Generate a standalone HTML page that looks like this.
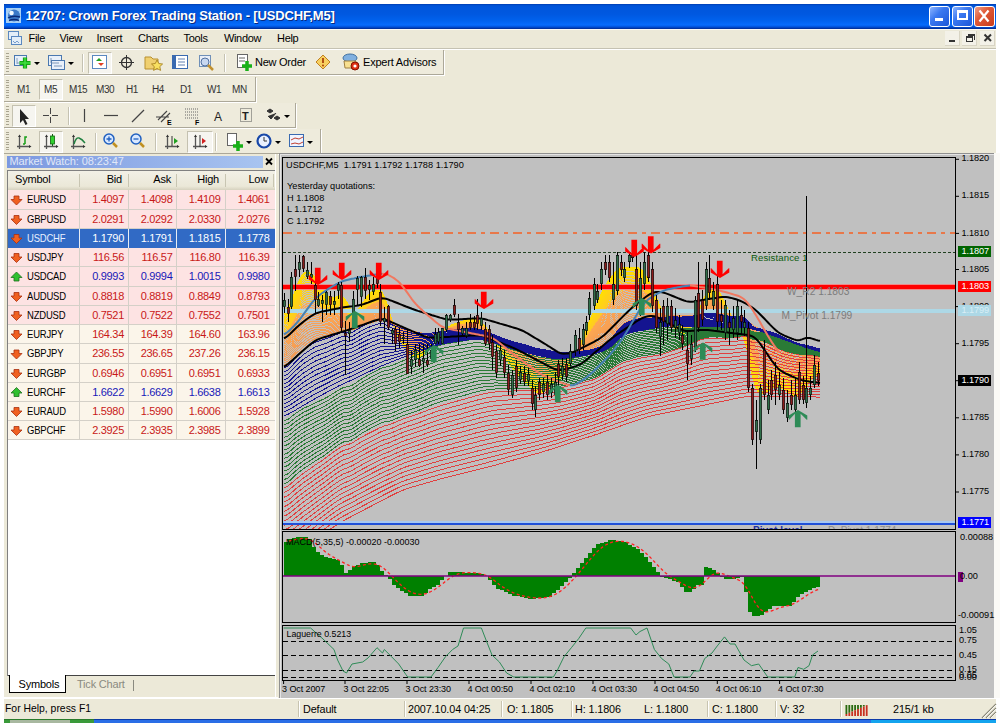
<!DOCTYPE html><html><head><meta charset="utf-8"><style>
*{margin:0;padding:0;box-sizing:border-box}
html,body{width:1000px;height:723px;overflow:hidden;background:#fff;font-family:"Liberation Sans",sans-serif;font-size:11px;color:#000}
.a{position:absolute}
.t{position:absolute;white-space:nowrap;line-height:1;-webkit-font-smoothing:none}
svg{position:absolute;left:0;top:0}
</style></head><body>
<div class="a" style="left:4px;top:4px;width:992px;height:715px;background:#ece9d8"></div>
<div class="a" style="left:4px;top:4px;width:992px;height:25px;background:linear-gradient(to bottom,#0038a8 0px,#0050d0 1px,#0056dc 3px,#0058e0 10px,#0062ee 17px,#066cfc 21px,#0050d8 23px,#00288c 25px)"></div>
<div class="a" style="left:4px;top:29px;width:992px;height:1px;background:#fbfaf4"></div>
<svg width="30" height="30"><rect x="6" y="8" width="15" height="15" fill="#a8d0f4"/><circle cx="14" cy="15.5" r="6" fill="#3a78c8"/><circle cx="11.5" cy="13" r="2.3" fill="#f0f8ff"/><path d="M8,18 q5,-3 12,-1 M9,20.5 q5,-2 10,0" stroke="#0a2a78" stroke-width="1.4" fill="none"/></svg>
<div class="t" style="left:25.5px;top:9.0px;font-size:13px;color:#fff;font-weight:bold;letter-spacing:-0.15px;text-shadow:1px 1px 0 #0a2a80">12707: Crown Forex Trading Station - [USDCHF,M5]</div>
<div class="a" style="left:929px;top:6px;width:21px;height:21px;background:linear-gradient(135deg,#8cb4ff 0%,#3a78f0 40%,#1c56d8 100%);border:1px solid #fff;border-radius:3px"></div>
<div class="a" style="left:952px;top:6px;width:21px;height:21px;background:linear-gradient(135deg,#8cb4ff 0%,#3a78f0 40%,#1c56d8 100%);border:1px solid #fff;border-radius:3px"></div>
<div class="a" style="left:974px;top:6px;width:21px;height:21px;background:linear-gradient(135deg,#f0a088 0%,#e05a38 40%,#c83c1c 100%);border:1px solid #fff;border-radius:3px"></div>
<div class="a" style="left:935px;top:18px;width:8px;height:3px;background:#fff"></div>
<div class="a" style="left:957px;top:10px;width:11px;height:10px;border:2px solid #fff;border-top-width:3px"></div>
<svg width="1000" height="30" style="left:0;top:0"><path d="M979.5,10.5 L988.5,21.5 M988.5,10.5 L979.5,21.5" stroke="#fff" stroke-width="2.2"/></svg>
<div class="a" style="left:4px;top:30px;width:992px;height:18px;background:#ece9d8"></div>
<svg width="30" height="50"><rect x="8.5" y="31.5" width="10" height="8" fill="#e4eef8" stroke="#5a88c0"/><rect x="11.5" y="36.5" width="10" height="8" fill="#e4eef8" stroke="#5a88c0"/><path d="M13,41 l2,2 2,-2 2,2" stroke="#5a88c0" fill="none" stroke-width="0.8"/></svg>
<div class="t" style="left:28.5px;top:32.5px;font-size:11px;color:#000;letter-spacing:-0.3px">File</div>
<div class="t" style="left:59.5px;top:32.5px;font-size:11px;color:#000;letter-spacing:-0.3px">View</div>
<div class="t" style="left:96.5px;top:32.5px;font-size:11px;color:#000;letter-spacing:-0.3px">Insert</div>
<div class="t" style="left:138.1px;top:32.5px;font-size:11px;color:#000;letter-spacing:-0.3px">Charts</div>
<div class="t" style="left:183.5px;top:32.5px;font-size:11px;color:#000;letter-spacing:-0.3px">Tools</div>
<div class="t" style="left:223.9px;top:32.5px;font-size:11px;color:#000;letter-spacing:-0.3px">Window</div>
<div class="t" style="left:277.0px;top:32.5px;font-size:11px;color:#000;letter-spacing:-0.3px">Help</div>
<div class="a" style="left:945px;top:31px;width:15px;height:15px;background:#f3f1e8;border-right:1px solid #d8d4c4;border-bottom:1px solid #d8d4c4"></div>
<div class="a" style="left:962px;top:31px;width:15px;height:15px;background:#f3f1e8;border-right:1px solid #d8d4c4;border-bottom:1px solid #d8d4c4"></div>
<div class="a" style="left:980px;top:31px;width:15px;height:15px;background:#f3f1e8;border-right:1px solid #d8d4c4;border-bottom:1px solid #d8d4c4"></div>
<div class="a" style="left:949px;top:40px;width:6px;height:2px;background:#333"></div>
<div class="a" style="left:966px;top:36px;width:7px;height:6px;border:1px solid #333;border-top-width:2px"></div>
<div class="a" style="left:968px;top:34px;width:7px;height:6px;border:1px solid #333;border-top-width:2px;border-left:none;border-bottom:none"></div>
<svg width="1000" height="50"><path d="M984.5,34.5 L991,41 M991,34.5 L984.5,41" stroke="#333" stroke-width="2"/></svg>
<div class="a" style="left:4px;top:48px;width:992px;height:1px;background:#c5c2b2"></div>
<div class="a" style="left:4px;top:49px;width:992px;height:1px;background:#fff"></div>
<div class="a" style="left:4px;top:50px;width:440px;height:25px;background:#eeebdc;border-right:1px solid #aca899;border-bottom:1px solid #aca899;box-shadow:1px 1px 0 #fff"></div><div class="a" style="left:6px;top:53px;width:3px;height:19px;background:repeating-linear-gradient(to bottom,#a8a490 0 1px,transparent 1px 2.5px)"></div>
<div class="a" style="left:4px;top:77px;width:252px;height:25px;background:#eeebdc;border-right:1px solid #aca899;border-bottom:1px solid #aca899;box-shadow:1px 1px 0 #fff"></div><div class="a" style="left:6px;top:80px;width:3px;height:19px;background:repeating-linear-gradient(to bottom,#a8a490 0 1px,transparent 1px 2.5px)"></div>
<div class="a" style="left:4px;top:103px;width:292px;height:25px;background:#eeebdc;border-right:1px solid #aca899;border-bottom:1px solid #aca899;box-shadow:1px 1px 0 #fff"></div><div class="a" style="left:6px;top:106px;width:3px;height:19px;background:repeating-linear-gradient(to bottom,#a8a490 0 1px,transparent 1px 2.5px)"></div>
<div class="a" style="left:4px;top:129px;width:317px;height:25px;background:#eeebdc;border-right:1px solid #aca899;border-bottom:1px solid #aca899;box-shadow:1px 1px 0 #fff"></div><div class="a" style="left:6px;top:132px;width:3px;height:19px;background:repeating-linear-gradient(to bottom,#a8a490 0 1px,transparent 1px 2.5px)"></div>
<div class="a" style="left:88px;top:52px;width:24px;height:22px;background:#f6f5f0;border:1px solid #c4c1b0;border-right-color:#fff;border-bottom-color:#fff"></div>
<svg width="1000" height="160"><rect x="14.5" y="55.5" width="12" height="10" fill="#e8f0fa" stroke="#4a78b0"/><path d="M17,58 v6 M17,63 h6" stroke="#7090b0" stroke-width="0.8" fill="none"/><path d="M19.5,63 h11 M25,57.5 v11" stroke="#14a814" stroke-width="4.2"/><path d="M20,63 h10 M25,58 v10" stroke="#40e040" stroke-width="1.5"/><path d="M34,62 h6 l-3,3z" fill="#000"/><rect x="48.5" y="55.5" width="13" height="10" fill="#e8f0fa" stroke="#4a78b0"/><rect x="51.5" y="60.5" width="13" height="9" fill="#e8f0fa" stroke="#4a78b0"/><path d="M51,58 v5 h8 M54,66 h8" stroke="#6080a8" stroke-width="0.8" fill="none"/><path d="M68,62 h6 l-3,3z" fill="#000"/><rect x="92.5" y="55.5" width="14" height="13" fill="#fff" stroke="#5a88c0"/><path d="M96,61 l3,-3 l3,3z" fill="#20a020"/><path d="M98,63 l3,3 l3,-3z" fill="#e04020"/><circle cx="126.5" cy="62.5" r="5" fill="none" stroke="#333" stroke-width="1.3"/><path d="M126.5,55 v15 M119,62.5 h15" stroke="#333"/><path d="M145,57 h6 l2,2 h5 v10 h-13z" fill="#f0d070" stroke="#b89030"/><path d="M157,60 l1.8,3.5 3.8,0.5 -2.8,2.6 0.8,3.8 -3.6,-1.9 -3.4,1.9 0.7,-3.8 -2.8,-2.6 3.8,-0.5z" fill="#f8e060" stroke="#a07818" stroke-width="0.8"/><rect x="172.5" y="55.5" width="15" height="13" fill="#fff" stroke="#3a6ab0"/><rect x="173" y="56" width="3" height="12" fill="#3a6ab0"/><path d="M178,59 h7 M178,62 h7 M178,65 h7" stroke="#6080b0"/><rect x="199.5" y="55.5" width="11" height="11" fill="#e8eef8" stroke="#7090b8"/><circle cx="205" cy="62" r="4" fill="#c8d8f0" stroke="#5070a0"/><path d="M208,65 l5,5" stroke="#c09030" stroke-width="2.5"/><rect x="237.5" y="54.5" width="10" height="13" fill="#fff" stroke="#666"/><path d="M239,58 h6 M239,61 h6" stroke="#666"/><path d="M242,66 h10 M247,61 v10" stroke="#18b018" stroke-width="3.5"/><path d="M323,55 l7,7 -7,7 -7,-7z" fill="#f8d060" stroke="#c08020"/><path d="M323,58 v5" stroke="#a03000" stroke-width="1.6"/><circle cx="323" cy="65.5" r="0.9" fill="#a03000"/><ellipse cx="350" cy="58" rx="7" ry="4" fill="#80b0e0" stroke="#4070a0"/><path d="M344,61 h12 l-1,7 h-10z" fill="#f8e090" stroke="#a08040"/><circle cx="355" cy="66" r="4" fill="#e03010" stroke="#801000"/><circle cx="355" cy="66" r="1.6" fill="#fff"/></svg>
<div class="a" style="left:82px;top:54px;width:1px;height:18px;background:#c5c2b2;border-right:1px solid #fff;width:2px"></div>
<div class="a" style="left:224px;top:54px;width:1px;height:18px;background:#c5c2b2;border-right:1px solid #fff;width:2px"></div>
<div class="t" style="left:255px;top:57.0px;font-size:11px;color:#000;letter-spacing:-0.25px">New Order</div>
<div class="t" style="left:363px;top:57.0px;font-size:11px;color:#000;letter-spacing:-0.2px">Expert Advisors</div>
<div class="a" style="left:39px;top:79px;width:24px;height:21px;background:#f6f5f0;border:1px solid #c4c1b0;border-right-color:#fff;border-bottom-color:#fff"></div>
<div class="t" style="left:17px;top:84.5px;font-size:10px;color:#333;letter-spacing:-0.4px">M1</div>
<div class="t" style="left:44px;top:84.5px;font-size:10px;color:#333;letter-spacing:-0.4px">M5</div>
<div class="t" style="left:69px;top:84.5px;font-size:10px;color:#333;letter-spacing:-0.4px">M15</div>
<div class="t" style="left:96px;top:84.5px;font-size:10px;color:#333;letter-spacing:-0.4px">M30</div>
<div class="t" style="left:126px;top:84.5px;font-size:10px;color:#333;letter-spacing:-0.4px">H1</div>
<div class="t" style="left:152px;top:84.5px;font-size:10px;color:#333;letter-spacing:-0.4px">H4</div>
<div class="t" style="left:180px;top:84.5px;font-size:10px;color:#333;letter-spacing:-0.4px">D1</div>
<div class="t" style="left:207px;top:84.5px;font-size:10px;color:#333;letter-spacing:-0.4px">W1</div>
<div class="t" style="left:232px;top:84.5px;font-size:10px;color:#333;letter-spacing:-0.4px">MN</div>
<div class="a" style="left:12px;top:105px;width:24px;height:22px;background:#f6f5f0;border:1px solid #c4c1b0;border-right-color:#fff;border-bottom-color:#fff"></div>
<svg width="1000" height="160"><path d="M20,109 v14 l3,-3 l2.5,5 l2,-1 l-2.5,-5 h4z" fill="#222"/><path d="M50.5,108 v6 M50.5,117 v6 M43,115.5 h6 M52,115.5 h6" stroke="#444"/><path d="M84.5,109 v13" stroke="#444" stroke-width="1.2"/><path d="M104,115.5 h14" stroke="#444" stroke-width="1.2"/><path d="M132,122 l12,-12" stroke="#444" stroke-width="1.2"/><path d="M158,120 l9,-9 M161,122 l9,-9 M156,117 l13,0" stroke="#444" stroke-width="1.1"/><text x="167" y="125" font-size="7" font-family="Liberation Sans" font-weight="bold">E</text><path d="M185,109 h13 M185,112 h13 M185,115 h13 M185,118 h13" stroke="#666" stroke-dasharray="1,1"/><text x="195" y="125" font-size="7" font-family="Liberation Sans" font-weight="bold">F</text><text x="214" y="121" font-size="12" font-family="Liberation Sans" fill="#222">A</text><rect x="240.5" y="108.5" width="11" height="13" fill="none" stroke="#555" stroke-dasharray="1,1"/><text x="242" y="120" font-size="11" font-weight="bold" font-family="Liberation Sans" fill="#222">T</text><path d="M267,111 l3,-2 3,2 -3,2z M274,118 l3,-2 3,2 -3,2z M268,116 l3,3 5,-6" fill="#333" stroke="#333"/><path d="M284,115 h6 l-3,3z" fill="#000"/></svg>
<div class="a" style="left:68px;top:107px;width:1px;height:18px;background:#c5c2b2;border-right:1px solid #fff;width:2px"></div>
<div class="a" style="left:39px;top:131px;width:24px;height:22px;background:#f6f5f0;border:1px solid #c4c1b0;border-right-color:#fff;border-bottom-color:#fff"></div>
<div class="a" style="left:187px;top:131px;width:26px;height:22px;background:#f6f5f0;border:1px solid #c4c1b0;border-right-color:#fff;border-bottom-color:#fff"></div>
<svg width="1000" height="160"><path d="M19.5,136 v13 M17,146.5 h13" stroke="#555" stroke-width="1.3" fill="none"/><path d="M18,137 l1.5,-2.5 1.5,2.5z M29,145 l2.5,1.5 -2.5,1.5z" fill="#333"/><path d="M25,144 v-7 h2 M25,144 h-2" stroke="#18a018" stroke-width="1.5" fill="none"/><path d="M46.5,136 v13 M44,146.5 h13" stroke="#555" stroke-width="1.3" fill="none"/><path d="M45,137 l1.5,-2.5 1.5,2.5z M56,145 l2.5,1.5 -2.5,1.5z" fill="#333"/><path d="M52.5,134 v12" stroke="#106010"/><rect x="50.5" y="136" width="4" height="8" fill="#30d030" stroke="#106010" stroke-width="0.8"/><path d="M73.5,136 v13 M71,146.5 h13" stroke="#555" stroke-width="1.3" fill="none"/><path d="M72,137 l1.5,-2.5 1.5,2.5z M83,145 l2.5,1.5 -2.5,1.5z" fill="#333"/><path d="M74,144 q2,-7 5,-6 q3,1 6,5" stroke="#208040" fill="none" stroke-width="1.4"/><circle cx="109" cy="139" r="5" fill="#d8e8ff" stroke="#2060c0" stroke-width="1.5"/><path d="M106.5,139 h5 M109,136.5 v5" stroke="#2060c0" stroke-width="1.3"/><path d="M113,143 l4,4" stroke="#c09020" stroke-width="2.5"/><circle cx="136" cy="139" r="5" fill="#d8e8ff" stroke="#2060c0" stroke-width="1.5"/><path d="M133.5,139 h5" stroke="#2060c0" stroke-width="1.3"/><path d="M140,143 l4,4" stroke="#c09020" stroke-width="2.5"/><path d="M167.5,136 v13 M165,146.5 h13" stroke="#555" stroke-width="1.3" fill="none"/><path d="M166,137 l1.5,-2.5 1.5,2.5z M177,145 l2.5,1.5 -2.5,1.5z" fill="#333"/><path d="M172,136 v10" stroke="#333"/><path d="M174,138 l4,3 -4,3z" fill="#20a020"/><path d="M195.5,136 v13 M193,146.5 h13" stroke="#555" stroke-width="1.3" fill="none"/><path d="M194,137 l1.5,-2.5 1.5,2.5z M205,145 l2.5,1.5 -2.5,1.5z" fill="#333"/><path d="M200,135 v12" stroke="#333"/><path d="M202,138 l4,3 -4,3z" fill="#d02020"/><rect x="227.5" y="133.5" width="9" height="12" fill="#fff" stroke="#666"/><path d="M233,146 h10 M238,141 v10" stroke="#18b018" stroke-width="3.5"/><path d="M246,141 h6 l-3,3z" fill="#000"/><circle cx="264" cy="141" r="6.5" fill="#e8f0ff" stroke="#1848a8" stroke-width="2.2"/><path d="M264,137 v4 h3" stroke="#333" fill="none"/><path d="M275,141 h6 l-3,3z" fill="#000"/><rect x="289.5" y="134.5" width="14" height="12" fill="#f0f4ff" stroke="#3a6ab0"/><path d="M291,140 l4,-2 4,1 4,-2 M291,144 l4,-1 4,1 4,-2" stroke="#c04030" fill="none"/><path d="M307,141 h6 l-3,3z" fill="#000"/></svg>
<div class="a" style="left:95px;top:133px;width:1px;height:18px;background:#c5c2b2;border-right:1px solid #fff;width:2px"></div>
<div class="a" style="left:155px;top:133px;width:1px;height:18px;background:#c5c2b2;border-right:1px solid #fff;width:2px"></div>
<div class="a" style="left:215px;top:133px;width:1px;height:18px;background:#c5c2b2;border-right:1px solid #fff;width:2px"></div>
<div class="a" style="left:4px;top:154px;width:274px;height:544px;background:#ece9d8"></div>
<div class="a" style="left:7px;top:156px;width:256px;height:12px;background:linear-gradient(to right,#7b98e0,#a8c4f0)"></div>
<div class="t" style="left:9.5px;top:155.8px;font-size:11px;color:#e0e8f8;letter-spacing:-0.1px">Market Watch: 08:23:47</div>
<svg width="300" height="200"><path d="M266,158.5 l6,6 M272,158.5 l-6,6" stroke="#000" stroke-width="1.8"/></svg>
<div class="a" style="left:7px;top:170px;width:269px;height:506px;background:#fff;border-left:1px solid #808080;border-top:1px solid #808080"></div>
<div class="a" style="left:8px;top:171px;width:267px;height:19px;background:linear-gradient(to bottom,#f2f0e6,#ebe8d8 80%,#d6d2bf)"></div>
<div class="a" style="left:79px;top:174px;width:1px;height:13px;background:#c8c5b2"></div>
<div class="a" style="left:128px;top:174px;width:1px;height:13px;background:#c8c5b2"></div>
<div class="a" style="left:176px;top:174px;width:1px;height:13px;background:#c8c5b2"></div>
<div class="a" style="left:225px;top:174px;width:1px;height:13px;background:#c8c5b2"></div>
<div class="a" style="left:273px;top:174px;width:1px;height:13px;background:#c8c5b2"></div>
<div class="t" style="left:15px;top:173.6px;font-size:11px;color:#000;letter-spacing:-0.2px">Symbol</div>
<div class="t" style="left:62px;width:60px;text-align:right;top:173.6px;font-size:11px;letter-spacing:-0.2px">Bid</div>
<div class="t" style="left:111px;width:60px;text-align:right;top:173.6px;font-size:11px;letter-spacing:-0.2px">Ask</div>
<div class="t" style="left:159px;width:60px;text-align:right;top:173.6px;font-size:11px;letter-spacing:-0.2px">High</div>
<div class="t" style="left:208px;width:60px;text-align:right;top:173.6px;font-size:11px;letter-spacing:-0.2px">Low</div>
<div class="a" style="left:8px;top:190px;width:267px;height:20px;background:#fde3e3"></div>
<div class="a" style="left:8px;top:209px;width:267px;height:1px;background:#d4d0c8"></div>
<div class="a" style="left:79px;top:190px;width:1px;height:20px;background:#d4d0c8"></div>
<div class="a" style="left:128px;top:190px;width:1px;height:20px;background:#d4d0c8"></div>
<div class="a" style="left:176px;top:190px;width:1px;height:20px;background:#d4d0c8"></div>
<div class="a" style="left:225px;top:190px;width:1px;height:20px;background:#d4d0c8"></div>
<div class="t" style="left:26.5px;top:193.5px;font-size:11px;color:#000;letter-spacing:-0.2px;transform:scaleX(0.86);transform-origin:0 0">EURUSD</div>
<div class="t" style="left:74px;width:50px;text-align:right;top:193.5px;font-size:11px;color:#c81818;letter-spacing:-0.3px">1.4097</div>
<div class="t" style="left:122.5px;width:50px;text-align:right;top:193.5px;font-size:11px;color:#c81818;letter-spacing:-0.3px">1.4098</div>
<div class="t" style="left:170.5px;width:50px;text-align:right;top:193.5px;font-size:11px;color:#c81818;letter-spacing:-0.3px">1.4109</div>
<div class="t" style="left:219.5px;width:50px;text-align:right;top:193.5px;font-size:11px;color:#c81818;letter-spacing:-0.3px">1.4061</div>
<div class="a" style="left:8px;top:210px;width:267px;height:19px;background:#fde3e3"></div>
<div class="a" style="left:8px;top:228px;width:267px;height:1px;background:#d4d0c8"></div>
<div class="a" style="left:79px;top:210px;width:1px;height:19px;background:#d4d0c8"></div>
<div class="a" style="left:128px;top:210px;width:1px;height:19px;background:#d4d0c8"></div>
<div class="a" style="left:176px;top:210px;width:1px;height:19px;background:#d4d0c8"></div>
<div class="a" style="left:225px;top:210px;width:1px;height:19px;background:#d4d0c8"></div>
<div class="t" style="left:26.5px;top:213.5px;font-size:11px;color:#000;letter-spacing:-0.2px;transform:scaleX(0.86);transform-origin:0 0">GBPUSD</div>
<div class="t" style="left:74px;width:50px;text-align:right;top:213.5px;font-size:11px;color:#c81818;letter-spacing:-0.3px">2.0291</div>
<div class="t" style="left:122.5px;width:50px;text-align:right;top:213.5px;font-size:11px;color:#c81818;letter-spacing:-0.3px">2.0292</div>
<div class="t" style="left:170.5px;width:50px;text-align:right;top:213.5px;font-size:11px;color:#c81818;letter-spacing:-0.3px">2.0330</div>
<div class="t" style="left:219.5px;width:50px;text-align:right;top:213.5px;font-size:11px;color:#c81818;letter-spacing:-0.3px">2.0276</div>
<div class="a" style="left:8px;top:229px;width:267px;height:19px;background:#316ac5"></div>
<div class="a" style="left:79px;top:229px;width:1px;height:19px;background:#e8ecf4"></div>
<div class="a" style="left:128px;top:229px;width:1px;height:19px;background:#e8ecf4"></div>
<div class="a" style="left:176px;top:229px;width:1px;height:19px;background:#e8ecf4"></div>
<div class="a" style="left:225px;top:229px;width:1px;height:19px;background:#e8ecf4"></div>
<div class="t" style="left:26.5px;top:232.5px;font-size:11px;color:#e8f0ff;letter-spacing:-0.2px;transform:scaleX(0.86);transform-origin:0 0">USDCHF</div>
<div class="t" style="left:74px;width:50px;text-align:right;top:232.5px;font-size:11px;color:#fff;letter-spacing:-0.3px">1.1790</div>
<div class="t" style="left:122.5px;width:50px;text-align:right;top:232.5px;font-size:11px;color:#fff;letter-spacing:-0.3px">1.1791</div>
<div class="t" style="left:170.5px;width:50px;text-align:right;top:232.5px;font-size:11px;color:#fff;letter-spacing:-0.3px">1.1815</div>
<div class="t" style="left:219.5px;width:50px;text-align:right;top:232.5px;font-size:11px;color:#fff;letter-spacing:-0.3px">1.1778</div>
<div class="a" style="left:8px;top:248px;width:267px;height:19px;background:#fde3e3"></div>
<div class="a" style="left:8px;top:266px;width:267px;height:1px;background:#d4d0c8"></div>
<div class="a" style="left:79px;top:248px;width:1px;height:19px;background:#d4d0c8"></div>
<div class="a" style="left:128px;top:248px;width:1px;height:19px;background:#d4d0c8"></div>
<div class="a" style="left:176px;top:248px;width:1px;height:19px;background:#d4d0c8"></div>
<div class="a" style="left:225px;top:248px;width:1px;height:19px;background:#d4d0c8"></div>
<div class="t" style="left:26.5px;top:251.5px;font-size:11px;color:#000;letter-spacing:-0.2px;transform:scaleX(0.86);transform-origin:0 0">USDJPY</div>
<div class="t" style="left:74px;width:50px;text-align:right;top:251.5px;font-size:11px;color:#c81818;letter-spacing:-0.3px">116.56</div>
<div class="t" style="left:122.5px;width:50px;text-align:right;top:251.5px;font-size:11px;color:#c81818;letter-spacing:-0.3px">116.57</div>
<div class="t" style="left:170.5px;width:50px;text-align:right;top:251.5px;font-size:11px;color:#c81818;letter-spacing:-0.3px">116.80</div>
<div class="t" style="left:219.5px;width:50px;text-align:right;top:251.5px;font-size:11px;color:#c81818;letter-spacing:-0.3px">116.39</div>
<div class="a" style="left:8px;top:267px;width:267px;height:20px;background:#fde3e3"></div>
<div class="a" style="left:8px;top:286px;width:267px;height:1px;background:#d4d0c8"></div>
<div class="a" style="left:79px;top:267px;width:1px;height:20px;background:#d4d0c8"></div>
<div class="a" style="left:128px;top:267px;width:1px;height:20px;background:#d4d0c8"></div>
<div class="a" style="left:176px;top:267px;width:1px;height:20px;background:#d4d0c8"></div>
<div class="a" style="left:225px;top:267px;width:1px;height:20px;background:#d4d0c8"></div>
<div class="t" style="left:26.5px;top:270.5px;font-size:11px;color:#000;letter-spacing:-0.2px;transform:scaleX(0.86);transform-origin:0 0">USDCAD</div>
<div class="t" style="left:74px;width:50px;text-align:right;top:270.5px;font-size:11px;color:#1818b8;letter-spacing:-0.3px">0.9993</div>
<div class="t" style="left:122.5px;width:50px;text-align:right;top:270.5px;font-size:11px;color:#1818b8;letter-spacing:-0.3px">0.9994</div>
<div class="t" style="left:170.5px;width:50px;text-align:right;top:270.5px;font-size:11px;color:#1818b8;letter-spacing:-0.3px">1.0015</div>
<div class="t" style="left:219.5px;width:50px;text-align:right;top:270.5px;font-size:11px;color:#1818b8;letter-spacing:-0.3px">0.9980</div>
<div class="a" style="left:8px;top:287px;width:267px;height:19px;background:#fde3e3"></div>
<div class="a" style="left:8px;top:305px;width:267px;height:1px;background:#d4d0c8"></div>
<div class="a" style="left:79px;top:287px;width:1px;height:19px;background:#d4d0c8"></div>
<div class="a" style="left:128px;top:287px;width:1px;height:19px;background:#d4d0c8"></div>
<div class="a" style="left:176px;top:287px;width:1px;height:19px;background:#d4d0c8"></div>
<div class="a" style="left:225px;top:287px;width:1px;height:19px;background:#d4d0c8"></div>
<div class="t" style="left:26.5px;top:290.5px;font-size:11px;color:#000;letter-spacing:-0.2px;transform:scaleX(0.86);transform-origin:0 0">AUDUSD</div>
<div class="t" style="left:74px;width:50px;text-align:right;top:290.5px;font-size:11px;color:#c81818;letter-spacing:-0.3px">0.8818</div>
<div class="t" style="left:122.5px;width:50px;text-align:right;top:290.5px;font-size:11px;color:#c81818;letter-spacing:-0.3px">0.8819</div>
<div class="t" style="left:170.5px;width:50px;text-align:right;top:290.5px;font-size:11px;color:#c81818;letter-spacing:-0.3px">0.8849</div>
<div class="t" style="left:219.5px;width:50px;text-align:right;top:290.5px;font-size:11px;color:#c81818;letter-spacing:-0.3px">0.8793</div>
<div class="a" style="left:8px;top:306px;width:267px;height:19px;background:#fde3e3"></div>
<div class="a" style="left:8px;top:324px;width:267px;height:1px;background:#d4d0c8"></div>
<div class="a" style="left:79px;top:306px;width:1px;height:19px;background:#d4d0c8"></div>
<div class="a" style="left:128px;top:306px;width:1px;height:19px;background:#d4d0c8"></div>
<div class="a" style="left:176px;top:306px;width:1px;height:19px;background:#d4d0c8"></div>
<div class="a" style="left:225px;top:306px;width:1px;height:19px;background:#d4d0c8"></div>
<div class="t" style="left:26.5px;top:309.5px;font-size:11px;color:#000;letter-spacing:-0.2px;transform:scaleX(0.86);transform-origin:0 0">NZDUSD</div>
<div class="t" style="left:74px;width:50px;text-align:right;top:309.5px;font-size:11px;color:#c81818;letter-spacing:-0.3px">0.7521</div>
<div class="t" style="left:122.5px;width:50px;text-align:right;top:309.5px;font-size:11px;color:#c81818;letter-spacing:-0.3px">0.7522</div>
<div class="t" style="left:170.5px;width:50px;text-align:right;top:309.5px;font-size:11px;color:#c81818;letter-spacing:-0.3px">0.7552</div>
<div class="t" style="left:219.5px;width:50px;text-align:right;top:309.5px;font-size:11px;color:#c81818;letter-spacing:-0.3px">0.7501</div>
<div class="a" style="left:8px;top:325px;width:267px;height:19px;background:#fbf5ea"></div>
<div class="a" style="left:8px;top:343px;width:267px;height:1px;background:#d4d0c8"></div>
<div class="a" style="left:79px;top:325px;width:1px;height:19px;background:#d4d0c8"></div>
<div class="a" style="left:128px;top:325px;width:1px;height:19px;background:#d4d0c8"></div>
<div class="a" style="left:176px;top:325px;width:1px;height:19px;background:#d4d0c8"></div>
<div class="a" style="left:225px;top:325px;width:1px;height:19px;background:#d4d0c8"></div>
<div class="t" style="left:26.5px;top:328.5px;font-size:11px;color:#000;letter-spacing:-0.2px;transform:scaleX(0.86);transform-origin:0 0">EURJPY</div>
<div class="t" style="left:74px;width:50px;text-align:right;top:328.5px;font-size:11px;color:#c81818;letter-spacing:-0.3px">164.34</div>
<div class="t" style="left:122.5px;width:50px;text-align:right;top:328.5px;font-size:11px;color:#c81818;letter-spacing:-0.3px">164.39</div>
<div class="t" style="left:170.5px;width:50px;text-align:right;top:328.5px;font-size:11px;color:#c81818;letter-spacing:-0.3px">164.60</div>
<div class="t" style="left:219.5px;width:50px;text-align:right;top:328.5px;font-size:11px;color:#c81818;letter-spacing:-0.3px">163.96</div>
<div class="a" style="left:8px;top:344px;width:267px;height:20px;background:#fbf5ea"></div>
<div class="a" style="left:8px;top:363px;width:267px;height:1px;background:#d4d0c8"></div>
<div class="a" style="left:79px;top:344px;width:1px;height:20px;background:#d4d0c8"></div>
<div class="a" style="left:128px;top:344px;width:1px;height:20px;background:#d4d0c8"></div>
<div class="a" style="left:176px;top:344px;width:1px;height:20px;background:#d4d0c8"></div>
<div class="a" style="left:225px;top:344px;width:1px;height:20px;background:#d4d0c8"></div>
<div class="t" style="left:26.5px;top:347.5px;font-size:11px;color:#000;letter-spacing:-0.2px;transform:scaleX(0.86);transform-origin:0 0">GBPJPY</div>
<div class="t" style="left:74px;width:50px;text-align:right;top:347.5px;font-size:11px;color:#c81818;letter-spacing:-0.3px">236.55</div>
<div class="t" style="left:122.5px;width:50px;text-align:right;top:347.5px;font-size:11px;color:#c81818;letter-spacing:-0.3px">236.65</div>
<div class="t" style="left:170.5px;width:50px;text-align:right;top:347.5px;font-size:11px;color:#c81818;letter-spacing:-0.3px">237.26</div>
<div class="t" style="left:219.5px;width:50px;text-align:right;top:347.5px;font-size:11px;color:#c81818;letter-spacing:-0.3px">236.15</div>
<div class="a" style="left:8px;top:364px;width:267px;height:19px;background:#fbf5ea"></div>
<div class="a" style="left:8px;top:382px;width:267px;height:1px;background:#d4d0c8"></div>
<div class="a" style="left:79px;top:364px;width:1px;height:19px;background:#d4d0c8"></div>
<div class="a" style="left:128px;top:364px;width:1px;height:19px;background:#d4d0c8"></div>
<div class="a" style="left:176px;top:364px;width:1px;height:19px;background:#d4d0c8"></div>
<div class="a" style="left:225px;top:364px;width:1px;height:19px;background:#d4d0c8"></div>
<div class="t" style="left:26.5px;top:367.5px;font-size:11px;color:#000;letter-spacing:-0.2px;transform:scaleX(0.86);transform-origin:0 0">EURGBP</div>
<div class="t" style="left:74px;width:50px;text-align:right;top:367.5px;font-size:11px;color:#c81818;letter-spacing:-0.3px">0.6946</div>
<div class="t" style="left:122.5px;width:50px;text-align:right;top:367.5px;font-size:11px;color:#c81818;letter-spacing:-0.3px">0.6951</div>
<div class="t" style="left:170.5px;width:50px;text-align:right;top:367.5px;font-size:11px;color:#c81818;letter-spacing:-0.3px">0.6951</div>
<div class="t" style="left:219.5px;width:50px;text-align:right;top:367.5px;font-size:11px;color:#c81818;letter-spacing:-0.3px">0.6933</div>
<div class="a" style="left:8px;top:383px;width:267px;height:19px;background:#fbf5ea"></div>
<div class="a" style="left:8px;top:401px;width:267px;height:1px;background:#d4d0c8"></div>
<div class="a" style="left:79px;top:383px;width:1px;height:19px;background:#d4d0c8"></div>
<div class="a" style="left:128px;top:383px;width:1px;height:19px;background:#d4d0c8"></div>
<div class="a" style="left:176px;top:383px;width:1px;height:19px;background:#d4d0c8"></div>
<div class="a" style="left:225px;top:383px;width:1px;height:19px;background:#d4d0c8"></div>
<div class="t" style="left:26.5px;top:386.5px;font-size:11px;color:#000;letter-spacing:-0.2px;transform:scaleX(0.86);transform-origin:0 0">EURCHF</div>
<div class="t" style="left:74px;width:50px;text-align:right;top:386.5px;font-size:11px;color:#1818b8;letter-spacing:-0.3px">1.6622</div>
<div class="t" style="left:122.5px;width:50px;text-align:right;top:386.5px;font-size:11px;color:#1818b8;letter-spacing:-0.3px">1.6629</div>
<div class="t" style="left:170.5px;width:50px;text-align:right;top:386.5px;font-size:11px;color:#1818b8;letter-spacing:-0.3px">1.6638</div>
<div class="t" style="left:219.5px;width:50px;text-align:right;top:386.5px;font-size:11px;color:#1818b8;letter-spacing:-0.3px">1.6613</div>
<div class="a" style="left:8px;top:402px;width:267px;height:19px;background:#fbf5ea"></div>
<div class="a" style="left:8px;top:420px;width:267px;height:1px;background:#d4d0c8"></div>
<div class="a" style="left:79px;top:402px;width:1px;height:19px;background:#d4d0c8"></div>
<div class="a" style="left:128px;top:402px;width:1px;height:19px;background:#d4d0c8"></div>
<div class="a" style="left:176px;top:402px;width:1px;height:19px;background:#d4d0c8"></div>
<div class="a" style="left:225px;top:402px;width:1px;height:19px;background:#d4d0c8"></div>
<div class="t" style="left:26.5px;top:405.5px;font-size:11px;color:#000;letter-spacing:-0.2px;transform:scaleX(0.86);transform-origin:0 0">EURAUD</div>
<div class="t" style="left:74px;width:50px;text-align:right;top:405.5px;font-size:11px;color:#c81818;letter-spacing:-0.3px">1.5980</div>
<div class="t" style="left:122.5px;width:50px;text-align:right;top:405.5px;font-size:11px;color:#c81818;letter-spacing:-0.3px">1.5990</div>
<div class="t" style="left:170.5px;width:50px;text-align:right;top:405.5px;font-size:11px;color:#c81818;letter-spacing:-0.3px">1.6006</div>
<div class="t" style="left:219.5px;width:50px;text-align:right;top:405.5px;font-size:11px;color:#c81818;letter-spacing:-0.3px">1.5928</div>
<div class="a" style="left:8px;top:421px;width:267px;height:19px;background:#fbf5ea"></div>
<div class="a" style="left:8px;top:439px;width:267px;height:1px;background:#d4d0c8"></div>
<div class="a" style="left:79px;top:421px;width:1px;height:19px;background:#d4d0c8"></div>
<div class="a" style="left:128px;top:421px;width:1px;height:19px;background:#d4d0c8"></div>
<div class="a" style="left:176px;top:421px;width:1px;height:19px;background:#d4d0c8"></div>
<div class="a" style="left:225px;top:421px;width:1px;height:19px;background:#d4d0c8"></div>
<div class="t" style="left:26.5px;top:424.5px;font-size:11px;color:#000;letter-spacing:-0.2px;transform:scaleX(0.86);transform-origin:0 0">GBPCHF</div>
<div class="t" style="left:74px;width:50px;text-align:right;top:424.5px;font-size:11px;color:#c81818;letter-spacing:-0.3px">2.3925</div>
<div class="t" style="left:122.5px;width:50px;text-align:right;top:424.5px;font-size:11px;color:#c81818;letter-spacing:-0.3px">2.3935</div>
<div class="t" style="left:170.5px;width:50px;text-align:right;top:424.5px;font-size:11px;color:#c81818;letter-spacing:-0.3px">2.3985</div>
<div class="t" style="left:219.5px;width:50px;text-align:right;top:424.5px;font-size:11px;color:#c81818;letter-spacing:-0.3px">2.3899</div>
<svg width="300" height="500"><path d="M14,196.0 h5 v3.5 h3 l-5.5,5.5 -5.5,-5.5 h3z" fill="#f06020" stroke="#a83010" stroke-width="0.8"/><path d="M14,215.5 h5 v3.5 h3 l-5.5,5.5 -5.5,-5.5 h3z" fill="#f06020" stroke="#a83010" stroke-width="0.8"/><path d="M14,234.5 h5 v3.5 h3 l-5.5,5.5 -5.5,-5.5 h3z" fill="#f06020" stroke="#a83010" stroke-width="0.8"/><path d="M14,253.5 h5 v3.5 h3 l-5.5,5.5 -5.5,-5.5 h3z" fill="#f06020" stroke="#a83010" stroke-width="0.8"/><path d="M14,281.0 h5 v-3.5 h3 l-5.5,-5.5 -5.5,5.5 h3z" fill="#30c030" stroke="#207020" stroke-width="0.8"/><path d="M14,292.5 h5 v3.5 h3 l-5.5,5.5 -5.5,-5.5 h3z" fill="#f06020" stroke="#a83010" stroke-width="0.8"/><path d="M14,311.5 h5 v3.5 h3 l-5.5,5.5 -5.5,-5.5 h3z" fill="#f06020" stroke="#a83010" stroke-width="0.8"/><path d="M14,330.5 h5 v3.5 h3 l-5.5,5.5 -5.5,-5.5 h3z" fill="#f06020" stroke="#a83010" stroke-width="0.8"/><path d="M14,350.0 h5 v3.5 h3 l-5.5,5.5 -5.5,-5.5 h3z" fill="#f06020" stroke="#a83010" stroke-width="0.8"/><path d="M14,369.5 h5 v3.5 h3 l-5.5,5.5 -5.5,-5.5 h3z" fill="#f06020" stroke="#a83010" stroke-width="0.8"/><path d="M14,396.5 h5 v-3.5 h3 l-5.5,-5.5 -5.5,5.5 h3z" fill="#30c030" stroke="#207020" stroke-width="0.8"/><path d="M14,407.5 h5 v3.5 h3 l-5.5,5.5 -5.5,-5.5 h3z" fill="#f06020" stroke="#a83010" stroke-width="0.8"/><path d="M14,426.5 h5 v3.5 h3 l-5.5,5.5 -5.5,-5.5 h3z" fill="#f06020" stroke="#a83010" stroke-width="0.8"/></svg>
<div class="a" style="left:8px;top:675px;width:268px;height:1px;background:#444"></div>
<div class="a" style="left:8px;top:676px;width:268px;height:21px;background:#ece9d8"></div>
<div class="a" style="left:9px;top:675px;width:57px;height:18px;background:#fff;border-left:1px solid #000;border-bottom:1px solid #000;border-right:1px solid #000"></div>
<div class="t" style="left:18.5px;top:679.0px;font-size:11px;color:#000;letter-spacing:-0.2px">Symbols</div>
<div class="t" style="left:77px;top:679.0px;font-size:11px;color:#8a8a80;letter-spacing:-0.2px">Tick Chart</div>
<div class="a" style="left:133px;top:680px;width:1px;height:11px;background:#8a8a80"></div>
<div class="a" style="left:4px;top:697px;width:274px;height:1px;background:#fff"></div>
<div class="a" style="left:275px;top:154px;width:1px;height:543px;background:#fff"></div>
<div class="a" style="left:279px;top:153px;width:715px;height:545px;background:#c0c0c0"></div>
<div class="a" style="left:279px;top:153px;width:715px;height:1px;background:#909090"></div>
<div class="a" style="left:279px;top:153px;width:1px;height:545px;background:#909090"></div>
<div class="a" style="left:280px;top:154px;width:714px;height:1px;background:#e4e4e4"></div>
<div class="a" style="left:280px;top:154px;width:1px;height:544px;background:#e4e4e4"></div>
<div class="a" style="left:994px;top:153px;width:6px;height:545px;background:#fbfaf6"></div>
<svg width="1000" height="723"><defs><clipPath id="cm"><rect x="283" y="158" width="672" height="371"/></clipPath><clipPath id="cmacd"><rect x="283" y="532" width="672" height="90"/></clipPath></defs><rect x="282.5" y="157.5" width="673" height="372" fill="none" stroke="#000"/><rect x="282.5" y="531.5" width="673" height="91" fill="none" stroke="#000"/><rect x="282.5" y="625.5" width="673" height="55" fill="none" stroke="#000"/><line x1="283" y1="233" x2="955" y2="233" stroke="#e8784a" stroke-width="2" stroke-dasharray="9,5,4,5"/><line x1="283" y1="252.5" x2="955" y2="252.5" stroke="#204020" stroke-width="1" stroke-dasharray="3,2"/><g clip-path="url(#cm)" shape-rendering="crispEdges"><polyline points="284,310.3 286,309.2 288,307.2 290,303.8 292,299.4 294,294.1 296,288.6 298,283.5 300,279.0 302,275.6 304,273.3 306,272.2 308,272.1 310,272.8 312,274.2 314,276.2 316,278.7 318,281.6 320,284.9 322,288.2 324,291.3 326,293.9 328,295.8 330,297.0 332,297.5 334,297.4 336,296.9 338,296.2 340,295.8 342,296.3 344,297.9 346,300.8 348,304.4 350,308.0 352,310.6 354,311.8 356,311.5 358,309.8 360,307.2 362,304.1 364,300.9 366,297.9 368,295.3 370,293.1 372,291.4 374,290.1 376,289.3 378,289.2 380,290.1 382,292.2 384,296.0 386,301.1 388,307.3 390,314.0 392,320.5 394,326.5 396,331.8 398,336.4 400,340.4 402,343.8 404,346.9 406,349.5 408,351.9 410,353.9 412,355.5 414,356.7 416,357.3 418,357.4 420,356.9 422,355.7 424,354.0 426,351.7 428,349.2 430,346.5 432,343.7 434,341.0 436,338.4 438,336.0 440,333.7 442,331.7 444,329.9 446,328.4 448,327.0 450,325.8 452,324.8 454,324.0 456,323.2 458,322.6 460,321.9 462,321.3 464,320.8 466,320.3 468,319.8 470,319.5 472,319.3 474,319.2 476,319.5 478,320.2 480,321.3 482,322.9 484,325.1 486,327.6 488,330.4 490,333.5 492,336.7 494,339.9 496,343.2 498,346.5 500,349.7 502,352.9 504,356.1 506,359.1 508,362.1 510,364.9 512,367.6 514,370.1 516,372.4 518,374.6 520,376.6 522,378.6 524,380.6 526,382.7 528,384.8 530,387.1 532,389.3 534,391.3 536,392.7 538,393.4 540,393.4 542,392.6 544,391.3 546,389.7 548,388.1 550,386.5 552,384.9 554,383.5 556,382.0 558,380.5 560,378.9 562,376.9 564,374.6 566,371.9 568,368.9 570,365.6 572,362.1 574,358.4 576,354.4 578,350.0 580,345.2 582,340.2 584,335.0 586,329.8 588,324.8 590,319.9 592,315.1 594,310.3 596,305.7 598,301.1 600,296.7 602,292.5 604,288.5 606,284.9 608,281.5 610,278.6 612,275.9 614,273.6 616,271.6 618,269.9 620,268.6 622,267.9 624,267.5 626,267.5 628,267.6 630,267.6 632,267.6 634,267.5 636,267.5 638,267.8 640,268.8 642,270.4 644,272.7 646,275.7 648,279.2 650,283.2 652,287.5 654,292.0 656,296.8 658,301.5 660,306.0 662,310.1 664,313.9 666,317.2 668,320.1 670,322.8 672,325.4 674,327.8 676,329.9 678,331.7 680,333.0 682,333.6 684,333.5 686,332.7 688,331.1 690,328.7 692,325.6 694,321.8 696,317.4 698,312.6 700,307.6 702,302.7 704,298.1 706,294.1 708,290.9 710,288.6 712,287.5 714,287.5 716,288.6 718,290.6 720,293.4 722,296.7 724,300.6 726,304.8 728,309.1 730,313.2 732,317.2 734,320.7 736,323.9 738,327.0 740,330.1 742,333.9 744,339.1 746,345.9 748,354.6 750,364.3 752,373.8 754,382.0 756,388.1 758,391.9 760,393.6 762,394.0 764,393.5 766,392.5 768,391.2 770,389.9 772,388.6 774,387.6 776,387.0 778,387.0 780,387.4 782,388.3 784,389.5 786,390.8 788,392.2 790,393.5 792,394.5 794,395.3 796,395.5 798,395.0 800,393.9 802,392.1 804,389.8 806,387.0 808,384.1 810,381.3 812,379.0 814,377.3 816,376.2 818,375.6 820,375.4" fill="none" stroke="#ffdf01" stroke-width="1"/><polyline points="284,311.3 286,310.3 288,308.2 290,304.9 292,300.5 294,295.3 296,289.9 298,284.8 300,280.4 302,277.0 304,274.7 306,273.6 308,273.5 310,274.1 312,275.5 314,277.4 316,279.9 318,282.8 320,285.9 322,289.2 324,292.2 326,294.7 328,296.6 330,297.7 332,298.2 334,298.1 336,297.6 338,296.9 340,296.5 342,296.9 344,298.6 346,301.4 348,304.9 350,308.4 352,311.0 354,312.2 356,311.8 358,310.2 360,307.6 362,304.5 364,301.4 366,298.4 368,295.8 370,293.6 372,291.9 374,290.7 376,289.9 378,289.8 380,290.7 382,292.8 384,296.4 386,301.5 388,307.6 390,314.1 392,320.5 394,326.5 396,331.7 398,336.2 400,340.1 402,343.5 404,346.5 406,349.1 408,351.4 410,353.4 412,355.0 414,356.2 416,356.8 418,356.9 420,356.4 422,355.3 424,353.6 426,351.4 428,348.9 430,346.2 432,343.5 434,340.8 436,338.3 438,335.9 440,333.7 442,331.7 444,330.0 446,328.4 448,327.1 450,325.9 452,325.0 454,324.1 456,323.4 458,322.7 460,322.1 462,321.5 464,321.0 466,320.5 468,320.0 470,319.7 472,319.4 474,319.4 476,319.7 478,320.3 480,321.5 482,323.1 484,325.2 486,327.7 488,330.5 490,333.5 492,336.6 494,339.8 496,343.1 498,346.3 500,349.5 502,352.7 504,355.8 506,358.8 508,361.7 510,364.5 512,367.1 514,369.5 516,371.8 518,374.0 520,376.0 522,378.0 524,379.9 526,382.0 528,384.1 530,386.3 532,388.5 534,390.5 536,391.9 538,392.6 540,392.5 542,391.8 544,390.5 546,389.0 548,387.4 550,385.8 552,384.3 554,382.9 556,381.5 558,380.0 560,378.4 562,376.4 564,374.2 566,371.6 568,368.6 570,365.4 572,361.9 574,358.2 576,354.3 578,350.0 580,345.3 582,340.4 584,335.3 586,330.2 588,325.3 590,320.4 592,315.7 594,311.0 596,306.5 598,302.0 600,297.7 602,293.5 604,289.6 606,286.0 608,282.7 610,279.7 612,277.1 614,274.8 616,272.7 618,271.0 620,269.8 622,269.0 624,268.6 626,268.5 628,268.6 630,268.6 632,268.6 634,268.5 636,268.5 638,268.8 640,269.7 642,271.3 644,273.6 646,276.5 648,279.9 650,283.8 652,288.0 654,292.5 656,297.1 658,301.8 660,306.2 662,310.2 664,313.9 666,317.1 668,320.0 670,322.7 672,325.2 674,327.5 676,329.6 678,331.4 680,332.6 682,333.2 684,333.2 686,332.3 688,330.8 690,328.5 692,325.4 694,321.7 696,317.4 698,312.6 700,307.7 702,302.9 704,298.4 706,294.5 708,291.3 710,289.1 712,288.0 714,288.0 716,289.1 718,291.1 720,293.8 722,297.1 724,300.9 726,305.0 728,309.2 730,313.3 732,317.2 734,320.7 736,323.8 738,326.8 740,329.9 742,333.6 744,338.7 746,345.5 748,353.9 750,363.5 752,372.9 754,381.0 756,386.9 758,390.6 760,392.4 762,392.8 764,392.3 766,391.3 768,390.1 770,388.8 772,387.6 774,386.6 776,386.1 778,386.0 780,386.5 782,387.4 784,388.5 786,389.9 788,391.2 790,392.5 792,393.5 794,394.3 796,394.5 798,394.1 800,393.0 802,391.3 804,388.9 806,386.2 808,383.4 810,380.7 812,378.4 814,376.8 816,375.7 818,375.2 820,374.9" fill="none" stroke="#ffde03" stroke-width="1"/><polyline points="284,312.5 286,311.4 288,309.4 290,306.2 292,301.8 294,296.7 296,291.4 298,286.3 300,282.0 302,278.6 304,276.4 306,275.2 308,275.0 310,275.7 312,276.9 314,278.8 316,281.2 318,284.0 320,287.1 322,290.2 324,293.1 326,295.6 328,297.4 330,298.6 332,299.0 334,298.9 336,298.3 338,297.7 340,297.3 342,297.7 344,299.3 346,302.0 348,305.5 350,308.9 352,311.4 354,312.5 356,312.2 358,310.5 360,308.0 362,305.0 364,301.9 366,299.0 368,296.4 370,294.3 372,292.6 374,291.4 376,290.6 378,290.5 380,291.3 382,293.4 384,297.0 386,301.9 388,307.9 390,314.3 392,320.6 394,326.4 396,331.5 398,336.0 400,339.8 402,343.2 404,346.1 406,348.7 408,351.0 410,352.9 412,354.5 414,355.6 416,356.3 418,356.4 420,355.9 422,354.8 424,353.1 426,351.0 428,348.6 430,345.9 432,343.3 434,340.7 436,338.2 438,335.8 440,333.7 442,331.7 444,330.0 446,328.5 448,327.2 450,326.0 452,325.1 454,324.2 456,323.5 458,322.8 460,322.2 462,321.7 464,321.1 466,320.6 468,320.2 470,319.9 472,319.6 474,319.6 476,319.9 478,320.5 480,321.7 482,323.3 484,325.3 486,327.8 488,330.5 490,333.5 492,336.6 494,339.7 496,342.9 498,346.1 500,349.2 502,352.3 504,355.4 506,358.4 508,361.2 510,364.0 512,366.5 514,369.0 516,371.2 518,373.3 520,375.3 522,377.3 524,379.2 526,381.2 528,383.3 530,385.5 532,387.6 534,389.5 536,390.9 538,391.6 540,391.6 542,390.9 544,389.6 546,388.2 548,386.6 550,385.0 552,383.6 554,382.2 556,380.8 558,379.4 560,377.8 562,375.9 564,373.7 566,371.1 568,368.3 570,365.1 572,361.7 574,358.1 576,354.2 578,350.0 580,345.5 582,340.6 584,335.6 586,330.7 588,325.8 590,321.1 592,316.4 594,311.9 596,307.4 598,303.0 600,298.7 602,294.6 604,290.8 606,287.2 608,283.9 610,281.0 612,278.4 614,276.0 616,274.0 618,272.3 620,271.0 622,270.2 624,269.8 626,269.7 628,269.7 630,269.7 632,269.7 634,269.6 636,269.6 638,269.9 640,270.8 642,272.3 644,274.5 646,277.4 648,280.7 650,284.5 652,288.7 654,293.0 656,297.6 658,302.1 660,306.4 662,310.4 664,313.9 666,317.1 668,319.9 670,322.5 672,325.0 674,327.3 676,329.3 678,331.0 680,332.3 682,332.9 684,332.8 686,332.0 688,330.5 690,328.2 692,325.2 694,321.6 696,317.3 698,312.7 700,307.9 702,303.2 704,298.8 706,295.0 708,291.9 710,289.7 712,288.6 714,288.6 716,289.7 718,291.6 720,294.2 722,297.5 724,301.2 726,305.2 728,309.3 730,313.4 732,317.1 734,320.6 736,323.7 738,326.6 740,329.6 742,333.3 744,338.3 746,344.9 748,353.2 750,362.6 752,371.8 754,379.8 756,385.6 758,389.3 760,391.0 762,391.4 764,391.0 766,390.1 768,388.9 770,387.6 772,386.4 774,385.5 776,385.0 778,385.0 780,385.4 782,386.3 784,387.5 786,388.8 788,390.1 790,391.4 792,392.4 794,393.1 796,393.4 798,393.0 800,392.0 802,390.3 804,388.0 806,385.4 808,382.6 810,380.0 812,377.8 814,376.2 816,375.2 818,374.6 820,374.4" fill="none" stroke="#ffdd05" stroke-width="1"/><polyline points="284,313.7 286,312.7 288,310.7 290,307.5 292,303.2 294,298.1 296,292.9 298,287.9 300,283.7 302,280.3 304,278.1 306,276.9 308,276.7 310,277.3 312,278.5 314,280.3 316,282.6 318,285.3 320,288.3 322,291.4 324,294.2 326,296.5 328,298.3 330,299.4 332,299.9 334,299.7 336,299.2 338,298.5 340,298.1 342,298.5 344,300.0 346,302.7 348,306.1 350,309.4 352,311.8 354,312.9 356,312.6 358,311.0 360,308.4 362,305.5 364,302.5 366,299.6 368,297.1 370,295.0 372,293.3 374,292.1 376,291.3 378,291.2 380,292.0 382,294.0 384,297.5 386,302.4 388,308.2 390,314.5 392,320.7 394,326.4 396,331.4 398,335.8 400,339.5 402,342.8 404,345.7 406,348.2 408,350.5 410,352.4 412,353.9 414,355.0 416,355.7 418,355.8 420,355.4 422,354.3 424,352.7 426,350.6 428,348.2 430,345.7 432,343.1 434,340.5 436,338.1 438,335.8 440,333.7 442,331.8 444,330.0 446,328.6 448,327.3 450,326.2 452,325.2 454,324.4 456,323.7 458,323.0 460,322.4 462,321.8 464,321.3 466,320.8 468,320.4 470,320.1 472,319.8 474,319.8 476,320.1 478,320.8 480,321.9 482,323.4 484,325.4 486,327.9 488,330.6 490,333.5 492,336.5 494,339.6 496,342.7 498,345.9 500,349.0 502,352.0 504,355.0 506,357.9 508,360.7 510,363.4 512,366.0 514,368.3 516,370.5 518,372.6 520,374.6 522,376.5 524,378.4 526,380.3 528,382.4 530,384.6 532,386.7 534,388.6 536,389.9 538,390.6 540,390.6 542,389.9 544,388.7 546,387.3 548,385.7 550,384.2 552,382.8 554,381.5 556,380.2 558,378.8 560,377.2 562,375.4 564,373.2 566,370.7 568,367.9 570,364.8 572,361.5 574,358.0 576,354.2 578,350.1 580,345.6 582,340.9 584,336.0 586,331.1 588,326.4 590,321.7 592,317.2 594,312.7 596,308.3 598,304.0 600,299.8 602,295.8 604,292.0 606,288.5 608,285.3 610,282.4 612,279.8 614,277.4 616,275.4 618,273.6 620,272.3 622,271.5 624,271.0 626,270.9 628,270.9 630,270.9 632,270.9 634,270.7 636,270.7 638,271.0 640,271.9 642,273.4 644,275.6 646,278.3 648,281.6 650,285.3 652,289.3 654,293.6 656,298.0 658,302.4 660,306.6 662,310.5 664,314.0 666,317.1 668,319.8 670,322.4 672,324.8 674,327.0 676,329.0 678,330.7 680,331.9 682,332.5 684,332.4 686,331.6 688,330.1 690,327.9 692,325.0 694,321.4 696,317.3 698,312.7 700,308.0 702,303.5 704,299.2 706,295.4 708,292.4 710,290.3 712,289.2 714,289.2 716,290.3 718,292.2 720,294.7 722,297.9 724,301.5 726,305.5 728,309.5 730,313.5 732,317.1 734,320.5 736,323.5 738,326.4 740,329.4 742,333.0 744,337.8 746,344.3 748,352.5 750,361.6 752,370.7 754,378.5 756,384.3 758,387.9 760,389.6 762,390.0 764,389.6 766,388.7 768,387.5 770,386.3 772,385.2 774,384.3 776,383.8 778,383.8 780,384.3 782,385.2 784,386.3 786,387.6 788,388.9 790,390.2 792,391.2 794,391.9 796,392.2 798,391.8 800,390.8 802,389.2 804,387.0 806,384.5 808,381.8 810,379.2 812,377.1 814,375.5 816,374.6 818,374.0 820,373.8" fill="none" stroke="#ffdc07" stroke-width="1"/><polyline points="284,315.0 286,314.0 288,312.0 290,308.8 292,304.6 294,299.7 296,294.5 298,289.6 300,285.4 302,282.1 304,279.9 306,278.7 308,278.5 310,279.0 312,280.1 314,281.8 316,284.0 318,286.7 320,289.6 322,292.5 324,295.3 326,297.6 328,299.3 330,300.3 332,300.7 334,300.6 336,300.0 338,299.4 340,299.0 342,299.3 344,300.8 346,303.5 348,306.7 350,309.9 352,312.3 354,313.3 356,313.0 358,311.4 360,308.9 362,306.0 364,303.0 366,300.2 368,297.8 370,295.7 372,294.1 374,292.9 376,292.1 378,292.0 380,292.7 382,294.7 384,298.1 386,302.9 388,308.6 390,314.7 392,320.8 394,326.3 396,331.2 398,335.5 400,339.2 402,342.4 404,345.3 406,347.7 408,349.9 410,351.8 412,353.3 414,354.4 416,355.1 418,355.2 420,354.8 422,353.7 424,352.2 426,350.2 428,347.8 430,345.3 432,342.8 434,340.3 436,337.9 438,335.7 440,333.6 442,331.8 444,330.1 446,328.6 448,327.4 450,326.3 452,325.3 454,324.5 456,323.8 458,323.2 460,322.6 462,322.0 464,321.5 466,321.0 468,320.6 470,320.3 472,320.1 474,320.1 476,320.3 478,321.0 480,322.1 482,323.6 484,325.6 486,328.0 488,330.6 490,333.5 492,336.5 494,339.5 496,342.6 498,345.6 500,348.7 502,351.7 504,354.6 506,357.5 508,360.2 510,362.9 512,365.3 514,367.7 516,369.8 518,371.9 520,373.8 522,375.7 524,377.5 526,379.5 528,381.5 530,383.6 532,385.7 534,387.5 536,388.9 538,389.6 540,389.5 542,388.9 544,387.7 546,386.3 548,384.9 550,383.4 552,382.0 554,380.7 556,379.4 558,378.1 560,376.6 562,374.8 564,372.7 566,370.2 568,367.5 570,364.5 572,361.2 574,357.8 576,354.1 578,350.1 580,345.7 582,341.1 584,336.4 586,331.6 588,327.0 590,322.4 592,318.0 594,313.6 596,309.3 598,305.1 600,301.0 602,297.1 604,293.4 606,289.9 608,286.7 610,283.8 612,281.2 614,278.9 616,276.8 618,275.0 620,273.7 622,272.8 624,272.4 626,272.2 628,272.2 630,272.2 632,272.1 634,272.0 636,271.9 638,272.3 640,273.1 642,274.5 644,276.6 646,279.3 648,282.5 650,286.1 652,290.0 654,294.2 656,298.5 658,302.8 660,306.9 662,310.7 664,314.1 666,317.1 668,319.7 670,322.2 672,324.5 674,326.7 676,328.7 678,330.3 680,331.5 682,332.0 684,332.0 686,331.2 688,329.8 690,327.6 692,324.8 694,321.3 696,317.2 698,312.8 700,308.2 702,303.7 704,299.6 706,295.9 708,293.0 710,290.9 712,289.8 714,289.9 716,290.9 718,292.7 720,295.3 722,298.4 724,301.9 726,305.7 728,309.7 730,313.5 732,317.1 734,320.4 736,323.4 738,326.2 740,329.1 742,332.6 744,337.3 746,343.7 748,351.7 750,360.7 752,369.5 754,377.1 756,382.8 758,386.3 760,388.0 762,388.5 764,388.1 766,387.2 768,386.1 770,385.0 772,383.9 774,383.0 776,382.6 778,382.6 780,383.1 782,384.0 784,385.1 786,386.4 788,387.7 790,388.9 792,390.0 794,390.7 796,390.9 798,390.6 800,389.7 802,388.1 804,386.0 806,383.5 808,380.9 810,378.4 812,376.4 814,374.9 816,373.9 818,373.4 820,373.2" fill="none" stroke="#ffda09" stroke-width="1"/><polyline points="284,316.4 286,315.4 288,313.4 290,310.3 292,306.1 294,301.2 296,296.2 298,291.4 300,287.2 302,284.0 304,281.8 306,280.6 308,280.3 310,280.8 312,281.8 314,283.5 316,285.6 318,288.1 320,290.9 322,293.8 324,296.4 326,298.6 328,300.3 330,301.3 332,301.7 334,301.5 336,301.0 338,300.3 340,299.9 342,300.2 344,301.7 346,304.2 348,307.4 350,310.5 352,312.8 354,313.8 356,313.4 358,311.8 360,309.4 362,306.6 364,303.6 366,300.9 368,298.5 370,296.4 372,294.8 374,293.6 376,292.9 378,292.8 380,293.5 382,295.4 384,298.8 386,303.4 388,309.0 390,314.9 392,320.8 394,326.3 396,331.1 398,335.3 400,338.9 402,342.0 404,344.8 406,347.2 408,349.4 410,351.2 412,352.7 414,353.8 416,354.5 418,354.6 420,354.2 422,353.2 424,351.7 426,349.7 428,347.4 430,345.0 432,342.6 434,340.1 436,337.8 438,335.6 440,333.6 442,331.8 444,330.1 446,328.7 448,327.5 450,326.4 452,325.5 454,324.7 456,324.0 458,323.3 460,322.8 462,322.2 464,321.7 466,321.2 468,320.8 470,320.5 472,320.3 474,320.3 476,320.6 478,321.2 480,322.3 482,323.8 484,325.8 486,328.1 488,330.7 490,333.5 492,336.4 494,339.4 496,342.4 498,345.4 500,348.4 502,351.3 504,354.2 506,357.0 508,359.7 510,362.3 512,364.7 514,367.0 516,369.1 518,371.1 520,373.0 522,374.8 524,376.7 526,378.5 528,380.5 530,382.6 532,384.6 534,386.4 536,387.8 538,388.5 540,388.4 542,387.8 544,386.7 546,385.4 548,383.9 550,382.5 552,381.2 554,380.0 556,378.7 558,377.4 560,375.9 562,374.2 564,372.1 566,369.7 568,367.1 570,364.1 572,361.0 574,357.6 576,354.0 578,350.1 580,345.9 582,341.4 584,336.7 586,332.1 588,327.6 590,323.2 592,318.8 594,314.6 596,310.4 598,306.2 600,302.2 602,298.4 604,294.8 606,291.3 608,288.2 610,285.4 612,282.8 614,280.4 616,278.3 618,276.5 620,275.2 622,274.2 624,273.8 626,273.6 628,273.5 630,273.5 632,273.4 634,273.3 636,273.2 638,273.5 640,274.3 642,275.7 644,277.8 646,280.4 648,283.5 650,287.0 652,290.8 654,294.8 656,299.0 658,303.2 660,307.1 662,310.8 664,314.1 666,317.0 668,319.6 670,322.0 672,324.3 674,326.4 676,328.3 678,329.9 680,331.0 682,331.6 684,331.5 686,330.8 688,329.4 690,327.3 692,324.5 694,321.1 696,317.2 698,312.9 700,308.4 702,304.1 704,300.0 706,296.5 708,293.6 710,291.5 712,290.5 714,290.5 716,291.5 718,293.3 720,295.8 722,298.8 724,302.3 726,306.0 728,309.9 730,313.6 732,317.1 734,320.3 736,323.2 738,325.9 740,328.8 742,332.2 744,336.8 746,343.1 748,350.9 750,359.6 752,368.3 754,375.7 756,381.3 758,384.8 760,386.5 762,386.9 764,386.5 766,385.7 768,384.7 770,383.6 772,382.5 774,381.7 776,381.3 778,381.4 780,381.8 782,382.7 784,383.8 786,385.1 788,386.4 790,387.6 792,388.7 794,389.4 796,389.7 798,389.4 800,388.5 802,386.9 804,384.9 806,382.5 808,380.0 810,377.6 812,375.6 814,374.2 816,373.3 818,372.8 820,372.6" fill="none" stroke="#ffd90b" stroke-width="1"/><polyline points="284,317.8 286,316.8 288,314.8 290,311.7 292,307.7 294,302.9 296,297.9 298,293.2 300,289.1 302,285.9 304,283.7 306,282.5 308,282.2 310,282.6 312,283.6 314,285.1 316,287.2 318,289.6 320,292.3 322,295.0 324,297.6 326,299.7 328,301.3 330,302.3 332,302.6 334,302.5 336,301.9 338,301.2 340,300.8 342,301.1 344,302.5 346,305.0 348,308.1 350,311.0 352,313.3 354,314.2 356,313.8 358,312.3 360,309.9 362,307.1 364,304.3 366,301.6 368,299.2 370,297.2 372,295.6 374,294.5 376,293.7 378,293.6 380,294.3 382,296.2 384,299.4 386,303.9 388,309.3 390,315.2 392,320.9 394,326.2 396,330.9 398,335.0 400,338.5 402,341.6 404,344.3 406,346.7 408,348.8 410,350.6 412,352.1 414,353.2 416,353.8 418,354.0 420,353.6 422,352.6 424,351.1 426,349.2 428,347.0 430,344.7 432,342.3 434,339.9 436,337.7 438,335.5 440,333.6 442,331.8 444,330.2 446,328.8 448,327.6 450,326.5 452,325.6 454,324.8 456,324.2 458,323.5 460,323.0 462,322.4 464,321.9 466,321.5 468,321.1 470,320.7 472,320.5 474,320.6 476,320.8 478,321.5 480,322.5 482,324.0 484,325.9 486,328.2 488,330.7 490,333.5 492,336.3 494,339.3 496,342.2 498,345.1 500,348.0 502,350.9 504,353.7 506,356.5 508,359.1 510,361.7 512,364.0 514,366.3 516,368.4 518,370.3 520,372.2 522,374.0 524,375.7 526,377.6 528,379.5 530,381.6 532,383.6 534,385.3 536,386.6 538,387.3 540,387.3 542,386.7 544,385.7 546,384.4 548,383.0 550,381.6 552,380.4 554,379.1 556,377.9 558,376.7 560,375.2 562,373.5 564,371.6 566,369.2 568,366.6 570,363.8 572,360.7 574,357.5 576,354.0 578,350.2 580,346.0 582,341.6 584,337.1 586,332.6 588,328.2 590,323.9 592,319.7 594,315.5 596,311.4 598,307.4 600,303.5 602,299.8 604,296.2 606,292.8 608,289.7 610,286.9 612,284.3 614,282.0 616,279.9 618,278.1 620,276.7 622,275.7 624,275.2 626,275.0 628,274.9 630,274.9 632,274.7 634,274.6 636,274.5 638,274.8 640,275.6 642,276.9 644,278.9 646,281.4 648,284.5 650,287.8 652,291.5 654,295.5 656,299.5 658,303.5 660,307.4 662,311.0 664,314.2 666,317.0 668,319.5 670,321.9 672,324.0 674,326.1 676,328.0 678,329.5 680,330.6 682,331.1 684,331.1 686,330.4 688,329.0 690,327.0 692,324.3 694,321.0 696,317.1 698,312.9 700,308.6 702,304.4 704,300.4 706,297.0 708,294.2 710,292.2 712,291.2 714,291.3 716,292.2 718,294.0 720,296.4 722,299.3 724,302.7 726,306.3 728,310.0 730,313.7 732,317.1 734,320.2 736,323.0 738,325.7 740,328.5 742,331.8 744,336.3 746,342.4 748,350.0 750,358.6 752,367.0 754,374.3 756,379.7 758,383.1 760,384.8 762,385.2 764,384.9 766,384.2 768,383.2 770,382.1 772,381.1 774,380.4 776,380.0 778,380.1 780,380.6 782,381.4 784,382.5 786,383.8 788,385.1 790,386.3 792,387.3 794,388.0 796,388.3 798,388.1 800,387.2 802,385.7 804,383.8 806,381.5 808,379.0 810,376.7 812,374.8 814,373.4 816,372.6 818,372.1 820,371.9" fill="none" stroke="#ffd80e" stroke-width="1"/><polyline points="284,319.3 286,318.2 288,316.3 290,313.3 292,309.2 294,304.6 296,299.7 298,295.1 300,291.1 302,287.9 304,285.7 306,284.5 308,284.1 310,284.5 312,285.4 314,286.9 316,288.8 318,291.1 320,293.7 322,296.4 324,298.8 326,300.9 328,302.4 330,303.3 332,303.6 334,303.4 336,302.9 338,302.2 340,301.8 342,302.1 344,303.4 346,305.8 348,308.7 350,311.6 352,313.8 354,314.7 356,314.3 358,312.8 360,310.4 362,307.7 364,304.9 366,302.3 368,300.0 370,298.0 372,296.5 374,295.3 376,294.6 378,294.4 380,295.1 382,296.9 384,300.1 386,304.5 388,309.7 390,315.4 392,321.0 394,326.2 396,330.7 398,334.7 400,338.2 402,341.2 404,343.8 406,346.1 408,348.2 410,350.0 412,351.4 414,352.5 416,353.1 418,353.3 420,352.9 422,352.0 424,350.6 426,348.8 428,346.6 430,344.4 432,342.0 434,339.7 436,337.5 438,335.4 440,333.5 442,331.8 444,330.2 446,328.9 448,327.7 450,326.7 452,325.8 454,325.0 456,324.3 458,323.7 460,323.2 462,322.6 464,322.1 466,321.7 468,321.3 470,321.0 472,320.8 474,320.8 476,321.1 478,321.7 480,322.7 482,324.2 484,326.1 486,328.3 488,330.8 490,333.5 492,336.3 494,339.1 496,342.0 498,344.9 500,347.7 502,350.5 504,353.3 506,356.0 508,358.6 510,361.0 512,363.4 514,365.5 516,367.6 518,369.5 520,371.3 522,373.1 524,374.8 526,376.6 528,378.5 530,380.5 532,382.5 534,384.2 536,385.5 538,386.1 540,386.2 542,385.6 544,384.6 546,383.3 548,382.0 550,380.7 552,379.5 554,378.3 556,377.2 558,375.9 560,374.5 562,372.9 564,371.0 566,368.7 568,366.2 570,363.4 572,360.4 574,357.3 576,353.9 578,350.2 580,346.2 582,341.9 584,337.6 586,333.2 588,328.9 590,324.7 592,320.6 594,316.6 596,312.6 598,308.6 600,304.8 602,301.2 604,297.7 606,294.4 608,291.3 610,288.5 612,285.9 614,283.6 616,281.5 618,279.6 620,278.2 622,277.2 624,276.7 626,276.4 628,276.3 630,276.2 632,276.1 634,276.0 636,275.9 638,276.2 640,276.9 642,278.2 644,280.1 646,282.6 648,285.5 650,288.7 652,292.3 654,296.1 656,300.0 658,303.9 660,307.7 662,311.1 664,314.2 666,317.0 668,319.4 670,321.7 672,323.8 674,325.8 676,327.6 678,329.1 680,330.1 682,330.7 684,330.6 686,329.9 688,328.6 690,326.6 692,324.0 694,320.8 696,317.1 698,313.0 700,308.8 702,304.7 704,300.9 706,297.5 708,294.8 710,292.9 712,291.9 714,292.0 716,292.9 718,294.6 720,297.0 722,299.8 724,303.1 726,306.6 728,310.2 730,313.8 732,317.1 734,320.1 736,322.9 738,325.5 740,328.1 742,331.4 744,335.8 746,341.7 748,349.1 750,357.5 752,365.7 754,372.8 756,378.1 758,381.4 760,383.1 762,383.6 764,383.3 766,382.6 768,381.6 770,380.6 772,379.7 774,379.0 776,378.6 778,378.7 780,379.2 782,380.1 784,381.2 786,382.4 788,383.7 790,384.9 792,385.9 794,386.7 796,386.9 798,386.7 800,385.9 802,384.5 804,382.6 806,380.4 808,378.1 810,375.9 812,374.0 814,372.7 816,371.9 818,371.4 820,371.3" fill="none" stroke="#ffd610" stroke-width="1"/><polyline points="284,320.7 286,319.7 288,317.8 290,314.8 292,310.9 294,306.3 296,301.5 298,297.0 300,293.1 302,289.9 304,287.8 306,286.5 308,286.1 310,286.4 312,287.3 314,288.6 316,290.5 318,292.7 320,295.2 322,297.7 324,300.1 326,302.0 328,303.5 330,304.3 332,304.6 334,304.4 336,303.9 338,303.2 340,302.8 342,303.1 344,304.3 346,306.6 348,309.5 350,312.2 352,314.3 354,315.2 356,314.8 358,313.3 360,311.0 362,308.3 364,305.6 366,303.0 368,300.7 370,298.8 372,297.3 374,296.2 376,295.4 378,295.3 380,295.9 382,297.7 384,300.7 386,305.0 388,310.1 390,315.6 392,321.1 394,326.1 396,330.6 398,334.5 400,337.8 402,340.7 404,343.3 406,345.6 408,347.6 410,349.3 412,350.7 414,351.8 416,352.4 418,352.6 420,352.3 422,351.4 424,350.0 426,348.3 428,346.2 430,344.0 432,341.7 434,339.5 436,337.4 438,335.3 440,333.5 442,331.8 444,330.3 446,328.9 448,327.8 450,326.8 452,325.9 454,325.2 456,324.5 458,323.9 460,323.4 462,322.8 464,322.3 466,321.9 468,321.5 470,321.2 472,321.1 474,321.1 476,321.4 478,322.0 480,323.0 482,324.4 484,326.3 486,328.4 488,330.9 490,333.5 492,336.2 494,339.0 496,341.8 498,344.6 500,347.4 502,350.1 504,352.8 506,355.4 508,358.0 510,360.4 512,362.7 514,364.8 516,366.8 518,368.6 520,370.4 522,372.1 524,373.9 526,375.6 528,377.5 530,379.4 532,381.3 534,383.0 536,384.3 538,384.9 540,385.0 542,384.4 544,383.5 546,382.3 548,381.0 550,379.8 552,378.6 554,377.5 556,376.4 558,375.2 560,373.8 562,372.2 564,370.4 566,368.2 568,365.7 570,363.0 572,360.2 574,357.1 576,353.8 578,350.2 580,346.3 582,342.2 584,338.0 586,333.7 588,329.6 590,325.5 592,321.5 594,317.6 596,313.7 598,309.9 600,306.2 602,302.6 604,299.2 606,295.9 608,292.9 610,290.2 612,287.6 614,285.2 616,283.1 618,281.2 620,279.8 622,278.8 624,278.2 626,277.9 628,277.8 630,277.7 632,277.5 634,277.4 636,277.3 638,277.5 640,278.2 642,279.5 644,281.3 646,283.7 648,286.5 650,289.7 652,293.1 654,296.8 656,300.6 658,304.4 660,308.0 662,311.3 664,314.3 666,316.9 668,319.3 670,321.5 672,323.5 674,325.5 676,327.2 678,328.6 680,329.7 682,330.2 684,330.1 686,329.5 688,328.2 690,326.3 692,323.7 694,320.6 696,317.0 698,313.1 700,309.0 702,305.1 704,301.4 706,298.1 708,295.5 710,293.6 712,292.7 714,292.7 716,293.6 718,295.3 720,297.6 722,300.3 724,303.5 726,306.9 728,310.4 730,313.9 732,317.1 734,320.0 736,322.7 738,325.2 740,327.8 742,331.0 744,335.3 746,341.0 748,348.2 750,356.3 752,364.3 754,371.3 756,376.5 758,379.7 760,381.4 762,381.8 764,381.6 766,380.9 768,380.1 770,379.1 772,378.2 774,377.5 776,377.2 778,377.4 780,377.9 782,378.7 784,379.8 786,381.1 788,382.3 790,383.5 792,384.5 794,385.2 796,385.5 798,385.3 800,384.6 802,383.2 804,381.5 806,379.3 808,377.1 810,375.0 812,373.2 814,371.9 816,371.2 818,370.7 820,370.6" fill="none" stroke="#ffd513" stroke-width="1"/><polyline points="284,322.3 286,321.2 288,319.3 290,316.4 292,312.6 294,308.1 296,303.4 298,299.0 300,295.1 302,292.0 304,289.9 306,288.6 308,288.2 310,288.4 312,289.2 314,290.5 316,292.2 318,294.3 320,296.7 322,299.1 324,301.3 326,303.2 328,304.6 330,305.4 332,305.6 334,305.4 336,304.9 338,304.2 340,303.8 342,304.0 344,305.3 346,307.4 348,310.2 350,312.9 352,314.8 354,315.6 356,315.2 358,313.8 360,311.5 362,308.9 364,306.3 366,303.8 368,301.5 370,299.7 372,298.2 374,297.0 376,296.3 378,296.2 380,296.8 382,298.5 384,301.4 386,305.6 388,310.5 390,315.9 392,321.2 394,326.1 396,330.4 398,334.2 400,337.4 402,340.3 404,342.8 406,345.0 408,347.0 410,348.6 412,350.0 414,351.1 416,351.7 418,351.9 420,351.6 422,350.7 424,349.4 426,347.8 428,345.8 430,343.6 432,341.5 434,339.3 436,337.2 438,335.3 440,333.5 442,331.8 444,330.3 446,329.0 448,327.9 450,326.9 452,326.1 454,325.4 456,324.7 458,324.1 460,323.6 462,323.0 464,322.6 466,322.1 468,321.8 470,321.5 472,321.3 474,321.3 476,321.6 478,322.2 480,323.2 482,324.6 484,326.4 486,328.6 488,330.9 490,333.5 492,336.2 494,338.9 496,341.6 498,344.3 500,347.1 502,349.7 504,352.4 506,354.9 508,357.4 510,359.7 512,361.9 514,364.0 516,366.0 518,367.8 520,369.5 522,371.2 524,372.9 526,374.6 528,376.4 530,378.3 532,380.2 534,381.8 536,383.0 538,383.7 540,383.7 542,383.2 544,382.3 546,381.2 548,380.0 550,378.8 552,377.7 554,376.6 556,375.5 558,374.4 560,373.1 562,371.6 564,369.8 566,367.7 568,365.3 570,362.7 572,359.9 574,356.9 576,353.7 578,350.3 580,346.5 582,342.5 584,338.4 586,334.3 588,330.3 590,326.3 592,322.5 594,318.6 596,314.9 598,311.2 600,307.5 602,304.0 604,300.7 606,297.6 608,294.6 610,291.9 612,289.3 614,286.9 616,284.8 618,282.9 620,281.4 622,280.3 624,279.7 626,279.4 628,279.2 630,279.1 632,279.0 634,278.8 636,278.7 638,278.9 640,279.6 642,280.8 644,282.6 646,284.9 648,287.6 650,290.6 652,293.9 654,297.5 656,301.1 658,304.8 660,308.3 662,311.5 664,314.4 666,316.9 668,319.2 670,321.3 672,323.3 674,325.1 676,326.8 678,328.2 680,329.2 682,329.7 684,329.6 686,329.0 688,327.8 690,325.9 692,323.5 694,320.5 696,317.0 698,313.2 700,309.2 702,305.4 704,301.8 706,298.7 708,296.1 710,294.4 712,293.5 714,293.5 716,294.4 718,296.0 720,298.2 722,300.8 724,303.9 726,307.2 728,310.6 730,314.0 732,317.1 734,319.9 736,322.5 738,324.9 740,327.5 742,330.6 744,334.7 746,340.3 748,347.3 750,355.2 752,363.0 754,369.7 756,374.8 758,378.0 760,379.6 762,380.1 764,379.9 766,379.3 768,378.4 770,377.5 772,376.7 774,376.1 776,375.8 778,376.0 780,376.5 782,377.3 784,378.4 786,379.6 788,380.9 790,382.1 792,383.1 794,383.8 796,384.1 798,383.9 800,383.2 802,382.0 804,380.2 806,378.2 808,376.1 810,374.0 812,372.4 814,371.2 816,370.4 818,370.0 820,369.9" fill="none" stroke="#ffd315" stroke-width="1"/><polyline points="284,323.8 286,322.8 288,320.9 290,318.0 292,314.3 294,309.9 296,305.3 298,301.0 300,297.2 302,294.1 304,292.0 306,290.7 308,290.2 310,290.4 312,291.1 314,292.3 316,293.9 318,295.9 320,298.2 322,300.5 324,302.6 326,304.4 328,305.7 330,306.5 332,306.7 334,306.5 336,305.9 338,305.2 340,304.8 342,305.1 344,306.2 346,308.3 348,310.9 350,313.5 352,315.3 354,316.1 356,315.7 358,314.3 360,312.1 362,309.6 364,307.0 366,304.5 368,302.4 370,300.5 372,299.0 374,297.9 376,297.2 378,297.1 380,297.6 382,299.3 384,302.1 386,306.1 388,311.0 390,316.1 392,321.3 394,326.0 396,330.2 398,333.9 400,337.0 402,339.8 404,342.3 406,344.4 408,346.3 410,348.0 412,349.3 414,350.4 416,351.0 418,351.2 420,350.9 422,350.1 424,348.9 426,347.2 428,345.3 430,343.3 432,341.2 434,339.1 436,337.1 438,335.2 440,333.4 442,331.8 444,330.4 446,329.1 448,328.0 450,327.1 452,326.2 454,325.5 456,324.9 458,324.3 460,323.8 462,323.3 464,322.8 466,322.4 468,322.0 470,321.7 472,321.6 474,321.6 476,321.9 478,322.5 480,323.5 482,324.9 484,326.6 486,328.7 488,331.0 490,333.5 492,336.1 494,338.7 496,341.4 498,344.1 500,346.7 502,349.3 504,351.9 506,354.4 508,356.8 510,359.0 512,361.2 514,363.2 516,365.1 518,366.9 520,368.6 522,370.2 524,371.9 526,373.6 528,375.3 530,377.2 532,379.0 534,380.6 536,381.8 538,382.4 540,382.5 542,382.0 544,381.2 546,380.1 548,378.9 550,377.8 552,376.7 554,375.7 556,374.7 558,373.6 560,372.3 562,370.9 564,369.1 566,367.1 568,364.8 570,362.3 572,359.6 574,356.7 576,353.7 578,350.3 580,346.7 582,342.8 584,338.8 586,334.9 588,331.0 590,327.2 592,323.4 594,319.7 596,316.1 598,312.4 600,308.9 602,305.5 604,302.3 606,299.2 608,296.3 610,293.6 612,291.0 614,288.7 616,286.5 618,284.6 620,283.0 622,282.0 624,281.3 626,280.9 628,280.8 630,280.6 632,280.4 634,280.3 636,280.2 638,280.4 640,281.0 642,282.2 644,283.9 646,286.0 648,288.6 650,291.6 652,294.8 654,298.2 656,301.7 658,305.2 660,308.6 662,311.6 664,314.4 666,316.9 668,319.1 670,321.1 672,323.0 674,324.8 676,326.4 678,327.8 680,328.7 682,329.2 684,329.1 686,328.5 688,327.3 690,325.5 692,323.2 694,320.3 696,316.9 698,313.3 700,309.5 702,305.8 704,302.3 706,299.3 708,296.8 710,295.1 712,294.2 714,294.3 716,295.1 718,296.7 720,298.8 722,301.4 724,304.3 726,307.5 728,310.8 730,314.1 732,317.1 734,319.8 736,322.3 738,324.7 740,327.1 742,330.1 744,334.2 746,339.6 748,346.4 750,354.0 752,361.6 754,368.1 756,373.0 758,376.2 760,377.8 762,378.3 764,378.1 766,377.5 768,376.8 770,375.9 772,375.2 774,374.6 776,374.4 778,374.5 780,375.1 782,375.9 784,377.0 786,378.2 788,379.4 790,380.6 792,381.6 794,382.3 796,382.6 798,382.5 800,381.8 802,380.6 804,379.0 806,377.1 808,375.0 810,373.1 812,371.5 814,370.4 816,369.7 818,369.3 820,369.2" fill="none" stroke="#ffd218" stroke-width="1"/><polyline points="284,325.4 286,324.3 288,322.5 290,319.7 292,316.0 294,311.7 296,307.3 298,303.0 300,299.3 302,296.3 304,294.2 306,292.9 308,292.4 310,292.5 312,293.1 314,294.2 316,295.7 318,297.6 320,299.7 322,301.9 324,303.9 326,305.6 328,306.9 330,307.6 332,307.8 334,307.5 336,307.0 338,306.3 340,305.9 342,306.1 344,307.2 346,309.2 348,311.7 350,314.1 352,315.9 354,316.6 356,316.2 358,314.8 360,312.7 362,310.2 364,307.7 366,305.3 368,303.2 370,301.4 372,299.9 374,298.9 376,298.2 378,298.0 380,298.5 382,300.1 384,302.9 386,306.7 388,311.4 390,316.4 392,321.4 394,325.9 396,330.0 398,333.6 400,336.7 402,339.4 404,341.7 406,343.8 408,345.7 410,347.3 412,348.6 414,349.6 416,350.3 418,350.5 420,350.2 422,349.4 424,348.3 426,346.7 428,344.9 430,342.9 432,340.9 434,338.9 436,336.9 438,335.1 440,333.4 442,331.8 444,330.4 446,329.2 448,328.1 450,327.2 452,326.4 454,325.7 456,325.1 458,324.5 460,324.0 462,323.5 464,323.0 466,322.6 468,322.3 470,322.0 472,321.8 474,321.9 476,322.2 478,322.8 480,323.7 482,325.1 484,326.8 486,328.8 488,331.1 490,333.5 492,336.0 494,338.6 496,341.2 498,343.8 500,346.4 502,348.9 504,351.4 506,353.8 508,356.1 510,358.4 512,360.5 514,362.4 516,364.3 518,366.0 520,367.7 522,369.3 524,370.9 526,372.5 528,374.2 530,376.0 532,377.8 534,379.3 536,380.5 538,381.2 540,381.2 542,380.8 544,380.0 546,379.0 548,377.9 550,376.8 552,375.8 554,374.8 556,373.8 558,372.8 560,371.6 562,370.2 564,368.5 566,366.5 568,364.3 570,361.9 572,359.3 574,356.5 576,353.6 578,350.3 580,346.8 582,343.1 584,339.3 586,335.5 588,331.7 590,328.0 592,324.4 594,320.8 596,317.3 598,313.8 600,310.4 602,307.1 604,303.9 606,300.9 608,298.0 610,295.3 612,292.8 614,290.4 616,288.2 618,286.3 620,284.7 622,283.6 624,282.9 626,282.5 628,282.3 630,282.1 632,281.9 634,281.8 636,281.7 638,281.8 640,282.4 642,283.5 644,285.2 646,287.2 648,289.7 650,292.6 652,295.6 654,298.9 656,302.3 658,305.6 660,308.9 662,311.8 664,314.5 666,316.8 668,318.9 670,320.9 672,322.7 674,324.4 676,326.0 678,327.3 680,328.2 682,328.7 684,328.6 686,328.0 688,326.9 690,325.2 692,322.9 694,320.1 696,316.9 698,313.3 700,309.7 702,306.1 704,302.8 706,299.9 708,297.5 710,295.9 712,295.0 714,295.0 716,295.9 718,297.4 720,299.4 722,301.9 724,304.8 726,307.9 728,311.0 730,314.2 732,317.1 734,319.7 736,322.1 738,324.4 740,326.8 742,329.7 744,333.6 746,338.8 748,345.4 750,352.8 752,360.1 754,366.5 756,371.3 758,374.3 760,375.9 762,376.4 764,376.3 766,375.8 768,375.1 770,374.3 772,373.6 774,373.1 776,372.9 778,373.1 780,373.6 782,374.5 784,375.5 786,376.7 788,377.9 790,379.1 792,380.1 794,380.8 796,381.1 798,381.0 800,380.4 802,379.3 804,377.8 806,375.9 808,374.0 810,372.1 812,370.6 814,369.5 816,368.9 818,368.6 820,368.5" fill="none" stroke="#ffd01a" stroke-width="1"/><polyline points="284,327.0 286,326.0 288,324.1 290,321.4 292,317.8 294,313.6 296,309.2 298,305.1 300,301.4 302,298.5 304,296.4 306,295.1 308,294.5 310,294.6 312,295.1 314,296.1 316,297.5 318,299.3 320,301.3 322,303.4 324,305.3 326,306.9 328,308.0 330,308.7 332,308.8 334,308.6 336,308.0 338,307.4 340,307.0 342,307.1 344,308.2 346,310.1 348,312.5 350,314.8 352,316.5 354,317.1 356,316.7 358,315.3 360,313.3 362,310.9 364,308.4 366,306.1 368,304.0 370,302.3 372,300.9 374,299.8 376,299.1 378,298.9 380,299.4 382,300.9 384,303.6 386,307.3 388,311.8 390,316.7 392,321.4 394,325.9 396,329.8 398,333.3 400,336.3 402,338.9 404,341.2 406,343.2 408,345.0 410,346.6 412,347.9 414,348.9 416,349.5 418,349.7 420,349.5 422,348.8 424,347.7 426,346.2 428,344.4 430,342.5 432,340.6 434,338.6 436,336.7 438,335.0 440,333.3 442,331.8 444,330.5 446,329.3 448,328.3 450,327.4 452,326.6 454,325.9 456,325.3 458,324.7 460,324.2 462,323.7 464,323.3 466,322.9 468,322.5 470,322.3 472,322.1 474,322.2 476,322.5 478,323.0 480,324.0 482,325.3 484,327.0 486,328.9 488,331.1 490,333.5 492,335.9 494,338.5 496,341.0 498,343.5 500,346.0 502,348.5 504,350.9 506,353.2 508,355.5 510,357.7 512,359.7 514,361.6 516,363.4 518,365.1 520,366.7 522,368.3 524,369.8 526,371.4 528,373.1 530,374.8 532,376.5 534,378.1 536,379.2 538,379.9 540,379.9 542,379.5 544,378.8 546,377.8 548,376.8 550,375.8 552,374.8 554,373.9 556,373.0 558,372.0 560,370.8 562,369.5 564,367.8 566,366.0 568,363.8 570,361.5 572,359.0 574,356.3 576,353.5 578,350.4 580,347.0 582,343.4 584,339.7 586,336.1 588,332.4 590,328.9 592,325.4 594,321.9 596,318.5 598,315.1 600,311.8 602,308.6 604,305.5 606,302.6 608,299.8 610,297.1 612,294.6 614,292.2 616,290.0 618,288.0 620,286.4 622,285.3 624,284.5 626,284.1 628,283.9 630,283.7 632,283.5 634,283.3 636,283.2 638,283.3 640,283.9 642,284.9 644,286.5 646,288.5 648,290.9 650,293.6 652,296.5 654,299.6 656,302.9 658,306.1 660,309.2 662,312.0 664,314.5 666,316.8 668,318.8 670,320.7 672,322.4 674,324.1 676,325.6 678,326.8 680,327.7 682,328.2 684,328.1 686,327.5 688,326.4 690,324.8 692,322.6 694,319.9 696,316.8 698,313.4 700,309.9 702,306.5 704,303.3 706,300.5 708,298.2 710,296.6 712,295.8 714,295.9 716,296.7 718,298.1 720,300.1 722,302.5 724,305.2 726,308.2 728,311.3 730,314.3 732,317.1 734,319.6 736,321.9 738,324.1 740,326.4 742,329.3 744,333.0 746,338.1 748,344.4 750,351.6 752,358.7 754,364.8 756,369.5 758,372.5 760,374.0 762,374.6 764,374.5 766,374.0 768,373.4 770,372.7 772,372.0 774,371.5 776,371.4 778,371.6 780,372.1 782,373.0 784,374.0 786,375.2 788,376.4 790,377.5 792,378.5 794,379.2 796,379.6 798,379.5 800,379.0 802,377.9 804,376.5 806,374.7 808,372.9 810,371.2 812,369.7 814,368.7 816,368.1 818,367.8 820,367.7" fill="none" stroke="#ffcf1d" stroke-width="1"/><polyline points="284,328.6 286,327.6 288,325.8 290,323.1 292,319.6 294,315.5 296,311.2 298,307.2 300,303.6 302,300.7 304,298.6 306,297.3 308,296.7 310,296.7 312,297.2 314,298.1 316,299.4 318,301.0 320,302.9 322,304.9 324,306.7 326,308.2 328,309.2 330,309.8 332,310.0 334,309.7 336,309.1 338,308.5 340,308.0 342,308.2 344,309.2 346,311.0 348,313.2 350,315.4 352,317.0 354,317.7 356,317.2 358,315.8 360,313.8 362,311.5 364,309.1 366,306.9 368,304.9 370,303.2 372,301.8 374,300.7 376,300.1 378,299.8 380,300.3 382,301.8 384,304.3 386,307.9 388,312.3 390,316.9 392,321.5 394,325.8 396,329.6 398,333.0 400,335.9 402,338.4 404,340.6 406,342.6 408,344.4 410,345.9 412,347.1 414,348.1 416,348.7 418,349.0 420,348.8 422,348.1 424,347.0 426,345.6 428,344.0 430,342.2 432,340.3 434,338.4 436,336.6 438,334.9 440,333.3 442,331.8 444,330.5 446,329.4 448,328.4 450,327.5 452,326.7 454,326.1 456,325.5 458,324.9 460,324.4 462,324.0 464,323.5 466,323.1 468,322.8 470,322.5 472,322.4 474,322.5 476,322.7 478,323.3 480,324.3 482,325.5 484,327.2 486,329.1 488,331.2 490,333.5 492,335.9 494,338.3 496,340.8 498,343.2 500,345.6 502,348.0 504,350.4 506,352.7 508,354.9 510,357.0 512,358.9 514,360.8 516,362.5 518,364.2 520,365.7 522,367.3 524,368.8 526,370.3 528,371.9 530,373.6 532,375.3 534,376.8 536,377.9 538,378.5 540,378.6 542,378.3 544,377.6 546,376.7 548,375.7 550,374.7 552,373.8 554,372.9 556,372.1 558,371.1 560,370.0 562,368.7 564,367.2 566,365.4 568,363.3 570,361.1 572,358.7 574,356.2 576,353.4 578,350.4 580,347.2 582,343.8 584,340.2 586,336.7 588,333.2 590,329.8 592,326.4 594,323.1 596,319.7 598,316.5 600,313.3 602,310.2 604,307.2 606,304.3 608,301.5 610,298.9 612,296.4 614,294.0 616,291.8 618,289.8 620,288.2 622,287.0 624,286.2 626,285.7 628,285.4 630,285.2 632,285.0 634,284.8 636,284.7 638,284.8 640,285.4 642,286.4 644,287.8 646,289.7 648,292.0 650,294.6 652,297.4 654,300.4 656,303.5 658,306.5 660,309.5 662,312.2 664,314.6 666,316.8 668,318.7 670,320.5 672,322.1 674,323.7 676,325.2 678,326.4 680,327.2 682,327.6 684,327.6 686,327.0 688,326.0 690,324.4 692,322.3 694,319.8 696,316.8 698,313.5 700,310.2 702,306.9 704,303.8 706,301.1 708,298.9 710,297.4 712,296.6 714,296.7 716,297.4 718,298.8 720,300.7 722,303.0 724,305.7 726,308.5 728,311.5 730,314.4 732,317.1 734,319.5 736,321.8 738,323.9 740,326.1 742,328.8 744,332.4 746,337.3 748,343.5 750,350.4 752,357.2 754,363.2 756,367.7 758,370.6 760,372.1 762,372.7 764,372.6 766,372.2 768,371.6 770,371.0 772,370.4 774,370.0 776,369.9 778,370.1 780,370.7 782,371.5 784,372.5 786,373.7 788,374.9 790,376.0 792,377.0 794,377.7 796,378.1 798,378.0 800,377.5 802,376.6 804,375.2 806,373.6 808,371.8 810,370.2 812,368.8 814,367.9 816,367.3 818,367.1 820,367.0" fill="none" stroke="#ffcd20" stroke-width="1"/><polyline points="284,330.3 286,329.2 288,327.5 290,324.8 292,321.4 294,317.4 296,313.3 298,309.3 300,305.8 302,303.0 304,300.9 306,299.6 308,298.9 310,298.8 312,299.2 314,300.0 316,301.2 318,302.8 320,304.5 322,306.4 324,308.0 326,309.4 328,310.4 330,311.0 332,311.1 334,310.8 336,310.2 338,309.6 340,309.1 342,309.3 344,310.2 346,311.9 348,314.0 350,316.1 352,317.6 354,318.2 356,317.7 358,316.4 360,314.4 362,312.2 364,309.9 366,307.7 368,305.7 370,304.1 372,302.7 374,301.7 376,301.0 378,300.8 380,301.3 382,302.6 384,305.1 386,308.5 388,312.7 390,317.2 392,321.6 394,325.8 396,329.4 398,332.7 400,335.4 402,337.9 404,340.1 406,342.0 408,343.7 410,345.2 412,346.4 414,347.3 416,348.0 418,348.2 420,348.0 422,347.4 424,346.4 426,345.1 428,343.5 430,341.8 432,340.0 434,338.2 436,336.4 438,334.8 440,333.3 442,331.9 444,330.6 446,329.5 448,328.5 450,327.7 452,326.9 454,326.3 456,325.7 458,325.1 460,324.7 462,324.2 464,323.8 466,323.4 468,323.0 470,322.8 472,322.7 474,322.7 476,323.0 478,323.6 480,324.5 482,325.8 484,327.3 486,329.2 488,331.3 490,333.5 492,335.8 494,338.2 496,340.5 498,342.9 500,345.3 502,347.6 504,349.9 506,352.1 508,354.2 510,356.2 512,358.2 514,360.0 516,361.7 518,363.3 520,364.8 522,366.2 524,367.7 526,369.2 528,370.8 530,372.4 532,374.0 534,375.5 536,376.6 538,377.2 540,377.3 542,377.0 544,376.3 546,375.5 548,374.6 550,373.7 552,372.8 554,372.0 556,371.2 558,370.3 560,369.2 562,368.0 564,366.5 566,364.8 568,362.8 570,360.7 572,358.4 574,356.0 576,353.3 578,350.5 580,347.4 582,344.1 584,340.7 586,337.3 588,333.9 590,330.7 592,327.4 594,324.2 596,321.0 598,317.9 600,314.8 602,311.8 604,308.9 606,306.0 608,303.3 610,300.8 612,298.3 614,295.9 616,293.6 618,291.6 620,289.9 622,288.7 624,287.9 626,287.4 628,287.1 630,286.8 632,286.6 634,286.4 636,286.3 638,286.4 640,286.9 642,287.8 644,289.2 646,291.0 648,293.2 650,295.6 652,298.3 654,301.1 656,304.1 658,307.0 660,309.8 662,312.4 664,314.7 666,316.7 668,318.6 670,320.2 672,321.8 674,323.4 676,324.7 678,325.9 680,326.7 682,327.1 684,327.1 686,326.5 688,325.5 690,324.0 692,322.0 694,319.6 696,316.7 698,313.6 700,310.4 702,307.2 704,304.3 706,301.7 708,299.7 710,298.2 712,297.5 714,297.5 716,298.2 718,299.6 720,301.4 722,303.6 724,306.1 726,308.9 728,311.7 730,314.5 732,317.0 734,319.4 736,321.6 738,323.6 740,325.7 742,328.3 744,331.8 746,336.5 748,342.5 750,349.1 752,355.7 754,361.5 756,365.8 758,368.7 760,370.2 762,370.8 764,370.7 766,370.4 768,369.9 770,369.3 772,368.7 774,368.4 776,368.3 778,368.6 780,369.1 782,370.0 784,371.0 786,372.2 788,373.3 790,374.4 792,375.4 794,376.1 796,376.5 798,376.5 800,376.0 802,375.1 804,373.9 806,372.3 808,370.7 810,369.2 812,367.9 814,367.0 816,366.5 818,366.3 820,366.2" fill="none" stroke="#ffcb22" stroke-width="1"/><polyline points="284,331.9 286,330.9 288,329.2 290,326.6 292,323.2 294,319.4 296,315.3 298,311.5 300,308.1 302,305.3 304,303.2 306,301.9 308,301.2 310,301.0 312,301.3 314,302.0 316,303.1 318,304.5 320,306.2 322,307.9 324,309.5 326,310.7 328,311.7 330,312.1 332,312.2 334,311.9 336,311.3 338,310.7 340,310.3 342,310.3 344,311.2 346,312.8 348,314.8 350,316.8 352,318.2 354,318.7 356,318.2 358,316.9 360,315.1 362,312.9 364,310.6 366,308.5 368,306.6 370,305.0 372,303.7 374,302.7 376,302.0 378,301.8 380,302.2 382,303.5 384,305.9 386,309.2 388,313.2 390,317.5 392,321.7 394,325.7 396,329.2 398,332.3 400,335.0 402,337.4 404,339.5 406,341.3 408,343.0 410,344.4 412,345.6 414,346.6 416,347.2 418,347.4 420,347.3 422,346.7 424,345.8 426,344.5 428,343.0 430,341.4 432,339.6 434,337.9 436,336.3 438,334.7 440,333.2 442,331.9 444,330.7 446,329.6 448,328.6 450,327.8 452,327.1 454,326.5 456,325.9 458,325.4 460,324.9 462,324.4 464,324.0 466,323.6 468,323.3 470,323.1 472,323.0 474,323.0 476,323.3 478,323.9 480,324.8 482,326.0 484,327.5 486,329.3 488,331.3 490,333.5 492,335.7 494,338.0 496,340.3 498,342.6 500,344.9 502,347.1 504,349.3 506,351.5 508,353.6 510,355.5 512,357.4 514,359.1 516,360.8 518,362.3 520,363.8 522,365.2 524,366.6 526,368.1 528,369.6 530,371.2 532,372.7 534,374.1 536,375.2 538,375.8 540,376.0 542,375.7 544,375.1 546,374.3 548,373.4 550,372.6 552,371.8 554,371.0 556,370.3 558,369.4 560,368.4 562,367.3 564,365.8 566,364.2 568,362.3 570,360.3 572,358.1 574,355.7 576,353.2 578,350.5 580,347.5 582,344.4 584,341.2 586,337.9 588,334.7 590,331.6 592,328.5 594,325.4 596,322.3 598,319.3 600,316.3 602,313.4 604,310.6 606,307.8 608,305.2 610,302.6 612,300.1 614,297.7 616,295.5 618,293.4 620,291.7 622,290.4 624,289.6 626,289.0 628,288.7 630,288.4 632,288.2 634,288.0 636,287.8 638,287.9 640,288.4 642,289.2 644,290.6 646,292.3 648,294.3 650,296.6 652,299.2 654,301.9 656,304.7 658,307.5 660,310.1 662,312.6 664,314.8 666,316.7 668,318.4 670,320.0 672,321.5 674,323.0 676,324.3 678,325.4 680,326.2 682,326.6 684,326.5 686,326.0 688,325.1 690,323.6 692,321.7 694,319.4 696,316.7 698,313.7 700,310.6 702,307.6 704,304.8 706,302.4 708,300.4 710,299.0 712,298.3 714,298.3 716,299.0 718,300.3 720,302.0 722,304.2 724,306.6 726,309.2 728,311.9 730,314.6 732,317.0 734,319.3 736,321.4 738,323.3 740,325.4 742,327.9 744,331.2 746,335.8 748,341.4 750,347.8 752,354.2 754,359.7 756,364.0 758,366.7 760,368.2 762,368.8 764,368.8 766,368.6 768,368.1 770,367.6 772,367.1 774,366.8 776,366.7 778,367.0 780,367.6 782,368.4 784,369.5 786,370.6 788,371.7 790,372.8 792,373.8 794,374.5 796,374.9 798,374.9 800,374.5 802,373.7 804,372.5 806,371.1 808,369.6 810,368.2 812,367.0 814,366.2 816,365.7 818,365.5 820,365.5" fill="none" stroke="#ffca25" stroke-width="1"/><polyline points="284,333.6 286,332.6 288,330.9 290,328.4 292,325.1 294,321.3 296,317.4 298,313.7 300,310.4 302,307.6 304,305.6 306,304.2 308,303.5 310,303.2 312,303.5 314,304.1 316,305.0 318,306.3 320,307.8 322,309.4 324,310.9 326,312.1 328,312.9 330,313.3 332,313.4 334,313.0 336,312.5 338,311.8 340,311.4 342,311.5 344,312.2 346,313.7 348,315.6 350,317.5 352,318.8 354,319.2 356,318.8 358,317.5 360,315.7 362,313.6 364,311.4 366,309.3 368,307.5 370,305.9 372,304.6 374,303.7 376,303.0 378,302.7 380,303.1 382,304.4 384,306.6 386,309.8 388,313.6 390,317.7 392,321.8 394,325.6 396,329.0 398,332.0 400,334.6 402,336.9 404,338.9 406,340.7 408,342.3 410,343.7 412,344.9 414,345.8 416,346.4 418,346.7 420,346.5 422,346.0 424,345.1 426,344.0 428,342.5 430,341.0 432,339.3 434,337.7 436,336.1 438,334.6 440,333.2 442,331.9 444,330.7 446,329.7 448,328.8 450,328.0 452,327.3 454,326.7 456,326.1 458,325.6 460,325.1 462,324.7 464,324.3 466,323.9 468,323.6 470,323.4 472,323.3 474,323.3 476,323.6 478,324.2 480,325.1 482,326.2 484,327.7 486,329.5 488,331.4 490,333.5 492,335.7 494,337.9 496,340.1 498,342.3 500,344.5 502,346.7 504,348.8 506,350.9 508,352.9 510,354.8 512,356.6 514,358.3 516,359.9 518,361.3 520,362.8 522,364.1 524,365.5 526,366.9 528,368.4 530,369.9 532,371.4 534,372.8 536,373.8 538,374.5 540,374.6 542,374.4 544,373.8 546,373.1 548,372.3 550,371.5 552,370.8 554,370.1 556,369.3 558,368.5 560,367.6 562,366.5 564,365.2 566,363.6 568,361.8 570,359.9 572,357.8 574,355.5 576,353.2 578,350.6 580,347.7 582,344.7 584,341.6 586,338.5 588,335.5 590,332.5 592,329.5 594,326.6 596,323.6 598,320.7 600,317.8 602,315.0 604,312.3 606,309.6 608,307.0 610,304.5 612,302.0 614,299.6 616,297.3 618,295.3 620,293.5 622,292.2 624,291.3 626,290.7 628,290.3 630,290.1 632,289.8 634,289.6 636,289.4 638,289.5 640,289.9 642,290.7 644,292.0 646,293.6 648,295.5 650,297.7 652,300.1 654,302.6 656,305.3 658,307.9 660,310.4 662,312.8 664,314.8 666,316.7 668,318.3 670,319.8 672,321.3 674,322.6 676,323.9 678,324.9 680,325.6 682,326.0 684,326.0 686,325.5 688,324.6 690,323.2 692,321.4 694,319.2 696,316.6 698,313.8 700,310.9 702,308.0 704,305.3 706,303.0 708,301.1 710,299.8 712,299.1 714,299.2 716,299.9 718,301.1 720,302.7 722,304.7 724,307.0 726,309.6 728,312.1 730,314.7 732,317.0 734,319.2 736,321.2 738,323.0 740,325.0 742,327.4 744,330.6 746,335.0 748,340.4 750,346.6 752,352.7 754,358.0 756,362.1 758,364.7 760,366.2 762,366.8 764,366.9 766,366.7 768,366.3 770,365.8 772,365.4 774,365.2 776,365.2 778,365.5 780,366.1 782,366.9 784,367.9 786,369.0 788,370.1 790,371.2 792,372.1 794,372.9 796,373.3 798,373.4 800,373.0 802,372.3 804,371.2 806,369.9 808,368.5 810,367.1 812,366.0 814,365.3 816,364.9 818,364.7 820,364.7" fill="none" stroke="#ffa850" stroke-width="1"/><polyline points="284,335.4 286,334.3 288,332.6 290,330.2 292,327.0 294,323.3 296,319.5 298,315.9 300,312.7 302,310.0 304,308.0 306,306.6 308,305.8 310,305.5 312,305.6 314,306.1 316,307.0 318,308.1 320,309.5 322,311.0 324,312.3 326,313.4 328,314.2 330,314.5 332,314.5 334,314.2 336,313.6 338,313.0 340,312.5 342,312.6 344,313.3 346,314.7 348,316.5 350,318.2 352,319.4 354,319.8 356,319.3 358,318.1 360,316.3 362,314.2 364,312.2 366,310.2 368,308.4 370,306.9 372,305.6 374,304.7 376,304.0 378,303.7 380,304.1 382,305.3 384,307.4 386,310.4 388,314.1 390,318.0 392,321.9 394,325.6 396,328.8 398,331.7 400,334.2 402,336.4 404,338.3 406,340.1 408,341.6 410,342.9 412,344.1 414,345.0 416,345.6 418,345.9 420,345.8 422,345.3 424,344.5 426,343.4 428,342.0 430,340.6 432,339.0 434,337.4 436,335.9 438,334.5 440,333.1 442,331.9 444,330.8 446,329.8 448,328.9 450,328.1 452,327.4 454,326.8 456,326.3 458,325.8 460,325.3 462,324.9 464,324.5 466,324.2 468,323.9 470,323.7 472,323.6 474,323.6 476,323.9 478,324.5 480,325.3 482,326.5 484,327.9 486,329.6 488,331.5 490,333.5 492,335.6 494,337.7 496,339.9 498,342.0 500,344.1 502,346.2 504,348.3 506,350.3 508,352.2 510,354.0 512,355.8 514,357.4 516,358.9 518,360.4 520,361.7 522,363.1 524,364.4 526,365.8 528,367.2 530,368.7 532,370.1 534,371.4 536,372.5 538,373.1 540,373.2 542,373.0 544,372.5 546,371.9 548,371.1 550,370.4 552,369.7 554,369.1 556,368.4 558,367.7 560,366.8 562,365.7 564,364.5 566,363.0 568,361.3 570,359.4 572,357.4 574,355.3 576,353.1 578,350.6 580,347.9 582,345.1 584,342.1 586,339.2 588,336.3 590,333.4 592,330.6 594,327.7 596,324.9 598,322.1 600,319.4 602,316.7 604,314.0 606,311.4 608,308.9 610,306.4 612,303.9 614,301.5 616,299.2 618,297.1 620,295.3 622,294.0 624,293.0 626,292.4 628,292.0 630,291.7 632,291.4 634,291.2 636,291.0 638,291.1 640,291.5 642,292.2 644,293.4 646,294.9 648,296.7 650,298.8 652,301.0 654,303.4 656,305.9 658,308.4 660,310.8 662,312.9 664,314.9 666,316.6 668,318.2 670,319.6 672,320.9 674,322.2 676,323.4 678,324.4 680,325.1 682,325.5 684,325.4 686,325.0 688,324.1 690,322.8 692,321.1 694,319.0 696,316.6 698,313.9 700,311.1 702,308.4 704,305.9 706,303.7 708,301.9 710,300.6 712,300.0 714,300.0 716,300.7 718,301.8 720,303.4 722,305.3 724,307.5 726,309.9 728,312.4 730,314.8 732,317.0 734,319.1 736,320.9 738,322.7 740,324.6 742,326.9 744,330.0 746,334.2 748,339.4 750,345.3 752,351.1 754,356.2 756,360.2 758,362.8 760,364.2 762,364.8 764,365.0 766,364.8 768,364.4 770,364.0 772,363.7 774,363.5 776,363.6 778,363.9 780,364.5 782,365.3 784,366.3 786,367.4 788,368.5 790,369.6 792,370.5 794,371.2 796,371.7 798,371.8 800,371.5 802,370.8 804,369.8 806,368.6 808,367.3 810,366.1 812,365.1 814,364.4 816,364.0 818,363.9 820,363.9" fill="none" stroke="#fea750" stroke-width="1"/><polyline points="284,337.1 286,336.1 288,334.4 290,332.0 292,328.9 294,325.4 296,321.7 298,318.2 300,315.0 302,312.4 304,310.3 306,308.9 308,308.1 310,307.7 312,307.8 314,308.2 316,308.9 318,310.0 320,311.2 322,312.5 324,313.8 326,314.8 328,315.4 330,315.7 332,315.7 334,315.3 336,314.8 338,314.1 340,313.7 342,313.7 344,314.3 346,315.6 348,317.3 350,318.9 352,320.0 354,320.3 356,319.8 358,318.6 360,316.9 362,315.0 364,312.9 366,311.0 368,309.3 370,307.8 372,306.6 374,305.7 376,305.0 378,304.7 380,305.1 382,306.2 384,308.2 386,311.1 388,314.5 390,318.3 392,322.0 394,325.5 396,328.6 398,331.4 400,333.8 402,335.9 404,337.7 406,339.4 408,340.9 410,342.2 412,343.3 414,344.2 416,344.8 418,345.1 420,345.0 422,344.6 424,343.8 426,342.8 428,341.6 430,340.2 432,338.7 434,337.2 436,335.8 438,334.4 440,333.1 442,331.9 444,330.8 446,329.9 448,329.0 450,328.3 452,327.6 454,327.0 456,326.5 458,326.0 460,325.6 462,325.2 464,324.8 466,324.4 468,324.1 470,323.9 472,323.9 474,323.9 476,324.2 478,324.8 480,325.6 482,326.7 484,328.1 486,329.8 488,331.6 490,333.5 492,335.5 494,337.6 496,339.6 498,341.7 500,343.7 502,345.8 504,347.7 506,349.7 508,351.5 510,353.3 512,355.0 514,356.5 516,358.0 518,359.4 520,360.7 522,362.0 524,363.3 526,364.6 528,366.0 530,367.4 532,368.8 534,370.1 536,371.1 538,371.7 540,371.8 542,371.7 544,371.2 546,370.6 548,370.0 550,369.3 552,368.7 554,368.1 556,367.5 558,366.8 560,366.0 562,365.0 564,363.8 566,362.4 568,360.8 570,359.0 572,357.1 574,355.1 576,353.0 578,350.6 580,348.1 582,345.4 584,342.6 586,339.8 588,337.1 590,334.4 592,331.6 594,329.0 596,326.3 598,323.6 600,320.9 602,318.3 604,315.8 606,313.3 608,310.8 610,308.3 612,305.9 614,303.5 616,301.1 618,299.0 620,297.2 622,295.8 624,294.8 626,294.1 628,293.7 630,293.4 632,293.1 634,292.8 636,292.7 638,292.7 640,293.0 642,293.7 644,294.8 646,296.2 648,297.9 650,299.8 652,302.0 654,304.2 656,306.5 658,308.9 660,311.1 662,313.1 664,315.0 666,316.6 668,318.0 670,319.4 672,320.6 674,321.9 676,323.0 678,323.9 680,324.6 682,324.9 684,324.9 686,324.5 688,323.6 690,322.4 692,320.8 694,318.8 696,316.5 698,314.0 700,311.4 702,308.8 704,306.4 706,304.3 708,302.6 710,301.5 712,300.9 714,300.9 716,301.5 718,302.6 720,304.1 722,305.9 724,308.0 726,310.3 728,312.6 730,314.9 732,317.0 734,319.0 736,320.7 738,322.4 740,324.2 742,326.4 744,329.4 746,333.3 748,338.3 750,343.9 752,349.5 754,354.5 756,358.2 758,360.7 760,362.2 762,362.8 764,363.0 766,362.9 768,362.6 770,362.3 772,362.0 774,361.8 776,361.9 778,362.3 780,362.9 782,363.7 784,364.7 786,365.8 788,366.9 790,367.9 792,368.8 794,369.6 796,370.0 798,370.2 800,369.9 802,369.3 804,368.5 806,367.3 808,366.1 810,365.0 812,364.1 814,363.5 816,363.2 818,363.1 820,363.1" fill="none" stroke="#fda751" stroke-width="1"/><polyline points="284,338.8 286,337.8 288,336.2 290,333.8 292,330.8 294,327.4 296,323.8 298,320.4 300,317.3 302,314.8 304,312.8 306,311.4 308,310.5 310,310.0 312,310.0 314,310.3 316,310.9 318,311.8 320,312.9 322,314.1 324,315.2 326,316.1 328,316.7 330,317.0 332,316.9 334,316.5 336,315.9 338,315.3 340,314.9 342,314.8 344,315.4 346,316.6 348,318.1 350,319.6 352,320.6 354,320.9 356,320.4 358,319.2 360,317.6 362,315.7 364,313.7 366,311.9 368,310.2 370,308.8 372,307.6 374,306.7 376,306.0 378,305.8 380,306.1 382,307.1 384,309.0 386,311.7 388,315.0 390,318.6 392,322.1 394,325.5 396,328.4 398,331.0 400,333.3 402,335.3 404,337.1 406,338.7 408,340.2 410,341.4 412,342.5 414,343.4 416,344.0 418,344.3 420,344.2 422,343.9 424,343.2 426,342.2 428,341.1 430,339.7 432,338.4 434,337.0 436,335.6 438,334.3 440,333.0 442,331.9 444,330.9 446,330.0 448,329.2 450,328.4 452,327.8 454,327.2 456,326.7 458,326.3 460,325.8 462,325.4 464,325.0 466,324.7 468,324.4 470,324.2 472,324.2 474,324.3 476,324.6 478,325.1 480,325.9 482,327.0 484,328.3 486,329.9 488,331.6 490,333.5 492,335.4 494,337.4 496,339.4 498,341.4 500,343.3 502,345.3 504,347.2 506,349.0 508,350.8 510,352.5 512,354.1 514,355.6 516,357.1 518,358.4 520,359.7 522,360.9 524,362.2 526,363.4 528,364.7 530,366.1 532,367.5 534,368.7 536,369.6 538,370.2 540,370.4 542,370.3 544,369.9 546,369.4 548,368.8 550,368.2 552,367.6 554,367.1 556,366.5 558,365.9 560,365.1 562,364.2 564,363.1 566,361.7 568,360.2 570,358.6 572,356.8 574,354.9 576,352.9 578,350.7 580,348.3 582,345.7 584,343.1 586,340.5 588,337.9 590,335.3 592,332.7 594,330.2 596,327.6 598,325.1 600,322.5 602,320.0 604,317.6 606,315.1 608,312.7 610,310.3 612,307.8 614,305.4 616,303.1 618,300.9 620,299.1 622,297.6 624,296.6 626,295.9 628,295.4 630,295.1 632,294.8 634,294.5 636,294.3 638,294.3 640,294.6 642,295.3 644,296.2 646,297.6 648,299.1 650,300.9 652,302.9 654,305.0 656,307.2 658,309.4 660,311.4 662,313.3 664,315.0 666,316.5 668,317.9 670,319.1 672,320.3 674,321.5 676,322.5 678,323.4 680,324.0 682,324.3 684,324.3 686,323.9 688,323.1 690,322.0 692,320.5 694,318.6 696,316.4 698,314.1 700,311.6 702,309.2 704,307.0 706,305.0 708,303.4 710,302.3 712,301.8 714,301.8 716,302.4 718,303.4 720,304.8 722,306.5 724,308.5 726,310.6 728,312.8 730,315.0 732,317.0 734,318.8 736,320.5 738,322.1 740,323.8 742,325.9 744,328.7 746,332.5 748,337.3 750,342.6 752,348.0 754,352.7 756,356.3 758,358.7 760,360.1 762,360.8 764,361.0 766,360.9 768,360.7 770,360.5 772,360.2 774,360.2 776,360.3 778,360.7 780,361.3 782,362.1 784,363.1 786,364.1 788,365.2 790,366.2 792,367.1 794,367.9 796,368.4 798,368.5 800,368.4 802,367.9 804,367.1 806,366.1 808,365.0 810,364.0 812,363.2 814,362.6 816,362.3 818,362.3 820,362.3" fill="none" stroke="#fda651" stroke-width="1"/><polyline points="284,340.6 286,339.6 288,338.0 290,335.7 292,332.8 294,329.5 296,326.0 298,322.7 300,319.7 302,317.2 304,315.2 306,313.8 308,312.9 310,312.3 312,312.2 314,312.4 316,312.9 318,313.7 320,314.7 322,315.7 324,316.7 326,317.5 328,318.0 330,318.2 332,318.1 334,317.7 336,317.1 338,316.5 340,316.0 342,316.0 344,316.5 346,317.6 348,319.0 350,320.3 352,321.2 354,321.5 356,320.9 358,319.8 360,318.2 362,316.4 364,314.5 366,312.8 368,311.2 370,309.8 372,308.6 374,307.7 376,307.1 378,306.8 380,307.0 382,308.0 384,309.8 386,312.4 388,315.5 390,318.9 392,322.2 394,325.4 396,328.2 398,330.7 400,332.9 402,334.8 404,336.5 406,338.1 408,339.4 410,340.7 412,341.7 414,342.5 416,343.1 418,343.4 420,343.4 422,343.1 424,342.5 426,341.6 428,340.6 430,339.3 432,338.0 434,336.7 436,335.4 438,334.2 440,333.0 442,331.9 444,330.9 446,330.1 448,329.3 450,328.6 452,328.0 454,327.4 456,327.0 458,326.5 460,326.1 462,325.7 464,325.3 466,325.0 468,324.7 470,324.5 472,324.5 474,324.6 476,324.9 478,325.4 480,326.2 482,327.2 484,328.5 486,330.0 488,331.7 490,333.5 492,335.4 494,337.3 496,339.2 498,341.1 500,342.9 502,344.8 504,346.6 506,348.4 508,350.1 510,351.8 512,353.3 514,354.7 516,356.1 518,357.4 520,358.6 522,359.8 524,361.0 526,362.2 528,363.5 530,364.8 532,366.1 534,367.3 536,368.2 538,368.8 540,369.0 542,368.9 544,368.6 546,368.1 548,367.6 550,367.1 552,366.6 554,366.1 556,365.6 558,365.0 560,364.3 562,363.4 564,362.3 566,361.1 568,359.7 570,358.1 572,356.5 574,354.7 576,352.8 578,350.7 580,348.5 582,346.1 584,343.6 586,341.1 588,338.7 590,336.3 592,333.8 594,331.4 596,329.0 598,326.5 600,324.1 602,321.7 604,319.4 606,317.0 608,314.6 610,312.2 612,309.8 614,307.4 616,305.0 618,302.8 620,300.9 622,299.5 624,298.4 626,297.6 628,297.1 630,296.8 632,296.5 634,296.2 636,296.0 638,296.0 640,296.2 642,296.8 644,297.7 646,298.9 648,300.4 650,302.0 652,303.9 654,305.8 656,307.8 658,309.8 660,311.8 662,313.5 664,315.1 666,316.5 668,317.8 670,318.9 672,320.0 674,321.1 676,322.1 678,322.9 680,323.5 682,323.8 684,323.7 686,323.4 688,322.7 690,321.6 692,320.2 694,318.4 696,316.4 698,314.2 700,311.8 702,309.6 704,307.5 706,305.7 708,304.2 710,303.2 712,302.6 714,302.7 716,303.2 718,304.2 720,305.5 722,307.1 724,309.0 726,311.0 728,313.1 730,315.1 732,317.0 734,318.7 736,320.3 738,321.8 740,323.4 742,325.4 744,328.1 746,331.7 748,336.2 750,341.3 752,346.3 754,350.8 756,354.3 758,356.7 760,358.0 762,358.7 764,359.0 766,359.0 768,358.8 770,358.6 772,358.5 774,358.5 776,358.6 778,359.0 780,359.7 782,360.5 784,361.5 786,362.5 788,363.5 790,364.5 792,365.4 794,366.2 796,366.7 798,366.9 800,366.8 802,366.3 804,365.6 806,364.8 808,363.8 810,362.9 812,362.2 814,361.7 816,361.5 818,361.4 820,361.5" fill="none" stroke="#fca552" stroke-width="1"/><polyline points="284,342.4 286,341.4 288,339.8 290,337.6 292,334.8 294,331.6 296,328.2 298,325.0 300,322.1 302,319.7 304,317.7 306,316.2 308,315.3 310,314.7 312,314.4 314,314.5 316,314.9 318,315.6 320,316.4 322,317.4 324,318.2 326,318.9 328,319.3 330,319.5 332,319.3 334,318.9 336,318.3 338,317.7 340,317.2 342,317.2 344,317.6 346,318.6 348,319.8 350,321.1 352,321.9 354,322.0 356,321.5 358,320.4 360,318.8 362,317.1 364,315.3 366,313.6 368,312.1 370,310.8 372,309.6 374,308.7 376,308.1 378,307.8 380,308.0 382,308.9 384,310.6 386,313.0 388,316.0 390,319.2 392,322.3 394,325.3 396,328.0 398,330.4 400,332.4 402,334.3 404,335.9 406,337.4 408,338.7 410,339.9 412,340.9 414,341.7 416,342.3 418,342.6 420,342.7 422,342.4 424,341.8 426,341.0 428,340.0 430,338.9 432,337.7 434,336.5 436,335.2 438,334.1 440,333.0 442,331.9 444,331.0 446,330.2 448,329.4 450,328.8 452,328.2 454,327.7 456,327.2 458,326.7 460,326.3 462,325.9 464,325.6 466,325.2 468,325.0 470,324.8 472,324.8 474,324.9 476,325.2 478,325.7 480,326.5 482,327.5 484,328.7 486,330.2 488,331.8 490,333.5 492,335.3 494,337.1 496,338.9 498,340.7 500,342.6 502,344.3 504,346.1 506,347.8 508,349.4 510,351.0 512,352.5 514,353.8 516,355.2 518,356.4 520,357.6 522,358.7 524,359.9 526,361.0 528,362.2 530,363.5 532,364.7 534,365.9 536,366.8 538,367.3 540,367.6 542,367.5 544,367.2 546,366.8 548,366.4 550,365.9 552,365.5 554,365.0 556,364.6 558,364.0 560,363.4 562,362.6 564,361.6 566,360.5 568,359.1 570,357.7 572,356.1 574,354.5 576,352.7 578,350.8 580,348.7 582,346.4 584,344.1 586,341.8 588,339.5 590,337.2 592,334.9 594,332.6 596,330.3 598,328.0 600,325.7 602,323.5 604,321.2 606,318.9 608,316.6 610,314.2 612,311.8 614,309.4 616,307.0 618,304.8 620,302.8 622,301.3 624,300.2 626,299.4 628,298.9 630,298.5 632,298.2 634,297.9 636,297.7 638,297.6 640,297.8 642,298.4 644,299.2 646,300.3 648,301.6 650,303.1 652,304.8 654,306.6 656,308.5 658,310.3 660,312.1 662,313.7 664,315.2 666,316.5 668,317.6 670,318.7 672,319.7 674,320.7 676,321.6 678,322.3 680,322.9 682,323.2 684,323.2 686,322.8 688,322.2 690,321.2 692,319.8 694,318.2 696,316.3 698,314.2 700,312.1 702,310.0 704,308.1 706,306.4 708,305.0 710,304.0 712,303.5 714,303.6 716,304.1 718,305.0 720,306.2 722,307.7 724,309.5 726,311.4 728,313.3 730,315.2 732,317.0 734,318.6 736,320.1 738,321.5 740,323.1 742,324.9 744,327.5 746,330.8 748,335.1 750,339.9 752,344.7 754,349.0 756,352.3 758,354.6 760,355.9 762,356.6 764,356.9 766,357.0 768,356.9 770,356.8 772,356.7 774,356.7 776,356.9 778,357.4 780,358.0 782,358.9 784,359.8 786,360.8 788,361.8 790,362.8 792,363.7 794,364.5 796,365.0 798,365.2 800,365.2 802,364.8 804,364.2 806,363.4 808,362.6 810,361.8 812,361.2 814,360.8 816,360.6 818,360.6 820,360.7" fill="none" stroke="#fba452" stroke-width="1"/><polyline points="284,344.2 286,343.2 288,341.6 290,339.5 292,336.7 294,333.7 296,330.5 298,327.4 300,324.5 302,322.1 304,320.2 306,318.7 308,317.7 310,317.0 312,316.7 314,316.7 316,316.9 318,317.5 320,318.2 322,319.0 324,319.7 326,320.3 328,320.6 330,320.7 332,320.5 334,320.1 336,319.5 338,318.9 340,318.4 342,318.3 344,318.7 346,319.6 348,320.7 350,321.8 352,322.5 354,322.6 356,322.1 358,321.0 360,319.5 362,317.8 364,316.1 366,314.5 368,313.0 370,311.7 372,310.7 374,309.8 376,309.2 378,308.9 380,309.1 382,309.9 384,311.5 386,313.7 388,316.5 390,319.5 392,322.5 394,325.3 396,327.8 398,330.0 400,332.0 402,333.7 404,335.3 406,336.7 408,338.0 410,339.1 412,340.1 414,340.9 416,341.4 418,341.8 420,341.9 422,341.6 424,341.2 426,340.4 428,339.5 430,338.5 432,337.4 434,336.2 436,335.1 438,334.0 440,332.9 442,331.9 444,331.1 446,330.3 448,329.6 450,328.9 452,328.4 454,327.9 456,327.4 458,327.0 460,326.6 462,326.2 464,325.8 466,325.5 468,325.3 470,325.1 472,325.1 474,325.2 476,325.5 478,326.0 480,326.8 482,327.7 484,328.9 486,330.3 488,331.9 490,333.5 492,335.2 494,336.9 496,338.7 498,340.4 500,342.1 502,343.9 504,345.5 506,347.1 508,348.7 510,350.2 512,351.6 514,352.9 516,354.2 518,355.4 520,356.5 522,357.6 524,358.7 526,359.8 528,361.0 530,362.2 532,363.4 534,364.4 536,365.3 538,365.9 540,366.1 542,366.1 544,365.9 546,365.5 548,365.2 550,364.8 552,364.4 554,364.0 556,363.6 558,363.1 560,362.5 562,361.8 564,360.9 566,359.8 568,358.6 570,357.2 572,355.8 574,354.3 576,352.6 578,350.8 580,348.9 582,346.8 584,344.6 586,342.5 588,340.3 590,338.2 592,336.1 594,333.9 596,331.7 598,329.6 600,327.4 602,325.2 604,323.0 606,320.8 608,318.6 610,316.2 612,313.8 614,311.4 616,309.0 618,306.7 620,304.8 622,303.2 624,302.0 626,301.2 628,300.6 630,300.2 632,299.9 634,299.6 636,299.4 638,299.3 640,299.5 642,299.9 644,300.7 646,301.7 648,302.9 650,304.3 652,305.8 654,307.4 656,309.1 658,310.8 660,312.5 662,313.9 664,315.3 666,316.4 668,317.5 670,318.5 672,319.4 674,320.3 676,321.1 678,321.8 680,322.3 682,322.6 684,322.6 686,322.3 688,321.7 690,320.7 692,319.5 694,318.0 696,316.3 698,314.3 700,312.4 702,310.4 704,308.6 706,307.0 708,305.8 710,304.9 712,304.4 714,304.5 716,305.0 718,305.8 720,307.0 722,308.4 724,310.0 726,311.7 728,313.5 730,315.3 732,317.0 734,318.5 736,319.9 738,321.2 740,322.7 742,324.4 744,326.8 746,330.0 748,334.0 750,338.5 752,343.1 754,347.1 756,350.3 758,352.5 760,353.8 762,354.6 764,354.9 766,355.0 768,355.0 770,354.9 772,354.9 774,355.0 776,355.3 778,355.7 780,356.4 782,357.2 784,358.1 786,359.1 788,360.1 790,361.1 792,362.0 794,362.7 796,363.3 798,363.6 800,363.6 802,363.3 804,362.8 806,362.1 808,361.4 810,360.7 812,360.2 814,359.9 816,359.7 818,359.8 820,359.8" fill="none" stroke="#faa453" stroke-width="1"/><polyline points="284,346.0 286,345.0 288,343.5 290,341.4 292,338.8 294,335.8 296,332.7 298,329.7 300,327.0 302,324.6 304,322.7 306,321.2 308,320.1 310,319.4 312,319.0 314,318.8 316,319.0 318,319.4 320,320.0 322,320.6 324,321.3 326,321.7 328,322.0 330,322.0 332,321.8 334,321.3 336,320.7 338,320.1 340,319.7 342,319.5 344,319.8 346,320.6 348,321.6 350,322.5 352,323.1 354,323.2 356,322.6 358,321.6 360,320.2 362,318.6 364,317.0 366,315.4 368,314.0 370,312.7 372,311.7 374,310.8 376,310.2 378,309.9 380,310.1 382,310.8 384,312.3 386,314.4 388,316.9 390,319.8 392,322.6 394,325.2 396,327.6 398,329.7 400,331.6 402,333.2 404,334.7 406,336.0 408,337.2 410,338.3 412,339.2 414,340.0 416,340.6 418,340.9 420,341.0 422,340.9 424,340.5 426,339.8 428,339.0 430,338.1 432,337.0 434,335.9 436,334.9 438,333.8 440,332.9 442,332.0 444,331.1 446,330.4 448,329.7 450,329.1 452,328.6 454,328.1 456,327.6 458,327.2 460,326.8 462,326.4 464,326.1 466,325.8 468,325.6 470,325.4 472,325.4 474,325.5 476,325.8 478,326.3 480,327.1 482,328.0 484,329.2 486,330.5 488,331.9 490,333.5 492,335.1 494,336.8 496,338.4 498,340.1 500,341.7 502,343.4 504,345.0 506,346.5 508,348.0 510,349.4 512,350.8 514,352.0 516,353.2 518,354.3 520,355.4 522,356.5 524,357.5 526,358.6 528,359.7 530,360.8 532,362.0 534,363.0 536,363.8 538,364.4 540,364.7 542,364.7 544,364.5 546,364.2 548,363.9 550,363.6 552,363.3 554,363.0 556,362.6 558,362.2 560,361.7 562,361.0 564,360.2 566,359.2 568,358.0 570,356.8 572,355.5 574,354.0 576,352.5 578,350.9 580,349.1 582,347.1 584,345.2 586,343.2 588,341.2 590,339.2 592,337.2 594,335.2 596,333.1 598,331.1 600,329.0 602,327.0 604,324.9 606,322.7 608,320.5 610,318.2 612,315.9 614,313.4 616,311.0 618,308.7 620,306.7 622,305.1 624,303.9 626,303.0 628,302.4 630,302.0 632,301.6 634,301.3 636,301.1 638,301.0 640,301.1 642,301.5 644,302.2 646,303.1 648,304.1 650,305.4 652,306.8 654,308.3 656,309.8 658,311.3 660,312.8 662,314.1 664,315.3 666,316.4 668,317.3 670,318.2 672,319.1 674,319.9 676,320.6 678,321.3 680,321.8 682,322.0 684,322.0 686,321.7 688,321.2 690,320.3 692,319.2 694,317.8 696,316.2 698,314.4 700,312.6 702,310.8 704,309.2 706,307.7 708,306.6 710,305.7 712,305.4 714,305.4 716,305.8 718,306.6 720,307.7 722,309.0 724,310.5 726,312.1 728,313.8 730,315.4 732,316.9 734,318.4 736,319.7 738,320.9 740,322.3 742,323.9 744,326.1 746,329.1 748,332.9 750,337.2 752,341.4 754,345.3 756,348.3 758,350.4 760,351.7 762,352.4 764,352.8 766,353.0 768,353.0 770,353.1 772,353.1 774,353.3 776,353.6 778,354.0 780,354.7 782,355.5 784,356.4 786,357.4 788,358.4 790,359.4 792,360.2 794,361.0 796,361.5 798,361.9 800,361.9 802,361.7 804,361.3 806,360.8 808,360.2 810,359.6 812,359.2 814,358.9 816,358.9 818,358.9 820,359.0" fill="none" stroke="#f9a353" stroke-width="1"/><polyline points="284,347.9 286,346.8 288,345.3 290,343.3 292,340.8 294,337.9 296,335.0 298,332.1 300,329.4 302,327.1 304,325.2 306,323.7 308,322.6 310,321.8 312,321.3 314,321.0 316,321.1 318,321.3 320,321.8 322,322.3 324,322.8 326,323.2 328,323.3 330,323.3 332,323.0 334,322.5 336,322.0 338,321.4 340,320.9 342,320.7 344,320.9 346,321.6 348,322.5 350,323.3 352,323.8 354,323.7 356,323.2 358,322.2 360,320.8 362,319.3 364,317.8 366,316.3 368,315.0 370,313.8 372,312.7 374,311.9 376,311.3 378,311.0 380,311.1 382,311.8 384,313.1 386,315.1 388,317.4 390,320.0 392,322.7 394,325.1 396,327.4 398,329.3 400,331.1 402,332.7 404,334.1 406,335.3 408,336.5 410,337.5 412,338.4 414,339.2 416,339.7 418,340.1 420,340.2 422,340.1 424,339.8 426,339.2 428,338.5 430,337.6 432,336.7 434,335.7 436,334.7 438,333.7 440,332.8 442,332.0 444,331.2 446,330.5 448,329.8 450,329.3 452,328.7 454,328.3 456,327.8 458,327.4 460,327.1 462,326.7 464,326.4 466,326.1 468,325.9 470,325.7 472,325.7 474,325.8 476,326.1 478,326.6 480,327.4 482,328.3 484,329.4 486,330.6 488,332.0 490,333.5 492,335.0 494,336.6 496,338.2 498,339.8 500,341.3 502,342.9 504,344.4 506,345.9 508,347.3 510,348.6 512,349.9 514,351.1 516,352.2 518,353.3 520,354.3 522,355.3 524,356.3 526,357.3 528,358.4 530,359.5 532,360.6 534,361.5 536,362.3 538,362.9 540,363.2 542,363.3 544,363.1 546,362.9 548,362.7 550,362.4 552,362.2 554,361.9 556,361.6 558,361.2 560,360.8 562,360.2 564,359.4 566,358.5 568,357.5 570,356.3 572,355.1 574,353.8 576,352.4 578,350.9 580,349.3 582,347.5 584,345.7 586,343.8 588,342.0 590,340.2 592,338.3 594,336.4 596,334.5 598,332.6 600,330.7 602,328.7 604,326.7 606,324.7 608,322.5 610,320.3 612,317.9 614,315.5 616,313.0 618,310.7 620,308.7 622,307.0 624,305.7 626,304.8 628,304.2 630,303.7 632,303.4 634,303.0 636,302.8 638,302.7 640,302.8 642,303.1 644,303.7 646,304.5 648,305.4 650,306.5 652,307.8 654,309.1 656,310.5 658,311.9 660,313.2 662,314.4 664,315.4 666,316.3 668,317.2 670,318.0 672,318.7 674,319.5 676,320.2 678,320.8 680,321.2 682,321.4 684,321.4 686,321.2 688,320.6 690,319.9 692,318.9 694,317.6 696,316.1 698,314.5 700,312.9 702,311.3 704,309.7 706,308.4 708,307.4 710,306.6 712,306.3 714,306.3 716,306.7 718,307.4 720,308.4 722,309.6 724,311.0 726,312.5 728,314.0 730,315.5 732,316.9 734,318.2 736,319.4 738,320.6 740,321.9 742,323.4 744,325.5 746,328.3 748,331.8 750,335.8 752,339.8 754,343.4 756,346.2 758,348.2 760,349.5 762,350.3 764,350.7 766,351.0 768,351.1 770,351.2 772,351.3 774,351.5 776,351.8 778,352.3 780,353.0 782,353.8 784,354.8 786,355.7 788,356.7 790,357.6 792,358.5 794,359.2 796,359.8 798,360.2 800,360.3 802,360.2 804,359.9 806,359.4 808,358.9 810,358.5 812,358.1 814,358.0 816,358.0 818,358.0 820,358.2" fill="none" stroke="#f9a253" stroke-width="1"/><polyline points="284,349.7 286,348.7 288,347.2 290,345.2 292,342.8 294,340.1 296,337.2 298,334.5 300,331.9 302,329.7 304,327.8 306,326.3 308,325.1 310,324.2 312,323.6 314,323.2 316,323.2 318,323.3 320,323.6 322,324.0 324,324.4 326,324.6 328,324.7 330,324.6 332,324.3 334,323.8 336,323.2 338,322.6 340,322.1 342,321.9 344,322.1 346,322.6 348,323.3 350,324.0 352,324.4 354,324.3 356,323.8 358,322.8 360,321.5 362,320.1 364,318.6 366,317.2 368,315.9 370,314.8 372,313.8 374,313.0 376,312.4 378,312.1 380,312.1 382,312.7 384,314.0 386,315.7 388,317.9 390,320.3 392,322.8 394,325.1 396,327.1 398,329.0 400,330.6 402,332.1 404,333.4 406,334.6 408,335.7 410,336.7 412,337.6 414,338.3 416,338.9 418,339.2 420,339.4 422,339.4 424,339.1 426,338.6 428,338.0 430,337.2 432,336.3 434,335.4 436,334.5 438,333.6 440,332.8 442,332.0 444,331.2 446,330.6 448,330.0 450,329.4 452,328.9 454,328.5 456,328.1 458,327.7 460,327.3 462,327.0 464,326.6 466,326.4 468,326.2 470,326.0 472,326.0 474,326.2 476,326.5 478,327.0 480,327.6 482,328.5 484,329.6 486,330.8 488,332.1 490,333.5 492,335.0 494,336.4 496,337.9 498,339.4 500,340.9 502,342.4 504,343.8 506,345.2 508,346.5 510,347.8 512,349.0 514,350.2 516,351.2 518,352.2 520,353.2 522,354.2 524,355.1 526,356.1 528,357.1 530,358.1 532,359.1 534,360.1 536,360.9 538,361.4 540,361.7 542,361.8 544,361.8 546,361.6 548,361.4 550,361.2 552,361.0 554,360.8 556,360.6 558,360.3 560,359.9 562,359.3 564,358.7 566,357.8 568,356.9 570,355.9 572,354.8 574,353.6 576,352.3 578,350.9 580,349.5 582,347.9 584,346.2 586,344.5 588,342.9 590,341.2 592,339.5 594,337.7 596,336.0 598,334.2 600,332.4 602,330.5 604,328.6 606,326.7 608,324.6 610,322.3 612,320.0 614,317.5 616,315.1 618,312.7 620,310.6 622,308.9 624,307.6 626,306.7 628,306.0 630,305.5 632,305.1 634,304.8 636,304.5 638,304.4 640,304.5 642,304.7 644,305.2 646,305.9 648,306.7 650,307.7 652,308.8 654,309.9 656,311.2 658,312.4 660,313.5 662,314.6 664,315.5 666,316.3 668,317.0 670,317.7 672,318.4 674,319.1 676,319.7 678,320.2 680,320.6 682,320.8 684,320.8 686,320.6 688,320.1 690,319.4 692,318.5 694,317.4 696,316.1 698,314.6 700,313.1 702,311.7 704,310.3 706,309.1 708,308.2 710,307.5 712,307.2 714,307.2 716,307.6 718,308.3 720,309.2 722,310.3 724,311.5 726,312.9 728,314.3 730,315.6 732,316.9 734,318.1 736,319.2 738,320.3 740,321.4 742,322.9 744,324.8 746,327.4 748,330.7 750,334.4 752,338.1 754,341.5 756,344.2 758,346.1 760,347.4 762,348.1 764,348.6 766,348.9 768,349.1 770,349.3 772,349.4 774,349.7 776,350.1 778,350.6 780,351.3 782,352.1 784,353.0 786,354.0 788,354.9 790,355.9 792,356.7 794,357.5 796,358.0 798,358.4 800,358.6 802,358.6 804,358.4 806,358.1 808,357.7 810,357.4 812,357.1 814,357.0 816,357.1 818,357.2 820,357.3" fill="none" stroke="#f8a154" stroke-width="1"/><polyline points="284,351.6 286,350.6 288,349.1 290,347.2 292,344.9 294,342.3 296,339.5 298,336.9 300,334.4 302,332.2 304,330.4 306,328.8 308,327.6 310,326.6 312,325.9 314,325.5 316,325.3 318,325.3 320,325.4 322,325.7 324,325.9 326,326.1 328,326.0 330,325.9 332,325.5 334,325.0 336,324.4 338,323.8 340,323.4 342,323.1 344,323.2 346,323.6 348,324.2 350,324.8 352,325.1 354,324.9 356,324.4 358,323.4 360,322.2 362,320.8 364,319.4 366,318.1 368,316.9 370,315.8 372,314.9 374,314.1 376,313.5 378,313.1 380,313.2 382,313.7 384,314.8 386,316.4 388,318.4 390,320.7 392,322.9 394,325.0 396,326.9 398,328.6 400,330.2 402,331.6 404,332.8 406,333.9 408,335.0 410,335.9 412,336.7 414,337.4 416,338.0 418,338.4 420,338.6 422,338.6 424,338.4 426,338.0 428,337.4 430,336.7 432,336.0 434,335.2 436,334.3 438,333.5 440,332.7 442,332.0 444,331.3 446,330.7 448,330.1 450,329.6 452,329.1 454,328.7 456,328.3 458,327.9 460,327.6 462,327.2 464,326.9 466,326.7 468,326.5 470,326.3 472,326.4 474,326.5 476,326.8 478,327.3 480,327.9 482,328.8 484,329.8 486,330.9 488,332.2 490,333.5 492,334.9 494,336.3 496,337.7 498,339.1 500,340.5 502,341.9 504,343.2 506,344.5 508,345.8 510,347.0 512,348.1 514,349.2 516,350.2 518,351.2 520,352.1 522,353.0 524,353.9 526,354.8 528,355.8 530,356.8 532,357.7 534,358.6 536,359.3 538,359.9 540,360.2 542,360.4 544,360.4 546,360.3 548,360.2 550,360.0 552,359.9 554,359.8 556,359.6 558,359.3 560,359.0 562,358.5 564,357.9 566,357.2 568,356.3 570,355.4 572,354.4 574,353.4 576,352.2 578,351.0 580,349.7 582,348.2 584,346.7 586,345.2 588,343.7 590,342.2 592,340.6 594,339.0 596,337.4 598,335.7 600,334.0 602,332.3 604,330.5 606,328.6 608,326.6 610,324.4 612,322.1 614,319.6 616,317.1 618,314.7 620,312.6 622,310.9 624,309.5 626,308.5 628,307.8 630,307.3 632,306.9 634,306.5 636,306.3 638,306.1 640,306.1 642,306.3 644,306.7 646,307.3 648,308.0 650,308.9 652,309.8 654,310.8 656,311.8 658,312.9 660,313.9 662,314.8 664,315.6 666,316.3 668,316.9 670,317.5 672,318.1 674,318.7 676,319.2 678,319.7 680,320.0 682,320.2 684,320.2 686,320.0 688,319.6 690,319.0 692,318.2 694,317.2 696,316.0 698,314.7 700,313.4 702,312.1 704,310.9 706,309.8 708,309.0 710,308.4 712,308.1 714,308.2 716,308.5 718,309.1 720,309.9 722,310.9 724,312.0 726,313.2 728,314.5 730,315.7 732,316.9 734,318.0 736,319.0 738,320.0 740,321.0 742,322.4 744,324.1 746,326.5 748,329.5 750,333.0 752,336.4 754,339.6 756,342.1 758,343.9 760,345.2 762,346.0 764,346.5 766,346.9 768,347.1 770,347.3 772,347.6 774,347.9 776,348.4 778,348.9 780,349.6 782,350.4 784,351.3 786,352.2 788,353.2 790,354.1 792,354.9 794,355.7 796,356.3 798,356.7 800,357.0 802,357.0 804,356.9 806,356.7 808,356.5 810,356.2 812,356.1 814,356.1 816,356.2 818,356.3 820,356.5" fill="none" stroke="#f7a054" stroke-width="1"/><polyline points="284,353.4 286,352.4 288,351.0 290,349.2 292,346.9 294,344.5 296,341.9 298,339.3 300,336.9 302,334.8 304,333.0 306,331.4 308,330.1 310,329.1 312,328.3 314,327.7 316,327.4 318,327.2 320,327.3 322,327.4 324,327.5 326,327.5 328,327.4 330,327.2 332,326.8 334,326.3 336,325.7 338,325.1 340,324.6 342,324.3 344,324.4 346,324.7 348,325.1 350,325.5 352,325.7 354,325.5 356,324.9 358,324.0 360,322.9 362,321.6 364,320.3 366,319.0 368,317.9 370,316.8 372,315.9 374,315.2 376,314.6 378,314.2 380,314.2 382,314.7 384,315.7 386,317.1 388,318.9 390,321.0 392,323.0 394,324.9 396,326.7 398,328.3 400,329.7 402,331.0 404,332.2 406,333.2 408,334.2 410,335.1 412,335.9 414,336.5 416,337.1 418,337.5 420,337.8 422,337.8 424,337.7 426,337.4 428,336.9 430,336.3 432,335.6 434,334.9 436,334.1 438,333.4 440,332.7 442,332.0 444,331.4 446,330.8 448,330.3 450,329.8 452,329.3 454,328.9 456,328.5 458,328.2 460,327.8 462,327.5 464,327.2 466,326.9 468,326.8 470,326.7 472,326.7 474,326.8 476,327.1 478,327.6 480,328.2 482,329.1 484,330.0 486,331.1 488,332.3 490,333.5 492,334.8 494,336.1 496,337.4 498,338.8 500,340.1 502,341.4 504,342.6 506,343.9 508,345.1 510,346.2 512,347.3 514,348.3 516,349.2 518,350.1 520,351.0 522,351.9 524,352.7 526,353.6 528,354.5 530,355.4 532,356.3 534,357.1 536,357.8 538,358.4 540,358.7 542,358.9 544,359.0 546,358.9 548,358.9 550,358.8 552,358.8 554,358.7 556,358.6 558,358.4 560,358.1 562,357.7 564,357.2 566,356.5 568,355.8 570,355.0 572,354.1 574,353.1 576,352.1 578,351.0 580,349.9 582,348.6 584,347.3 586,345.9 588,344.6 590,343.2 592,341.8 594,340.3 596,338.8 598,337.3 600,335.7 602,334.1 604,332.4 606,330.6 608,328.6 610,326.5 612,324.2 614,321.7 616,319.2 618,316.8 620,314.6 622,312.8 624,311.4 626,310.4 628,309.7 630,309.1 632,308.7 634,308.3 636,308.0 638,307.9 640,307.8 642,308.0 644,308.3 646,308.7 648,309.3 650,310.0 652,310.8 654,311.6 656,312.5 658,313.4 660,314.2 662,315.0 664,315.6 666,316.2 668,316.8 670,317.3 672,317.8 674,318.3 676,318.7 678,319.1 680,319.4 682,319.6 684,319.6 686,319.4 688,319.1 690,318.6 692,317.9 694,317.0 696,316.0 698,314.8 700,313.7 702,312.5 704,311.5 706,310.6 708,309.8 710,309.3 712,309.1 714,309.1 716,309.4 718,310.0 720,310.7 722,311.5 724,312.5 726,313.6 728,314.8 730,315.9 732,316.9 734,317.9 736,318.8 738,319.7 740,320.6 742,321.8 744,323.5 746,325.7 748,328.4 750,331.5 752,334.7 754,337.6 756,340.0 758,341.8 760,343.0 762,343.8 764,344.4 766,344.8 768,345.1 770,345.4 772,345.7 774,346.1 776,346.6 778,347.2 780,347.9 782,348.7 784,349.6 786,350.5 788,351.4 790,352.3 792,353.1 794,353.9 796,354.5 798,355.0 800,355.3 802,355.4 804,355.4 806,355.3 808,355.2 810,355.1 812,355.0 814,355.1 816,355.2 818,355.4 820,355.6" fill="none" stroke="#f6a055" stroke-width="1"/><polyline points="284,355.3 286,354.3 288,353.0 290,351.2 292,349.0 294,346.7 296,344.2 298,341.8 300,339.5 302,337.4 304,335.6 306,334.0 308,332.7 310,331.6 312,330.7 314,330.0 316,329.5 318,329.2 320,329.1 322,329.1 324,329.1 326,329.0 328,328.8 330,328.5 332,328.1 334,327.5 336,327.0 338,326.4 340,325.9 342,325.6 344,325.5 346,325.7 348,326.0 350,326.3 352,326.4 354,326.1 356,325.5 358,324.6 360,323.5 362,322.4 364,321.1 366,320.0 368,318.9 370,317.9 372,317.0 374,316.3 376,315.7 378,315.3 380,315.3 382,315.7 384,316.5 386,317.8 388,319.5 390,321.3 392,323.1 394,324.9 396,326.5 398,327.9 400,329.2 402,330.4 404,331.5 406,332.5 408,333.4 410,334.2 412,335.0 414,335.7 416,336.2 418,336.6 420,336.9 422,337.0 424,337.0 426,336.7 428,336.4 430,335.9 432,335.3 434,334.6 436,334.0 438,333.3 440,332.6 442,332.0 444,331.4 446,330.9 448,330.4 450,329.9 452,329.5 454,329.1 456,328.8 458,328.4 460,328.1 462,327.8 464,327.5 466,327.2 468,327.1 470,327.0 472,327.0 474,327.2 476,327.5 478,327.9 480,328.6 482,329.3 484,330.2 486,331.2 488,332.3 490,333.5 492,334.7 494,336.0 496,337.2 498,338.4 500,339.7 502,340.9 504,342.1 506,343.2 508,344.3 510,345.4 512,346.4 514,347.3 516,348.2 518,349.1 520,349.9 522,350.7 524,351.5 526,352.3 528,353.1 530,354.0 532,354.8 534,355.6 536,356.3 538,356.8 540,357.2 542,357.4 544,357.5 546,357.6 548,357.6 550,357.6 552,357.6 554,357.6 556,357.5 558,357.4 560,357.2 562,356.8 564,356.4 566,355.8 568,355.2 570,354.5 572,353.7 574,352.9 576,352.0 578,351.1 580,350.1 582,349.0 584,347.8 586,346.6 588,345.4 590,344.2 592,342.9 594,341.6 596,340.3 598,338.9 600,337.5 602,336.0 604,334.4 606,332.6 608,330.7 610,328.6 612,326.3 614,323.8 616,321.3 618,318.8 620,316.6 622,314.8 624,313.3 626,312.3 628,311.5 630,310.9 632,310.5 634,310.1 636,309.8 638,309.6 640,309.6 642,309.6 644,309.8 646,310.2 648,310.7 650,311.2 652,311.8 654,312.5 656,313.2 658,313.9 660,314.6 662,315.2 664,315.7 666,316.2 668,316.6 670,317.0 672,317.4 674,317.8 676,318.2 678,318.6 680,318.8 682,319.0 684,319.0 686,318.9 688,318.6 690,318.1 692,317.5 694,316.8 696,315.9 698,314.9 700,313.9 702,313.0 704,312.1 706,311.3 708,310.6 710,310.2 712,310.0 714,310.1 716,310.3 718,310.8 720,311.4 722,312.2 724,313.1 726,314.0 728,315.0 730,316.0 732,316.9 734,317.7 736,318.5 738,319.3 740,320.2 742,321.3 744,322.8 746,324.8 748,327.3 750,330.1 752,333.0 754,335.7 756,337.9 758,339.6 760,340.8 762,341.6 764,342.2 766,342.7 768,343.1 770,343.5 772,343.9 774,344.3 776,344.8 778,345.4 780,346.2 782,347.0 784,347.8 786,348.7 788,349.6 790,350.5 792,351.3 794,352.1 796,352.7 798,353.2 800,353.6 802,353.8 804,353.9 806,354.0 808,353.9 810,353.9 812,354.0 814,354.1 816,354.3 818,354.5 820,354.7" fill="none" stroke="#f59f55" stroke-width="1"/><polyline points="284,357.2 286,356.2 288,354.9 290,353.2 292,351.1 294,348.9 296,346.5 298,344.2 300,342.0 302,340.0 304,338.2 306,336.6 308,335.2 310,334.0 312,333.0 314,332.3 316,331.7 318,331.3 320,331.0 322,330.8 324,330.7 326,330.5 328,330.2 330,329.8 332,329.4 334,328.8 336,328.2 338,327.6 340,327.1 342,326.8 344,326.7 346,326.8 348,327.0 350,327.1 352,327.0 354,326.7 356,326.1 358,325.3 360,324.2 362,323.1 364,322.0 366,320.9 368,319.9 370,318.9 372,318.1 374,317.4 376,316.8 378,316.4 380,316.4 382,316.7 384,317.4 386,318.5 388,320.0 390,321.6 392,323.2 394,324.8 396,326.2 398,327.6 400,328.8 402,329.9 404,330.9 406,331.8 408,332.6 410,333.4 412,334.1 414,334.8 416,335.3 418,335.8 420,336.1 422,336.2 424,336.2 426,336.1 428,335.8 430,335.4 432,334.9 434,334.4 436,333.8 438,333.2 440,332.6 442,332.0 444,331.5 446,331.0 448,330.5 450,330.1 452,329.7 454,329.3 456,329.0 458,328.7 460,328.3 462,328.0 464,327.8 466,327.5 468,327.4 470,327.3 472,327.3 474,327.5 476,327.8 478,328.3 480,328.9 482,329.6 484,330.4 486,331.4 488,332.4 490,333.5 492,334.6 494,335.8 496,336.9 498,338.1 500,339.2 502,340.4 504,341.5 506,342.5 508,343.6 510,344.5 512,345.5 514,346.3 516,347.2 518,348.0 520,348.8 522,349.5 524,350.3 526,351.0 528,351.8 530,352.6 532,353.4 534,354.1 536,354.8 538,355.3 540,355.7 542,355.9 544,356.1 546,356.2 548,356.3 550,356.4 552,356.5 554,356.5 556,356.5 558,356.4 560,356.3 562,356.0 564,355.6 566,355.2 568,354.6 570,354.0 572,353.4 574,352.7 576,351.9 578,351.1 580,350.3 582,349.3 584,348.3 586,347.3 588,346.3 590,345.2 592,344.1 594,343.0 596,341.7 598,340.5 600,339.2 602,337.8 604,336.3 606,334.6 608,332.8 610,330.7 612,328.4 614,325.9 616,323.4 618,320.9 620,318.7 622,316.8 624,315.3 626,314.2 628,313.4 630,312.8 632,312.3 634,311.9 636,311.6 638,311.4 640,311.3 642,311.3 644,311.4 646,311.6 648,312.0 650,312.4 652,312.9 654,313.4 656,313.9 658,314.4 660,315.0 662,315.4 664,315.8 666,316.1 668,316.5 670,316.8 672,317.1 674,317.4 676,317.7 678,318.0 680,318.2 682,318.4 684,318.4 686,318.3 688,318.0 690,317.7 692,317.2 694,316.5 696,315.8 698,315.0 700,314.2 702,313.4 704,312.7 706,312.0 708,311.5 710,311.1 712,311.0 714,311.0 716,311.3 718,311.7 720,312.2 722,312.8 724,313.6 726,314.4 728,315.3 730,316.1 732,316.9 734,317.6 736,318.3 738,319.0 740,319.8 742,320.8 744,322.1 746,323.9 748,326.1 750,328.7 752,331.3 754,333.7 756,335.8 758,337.3 760,338.5 762,339.4 764,340.0 766,340.6 768,341.1 770,341.5 772,342.0 774,342.5 776,343.0 778,343.7 780,344.4 782,345.2 784,346.1 786,346.9 788,347.8 790,348.7 792,349.5 794,350.2 796,350.9 798,351.4 800,351.9 802,352.2 804,352.4 806,352.6 808,352.7 810,352.8 812,352.9 814,353.1 816,353.4 818,353.7 820,353.9" fill="none" stroke="#f49e56" stroke-width="1"/><polyline points="284,359.2 286,358.2 288,356.8 290,355.2 292,353.2 294,351.1 296,348.9 298,346.7 300,344.6 302,342.7 304,340.9 306,339.2 308,337.8 310,336.5 312,335.4 314,334.5 316,333.8 318,333.3 320,332.9 322,332.6 324,332.3 326,332.0 328,331.6 330,331.2 332,330.7 334,330.1 336,329.5 338,328.9 340,328.4 342,328.1 344,327.9 346,327.8 348,327.9 350,327.9 352,327.7 354,327.3 356,326.7 358,325.9 360,324.9 362,323.9 364,322.9 366,321.8 368,320.9 370,320.0 372,319.2 374,318.5 376,317.9 378,317.5 380,317.4 382,317.7 384,318.3 386,319.2 388,320.5 390,321.9 392,323.3 394,324.7 396,326.0 398,327.2 400,328.3 402,329.3 404,330.2 406,331.1 408,331.8 410,332.6 412,333.3 414,333.9 416,334.4 418,334.9 420,335.2 422,335.4 424,335.5 426,335.5 428,335.3 430,335.0 432,334.6 434,334.1 436,333.6 438,333.1 440,332.5 442,332.0 444,331.6 446,331.1 448,330.7 450,330.3 452,329.9 454,329.6 456,329.2 458,328.9 460,328.6 462,328.3 464,328.0 466,327.8 468,327.7 470,327.6 472,327.7 474,327.8 476,328.1 478,328.6 480,329.2 482,329.9 484,330.7 486,331.6 488,332.5 490,333.5 492,334.6 494,335.6 496,336.7 498,337.7 500,338.8 502,339.8 504,340.9 506,341.9 508,342.8 510,343.7 512,344.6 514,345.4 516,346.2 518,346.9 520,347.6 522,348.3 524,349.0 526,349.7 528,350.4 530,351.2 532,351.9 534,352.6 536,353.2 538,353.7 540,354.1 542,354.4 544,354.7 546,354.9 548,355.0 550,355.2 552,355.3 554,355.4 556,355.5 558,355.4 560,355.3 562,355.1 564,354.8 566,354.5 568,354.0 570,353.5 572,353.0 574,352.4 576,351.8 578,351.2 580,350.5 582,349.7 584,348.9 586,348.1 588,347.2 590,346.3 592,345.3 594,344.3 596,343.2 598,342.1 600,340.9 602,339.6 604,338.2 606,336.7 608,334.9 610,332.8 612,330.5 614,328.1 616,325.5 618,323.0 620,320.7 622,318.8 624,317.2 626,316.1 628,315.2 630,314.6 632,314.1 634,313.7 636,313.4 638,313.2 640,313.0 642,313.0 644,313.0 646,313.1 648,313.3 650,313.6 652,313.9 654,314.2 656,314.6 658,315.0 660,315.3 662,315.6 664,315.9 666,316.1 668,316.3 670,316.5 672,316.7 674,317.0 676,317.2 678,317.5 680,317.6 682,317.8 684,317.8 686,317.7 688,317.5 690,317.2 692,316.8 694,316.3 696,315.8 698,315.1 700,314.5 702,313.8 704,313.2 706,312.7 708,312.3 710,312.0 712,311.9 714,312.0 716,312.2 718,312.5 720,313.0 722,313.5 724,314.1 726,314.8 728,315.5 730,316.2 732,316.9 734,317.5 736,318.1 738,318.7 740,319.4 742,320.2 744,321.4 746,323.0 748,324.9 750,327.2 752,329.5 754,331.7 756,333.6 758,335.1 760,336.3 762,337.2 764,337.9 766,338.5 768,339.0 770,339.5 772,340.1 774,340.6 776,341.2 778,341.9 780,342.7 782,343.5 784,344.3 786,345.2 788,346.0 790,346.8 792,347.6 794,348.4 796,349.1 798,349.7 800,350.2 802,350.6 804,350.9 806,351.2 808,351.4 810,351.6 812,351.9 814,352.2 816,352.5 818,352.8 820,353.0" fill="none" stroke="#f49d56" stroke-width="1"/><polyline points="284,361.1 286,360.1 288,358.8 290,357.2 292,355.4 294,353.4 296,351.3 298,349.2 300,347.2 302,345.3 304,343.5 306,341.9 308,340.4 310,339.1 312,337.9 314,336.8 316,336.0 318,335.3 320,334.8 322,334.3 324,333.9 326,333.5 328,333.0 330,332.5 332,332.0 334,331.4 336,330.8 338,330.2 340,329.7 342,329.3 344,329.1 346,328.9 348,328.8 350,328.7 352,328.4 354,327.9 356,327.3 358,326.5 360,325.6 362,324.7 364,323.7 366,322.8 368,321.9 370,321.0 372,320.3 374,319.6 376,319.0 378,318.7 380,318.5 382,318.7 384,319.2 386,320.0 388,321.0 390,322.2 392,323.4 394,324.6 396,325.8 398,326.9 400,327.8 402,328.7 404,329.5 406,330.3 408,331.1 410,331.7 412,332.4 414,333.0 416,333.5 418,334.0 420,334.4 422,334.6 424,334.8 426,334.8 428,334.7 430,334.5 432,334.2 434,333.8 436,333.4 438,332.9 440,332.5 442,332.0 444,331.6 446,331.2 448,330.8 450,330.5 452,330.1 454,329.8 456,329.5 458,329.2 460,328.9 462,328.6 464,328.3 466,328.1 468,328.0 470,327.9 472,328.0 474,328.2 476,328.5 478,328.9 480,329.5 482,330.1 484,330.9 486,331.7 488,332.6 490,333.5 492,334.5 494,335.4 496,336.4 498,337.4 500,338.4 502,339.3 504,340.3 506,341.2 508,342.0 510,342.9 512,343.7 514,344.4 516,345.1 518,345.8 520,346.5 522,347.1 524,347.8 526,348.4 528,349.1 530,349.8 532,350.4 534,351.1 536,351.6 538,352.2 540,352.6 542,352.9 544,353.2 546,353.5 548,353.7 550,354.0 552,354.2 554,354.3 556,354.4 558,354.5 560,354.4 562,354.3 564,354.1 566,353.8 568,353.4 570,353.1 572,352.6 574,352.2 576,351.7 578,351.2 580,350.7 582,350.1 584,349.4 586,348.8 588,348.1 590,347.3 592,346.5 594,345.6 596,344.7 598,343.7 600,342.7 602,341.5 604,340.2 606,338.7 608,337.0 610,335.0 612,332.7 614,330.2 616,327.6 618,325.1 620,322.8 622,320.8 624,319.2 626,318.0 628,317.1 630,316.5 632,316.0 634,315.6 636,315.2 638,315.0 640,314.8 642,314.6 644,314.6 646,314.6 648,314.7 650,314.8 652,314.9 654,315.1 656,315.3 658,315.5 660,315.7 662,315.8 664,316.0 666,316.1 668,316.2 670,316.3 672,316.4 674,316.6 676,316.7 678,316.9 680,317.0 682,317.1 684,317.1 686,317.1 688,317.0 690,316.8 692,316.5 694,316.1 696,315.7 698,315.2 700,314.8 702,314.3 704,313.8 706,313.5 708,313.2 710,313.0 712,312.9 714,312.9 716,313.1 718,313.4 720,313.7 722,314.2 724,314.7 726,315.2 728,315.8 730,316.3 732,316.9 734,317.4 736,317.9 738,318.4 740,318.9 742,319.7 744,320.7 746,322.1 748,323.8 750,325.7 752,327.8 754,329.8 756,331.5 758,332.9 760,334.0 762,334.9 764,335.7 766,336.3 768,337.0 770,337.5 772,338.1 774,338.8 776,339.4 778,340.1 780,340.9 782,341.7 784,342.5 786,343.3 788,344.2 790,345.0 792,345.8 794,346.5 796,347.2 798,347.9 800,348.4 802,348.9 804,349.4 806,349.7 808,350.1 810,350.4 812,350.8 814,351.2 816,351.5 818,351.9 820,352.1" fill="none" stroke="#f39c57" stroke-width="1"/><polyline points="284,363.0 286,362.0 288,360.8 290,359.2 292,357.5 294,355.6 296,353.7 298,351.7 300,349.8 302,348.0 304,346.2 306,344.5 308,343.0 310,341.6 312,340.3 314,339.2 316,338.2 318,337.4 320,336.7 322,336.1 324,335.5 326,335.0 328,334.4 330,333.9 332,333.3 334,332.7 336,332.1 338,331.5 340,331.0 342,330.6 344,330.2 346,330.0 348,329.7 350,329.4 352,329.1 354,328.6 356,327.9 358,327.2 360,326.3 362,325.5 364,324.6 366,323.7 368,322.9 370,322.1 372,321.4 374,320.7 376,320.2 378,319.8 380,319.6 382,319.7 384,320.0 386,320.7 388,321.5 390,322.5 392,323.5 394,324.6 396,325.6 398,326.5 400,327.3 402,328.1 404,328.9 406,329.6 408,330.3 410,330.9 412,331.5 414,332.1 416,332.6 418,333.1 420,333.5 422,333.8 424,334.1 426,334.2 428,334.2 430,334.0 432,333.8 434,333.5 436,333.2 438,332.8 440,332.4 442,332.1 444,331.7 446,331.3 448,331.0 450,330.6 452,330.3 454,330.0 456,329.7 458,329.4 460,329.1 462,328.9 464,328.6 466,328.4 468,328.3 470,328.3 472,328.3 474,328.5 476,328.8 478,329.3 480,329.8 482,330.4 484,331.1 486,331.9 488,332.7 490,333.5 492,334.4 494,335.3 496,336.2 498,337.1 500,337.9 502,338.8 504,339.7 506,340.5 508,341.3 510,342.0 512,342.7 514,343.4 516,344.1 518,344.7 520,345.3 522,345.9 524,346.5 526,347.1 528,347.7 530,348.3 532,348.9 534,349.5 536,350.1 538,350.6 540,351.0 542,351.4 544,351.8 546,352.1 548,352.4 550,352.7 552,353.0 554,353.2 556,353.4 558,353.5 560,353.5 562,353.4 564,353.3 566,353.1 568,352.9 570,352.6 572,352.3 574,352.0 576,351.6 578,351.3 580,350.9 582,350.5 584,350.0 586,349.5 588,349.0 590,348.4 592,347.7 594,347.0 596,346.2 598,345.3 600,344.4 602,343.4 604,342.2 606,340.8 608,339.1 610,337.1 612,334.9 614,332.4 616,329.8 618,327.2 620,324.8 622,322.8 624,321.2 626,319.9 628,319.0 630,318.3 632,317.8 634,317.4 636,317.1 638,316.8 640,316.5 642,316.3 644,316.2 646,316.1 648,316.0 650,316.0 652,316.0 654,316.0 656,316.0 658,316.0 660,316.1 662,316.1 664,316.0 666,316.0 668,316.0 670,316.0 672,316.1 674,316.1 676,316.2 678,316.3 680,316.4 682,316.5 684,316.5 686,316.5 688,316.4 690,316.3 692,316.1 694,315.9 696,315.6 698,315.3 700,315.0 702,314.7 704,314.4 706,314.2 708,314.0 710,313.9 712,313.9 714,313.9 716,314.0 718,314.2 720,314.5 722,314.8 724,315.2 726,315.6 728,316.0 730,316.4 732,316.8 734,317.2 736,317.6 738,318.0 740,318.5 742,319.1 744,320.0 746,321.1 748,322.6 750,324.3 752,326.0 754,327.8 756,329.3 758,330.6 760,331.7 762,332.7 764,333.5 766,334.2 768,334.9 770,335.5 772,336.2 774,336.9 776,337.6 778,338.4 780,339.1 782,339.9 784,340.7 786,341.5 788,342.3 790,343.1 792,343.9 794,344.7 796,345.4 798,346.1 800,346.7 802,347.3 804,347.8 806,348.3 808,348.8 810,349.3 812,349.7 814,350.2 816,350.6 818,350.9 820,351.2" fill="none" stroke="#f29c57" stroke-width="1"/><polyline points="284,365.0 286,364.0 288,362.8 290,361.3 292,359.7 294,357.9 296,356.1 298,354.3 300,352.4 302,350.6 304,348.9 306,347.2 308,345.6 310,344.1 312,342.8 314,341.5 316,340.4 318,339.4 320,338.6 322,337.9 324,337.2 326,336.5 328,335.9 330,335.2 332,334.6 334,334.0 336,333.4 338,332.8 340,332.3 342,331.9 344,331.4 346,331.1 348,330.7 350,330.2 352,329.8 354,329.2 356,328.5 358,327.8 360,327.0 362,326.3 364,325.5 366,324.7 368,323.9 370,323.2 372,322.5 374,321.9 376,321.3 378,320.9 380,320.7 382,320.7 384,320.9 386,321.4 388,322.1 390,322.8 392,323.7 394,324.5 396,325.3 398,326.1 400,326.9 402,327.6 404,328.2 406,328.9 408,329.5 410,330.1 412,330.6 414,331.2 416,331.7 418,332.2 420,332.6 422,333.0 424,333.3 426,333.5 428,333.6 430,333.6 432,333.5 434,333.3 436,333.0 438,332.7 440,332.4 442,332.1 444,331.8 446,331.4 448,331.1 450,330.8 452,330.5 454,330.2 456,329.9 458,329.7 460,329.4 462,329.1 464,328.9 466,328.7 468,328.6 470,328.6 472,328.7 474,328.9 476,329.2 478,329.6 480,330.1 482,330.7 484,331.3 486,332.0 488,332.8 490,333.5 492,334.3 494,335.1 496,335.9 498,336.7 500,337.5 502,338.3 504,339.1 506,339.8 508,340.5 510,341.2 512,341.8 514,342.4 516,343.0 518,343.6 520,344.2 522,344.7 524,345.3 526,345.8 528,346.3 530,346.9 532,347.4 534,348.0 536,348.5 538,349.0 540,349.5 542,349.9 544,350.3 546,350.7 548,351.1 550,351.5 552,351.8 554,352.1 556,352.3 558,352.5 560,352.5 562,352.5 564,352.5 566,352.4 568,352.3 570,352.1 572,351.9 574,351.7 576,351.5 578,351.3 580,351.1 582,350.8 584,350.5 586,350.2 588,349.8 590,349.4 592,348.9 594,348.3 596,347.7 598,347.0 600,346.2 602,345.3 604,344.2 606,342.9 608,341.2 610,339.3 612,337.0 614,334.5 616,331.9 618,329.3 620,326.9 622,324.8 624,323.1 626,321.9 628,320.9 630,320.2 632,319.7 634,319.3 636,318.9 638,318.6 640,318.3 642,318.0 644,317.8 646,317.6 648,317.4 650,317.2 652,317.0 654,316.9 656,316.7 658,316.6 660,316.4 662,316.3 664,316.1 666,316.0 668,315.9 670,315.8 672,315.7 674,315.7 676,315.7 678,315.8 680,315.8 682,315.9 684,315.9 686,315.9 688,315.9 690,315.8 692,315.8 694,315.7 696,315.6 698,315.4 700,315.3 702,315.2 704,315.1 706,315.0 708,314.9 710,314.8 712,314.8 714,314.9 716,315.0 718,315.1 720,315.3 722,315.5 724,315.7 726,316.0 728,316.3 730,316.6 732,316.8 734,317.1 736,317.4 738,317.7 740,318.1 742,318.6 744,319.3 746,320.2 748,321.4 750,322.8 752,324.3 754,325.8 756,327.1 758,328.4 760,329.4 762,330.4 764,331.2 766,332.0 768,332.8 770,333.5 772,334.3 774,335.0 776,335.8 778,336.6 780,337.3 782,338.1 784,338.9 786,339.7 788,340.5 790,341.3 792,342.0 794,342.8 796,343.5 798,344.3 800,344.9 802,345.6 804,346.3 806,346.9 808,347.5 810,348.1 812,348.6 814,349.2 816,349.6 818,350.0 820,350.3" fill="none" stroke="#f19b58" stroke-width="1"/><polyline points="284,487.7 286,487.0 288,486.0 290,484.4 292,482.7 294,480.9 296,479.2 298,477.6 300,476.0 302,474.4 304,472.9 306,471.5 308,470.2 310,468.8 312,467.4 314,465.9 316,464.5 318,463.2 320,461.9 322,460.6 324,459.2 326,457.7 328,456.2 330,454.7 332,453.2 334,451.7 336,450.3 338,448.9 340,447.6 342,446.5 344,445.5 346,445.0 348,444.6 350,443.8 352,443.0 354,441.8 356,440.6 358,439.4 360,438.1 362,437.0 364,435.9 366,434.8 368,433.8 370,432.7 372,431.7 374,430.8 376,429.8 378,428.7 380,427.6 382,426.9 384,426.1 386,425.6 388,425.1 390,424.4 392,423.7 394,422.8 396,422.0 398,421.1 400,420.3 402,419.5 404,418.7 406,418.0 408,417.3 410,416.6 412,416.0 414,415.3 416,414.7 418,413.9 420,413.2 422,412.4 424,411.7 426,410.9 428,410.1 430,409.3 432,408.6 434,407.9 436,407.2 438,406.6 440,405.9 442,405.3 444,404.7 446,404.2 448,403.6 450,403.1 452,402.5 454,402.0 456,401.4 458,400.9 460,400.4 462,399.8 464,399.2 466,398.7 468,398.1 470,397.5 472,396.9 474,396.3 476,395.8 478,395.2 480,394.7 482,394.3 484,393.8 486,393.4 488,393.0 490,392.7 492,392.4 494,392.1 496,391.9 498,391.8 500,391.6 502,391.5 504,391.4 506,391.3 508,391.2 510,391.1 512,391.0 514,390.9 516,390.8 518,390.6 520,390.5 522,390.4 524,390.3 526,390.2 528,390.2 530,390.1 532,390.1 534,390.1 536,390.1 538,389.9 540,389.6 542,389.4 544,389.2 546,389.0 548,388.8 550,388.7 552,388.5 554,388.4 556,388.2 558,387.9 560,387.7 562,387.4 564,387.0 566,386.6 568,386.1 570,385.7 572,385.2 574,384.8 576,384.4 578,383.9 580,383.5 582,382.9 584,382.3 586,381.9 588,381.4 590,380.8 592,380.2 594,379.5 596,378.6 598,377.6 600,376.5 602,375.4 604,374.1 606,372.9 608,371.5 610,370.3 612,369.0 614,367.8 616,366.6 618,365.4 620,364.3 622,363.4 624,362.7 626,362.0 628,361.5 630,360.9 632,360.3 634,359.7 636,359.2 638,358.7 640,358.2 642,357.9 644,357.5 646,357.2 648,356.9 650,356.5 652,356.2 654,355.8 656,355.5 658,355.1 660,354.8 662,354.2 664,353.6 666,353.0 668,352.3 670,351.7 672,351.0 674,350.4 676,349.8 678,349.1 680,348.4 682,347.6 684,346.8 686,346.0 688,345.2 690,344.3 692,343.4 694,342.5 696,341.7 698,340.9 700,340.1 702,339.6 704,339.1 706,338.7 708,338.4 710,338.2 712,338.0 714,338.0 716,338.1 718,338.0 720,338.0 722,338.0 724,338.0 726,338.0 728,338.0 730,337.9 732,337.8 734,337.6 736,337.5 738,337.2 740,337.0 742,336.7 744,336.5 746,336.7 748,337.1 750,337.7 752,338.6 754,338.7 756,339.1 758,339.4 760,339.8 762,340.6 764,341.5 766,342.5 768,343.5 770,344.5 772,345.5 774,346.6 776,347.6 778,348.6 780,349.6 782,350.4 784,351.1 786,351.8 788,352.3 790,352.8 792,353.2 794,353.6 796,354.0 798,354.2 800,354.4 802,354.6 804,354.8 806,355.0 808,355.1 810,355.3 812,355.5 814,355.9 816,356.2 818,356.4 820,356.6" fill="none" stroke="#e04040" stroke-width="1"/><polyline points="284,492.4 286,491.7 288,490.7 290,489.1 292,487.4 294,485.7 296,483.9 298,482.4 300,480.8 302,479.2 304,477.7 306,476.3 308,474.9 310,473.5 312,472.1 314,470.7 316,469.2 318,467.9 320,466.6 322,465.2 324,463.9 326,462.4 328,460.9 330,459.4 332,457.9 334,456.4 336,455.0 338,453.6 340,452.3 342,451.2 344,450.2 346,449.7 348,449.2 350,448.4 352,447.5 354,446.4 356,445.2 358,444.0 360,442.7 362,441.6 364,440.5 366,439.5 368,438.4 370,437.4 372,436.3 374,435.4 376,434.4 378,433.3 380,432.2 382,431.5 384,430.7 386,430.1 388,429.6 390,428.9 392,428.2 394,427.3 396,426.4 398,425.6 400,424.7 402,423.9 404,423.2 406,422.4 408,421.8 410,421.1 412,420.4 414,419.8 416,419.1 418,418.4 420,417.7 422,416.9 424,416.2 426,415.4 428,414.6 430,413.9 432,413.2 434,412.5 436,411.8 438,411.1 440,410.5 442,409.9 444,409.3 446,408.7 448,408.2 450,407.7 452,407.1 454,406.6 456,406.0 458,405.5 460,405.0 462,404.4 464,403.8 466,403.3 468,402.7 470,402.1 472,401.6 474,401.0 476,400.4 478,399.9 480,399.4 482,398.9 484,398.4 486,398.0 488,397.7 490,397.3 492,397.0 494,396.7 496,396.5 498,396.3 500,396.1 502,396.0 504,395.9 506,395.7 508,395.6 510,395.5 512,395.3 514,395.2 516,395.1 518,394.9 520,394.8 522,394.6 524,394.5 526,394.4 528,394.3 530,394.2 532,394.1 534,394.1 536,394.1 538,393.8 540,393.6 542,393.3 544,393.1 546,392.9 548,392.6 550,392.5 552,392.3 554,392.1 556,391.9 558,391.6 560,391.4 562,391.0 564,390.6 566,390.2 568,389.7 570,389.3 572,388.8 574,388.4 576,388.0 578,387.5 580,387.0 582,386.4 584,385.8 586,385.4 588,384.9 590,384.3 592,383.7 594,382.9 596,382.1 598,381.1 600,380.1 602,378.9 604,377.7 606,376.5 608,375.2 610,374.0 612,372.8 614,371.6 616,370.4 618,369.2 620,368.2 622,367.3 624,366.6 626,365.9 628,365.3 630,364.7 632,364.2 634,363.6 636,363.0 638,362.5 640,362.0 642,361.7 644,361.3 646,360.9 648,360.6 650,360.2 652,359.9 654,359.5 656,359.2 658,358.8 660,358.5 662,357.9 664,357.3 666,356.7 668,356.1 670,355.4 672,354.8 674,354.2 676,353.6 678,352.9 680,352.2 682,351.4 684,350.7 686,349.9 688,349.1 690,348.3 692,347.4 694,346.6 696,345.8 698,345.0 700,344.2 702,343.7 704,343.2 706,342.9 708,342.5 710,342.3 712,342.1 714,342.1 716,342.1 718,342.1 720,342.0 722,341.9 724,341.9 726,341.9 728,341.9 730,341.8 732,341.6 734,341.5 736,341.3 738,341.0 740,340.8 742,340.5 744,340.3 746,340.5 748,340.8 750,341.4 752,342.2 754,342.3 756,342.7 758,342.9 760,343.3 762,344.1 764,344.9 766,345.9 768,346.8 770,347.8 772,348.7 774,349.7 776,350.7 778,351.6 780,352.5 782,353.3 784,354.0 786,354.6 788,355.1 790,355.5 792,355.9 794,356.3 796,356.6 798,356.9 800,357.1 802,357.3 804,357.5 806,357.6 808,357.7 810,357.9 812,358.1 814,358.4 816,358.7 818,358.9 820,359.1" fill="none" stroke="#e04040" stroke-width="1"/><polyline points="284,497.2 286,496.4 288,495.4 290,493.8 292,492.2 294,490.5 296,488.7 298,487.1 300,485.5 302,484.0 304,482.4 306,481.1 308,479.7 310,478.3 312,476.9 314,475.4 316,474.0 318,472.7 320,471.3 322,469.9 324,468.5 326,467.0 328,465.6 330,464.0 332,462.6 334,461.1 336,459.7 338,458.3 340,457.0 342,455.9 344,454.8 346,454.3 348,453.8 350,453.0 352,452.1 354,451.0 356,449.8 358,448.6 360,447.4 362,446.2 364,445.1 366,444.1 368,443.0 370,442.0 372,440.9 374,440.0 376,439.0 378,438.0 380,436.9 382,436.1 384,435.3 386,434.7 388,434.1 390,433.4 392,432.7 394,431.8 396,430.9 398,430.0 400,429.2 402,428.4 404,427.6 406,426.9 408,426.2 410,425.5 412,424.9 414,424.2 416,423.6 418,422.9 420,422.2 422,421.4 424,420.7 426,419.9 428,419.1 430,418.4 432,417.7 434,417.0 436,416.3 438,415.7 440,415.1 442,414.5 444,413.9 446,413.3 448,412.8 450,412.2 452,411.7 454,411.2 456,410.6 458,410.1 460,409.6 462,409.0 464,408.4 466,407.9 468,407.3 470,406.8 472,406.2 474,405.6 476,405.0 478,404.5 480,404.0 482,403.5 484,403.1 486,402.7 488,402.3 490,401.9 492,401.6 494,401.3 496,401.0 498,400.8 500,400.6 502,400.5 504,400.3 506,400.2 508,400.0 510,399.8 512,399.7 514,399.5 516,399.3 518,399.2 520,399.0 522,398.8 524,398.6 526,398.5 528,398.4 530,398.3 532,398.2 534,398.1 536,398.1 538,397.8 540,397.5 542,397.2 544,397.0 546,396.7 548,396.5 550,396.3 552,396.1 554,395.8 556,395.6 558,395.3 560,395.0 562,394.6 564,394.2 566,393.8 568,393.3 570,392.8 572,392.4 574,391.9 576,391.5 578,391.0 580,390.5 582,389.9 584,389.3 586,388.9 588,388.4 590,387.8 592,387.2 594,386.4 596,385.6 598,384.7 600,383.6 602,382.5 604,381.3 606,380.1 608,378.9 610,377.7 612,376.5 614,375.3 616,374.2 618,373.1 620,372.0 622,371.2 624,370.5 626,369.8 628,369.2 630,368.6 632,368.0 634,367.4 636,366.8 638,366.3 640,365.8 642,365.5 644,365.1 646,364.7 648,364.3 650,364.0 652,363.6 654,363.3 656,362.9 658,362.5 660,362.2 662,361.6 664,361.1 666,360.5 668,359.8 670,359.2 672,358.6 674,358.0 676,357.4 678,356.7 680,356.1 682,355.3 684,354.6 686,353.8 688,353.1 690,352.2 692,351.5 694,350.6 696,349.8 698,349.1 700,348.4 702,347.8 704,347.4 706,347.0 708,346.7 710,346.4 712,346.2 714,346.2 716,346.2 718,346.1 720,346.0 722,345.9 724,345.8 726,345.8 728,345.8 730,345.6 732,345.5 734,345.3 736,345.1 738,344.8 740,344.6 742,344.3 744,344.0 746,344.2 748,344.5 750,345.1 752,345.8 754,345.9 756,346.3 758,346.5 760,346.9 762,347.6 764,348.4 766,349.2 768,350.1 770,351.0 772,351.9 774,352.8 776,353.7 778,354.6 780,355.4 782,356.2 784,356.8 786,357.4 788,357.8 790,358.2 792,358.6 794,359.0 796,359.3 798,359.5 800,359.7 802,359.9 804,360.1 806,360.2 808,360.3 810,360.5 812,360.7 814,361.0 816,361.3 818,361.5 820,361.6" fill="none" stroke="#e04040" stroke-width="1"/><polyline points="284,501.9 286,501.1 288,500.1 290,498.6 292,496.9 294,495.2 296,493.5 298,491.9 300,490.3 302,488.8 304,487.2 306,485.9 308,484.5 310,483.0 312,481.6 314,480.2 316,478.7 318,477.4 320,476.0 322,474.6 324,473.2 326,471.7 328,470.2 330,468.7 332,467.2 334,465.8 336,464.4 338,463.0 340,461.7 342,460.6 344,459.5 346,459.0 348,458.4 350,457.5 352,456.7 354,455.5 356,454.4 358,453.2 360,452.0 362,450.9 364,449.8 366,448.7 368,447.7 370,446.6 372,445.6 374,444.6 376,443.7 378,442.6 380,441.5 382,440.7 384,439.8 386,439.2 388,438.6 390,437.9 392,437.1 394,436.2 396,435.3 398,434.5 400,433.6 402,432.8 404,432.0 406,431.3 408,430.6 410,430.0 412,429.3 414,428.7 416,428.0 418,427.3 420,426.6 422,425.9 424,425.2 426,424.4 428,423.7 430,423.0 432,422.2 434,421.6 436,420.9 438,420.3 440,419.6 442,419.0 444,418.5 446,417.9 448,417.4 450,416.8 452,416.3 454,415.8 456,415.2 458,414.7 460,414.2 462,413.6 464,413.1 466,412.5 468,411.9 470,411.4 472,410.8 474,410.3 476,409.7 478,409.2 480,408.6 482,408.2 484,407.7 486,407.3 488,406.9 490,406.5 492,406.2 494,405.9 496,405.6 498,405.4 500,405.2 502,405.0 504,404.8 506,404.6 508,404.4 510,404.2 512,404.0 514,403.8 516,403.6 518,403.4 520,403.2 522,403.0 524,402.8 526,402.7 528,402.5 530,402.4 532,402.2 534,402.1 536,402.0 538,401.7 540,401.4 542,401.1 544,400.9 546,400.6 548,400.3 550,400.1 552,399.8 554,399.6 556,399.3 558,399.0 560,398.7 562,398.3 564,397.9 566,397.4 568,396.9 570,396.4 572,396.0 574,395.5 576,395.1 578,394.5 580,394.0 582,393.4 584,392.8 586,392.4 588,391.8 590,391.3 592,390.6 594,389.9 596,389.1 598,388.2 600,387.2 602,386.1 604,384.9 606,383.8 608,382.6 610,381.4 612,380.3 614,379.1 616,378.0 618,376.9 620,375.9 622,375.1 624,374.4 626,373.7 628,373.1 630,372.5 632,371.9 634,371.3 636,370.7 638,370.2 640,369.7 642,369.3 644,368.8 646,368.5 648,368.1 650,367.7 652,367.3 654,367.0 656,366.6 658,366.2 660,365.9 662,365.3 664,364.8 666,364.2 668,363.6 670,363.0 672,362.3 674,361.8 676,361.2 678,360.6 680,359.9 682,359.2 684,358.5 686,357.8 688,357.0 690,356.2 692,355.5 694,354.7 696,353.9 698,353.2 700,352.5 702,352.0 704,351.5 706,351.1 708,350.8 710,350.5 712,350.3 714,350.2 716,350.2 718,350.1 720,350.0 722,349.9 724,349.8 726,349.7 728,349.7 730,349.5 732,349.3 734,349.1 736,348.9 738,348.7 740,348.4 742,348.1 744,347.8 746,348.0 748,348.2 750,348.7 752,349.4 754,349.5 756,349.8 758,350.0 760,350.4 762,351.0 764,351.8 766,352.6 768,353.4 770,354.3 772,355.1 774,355.9 776,356.8 778,357.6 780,358.4 782,359.0 784,359.6 786,360.2 788,360.6 790,361.0 792,361.3 794,361.7 796,362.0 798,362.2 800,362.4 802,362.5 804,362.7 806,362.8 808,363.0 810,363.1 812,363.3 814,363.6 816,363.8 818,364.0 820,364.2" fill="none" stroke="#e04040" stroke-width="1"/><polyline points="284,506.6 286,505.8 288,504.8 290,503.3 292,501.7 294,500.0 296,498.3 298,496.7 300,495.1 302,493.6 304,492.0 306,490.6 308,489.2 310,487.8 312,486.4 314,484.9 316,483.4 318,482.1 320,480.7 322,479.3 324,477.9 326,476.4 328,474.9 330,473.4 332,471.9 334,470.4 336,469.0 338,467.7 340,466.4 342,465.3 344,464.2 346,463.6 348,463.0 350,462.1 352,461.3 354,460.1 356,459.0 358,457.8 360,456.6 362,455.5 364,454.4 366,453.3 368,452.3 370,451.2 372,450.2 374,449.2 376,448.3 378,447.2 380,446.1 382,445.3 384,444.4 386,443.8 388,443.2 390,442.4 392,441.6 394,440.7 396,439.8 398,438.9 400,438.1 402,437.2 404,436.5 406,435.8 408,435.1 410,434.4 412,433.8 414,433.1 416,432.5 418,431.8 420,431.1 422,430.4 424,429.7 426,428.9 428,428.2 430,427.5 432,426.8 434,426.1 436,425.5 438,424.8 440,424.2 442,423.6 444,423.0 446,422.5 448,421.9 450,421.4 452,420.9 454,420.4 456,419.8 458,419.3 460,418.8 462,418.2 464,417.7 466,417.1 468,416.6 470,416.0 472,415.4 474,414.9 476,414.3 478,413.8 480,413.3 482,412.8 484,412.4 486,411.9 488,411.5 490,411.1 492,410.8 494,410.4 496,410.2 498,409.9 500,409.7 502,409.4 504,409.2 506,409.0 508,408.8 510,408.6 512,408.4 514,408.1 516,407.9 518,407.7 520,407.4 522,407.2 524,407.0 526,406.8 528,406.6 530,406.4 532,406.3 534,406.1 536,406.0 538,405.7 540,405.4 542,405.0 544,404.7 546,404.4 548,404.1 550,403.9 552,403.6 554,403.3 556,403.0 558,402.7 560,402.3 562,401.9 564,401.5 566,401.0 568,400.5 570,400.0 572,399.5 574,399.1 576,398.6 578,398.1 580,397.5 582,397.0 584,396.4 586,395.9 588,395.3 590,394.8 592,394.1 594,393.4 596,392.6 598,391.7 600,390.7 602,389.7 604,388.5 606,387.4 608,386.3 610,385.1 612,384.0 614,382.9 616,381.8 618,380.8 620,379.8 622,379.0 624,378.2 626,377.6 628,376.9 630,376.3 632,375.8 634,375.1 636,374.5 638,374.0 640,373.5 642,373.0 644,372.6 646,372.2 648,371.8 650,371.4 652,371.1 654,370.7 656,370.3 658,369.9 660,369.6 662,369.0 664,368.5 666,367.9 668,367.4 670,366.7 672,366.1 674,365.6 676,365.0 678,364.4 680,363.8 682,363.1 684,362.4 686,361.7 688,361.0 690,360.2 692,359.5 694,358.7 696,358.0 698,357.3 700,356.6 702,356.1 704,355.6 706,355.2 708,354.9 710,354.6 712,354.4 714,354.3 716,354.2 718,354.1 720,353.9 722,353.8 724,353.7 726,353.6 728,353.6 730,353.4 732,353.2 734,352.9 736,352.7 738,352.5 740,352.2 742,351.9 744,351.6 746,351.7 748,351.9 750,352.4 752,353.0 754,353.1 756,353.4 758,353.6 760,353.9 762,354.5 764,355.2 766,356.0 768,356.7 770,357.5 772,358.2 774,359.0 776,359.8 778,360.6 780,361.3 782,361.9 784,362.5 786,363.0 788,363.4 790,363.7 792,364.0 794,364.3 796,364.6 798,364.8 800,365.0 802,365.2 804,365.3 806,365.4 808,365.6 810,365.7 812,365.8 814,366.1 816,366.4 818,366.5 820,366.7" fill="none" stroke="#e04040" stroke-width="1"/><polyline points="284,511.3 286,510.5 288,509.5 290,508.0 292,506.4 294,504.8 296,503.1 298,501.5 300,499.9 302,498.4 304,496.8 306,495.4 308,494.0 310,492.6 312,491.1 314,489.6 316,488.2 318,486.8 320,485.4 322,484.0 324,482.6 326,481.1 328,479.6 330,478.1 332,476.6 334,475.1 336,473.7 338,472.4 340,471.1 342,470.0 344,468.9 346,468.2 348,467.6 350,466.7 352,465.8 354,464.7 356,463.6 358,462.4 360,461.2 362,460.1 364,459.0 366,458.0 368,456.9 370,455.9 372,454.8 374,453.9 376,452.9 378,451.8 380,450.7 382,449.9 384,449.0 386,448.3 388,447.7 390,446.9 392,446.1 394,445.1 396,444.3 398,443.4 400,442.5 402,441.7 404,440.9 406,440.2 408,439.5 410,438.9 412,438.2 414,437.6 416,436.9 418,436.3 420,435.6 422,434.9 424,434.2 426,433.4 428,432.7 430,432.0 432,431.3 434,430.7 436,430.0 438,429.4 440,428.8 442,428.2 444,427.6 446,427.1 448,426.5 450,426.0 452,425.5 454,425.0 456,424.4 458,423.9 460,423.4 462,422.8 464,422.3 466,421.7 468,421.2 470,420.6 472,420.1 474,419.5 476,419.0 478,418.4 480,417.9 482,417.5 484,417.0 486,416.6 488,416.1 490,415.7 492,415.4 494,415.0 496,414.7 498,414.4 500,414.2 502,413.9 504,413.7 506,413.4 508,413.2 510,412.9 512,412.7 514,412.4 516,412.2 518,411.9 520,411.7 522,411.4 524,411.2 526,410.9 528,410.7 530,410.5 532,410.3 534,410.2 536,410.0 538,409.6 540,409.3 542,409.0 544,408.6 546,408.3 548,408.0 550,407.7 552,407.4 554,407.1 556,406.7 558,406.4 560,406.0 562,405.6 564,405.1 566,404.6 568,404.1 570,403.6 572,403.1 574,402.6 576,402.1 578,401.6 580,401.1 582,400.5 584,399.9 586,399.4 588,398.8 590,398.2 592,397.6 594,396.9 596,396.1 598,395.2 600,394.2 602,393.2 604,392.2 606,391.1 608,389.9 610,388.8 612,387.8 614,386.7 616,385.6 618,384.6 620,383.6 622,382.8 624,382.1 626,381.4 628,380.8 630,380.2 632,379.6 634,379.0 636,378.4 638,377.8 640,377.3 642,376.8 644,376.4 646,376.0 648,375.6 650,375.2 652,374.8 654,374.4 656,374.0 658,373.7 660,373.3 662,372.8 664,372.2 666,371.7 668,371.1 670,370.5 672,369.9 674,369.4 676,368.8 678,368.2 680,367.6 682,367.0 684,366.3 686,365.6 688,364.9 690,364.2 692,363.5 694,362.8 696,362.1 698,361.4 700,360.7 702,360.2 704,359.7 706,359.4 708,359.0 710,358.7 712,358.4 714,358.4 716,358.3 718,358.1 720,357.9 722,357.8 724,357.7 726,357.6 728,357.4 730,357.2 732,357.0 734,356.8 736,356.5 738,356.3 740,356.0 742,355.7 744,355.4 746,355.5 748,355.6 750,356.1 752,356.6 754,356.7 756,357.0 758,357.1 760,357.4 762,358.0 764,358.6 766,359.3 768,360.0 770,360.7 772,361.4 774,362.2 776,362.9 778,363.6 780,364.2 782,364.8 784,365.3 786,365.8 788,366.1 790,366.5 792,366.8 794,367.0 796,367.3 798,367.5 800,367.7 802,367.8 804,367.9 806,368.1 808,368.2 810,368.3 812,368.4 814,368.7 816,368.9 818,369.1 820,369.2" fill="none" stroke="#e04040" stroke-width="1"/><polyline points="284,516.0 286,515.2 288,514.2 290,512.7 292,511.2 294,509.5 296,507.9 298,506.3 300,504.7 302,503.2 304,501.6 306,500.2 308,498.8 310,497.3 312,495.9 314,494.4 316,492.9 318,491.5 320,490.1 322,488.7 324,487.3 326,485.8 328,484.3 330,482.7 332,481.3 334,479.8 336,478.4 338,477.1 340,475.8 342,474.7 344,473.6 346,472.9 348,472.2 350,471.3 352,470.4 354,469.3 356,468.2 358,467.0 360,465.8 362,464.7 364,463.6 366,462.6 368,461.5 370,460.5 372,459.4 374,458.5 376,457.5 378,456.4 380,455.3 382,454.5 384,453.6 386,452.9 388,452.2 390,451.4 392,450.5 394,449.6 396,448.7 398,447.8 400,446.9 402,446.1 404,445.4 406,444.6 408,444.0 410,443.3 412,442.7 414,442.0 416,441.4 418,440.7 420,440.1 422,439.4 424,438.7 426,437.9 428,437.2 430,436.6 432,435.9 434,435.2 436,434.6 438,434.0 440,433.4 442,432.8 444,432.2 446,431.7 448,431.1 450,430.6 452,430.1 454,429.6 456,429.0 458,428.5 460,428.0 462,427.4 464,426.9 466,426.3 468,425.8 470,425.3 472,424.7 474,424.2 476,423.6 478,423.1 480,422.6 482,422.1 484,421.6 486,421.2 488,420.8 490,420.4 492,420.0 494,419.6 496,419.3 498,419.0 500,418.7 502,418.4 504,418.1 506,417.9 508,417.6 510,417.3 512,417.0 514,416.8 516,416.5 518,416.2 520,415.9 522,415.6 524,415.3 526,415.1 528,414.8 530,414.6 532,414.4 534,414.2 536,414.0 538,413.6 540,413.2 542,412.9 544,412.5 546,412.2 548,411.8 550,411.5 552,411.2 554,410.8 556,410.5 558,410.1 560,409.7 562,409.2 564,408.7 566,408.2 568,407.7 570,407.2 572,406.7 574,406.2 576,405.7 578,405.1 580,404.6 582,404.0 584,403.4 586,402.9 588,402.3 590,401.7 592,401.1 594,400.4 596,399.6 598,398.7 600,397.8 602,396.8 604,395.8 606,394.7 608,393.6 610,392.6 612,391.5 614,390.5 616,389.4 618,388.4 620,387.5 622,386.7 624,386.0 626,385.3 628,384.7 630,384.1 632,383.5 634,382.8 636,382.2 638,381.6 640,381.1 642,380.6 644,380.2 646,379.7 648,379.3 650,378.9 652,378.5 654,378.1 656,377.7 658,377.4 660,377.0 662,376.5 664,376.0 666,375.4 668,374.9 670,374.3 672,373.7 674,373.2 676,372.6 678,372.1 680,371.5 682,370.8 684,370.2 686,369.5 688,368.9 690,368.2 692,367.5 694,366.8 696,366.1 698,365.4 700,364.8 702,364.3 704,363.9 706,363.5 708,363.1 710,362.8 712,362.5 714,362.4 716,362.3 718,362.1 720,361.9 722,361.8 724,361.6 726,361.5 728,361.3 730,361.1 732,360.9 734,360.6 736,360.3 738,360.1 740,359.8 742,359.5 744,359.2 746,359.2 748,359.4 750,359.7 752,360.2 754,360.3 756,360.5 758,360.7 760,361.0 762,361.5 764,362.0 766,362.7 768,363.3 770,364.0 772,364.6 774,365.3 776,365.9 778,366.6 780,367.1 782,367.7 784,368.2 786,368.6 788,368.9 790,369.2 792,369.5 794,369.7 796,370.0 798,370.1 800,370.3 802,370.4 804,370.6 806,370.7 808,370.8 810,370.9 812,371.0 814,371.3 816,371.5 818,371.6 820,371.7" fill="none" stroke="#e04040" stroke-width="1"/><polyline points="284,520.7 286,519.9 288,518.9 290,517.5 292,515.9 294,514.3 296,512.6 298,511.1 300,509.5 302,508.0 304,506.4 306,505.0 308,503.5 310,502.1 312,500.6 314,499.1 316,497.6 318,496.2 320,494.8 322,493.4 324,491.9 326,490.4 328,488.9 330,487.4 332,485.9 334,484.5 336,483.1 338,481.8 340,480.5 342,479.4 344,478.3 346,477.5 348,476.8 350,475.9 352,475.0 354,473.9 356,472.8 358,471.6 360,470.4 362,469.3 364,468.3 366,467.2 368,466.2 370,465.1 372,464.1 374,463.1 376,462.1 378,461.0 380,459.9 382,459.1 384,458.2 386,457.4 388,456.7 390,455.9 392,455.0 394,454.1 396,453.2 398,452.3 400,451.4 402,450.6 404,449.8 406,449.1 408,448.4 410,447.7 412,447.1 414,446.5 416,445.8 418,445.2 420,444.5 422,443.8 424,443.2 426,442.5 428,441.8 430,441.1 432,440.4 434,439.8 436,439.1 438,438.5 440,437.9 442,437.4 444,436.8 446,436.2 448,435.7 450,435.2 452,434.7 454,434.2 456,433.6 458,433.1 460,432.6 462,432.0 464,431.5 466,431.0 468,430.4 470,429.9 472,429.3 474,428.8 476,428.2 478,427.7 480,427.2 482,426.7 484,426.3 486,425.8 488,425.4 490,425.0 492,424.6 494,424.2 496,423.8 498,423.5 500,423.2 502,422.9 504,422.6 506,422.3 508,422.0 510,421.7 512,421.4 514,421.1 516,420.8 518,420.4 520,420.1 522,419.8 524,419.5 526,419.2 528,418.9 530,418.7 532,418.4 534,418.2 536,417.9 538,417.6 540,417.2 542,416.8 544,416.4 546,416.0 548,415.6 550,415.3 552,414.9 554,414.6 556,414.2 558,413.8 560,413.3 562,412.9 564,412.4 566,411.8 568,411.3 570,410.8 572,410.2 574,409.7 576,409.2 578,408.7 580,408.1 582,407.5 584,406.9 586,406.4 588,405.8 590,405.2 592,404.6 594,403.8 596,403.1 598,402.2 600,401.3 602,400.4 604,399.4 606,398.3 608,397.3 610,396.3 612,395.3 614,394.3 616,393.3 618,392.3 620,391.4 622,390.6 624,389.9 626,389.2 628,388.6 630,387.9 632,387.3 634,386.7 636,386.0 638,385.5 640,384.9 642,384.4 644,384.0 646,383.5 648,383.1 650,382.6 652,382.2 654,381.8 656,381.4 658,381.1 660,380.7 662,380.2 664,379.7 666,379.2 668,378.6 670,378.1 672,377.5 674,377.0 676,376.5 678,375.9 680,375.3 682,374.7 684,374.1 686,373.5 688,372.8 690,372.2 692,371.5 694,370.8 696,370.2 698,369.5 700,368.9 702,368.5 704,368.0 706,367.6 708,367.3 710,366.9 712,366.6 714,366.5 716,366.3 718,366.1 720,365.9 722,365.7 724,365.5 726,365.4 728,365.2 730,365.0 732,364.7 734,364.4 736,364.2 738,363.9 740,363.6 742,363.3 744,363.0 746,363.0 748,363.1 750,363.4 752,363.8 754,363.9 756,364.1 758,364.2 760,364.5 762,364.9 764,365.5 766,366.0 768,366.6 770,367.2 772,367.8 774,368.4 776,369.0 778,369.5 780,370.1 782,370.6 784,371.0 786,371.4 788,371.7 790,371.9 792,372.2 794,372.4 796,372.6 798,372.8 800,372.9 802,373.1 804,373.2 806,373.3 808,373.4 810,373.5 812,373.6 814,373.8 816,374.0 818,374.2 820,374.3" fill="none" stroke="#e04040" stroke-width="1"/><polyline points="284,525.5 286,524.6 288,523.6 290,522.2 292,520.7 294,519.1 296,517.4 298,515.9 300,514.3 302,512.7 304,511.2 306,509.8 308,508.3 310,506.8 312,505.3 314,503.9 316,502.4 318,501.0 320,499.5 322,498.1 324,496.6 326,495.1 328,493.6 330,492.1 332,490.6 334,489.2 336,487.8 338,486.4 340,485.2 342,484.0 344,483.0 346,482.2 348,481.4 350,480.5 352,479.6 354,478.5 356,477.4 358,476.2 360,475.0 362,474.0 364,472.9 366,471.8 368,470.8 370,469.7 372,468.7 374,467.7 376,466.7 378,465.6 380,464.6 382,463.7 384,462.8 386,462.0 388,461.2 390,460.3 392,459.5 394,458.5 396,457.6 398,456.7 400,455.8 402,455.0 404,454.2 406,453.5 408,452.8 410,452.2 412,451.6 414,450.9 416,450.3 418,449.7 420,449.0 422,448.3 424,447.7 426,447.0 428,446.3 430,445.6 432,445.0 434,444.3 436,443.7 438,443.1 440,442.5 442,441.9 444,441.4 446,440.8 448,440.3 450,439.8 452,439.3 454,438.7 456,438.2 458,437.7 460,437.2 462,436.6 464,436.1 466,435.6 468,435.0 470,434.5 472,434.0 474,433.4 476,432.9 478,432.4 480,431.9 482,431.4 484,430.9 486,430.4 488,430.0 490,429.6 492,429.2 494,428.8 496,428.4 498,428.0 500,427.7 502,427.4 504,427.0 506,426.7 508,426.4 510,426.0 512,425.7 514,425.4 516,425.0 518,424.7 520,424.4 522,424.0 524,423.7 526,423.4 528,423.1 530,422.8 532,422.5 534,422.2 536,421.9 538,421.5 540,421.1 542,420.7 544,420.3 546,419.9 548,419.5 550,419.1 552,418.7 554,418.3 556,417.9 558,417.4 560,417.0 562,416.5 564,416.0 566,415.5 568,414.9 570,414.4 572,413.8 574,413.3 576,412.8 578,412.2 580,411.6 582,411.0 584,410.4 586,409.9 588,409.3 590,408.7 592,408.0 594,407.3 596,406.6 598,405.7 600,404.9 602,403.9 604,403.0 606,402.0 608,401.0 610,400.0 612,399.0 614,398.0 616,397.1 618,396.1 620,395.2 622,394.5 624,393.8 626,393.1 628,392.4 630,391.8 632,391.2 634,390.5 636,389.9 638,389.3 640,388.7 642,388.2 644,387.7 646,387.3 648,386.8 650,386.4 652,385.9 654,385.5 656,385.2 658,384.8 660,384.4 662,383.9 664,383.4 666,382.9 668,382.4 670,381.8 672,381.3 674,380.8 676,380.3 678,379.7 680,379.2 682,378.6 684,378.0 686,377.4 688,376.8 690,376.1 692,375.5 694,374.9 696,374.3 698,373.6 700,373.1 702,372.6 704,372.1 706,371.7 708,371.4 710,371.1 712,370.7 714,370.6 716,370.4 718,370.1 720,369.9 722,369.7 724,369.5 726,369.3 728,369.1 730,368.8 732,368.6 734,368.3 736,368.0 738,367.7 740,367.4 742,367.1 744,366.7 746,366.7 748,366.8 750,367.1 752,367.4 754,367.5 756,367.6 758,367.8 760,368.0 762,368.4 764,368.9 766,369.4 768,369.9 770,370.4 772,370.9 774,371.5 776,372.0 778,372.5 780,373.0 782,373.4 784,373.8 786,374.2 788,374.4 790,374.7 792,374.9 794,375.1 796,375.3 798,375.5 800,375.6 802,375.7 804,375.8 806,375.9 808,376.0 810,376.1 812,376.2 814,376.4 816,376.6 818,376.7 820,376.8" fill="none" stroke="#e04040" stroke-width="1"/><polyline points="284,530.2 286,529.3 288,528.3 290,526.9 292,525.4 294,523.8 296,522.2 298,520.7 300,519.1 302,517.5 304,516.0 306,514.5 308,513.1 310,511.6 312,510.1 314,508.6 316,507.1 318,505.7 320,504.2 322,502.8 324,501.3 326,499.8 328,498.3 330,496.8 332,495.3 334,493.8 336,492.5 338,491.1 340,489.9 342,488.7 344,487.6 346,486.8 348,486.0 350,485.1 352,484.1 354,483.0 356,481.9 358,480.8 360,479.7 362,478.6 364,477.5 366,476.5 368,475.4 370,474.4 372,473.3 374,472.3 376,471.3 378,470.3 380,469.2 382,468.3 384,467.3 386,466.5 388,465.7 390,464.8 392,464.0 394,463.0 396,462.1 398,461.2 400,460.3 402,459.5 404,458.7 406,458.0 408,457.3 410,456.6 412,456.0 414,455.4 416,454.8 418,454.1 420,453.5 422,452.8 424,452.2 426,451.5 428,450.8 430,450.2 432,449.5 434,448.9 436,448.3 438,447.7 440,447.1 442,446.5 444,446.0 446,445.4 448,444.9 450,444.4 452,443.9 454,443.3 456,442.8 458,442.3 460,441.8 462,441.3 464,440.7 466,440.2 468,439.7 470,439.1 472,438.6 474,438.1 476,437.5 478,437.0 480,436.5 482,436.0 484,435.5 486,435.1 488,434.6 490,434.2 492,433.8 494,433.3 496,433.0 498,432.6 500,432.2 502,431.8 504,431.5 506,431.1 508,430.8 510,430.4 512,430.1 514,429.7 516,429.3 518,429.0 520,428.6 522,428.2 524,427.9 526,427.5 528,427.2 530,426.8 532,426.5 534,426.2 536,425.9 538,425.5 540,425.0 542,424.6 544,424.2 546,423.7 548,423.3 550,422.9 552,422.5 554,422.0 556,421.6 558,421.1 560,420.7 562,420.1 564,419.6 566,419.1 568,418.5 570,417.9 572,417.4 574,416.8 576,416.3 578,415.7 580,415.2 582,414.5 584,413.9 586,413.4 588,412.8 590,412.2 592,411.5 594,410.8 596,410.1 598,409.3 600,408.4 602,407.5 604,406.6 606,405.6 608,404.6 610,403.7 612,402.8 614,401.8 616,400.9 618,400.0 620,399.1 622,398.4 624,397.6 626,397.0 628,396.3 630,395.7 632,395.0 634,394.4 636,393.7 638,393.1 640,392.5 642,392.0 644,391.5 646,391.0 648,390.5 650,390.1 652,389.7 654,389.3 656,388.9 658,388.5 660,388.1 662,387.6 664,387.1 666,386.6 668,386.1 670,385.6 672,385.1 674,384.6 676,384.1 678,383.6 680,383.0 682,382.5 684,381.9 686,381.3 688,380.7 690,380.1 692,379.5 694,378.9 696,378.3 698,377.7 700,377.2 702,376.7 704,376.3 706,375.9 708,375.5 710,375.2 712,374.8 714,374.6 716,374.4 718,374.2 720,373.9 722,373.7 724,373.4 726,373.2 728,373.0 730,372.7 732,372.4 734,372.1 736,371.8 738,371.5 740,371.2 742,370.8 744,370.5 746,370.5 748,370.5 750,370.7 752,371.0 754,371.1 756,371.2 758,371.3 760,371.5 762,371.9 764,372.3 766,372.7 768,373.2 770,373.7 772,374.1 774,374.6 776,375.1 778,375.5 780,375.9 782,376.3 784,376.7 786,376.9 788,377.2 790,377.4 792,377.6 794,377.8 796,378.0 798,378.1 800,378.2 802,378.3 804,378.4 806,378.5 808,378.6 810,378.7 812,378.8 814,379.0 816,379.1 818,379.2 820,379.3" fill="none" stroke="#e04040" stroke-width="1"/><polyline points="284,534.9 286,534.0 288,533.0 290,531.6 292,530.1 294,528.6 296,527.0 298,525.4 300,523.9 302,522.3 304,520.8 306,519.3 308,517.8 310,516.3 312,514.8 314,513.3 316,511.8 318,510.4 320,508.9 322,507.5 324,506.0 326,504.5 328,503.0 330,501.4 332,500.0 334,498.5 336,497.2 338,495.8 340,494.6 342,493.4 344,492.3 346,491.5 348,490.6 350,489.7 352,488.7 354,487.6 356,486.5 358,485.4 360,484.3 362,483.2 364,482.1 366,481.1 368,480.0 370,479.0 372,477.9 374,476.9 376,475.9 378,474.9 380,473.8 382,472.9 384,471.9 386,471.1 388,470.2 390,469.3 392,468.4 394,467.5 396,466.5 398,465.6 400,464.7 402,463.9 404,463.1 406,462.4 408,461.7 410,461.1 412,460.4 414,459.8 416,459.2 418,458.6 420,458.0 422,457.3 424,456.6 426,456.0 428,455.3 430,454.7 432,454.1 434,453.4 436,452.8 438,452.2 440,451.7 442,451.1 444,450.5 446,450.0 448,449.5 450,449.0 452,448.4 454,447.9 456,447.4 458,446.9 460,446.4 462,445.9 464,445.3 466,444.8 468,444.3 470,443.8 472,443.2 474,442.7 476,442.2 478,441.7 480,441.1 482,440.7 484,440.2 486,439.7 488,439.2 490,438.8 492,438.4 494,437.9 496,437.5 498,437.1 500,436.7 502,436.3 504,435.9 506,435.6 508,435.2 510,434.8 512,434.4 514,434.0 516,433.6 518,433.2 520,432.8 522,432.4 524,432.0 526,431.7 528,431.3 530,430.9 532,430.6 534,430.2 536,429.9 538,429.4 540,429.0 542,428.5 544,428.1 546,427.6 548,427.1 550,426.7 552,426.3 554,425.8 556,425.3 558,424.8 560,424.3 562,423.8 564,423.2 566,422.7 568,422.1 570,421.5 572,421.0 574,420.4 576,419.8 578,419.3 580,418.7 582,418.1 584,417.4 586,416.9 588,416.3 590,415.6 592,415.0 594,414.3 596,413.6 598,412.8 600,411.9 602,411.1 604,410.2 606,409.3 608,408.3 610,407.4 612,406.5 614,405.6 616,404.7 618,403.8 620,403.0 622,402.2 624,401.5 626,400.8 628,400.2 630,399.5 632,398.9 634,398.2 636,397.6 638,397.0 640,396.4 642,395.8 644,395.3 646,394.8 648,394.3 650,393.8 652,393.4 654,393.0 656,392.6 658,392.2 660,391.8 662,391.3 664,390.9 666,390.4 668,389.9 670,389.4 672,388.9 674,388.4 676,387.9 678,387.4 680,386.9 682,386.3 684,385.8 686,385.2 688,384.7 690,384.1 692,383.5 694,383.0 696,382.4 698,381.8 700,381.3 702,380.8 704,380.4 706,380.0 708,379.6 710,379.3 712,378.9 714,378.7 716,378.5 718,378.2 720,377.9 722,377.6 724,377.4 726,377.1 728,376.9 730,376.6 732,376.3 734,375.9 736,375.6 738,375.3 740,375.0 742,374.6 744,374.3 746,374.2 748,374.2 750,374.4 752,374.6 754,374.6 756,374.8 758,374.9 760,375.0 762,375.4 764,375.7 766,376.1 768,376.5 770,376.9 772,377.3 774,377.7 776,378.1 778,378.5 780,378.9 782,379.2 784,379.5 786,379.7 788,380.0 790,380.2 792,380.3 794,380.5 796,380.7 798,380.8 800,380.9 802,381.0 804,381.1 806,381.1 808,381.2 810,381.3 812,381.4 814,381.5 816,381.7 818,381.8 820,381.8" fill="none" stroke="#e04040" stroke-width="1"/><polyline points="284,539.6 286,538.8 288,537.7 290,536.4 292,534.9 294,533.4 296,531.8 298,530.2 300,528.7 302,527.1 304,525.6 306,524.1 308,522.6 310,521.1 312,519.6 314,518.1 316,516.6 318,515.1 320,513.6 322,512.2 324,510.7 326,509.1 328,507.6 330,506.1 332,504.6 334,503.2 336,501.8 338,500.5 340,499.3 342,498.1 344,497.0 346,496.1 348,495.2 350,494.3 352,493.3 354,492.2 356,491.1 358,490.0 360,488.9 362,487.8 364,486.8 366,485.7 368,484.7 370,483.6 372,482.6 374,481.6 376,480.5 378,479.5 380,478.4 382,477.5 384,476.5 386,475.6 388,474.8 390,473.8 392,472.9 394,471.9 396,471.0 398,470.1 400,469.2 402,468.3 404,467.6 406,466.8 408,466.2 410,465.5 412,464.9 414,464.3 416,463.7 418,463.0 420,462.4 422,461.8 424,461.1 426,460.5 428,459.9 430,459.2 432,458.6 434,458.0 436,457.4 438,456.8 440,456.2 442,455.7 444,455.1 446,454.6 448,454.1 450,453.6 452,453.0 454,452.5 456,452.0 458,451.5 460,451.0 462,450.5 464,449.9 466,449.4 468,448.9 470,448.4 472,447.9 474,447.3 476,446.8 478,446.3 480,445.8 482,445.3 484,444.8 486,444.3 488,443.9 490,443.4 492,443.0 494,442.5 496,442.1 498,441.6 500,441.2 502,440.8 504,440.4 506,440.0 508,439.6 510,439.1 512,438.7 514,438.3 516,437.9 518,437.5 520,437.0 522,436.6 524,436.2 526,435.8 528,435.4 530,435.0 532,434.6 534,434.2 536,433.8 538,433.4 540,432.9 542,432.4 544,432.0 546,431.5 548,431.0 550,430.5 552,430.0 554,429.5 556,429.0 558,428.5 560,428.0 562,427.4 564,426.9 566,426.3 568,425.7 570,425.1 572,424.5 574,424.0 576,423.4 578,422.8 580,422.2 582,421.6 584,420.9 586,420.4 588,419.8 590,419.1 592,418.5 594,417.8 596,417.1 598,416.3 600,415.5 602,414.6 604,413.8 606,412.9 608,412.0 610,411.1 612,410.3 614,409.4 616,408.5 618,407.7 620,406.9 622,406.1 624,405.4 626,404.7 628,404.0 630,403.4 632,402.7 634,402.1 636,401.4 638,400.8 640,400.2 642,399.6 644,399.1 646,398.5 648,398.0 650,397.6 652,397.1 654,396.7 656,396.3 658,395.9 660,395.5 662,395.0 664,394.6 666,394.1 668,393.6 670,393.1 672,392.7 674,392.2 676,391.7 678,391.2 680,390.7 682,390.2 684,389.7 686,389.2 688,388.6 690,388.1 692,387.5 694,387.0 696,386.5 698,385.9 700,385.4 702,384.9 704,384.5 706,384.1 708,383.7 710,383.4 712,383.0 714,382.8 716,382.5 718,382.2 720,381.9 722,381.6 724,381.3 726,381.0 728,380.7 730,380.4 732,380.1 734,379.8 736,379.4 738,379.1 740,378.7 742,378.4 744,378.1 746,378.0 748,377.9 750,378.0 752,378.2 754,378.2 756,378.3 758,378.4 760,378.6 762,378.8 764,379.1 766,379.5 768,379.8 770,380.1 772,380.5 774,380.8 776,381.2 778,381.5 780,381.8 782,382.1 784,382.3 786,382.5 788,382.7 790,382.9 792,383.1 794,383.2 796,383.3 798,383.4 800,383.5 802,383.6 804,383.7 806,383.8 808,383.8 810,383.9 812,384.0 814,384.1 816,384.2 818,384.3 820,384.4" fill="none" stroke="#e04040" stroke-width="1"/><polyline points="284,544.3 286,543.5 288,542.4 290,541.1 292,539.6 294,538.1 296,536.6 298,535.0 300,533.5 302,531.9 304,530.4 306,528.9 308,527.4 310,525.9 312,524.3 314,522.8 316,521.3 318,519.8 320,518.3 322,516.8 324,515.3 326,513.8 328,512.3 330,510.8 332,509.3 334,507.9 336,506.5 338,505.2 340,504.0 342,502.8 344,501.7 346,500.8 348,499.8 350,498.8 352,497.9 354,496.8 356,495.7 358,494.6 360,493.5 362,492.4 364,491.4 366,490.3 368,489.3 370,488.2 372,487.2 374,486.2 376,485.2 378,484.1 380,483.0 382,482.1 384,481.1 386,480.2 388,479.3 390,478.3 392,477.4 394,476.4 396,475.4 398,474.5 400,473.6 402,472.8 404,472.0 406,471.3 408,470.6 410,470.0 412,469.3 414,468.7 416,468.1 418,467.5 420,466.9 422,466.3 424,465.6 426,465.0 428,464.4 430,463.8 432,463.1 434,462.5 436,461.9 438,461.4 440,460.8 442,460.2 444,459.7 446,459.2 448,458.7 450,458.1 452,457.6 454,457.1 456,456.6 458,456.1 460,455.6 462,455.1 464,454.6 466,454.0 468,453.5 470,453.0 472,452.5 474,452.0 476,451.4 478,450.9 480,450.4 482,449.9 484,449.4 486,449.0 488,448.5 490,448.0 492,447.5 494,447.1 496,446.6 498,446.2 500,445.7 502,445.3 504,444.8 506,444.4 508,444.0 510,443.5 512,443.1 514,442.6 516,442.2 518,441.7 520,441.3 522,440.8 524,440.4 526,439.9 528,439.5 530,439.1 532,438.7 534,438.2 536,437.8 538,437.3 540,436.8 542,436.3 544,435.8 546,435.3 548,434.8 550,434.3 552,433.8 554,433.3 556,432.7 558,432.2 560,431.6 562,431.1 564,430.5 566,429.9 568,429.3 570,428.7 572,428.1 574,427.5 576,426.9 578,426.3 580,425.7 582,425.1 584,424.5 586,423.9 588,423.2 590,422.6 592,422.0 594,421.3 596,420.6 598,419.8 600,419.0 602,418.2 604,417.4 606,416.5 608,415.7 610,414.8 612,414.0 614,413.2 616,412.3 618,411.5 620,410.7 622,410.0 624,409.3 626,408.6 628,407.9 630,407.2 632,406.6 634,405.9 636,405.2 638,404.6 640,404.0 642,403.4 644,402.8 646,402.3 648,401.8 650,401.3 652,400.8 654,400.4 656,400.0 658,399.6 660,399.2 662,398.8 664,398.3 666,397.8 668,397.4 670,396.9 672,396.4 674,396.0 676,395.5 678,395.1 680,394.6 682,394.1 684,393.6 686,393.1 688,392.6 690,392.1 692,391.6 694,391.0 696,390.5 698,390.0 700,389.5 702,389.1 704,388.6 706,388.2 708,387.9 710,387.5 712,387.1 714,386.8 716,386.5 718,386.2 720,385.9 722,385.6 724,385.2 726,384.9 728,384.6 730,384.3 732,383.9 734,383.6 736,383.2 738,382.9 740,382.5 742,382.2 744,381.9 746,381.7 748,381.7 750,381.7 752,381.8 754,381.8 756,381.9 758,382.0 760,382.1 762,382.3 764,382.6 766,382.8 768,383.1 770,383.4 772,383.6 774,383.9 776,384.2 778,384.5 780,384.7 782,385.0 784,385.2 786,385.3 788,385.5 790,385.6 792,385.8 794,385.9 796,386.0 798,386.1 800,386.2 802,386.2 804,386.3 806,386.4 808,386.4 810,386.5 812,386.6 814,386.7 816,386.8 818,386.8 820,386.9" fill="none" stroke="#e04040" stroke-width="1"/><polyline points="284,549.0 286,548.2 288,547.1 290,545.8 292,544.4 294,542.9 296,541.3 298,539.8 300,538.2 302,536.7 304,535.2 306,533.6 308,532.1 310,530.6 312,529.1 314,527.6 316,526.0 318,524.5 320,523.0 322,521.5 324,520.0 326,518.5 328,517.0 330,515.5 332,514.0 334,512.6 336,511.2 338,509.9 340,508.6 342,507.5 344,506.4 346,505.4 348,504.5 350,503.4 352,502.4 354,501.4 356,500.3 358,499.2 360,498.1 362,497.1 364,496.0 366,495.0 368,493.9 370,492.9 372,491.8 374,490.8 376,489.8 378,488.7 380,487.7 382,486.7 384,485.7 386,484.7 388,483.8 390,482.8 392,481.8 394,480.9 396,479.9 398,478.9 400,478.1 402,477.2 404,476.4 406,475.7 408,475.1 410,474.4 412,473.8 414,473.2 416,472.6 418,472.0 420,471.4 422,470.8 424,470.1 426,469.5 428,468.9 430,468.3 432,467.7 434,467.1 436,466.5 438,465.9 440,465.4 442,464.8 444,464.3 446,463.8 448,463.2 450,462.7 452,462.2 454,461.7 456,461.2 458,460.7 460,460.2 462,459.7 464,459.2 466,458.7 468,458.1 470,457.6 472,457.1 474,456.6 476,456.1 478,455.6 480,455.1 482,454.6 484,454.1 486,453.6 488,453.1 490,452.6 492,452.1 494,451.7 496,451.2 498,450.7 500,450.2 502,449.8 504,449.3 506,448.8 508,448.4 510,447.9 512,447.4 514,446.9 516,446.5 518,446.0 520,445.5 522,445.0 524,444.6 526,444.1 528,443.6 530,443.2 532,442.7 534,442.2 536,441.8 538,441.3 540,440.8 542,440.3 544,439.7 546,439.2 548,438.7 550,438.1 552,437.6 554,437.0 556,436.5 558,435.9 560,435.3 562,434.7 564,434.1 566,433.5 568,432.9 570,432.3 572,431.7 574,431.1 576,430.5 578,429.9 580,429.2 582,428.6 584,428.0 586,427.4 588,426.7 590,426.1 592,425.4 594,424.8 596,424.1 598,423.3 600,422.6 602,421.8 604,421.0 606,420.2 608,419.4 610,418.6 612,417.8 614,417.0 616,416.2 618,415.4 620,414.6 622,413.9 624,413.2 626,412.5 628,411.8 630,411.1 632,410.4 634,409.8 636,409.1 638,408.4 640,407.8 642,407.2 644,406.6 646,406.0 648,405.5 650,405.0 652,404.6 654,404.1 656,403.7 658,403.3 660,402.9 662,402.5 664,402.0 666,401.6 668,401.1 670,400.7 672,400.2 674,399.8 676,399.4 678,398.9 680,398.4 682,398.0 684,397.5 686,397.0 688,396.5 690,396.1 692,395.6 694,395.1 696,394.6 698,394.1 700,393.6 702,393.2 704,392.8 706,392.4 708,392.0 710,391.6 712,391.2 714,390.9 716,390.6 718,390.2 720,389.9 722,389.5 724,389.2 726,388.8 728,388.5 730,388.2 732,387.8 734,387.4 736,387.1 738,386.7 740,386.3 742,386.0 744,385.7 746,385.5 748,385.4 750,385.4 752,385.4 754,385.4 756,385.5 758,385.5 760,385.6 762,385.8 764,386.0 766,386.2 768,386.4 770,386.6 772,386.8 774,387.0 776,387.3 778,387.5 780,387.7 782,387.8 784,388.0 786,388.1 788,388.3 790,388.4 792,388.5 794,388.6 796,388.7 798,388.7 800,388.8 802,388.9 804,388.9 806,389.0 808,389.0 810,389.1 812,389.1 814,389.2 816,389.3 818,389.4 820,389.4" fill="none" stroke="#e04040" stroke-width="1"/><polyline points="284,553.7 286,552.9 288,551.8 290,550.5 292,549.1 294,547.7 296,546.1 298,544.6 300,543.0 302,541.5 304,539.9 306,538.4 308,536.9 310,535.4 312,533.8 314,532.3 316,530.8 318,529.3 320,527.7 322,526.2 324,524.7 326,523.2 328,521.7 330,520.2 332,518.7 334,517.3 336,515.9 338,514.6 340,513.3 342,512.2 344,511.1 346,510.0 348,509.1 350,508.0 352,507.0 354,505.9 356,504.9 358,503.8 360,502.7 362,501.7 364,500.6 366,499.6 368,498.5 370,497.5 372,496.4 374,495.4 376,494.4 378,493.3 380,492.3 382,491.3 384,490.3 386,489.3 388,488.3 390,487.3 392,486.3 394,485.3 396,484.3 398,483.4 400,482.5 402,481.7 404,480.9 406,480.2 408,479.5 410,478.9 412,478.2 414,477.6 416,477.0 418,476.4 420,475.8 422,475.2 424,474.6 426,474.0 428,473.4 430,472.8 432,472.2 434,471.6 436,471.1 438,470.5 440,469.9 442,469.4 444,468.9 446,468.3 448,467.8 450,467.3 452,466.8 454,466.3 456,465.8 458,465.3 460,464.8 462,464.3 464,463.8 466,463.3 468,462.8 470,462.3 472,461.7 474,461.2 476,460.7 478,460.2 480,459.7 482,459.2 484,458.7 486,458.2 488,457.7 490,457.2 492,456.7 494,456.2 496,455.7 498,455.2 500,454.7 502,454.2 504,453.7 506,453.2 508,452.7 510,452.2 512,451.7 514,451.2 516,450.7 518,450.2 520,449.7 522,449.2 524,448.7 526,448.2 528,447.7 530,447.2 532,446.8 534,446.3 536,445.8 538,445.2 540,444.7 542,444.2 544,443.6 546,443.1 548,442.5 550,441.9 552,441.3 554,440.8 556,440.2 558,439.6 560,439.0 562,438.4 564,437.7 566,437.1 568,436.5 570,435.9 572,435.3 574,434.6 576,434.0 578,433.4 580,432.8 582,432.1 584,431.5 586,430.8 588,430.2 590,429.6 592,428.9 594,428.2 596,427.5 598,426.8 600,426.1 602,425.3 604,424.6 606,423.8 608,423.0 610,422.3 612,421.5 614,420.7 616,420.0 618,419.2 620,418.5 622,417.7 624,417.0 626,416.3 628,415.7 630,415.0 632,414.3 634,413.6 636,412.9 638,412.3 640,411.6 642,411.0 644,410.4 646,409.8 648,409.3 650,408.8 652,408.3 654,407.8 656,407.4 658,407.0 660,406.6 662,406.2 664,405.8 666,405.3 668,404.9 670,404.5 672,404.0 674,403.6 676,403.2 678,402.7 680,402.3 682,401.8 684,401.4 686,400.9 688,400.5 690,400.0 692,399.6 694,399.1 696,398.7 698,398.2 700,397.7 702,397.3 704,396.9 706,396.5 708,396.1 710,395.7 712,395.3 714,395.0 716,394.6 718,394.2 720,393.9 722,393.5 724,393.1 726,392.8 728,392.4 730,392.0 732,391.6 734,391.3 736,390.9 738,390.5 740,390.1 742,389.8 744,389.5 746,389.2 748,389.1 750,389.0 752,389.0 754,389.0 756,389.0 758,389.1 760,389.1 762,389.3 764,389.4 766,389.5 768,389.7 770,389.8 772,390.0 774,390.1 776,390.3 778,390.5 780,390.6 782,390.7 784,390.8 786,390.9 788,391.0 790,391.1 792,391.2 794,391.3 796,391.3 798,391.4 800,391.5 802,391.5 804,391.6 806,391.6 808,391.6 810,391.7 812,391.7 814,391.8 816,391.9 818,391.9 820,391.9" fill="none" stroke="#e04040" stroke-width="1"/><polyline points="284,558.5 286,557.6 288,556.5 290,555.3 292,553.9 294,552.4 296,550.9 298,549.4 300,547.8 302,546.3 304,544.7 306,543.2 308,541.7 310,540.1 312,538.6 314,537.1 316,535.5 318,534.0 320,532.4 322,530.9 324,529.4 326,527.9 328,526.3 330,524.8 332,523.4 334,521.9 336,520.6 338,519.3 340,518.0 342,516.9 344,515.7 346,514.7 348,513.7 350,512.6 352,511.6 354,510.5 356,509.5 358,508.4 360,507.4 362,506.3 364,505.3 366,504.2 368,503.2 370,502.1 372,501.1 374,500.0 376,499.0 378,497.9 380,496.9 382,495.9 384,494.8 386,493.8 388,492.8 390,491.8 392,490.8 394,489.8 396,488.8 398,487.8 400,486.9 402,486.1 404,485.3 406,484.6 408,483.9 410,483.3 412,482.7 414,482.1 416,481.5 418,480.9 420,480.3 422,479.7 424,479.1 426,478.5 428,478.0 430,477.4 432,476.8 434,476.2 436,475.6 438,475.1 440,474.5 442,474.0 444,473.5 446,472.9 448,472.4 450,471.9 452,471.4 454,470.9 456,470.4 458,469.9 460,469.4 462,468.9 464,468.4 466,467.9 468,467.4 470,466.9 472,466.4 474,465.9 476,465.4 478,464.9 480,464.4 482,463.9 484,463.4 486,462.9 488,462.4 490,461.8 492,461.3 494,460.8 496,460.3 498,459.8 500,459.3 502,458.7 504,458.2 506,457.7 508,457.1 510,456.6 512,456.1 514,455.6 516,455.0 518,454.5 520,454.0 522,453.4 524,452.9 526,452.4 528,451.8 530,451.3 532,450.8 534,450.3 536,449.7 538,449.2 540,448.6 542,448.1 544,447.5 546,446.9 548,446.3 550,445.7 552,445.1 554,444.5 556,443.9 558,443.3 560,442.6 562,442.0 564,441.4 566,440.7 568,440.1 570,439.5 572,438.8 574,438.2 576,437.6 578,436.9 580,436.3 582,435.6 584,435.0 586,434.3 588,433.7 590,433.1 592,432.4 594,431.7 596,431.0 598,430.3 600,429.6 602,428.9 604,428.2 606,427.5 608,426.7 610,426.0 612,425.3 614,424.5 616,423.8 618,423.1 620,422.3 622,421.6 624,420.9 626,420.2 628,419.5 630,418.8 632,418.1 634,417.5 636,416.8 638,416.1 640,415.4 642,414.8 644,414.2 646,413.6 648,413.0 650,412.5 652,412.0 654,411.6 656,411.1 658,410.7 660,410.3 662,409.9 664,409.5 666,409.1 668,408.6 670,408.2 672,407.8 674,407.4 676,407.0 678,406.6 680,406.1 682,405.7 684,405.3 686,404.9 688,404.4 690,404.0 692,403.6 694,403.2 696,402.7 698,402.3 700,401.9 702,401.4 704,401.0 706,400.6 708,400.2 710,399.8 712,399.4 714,399.0 716,398.6 718,398.2 720,397.8 722,397.5 724,397.1 726,396.7 728,396.3 730,395.9 732,395.5 734,395.1 736,394.7 738,394.3 740,393.9 742,393.6 744,393.2 746,393.0 748,392.8 750,392.7 752,392.6 754,392.6 756,392.6 758,392.6 760,392.7 762,392.7 764,392.8 766,392.9 768,393.0 770,393.1 772,393.2 774,393.3 776,393.4 778,393.4 780,393.5 782,393.6 784,393.7 786,393.7 788,393.8 790,393.9 792,393.9 794,394.0 796,394.0 798,394.1 800,394.1 802,394.1 804,394.2 806,394.2 808,394.2 810,394.3 812,394.3 814,394.4 816,394.4 818,394.4 820,394.5" fill="none" stroke="#e04040" stroke-width="1"/><polyline points="284,563.2 286,562.3 288,561.2 290,560.0 292,558.6 294,557.2 296,555.7 298,554.2 300,552.6 302,551.1 304,549.5 306,548.0 308,546.4 310,544.9 312,543.3 314,541.8 316,540.2 318,538.7 320,537.2 322,535.6 324,534.1 326,532.5 328,531.0 330,529.5 332,528.0 334,526.6 336,525.3 338,524.0 340,522.7 342,521.6 344,520.4 346,519.3 348,518.3 350,517.2 352,516.2 354,515.1 356,514.1 358,513.0 360,512.0 362,510.9 364,509.9 366,508.8 368,507.8 370,506.7 372,505.7 374,504.6 376,503.6 378,502.6 380,501.5 382,500.5 384,499.4 386,498.4 388,497.3 390,496.3 392,495.3 394,494.2 396,493.2 398,492.3 400,491.4 402,490.6 404,489.8 406,489.0 408,488.4 410,487.7 412,487.1 414,486.5 416,486.0 418,485.4 420,484.8 422,484.2 424,483.6 426,483.1 428,482.5 430,481.9 432,481.3 434,480.8 436,480.2 438,479.6 440,479.1 442,478.6 444,478.0 446,477.5 448,477.0 450,476.5 452,476.0 454,475.5 456,475.0 458,474.5 460,474.0 462,473.5 464,473.0 466,472.5 468,472.0 470,471.5 472,471.0 474,470.5 476,470.0 478,469.5 480,469.0 482,468.5 484,468.0 486,467.5 488,467.0 490,466.5 492,465.9 494,465.4 496,464.9 498,464.3 500,463.8 502,463.2 504,462.7 506,462.1 508,461.5 510,461.0 512,460.4 514,459.9 516,459.3 518,458.8 520,458.2 522,457.6 524,457.1 526,456.5 528,456.0 530,455.4 532,454.8 534,454.3 536,453.7 538,453.2 540,452.6 542,452.0 544,451.4 546,450.8 548,450.2 550,449.5 552,448.9 554,448.2 556,447.6 558,446.9 560,446.3 562,445.7 564,445.0 566,444.4 568,443.7 570,443.1 572,442.4 574,441.8 576,441.1 578,440.5 580,439.8 582,439.1 584,438.5 586,437.8 588,437.2 590,436.5 592,435.9 594,435.2 596,434.5 598,433.9 600,433.2 602,432.5 604,431.8 606,431.1 608,430.4 610,429.7 612,429.0 614,428.3 616,427.6 618,426.9 620,426.2 622,425.5 624,424.8 626,424.1 628,423.4 630,422.7 632,422.0 634,421.3 636,420.6 638,419.9 640,419.2 642,418.6 644,417.9 646,417.3 648,416.8 650,416.2 652,415.7 654,415.3 656,414.8 658,414.4 660,414.0 662,413.6 664,413.2 666,412.8 668,412.4 670,412.0 672,411.6 674,411.2 676,410.8 678,410.4 680,410.0 682,409.6 684,409.2 686,408.8 688,408.4 690,408.0 692,407.6 694,407.2 696,406.8 698,406.4 700,406.0 702,405.6 704,405.2 706,404.7 708,404.3 710,403.9 712,403.5 714,403.1 716,402.7 718,402.3 720,401.8 722,401.4 724,401.0 726,400.6 728,400.2 730,399.8 732,399.3 734,398.9 736,398.5 738,398.1 740,397.7 742,397.4 744,397.0 746,396.7 748,396.5 750,396.4 752,396.3 754,396.2 756,396.2 758,396.2 760,396.2 762,396.2 764,396.2 766,396.3 768,396.3 770,396.3 772,396.3 774,396.4 776,396.4 778,396.4 780,396.5 782,396.5 784,396.5 786,396.5 788,396.6 790,396.6 792,396.6 794,396.7 796,396.7 798,396.7 800,396.7 802,396.8 804,396.8 806,396.8 808,396.9 810,396.9 812,396.9 814,396.9 816,397.0 818,397.0 820,397.0" fill="none" stroke="#e04040" stroke-width="1"/><polyline points="284,420.4 286,419.9 288,419.3 290,417.8 292,416.2 294,414.6 296,413.1 298,411.8 300,410.5 302,409.3 304,408.1 306,407.2 308,406.4 310,405.4 312,404.4 314,403.4 316,402.4 318,401.6 320,400.8 322,399.8 324,398.9 326,397.8 328,396.7 330,395.4 332,394.2 334,393.0 336,391.7 338,390.5 340,389.2 342,388.2 344,387.2 346,387.0 348,386.9 350,386.1 352,385.3 354,384.1 356,382.8 358,381.3 360,379.9 362,378.7 364,377.4 366,376.3 368,375.2 370,374.1 372,373.0 374,372.0 376,371.1 378,369.9 380,368.7 382,368.0 384,367.3 386,367.0 388,366.7 390,366.1 392,365.5 394,364.7 396,363.8 398,362.9 400,362.0 402,361.2 404,360.3 406,359.5 408,358.8 410,358.0 412,357.2 414,356.4 416,355.6 418,354.7 420,353.9 422,352.9 424,351.9 426,350.9 428,350.0 430,349.1 432,348.2 434,347.3 436,346.6 438,345.9 440,345.2 442,344.7 444,344.2 446,343.8 448,343.5 450,343.1 452,342.8 454,342.5 456,342.2 458,341.9 460,341.6 462,341.3 464,340.9 466,340.6 468,340.2 470,339.9 472,339.6 474,339.4 476,339.2 478,339.2 480,339.3 482,339.7 484,340.1 486,340.7 488,341.3 490,342.0 492,342.7 494,343.4 496,344.1 498,344.8 500,345.5 502,346.2 504,346.8 506,347.5 508,348.2 510,348.9 512,349.5 514,350.2 516,350.8 518,351.4 520,352.0 522,352.6 524,353.2 526,353.7 528,354.3 530,354.9 532,355.5 534,356.1 536,356.8 538,357.0 540,357.3 542,357.5 544,357.8 546,358.1 548,358.4 550,358.8 552,359.2 554,359.5 556,359.7 558,359.8 560,359.8 562,359.7 564,359.6 566,359.3 568,358.9 570,358.6 572,358.3 574,358.0 576,357.7 578,357.3 580,356.9 582,356.3 584,355.8 586,355.4 588,355.1 590,354.6 592,354.2 594,353.6 596,353.1 598,352.5 600,351.8 602,351.1 604,350.3 606,349.3 608,348.2 610,346.9 612,345.3 614,343.5 616,341.7 618,339.8 620,338.0 622,336.6 624,335.5 626,334.5 628,333.8 630,333.1 632,332.6 634,332.0 636,331.4 638,331.0 640,330.6 642,330.4 644,330.2 646,330.0 648,329.8 650,329.6 652,329.4 654,329.2 656,329.0 658,328.9 660,328.8 662,328.5 664,328.2 666,327.9 668,327.7 670,327.6 672,327.5 674,327.6 676,327.8 678,327.9 680,328.0 682,328.1 684,328.1 686,328.1 688,328.1 690,328.1 692,328.0 694,327.8 696,327.6 698,327.3 700,326.9 702,326.8 704,326.6 706,326.4 708,326.3 710,326.2 712,326.1 714,326.4 716,326.6 718,326.8 720,326.8 722,327.0 724,327.2 726,327.4 728,327.7 730,327.7 732,327.7 734,327.6 736,327.6 738,327.5 740,327.4 742,327.3 744,327.2 746,328.0 748,328.9 750,330.3 752,331.7 754,332.1 756,332.5 758,332.4 760,332.5 762,332.9 764,333.3 766,333.8 768,334.4 770,334.8 772,335.3 774,336.0 776,336.6 778,337.4 780,338.2 782,339.1 784,339.9 786,340.8 788,341.6 790,342.4 792,343.2 794,344.0 796,344.8 798,345.4 800,346.0 802,346.6 804,347.1 806,347.5 808,348.0 810,348.5 812,349.0 814,349.7 816,350.4 818,350.8 820,351.2" fill="none" stroke="#2a7a36" stroke-width="1"/><polyline points="284,424.6 286,424.1 288,423.5 290,421.9 292,420.3 294,418.8 296,417.2 298,415.9 300,414.6 302,413.3 304,412.1 306,411.2 308,410.3 310,409.3 312,408.3 314,407.3 316,406.3 318,405.4 320,404.6 322,403.6 324,402.7 326,401.5 328,400.4 330,399.2 332,397.9 334,396.7 336,395.4 338,394.1 340,392.9 342,391.8 344,390.8 346,390.7 348,390.5 350,389.7 352,389.0 354,387.7 356,386.4 358,385.0 360,383.5 362,382.3 364,381.1 366,380.0 368,378.8 370,377.7 372,376.6 374,375.7 376,374.7 378,373.5 380,372.3 382,371.6 384,371.0 386,370.7 388,370.4 390,369.8 392,369.2 394,368.3 396,367.5 398,366.6 400,365.7 402,364.8 404,364.0 406,363.2 408,362.4 410,361.7 412,360.9 414,360.1 416,359.3 418,358.5 420,357.6 422,356.6 424,355.7 426,354.7 428,353.7 430,352.8 432,351.9 434,351.1 436,350.3 438,349.7 440,349.0 442,348.5 444,348.0 446,347.6 448,347.2 450,346.9 452,346.6 454,346.2 456,345.9 458,345.6 460,345.3 462,344.9 464,344.6 466,344.2 468,343.8 470,343.5 472,343.2 474,342.9 476,342.7 478,342.7 480,342.8 482,343.1 484,343.4 486,344.0 488,344.5 490,345.2 492,345.8 494,346.4 496,347.1 498,347.7 500,348.4 502,349.0 504,349.6 506,350.3 508,350.9 510,351.5 512,352.1 514,352.7 516,353.3 518,353.9 520,354.4 522,355.0 524,355.5 526,356.0 528,356.6 530,357.1 532,357.7 534,358.3 536,358.9 538,359.1 540,359.3 542,359.5 544,359.8 546,360.1 548,360.3 550,360.7 552,361.0 554,361.3 556,361.5 558,361.6 560,361.6 562,361.5 564,361.3 566,361.0 568,360.7 570,360.3 572,360.0 574,359.7 576,359.4 578,359.0 580,358.5 582,358.0 584,357.4 586,357.1 588,356.7 590,356.3 592,355.8 594,355.2 596,354.7 598,354.0 600,353.4 602,352.6 604,351.8 606,350.8 608,349.6 610,348.3 612,346.8 614,345.0 616,343.2 618,341.4 620,339.6 622,338.3 624,337.2 626,336.3 628,335.5 630,334.9 632,334.3 634,333.7 636,333.1 638,332.7 640,332.3 642,332.1 644,331.9 646,331.7 648,331.5 650,331.3 652,331.1 654,330.9 656,330.7 658,330.6 660,330.4 662,330.1 664,329.8 666,329.5 668,329.3 670,329.1 672,329.0 674,329.1 676,329.2 678,329.2 680,329.3 682,329.3 684,329.3 686,329.3 688,329.2 690,329.1 692,328.9 694,328.7 696,328.5 698,328.1 700,327.7 702,327.5 704,327.3 706,327.2 708,327.0 710,326.9 712,326.8 714,327.1 716,327.3 718,327.4 720,327.5 722,327.7 724,327.8 726,328.1 728,328.3 730,328.3 732,328.3 734,328.2 736,328.2 738,328.1 740,328.0 742,327.9 744,327.8 746,328.5 748,329.4 750,330.8 752,332.2 754,332.5 756,332.9 758,332.9 760,333.0 762,333.4 764,333.9 766,334.4 768,334.9 770,335.4 772,336.0 774,336.6 776,337.3 778,338.1 780,338.9 782,339.8 784,340.6 786,341.5 788,342.3 790,343.1 792,343.9 794,344.6 796,345.4 798,346.0 800,346.6 802,347.1 804,347.6 806,348.0 808,348.4 810,348.9 812,349.4 814,350.1 816,350.7 818,351.2 820,351.5" fill="none" stroke="#2a7a36" stroke-width="1"/><polyline points="284,428.9 286,428.3 288,427.6 290,426.1 292,424.5 294,422.9 296,421.3 298,420.0 300,418.6 302,417.4 304,416.1 306,415.2 308,414.3 310,413.3 312,412.2 314,411.2 316,410.1 318,409.3 320,408.4 322,407.4 324,406.5 326,405.3 328,404.1 330,402.9 332,401.6 334,400.3 336,399.1 338,397.8 340,396.5 342,395.5 344,394.5 346,394.3 348,394.1 350,393.4 352,392.6 354,391.3 356,390.0 358,388.6 360,387.2 362,386.0 364,384.7 366,383.6 368,382.5 370,381.4 372,380.3 374,379.3 376,378.4 378,377.2 380,376.0 382,375.3 384,374.6 386,374.3 388,374.0 390,373.4 392,372.8 394,372.0 396,371.1 398,370.2 400,369.3 402,368.5 404,367.7 406,366.9 408,366.1 410,365.3 412,364.6 414,363.8 416,363.0 418,362.2 420,361.3 422,360.4 424,359.4 426,358.5 428,357.5 430,356.6 432,355.7 434,354.9 436,354.1 438,353.4 440,352.8 442,352.3 444,351.8 446,351.3 448,351.0 450,350.6 452,350.3 454,350.0 456,349.6 458,349.3 460,348.9 462,348.6 464,348.2 466,347.8 468,347.5 470,347.1 472,346.8 474,346.5 476,346.2 478,346.2 480,346.2 482,346.5 484,346.8 486,347.2 488,347.8 490,348.3 492,348.9 494,349.5 496,350.1 498,350.6 500,351.2 502,351.8 504,352.4 506,353.0 508,353.6 510,354.2 512,354.7 514,355.3 516,355.8 518,356.3 520,356.8 522,357.3 524,357.8 526,358.3 528,358.8 530,359.3 532,359.9 534,360.4 536,361.0 538,361.2 540,361.3 542,361.5 544,361.8 546,362.0 548,362.2 550,362.6 552,362.9 554,363.1 556,363.3 558,363.3 560,363.4 562,363.2 564,363.0 566,362.7 568,362.4 570,362.0 572,361.6 574,361.4 576,361.1 578,360.6 580,360.2 582,359.7 584,359.1 586,358.7 588,358.4 590,357.9 592,357.4 594,356.9 596,356.2 598,355.6 600,354.9 602,354.1 604,353.3 606,352.2 608,351.0 610,349.7 612,348.2 614,346.5 616,344.7 618,342.9 620,341.2 622,339.9 624,338.9 626,338.0 628,337.2 630,336.6 632,336.0 634,335.4 636,334.8 638,334.4 640,334.0 642,333.8 644,333.6 646,333.4 648,333.1 650,332.9 652,332.7 654,332.5 656,332.4 658,332.2 660,332.1 662,331.7 664,331.4 666,331.1 668,330.8 670,330.6 672,330.5 674,330.5 676,330.6 678,330.6 680,330.6 682,330.6 684,330.5 686,330.4 688,330.3 690,330.1 692,329.9 694,329.6 696,329.3 698,328.9 700,328.5 702,328.3 704,328.1 706,327.9 708,327.7 710,327.6 712,327.5 714,327.8 716,328.0 718,328.1 720,328.2 722,328.4 724,328.5 726,328.7 728,328.9 730,328.9 732,328.9 734,328.9 736,328.8 738,328.7 740,328.6 742,328.4 744,328.3 746,329.1 748,329.9 750,331.3 752,332.7 754,333.0 756,333.4 758,333.4 760,333.5 762,333.9 764,334.4 766,334.9 768,335.5 770,336.1 772,336.6 774,337.3 776,338.0 778,338.8 780,339.7 782,340.5 784,341.3 786,342.2 788,343.0 790,343.7 792,344.5 794,345.2 796,346.0 798,346.5 800,347.1 802,347.6 804,348.1 806,348.5 808,348.9 810,349.3 812,349.8 814,350.5 816,351.1 818,351.5 820,351.8" fill="none" stroke="#2a7a36" stroke-width="1"/><polyline points="284,433.1 286,432.5 288,431.8 290,430.3 292,428.6 294,427.0 296,425.4 298,424.0 300,422.7 302,421.4 304,420.2 306,419.2 308,418.3 310,417.2 312,416.1 314,415.1 316,414.0 318,413.1 320,412.2 322,411.2 324,410.2 326,409.1 328,407.9 330,406.6 332,405.3 334,404.0 336,402.7 338,401.4 340,400.2 342,399.1 344,398.1 346,397.9 348,397.8 350,397.0 352,396.2 354,394.9 356,393.7 358,392.2 360,390.8 362,389.6 364,388.4 366,387.2 368,386.1 370,385.0 372,383.9 374,383.0 376,382.0 378,380.8 380,379.6 382,378.9 384,378.3 386,378.0 388,377.7 390,377.1 392,376.5 394,375.6 396,374.8 398,373.9 400,373.0 402,372.2 404,371.3 406,370.6 408,369.8 410,369.0 412,368.3 414,367.5 416,366.8 418,365.9 420,365.1 422,364.1 424,363.2 426,362.2 428,361.3 430,360.4 432,359.5 434,358.7 436,357.9 438,357.2 440,356.6 442,356.0 444,355.5 446,355.1 448,354.7 450,354.4 452,354.0 454,353.7 456,353.3 458,353.0 460,352.6 462,352.2 464,351.8 466,351.4 468,351.1 470,350.7 472,350.3 474,350.0 476,349.7 478,349.7 480,349.7 482,349.9 484,350.1 486,350.5 488,351.0 490,351.5 492,352.0 494,352.5 496,353.0 498,353.6 500,354.1 502,354.7 504,355.2 506,355.8 508,356.3 510,356.8 512,357.3 514,357.8 516,358.3 518,358.8 520,359.3 522,359.7 524,360.1 526,360.6 528,361.1 530,361.6 532,362.0 534,362.6 536,363.1 538,363.2 540,363.4 542,363.6 544,363.7 546,363.9 548,364.2 550,364.4 552,364.7 554,364.9 556,365.1 558,365.1 560,365.1 562,365.0 564,364.8 566,364.4 568,364.1 570,363.7 572,363.3 574,363.0 576,362.7 578,362.3 580,361.9 582,361.3 584,360.8 586,360.4 588,360.0 590,359.5 592,359.0 594,358.5 596,357.8 598,357.2 600,356.4 602,355.6 604,354.7 606,353.7 608,352.5 610,351.2 612,349.7 614,348.0 616,346.3 618,344.5 620,342.9 622,341.6 624,340.6 626,339.7 628,338.9 630,338.3 632,337.8 634,337.1 636,336.5 638,336.1 640,335.7 642,335.5 644,335.2 646,335.0 648,334.8 650,334.6 652,334.4 654,334.2 656,334.0 658,333.9 660,333.7 662,333.4 664,333.0 666,332.7 668,332.4 670,332.1 672,332.0 674,331.9 676,332.0 678,331.9 680,331.9 682,331.8 684,331.7 686,331.5 688,331.4 690,331.1 692,330.9 694,330.6 696,330.2 698,329.8 700,329.3 702,329.1 704,328.8 706,328.6 708,328.4 710,328.3 712,328.2 714,328.4 716,328.7 718,328.8 720,328.9 722,329.0 724,329.2 726,329.4 728,329.6 730,329.6 732,329.6 734,329.5 736,329.4 738,329.3 740,329.2 742,329.0 744,328.9 746,329.6 748,330.4 750,331.8 752,333.2 754,333.5 756,333.9 758,333.9 760,333.9 762,334.4 764,334.9 766,335.5 768,336.1 770,336.7 772,337.2 774,337.9 776,338.7 778,339.5 780,340.4 782,341.2 784,342.1 786,342.9 788,343.7 790,344.4 792,345.1 794,345.9 796,346.6 798,347.1 800,347.6 802,348.1 804,348.5 806,348.9 808,349.3 810,349.7 812,350.2 814,350.8 816,351.5 818,351.9 820,352.2" fill="none" stroke="#2a7a36" stroke-width="1"/><polyline points="284,437.3 286,436.8 288,436.0 290,434.5 292,432.8 294,431.2 296,429.5 298,428.1 300,426.7 302,425.5 304,424.2 306,423.2 308,422.2 310,421.2 312,420.1 314,419.0 316,417.9 318,417.0 320,416.1 322,415.0 324,414.0 326,412.8 328,411.6 330,410.3 332,409.0 334,407.7 336,406.4 338,405.1 340,403.8 342,402.7 344,401.7 346,401.6 348,401.4 350,400.6 352,399.9 354,398.6 356,397.3 358,395.9 360,394.5 362,393.2 364,392.0 366,390.9 368,389.8 370,388.7 372,387.6 374,386.6 376,385.7 378,384.5 380,383.3 382,382.6 384,381.9 386,381.6 388,381.3 390,380.7 392,380.1 394,379.3 396,378.4 398,377.5 400,376.7 402,375.8 404,375.0 406,374.2 408,373.5 410,372.7 412,372.0 414,371.2 416,370.5 418,369.6 420,368.8 422,367.8 424,366.9 426,366.0 428,365.0 430,364.1 432,363.3 434,362.5 436,361.7 438,361.0 440,360.4 442,359.8 444,359.3 446,358.9 448,358.5 450,358.1 452,357.7 454,357.4 456,357.0 458,356.6 460,356.3 462,355.9 464,355.5 466,355.1 468,354.7 470,354.3 472,353.9 474,353.6 476,353.3 478,353.1 480,353.1 482,353.2 484,353.5 486,353.8 488,354.2 490,354.6 492,355.1 494,355.6 496,356.0 498,356.5 500,357.0 502,357.5 504,358.0 506,358.5 508,359.0 510,359.5 512,359.9 514,360.4 516,360.8 518,361.2 520,361.7 522,362.1 524,362.5 526,362.9 528,363.3 530,363.8 532,364.2 534,364.7 536,365.2 538,365.3 540,365.4 542,365.6 544,365.7 546,365.9 548,366.1 550,366.3 552,366.5 554,366.7 556,366.9 558,366.9 560,366.9 562,366.7 564,366.5 566,366.1 568,365.8 570,365.4 572,365.0 574,364.7 576,364.4 578,364.0 580,363.6 582,363.0 584,362.4 586,362.0 588,361.6 590,361.2 592,360.7 594,360.1 596,359.4 598,358.7 600,358.0 602,357.1 604,356.2 606,355.2 608,353.9 610,352.6 612,351.2 614,349.5 616,347.8 618,346.1 620,344.5 622,343.3 624,342.2 626,341.4 628,340.7 630,340.0 632,339.5 634,338.8 636,338.2 638,337.8 640,337.4 642,337.2 644,336.9 646,336.7 648,336.5 650,336.3 652,336.1 654,335.9 656,335.7 658,335.5 660,335.4 662,335.0 664,334.6 666,334.3 668,334.0 670,333.7 672,333.5 674,333.4 676,333.4 678,333.3 680,333.2 682,333.1 684,332.9 686,332.7 688,332.5 690,332.2 692,331.9 694,331.5 696,331.1 698,330.6 700,330.2 702,329.9 704,329.6 706,329.4 708,329.2 710,329.0 712,328.9 714,329.1 716,329.4 718,329.5 720,329.5 722,329.7 724,329.8 726,330.0 728,330.2 730,330.2 732,330.2 734,330.1 736,330.0 738,329.9 740,329.7 742,329.6 744,329.4 746,330.2 748,331.0 750,332.3 752,333.7 754,333.9 756,334.3 758,334.3 760,334.4 762,334.9 764,335.5 766,336.1 768,336.7 770,337.3 772,337.9 774,338.6 776,339.3 778,340.2 780,341.1 782,341.9 784,342.8 786,343.5 788,344.3 790,345.1 792,345.8 794,346.5 796,347.2 798,347.7 800,348.2 802,348.6 804,349.0 806,349.4 808,349.7 810,350.2 812,350.5 814,351.2 816,351.8 818,352.2 820,352.5" fill="none" stroke="#2a7a36" stroke-width="1"/><polyline points="284,441.5 286,441.0 288,440.2 290,438.6 292,436.9 294,435.3 296,433.6 298,432.2 300,430.8 302,429.5 304,428.2 306,427.2 308,426.2 310,425.1 312,424.0 314,422.9 316,421.7 318,420.8 320,419.9 322,418.8 324,417.8 326,416.6 328,415.3 330,414.0 332,412.7 334,411.4 336,410.0 338,408.7 340,407.4 342,406.4 344,405.4 346,405.2 348,405.0 350,404.3 352,403.5 354,402.2 356,400.9 358,399.5 360,398.1 362,396.9 364,395.6 366,394.5 368,393.4 370,392.3 372,391.2 374,390.3 376,389.3 378,388.1 380,386.9 382,386.2 384,385.6 386,385.3 388,385.0 390,384.4 392,383.8 394,382.9 396,382.1 398,381.2 400,380.3 402,379.5 404,378.7 406,377.9 408,377.2 410,376.4 412,375.7 414,374.9 416,374.2 418,373.3 420,372.5 422,371.6 424,370.7 426,369.7 428,368.8 430,367.9 432,367.0 434,366.3 436,365.5 438,364.8 440,364.2 442,363.6 444,363.1 446,362.6 448,362.2 450,361.8 452,361.5 454,361.1 456,360.7 458,360.3 460,359.9 462,359.5 464,359.1 466,358.7 468,358.3 470,357.9 472,357.5 474,357.1 476,356.8 478,356.6 480,356.5 482,356.6 484,356.8 486,357.1 488,357.4 490,357.8 492,358.2 494,358.6 496,359.0 498,359.5 500,359.9 502,360.3 504,360.8 506,361.2 508,361.7 510,362.1 512,362.5 514,362.9 516,363.3 518,363.7 520,364.1 522,364.4 524,364.8 526,365.2 528,365.6 530,366.0 532,366.4 534,366.9 536,367.3 538,367.4 540,367.5 542,367.6 544,367.7 546,367.8 548,368.0 550,368.2 552,368.4 554,368.5 556,368.6 558,368.7 560,368.6 562,368.4 564,368.2 566,367.9 568,367.5 570,367.1 572,366.7 574,366.4 576,366.1 578,365.7 580,365.2 582,364.6 584,364.1 586,363.7 588,363.3 590,362.8 592,362.3 594,361.7 596,361.0 598,360.3 600,359.5 602,358.6 604,357.7 606,356.6 608,355.4 610,354.1 612,352.6 614,351.0 616,349.4 618,347.7 620,346.1 622,344.9 624,343.9 626,343.1 628,342.4 630,341.7 632,341.2 634,340.6 636,340.0 638,339.5 640,339.1 642,338.9 644,338.6 646,338.4 648,338.2 650,338.0 652,337.7 654,337.5 656,337.3 658,337.2 660,337.0 662,336.6 664,336.2 666,335.9 668,335.5 670,335.2 672,334.9 674,334.8 676,334.8 678,334.6 680,334.5 682,334.3 684,334.1 686,333.8 688,333.6 690,333.2 692,332.9 694,332.4 696,332.0 698,331.5 700,331.0 702,330.6 704,330.3 706,330.1 708,329.9 710,329.7 712,329.6 714,329.8 716,330.1 718,330.2 720,330.2 722,330.3 724,330.5 726,330.7 728,330.9 730,330.8 732,330.8 734,330.7 736,330.6 738,330.5 740,330.3 742,330.2 744,330.0 746,330.7 748,331.5 750,332.8 752,334.1 754,334.4 756,334.8 758,334.8 760,334.9 762,335.4 764,336.0 766,336.6 768,337.3 770,337.9 772,338.5 774,339.3 776,340.0 778,340.9 780,341.8 782,342.6 784,343.5 786,344.2 788,345.0 790,345.7 792,346.4 794,347.1 796,347.8 798,348.2 800,348.7 802,349.1 804,349.5 806,349.9 808,350.2 810,350.6 812,350.9 814,351.6 816,352.2 818,352.5 820,352.8" fill="none" stroke="#2a7a36" stroke-width="1"/><polyline points="284,445.8 286,445.2 288,444.4 290,442.8 292,441.1 294,439.4 296,437.7 298,436.3 300,434.9 302,433.5 304,432.2 306,431.2 308,430.2 310,429.0 312,427.9 314,426.8 316,425.6 318,424.7 320,423.7 322,422.6 324,421.6 326,420.3 328,419.1 330,417.7 332,416.4 334,415.0 336,413.7 338,412.4 340,411.1 342,410.0 344,409.0 346,408.8 348,408.7 350,407.9 352,407.1 354,405.8 356,404.6 358,403.2 360,401.7 362,400.5 364,399.3 366,398.2 368,397.0 370,395.9 372,394.8 374,393.9 376,393.0 378,391.8 380,390.6 382,389.9 384,389.2 386,388.9 388,388.6 390,388.0 392,387.4 394,386.6 396,385.7 398,384.8 400,384.0 402,383.1 404,382.4 406,381.6 408,380.8 410,380.1 412,379.4 414,378.6 416,377.9 418,377.1 420,376.2 422,375.3 424,374.4 426,373.5 428,372.5 430,371.7 432,370.8 434,370.0 436,369.3 438,368.6 440,368.0 442,367.4 444,366.9 446,366.4 448,366.0 450,365.6 452,365.2 454,364.8 456,364.4 458,364.0 460,363.6 462,363.2 464,362.7 466,362.3 468,361.9 470,361.4 472,361.0 474,360.6 476,360.3 478,360.1 480,360.0 482,360.0 484,360.2 486,360.4 488,360.7 490,361.0 492,361.3 494,361.7 496,362.0 498,362.4 500,362.8 502,363.2 504,363.6 506,364.0 508,364.4 510,364.8 512,365.1 514,365.5 516,365.8 518,366.2 520,366.5 522,366.8 524,367.1 526,367.5 528,367.8 530,368.2 532,368.6 534,369.0 536,369.4 538,369.5 540,369.5 542,369.6 544,369.7 546,369.8 548,369.9 550,370.1 552,370.2 554,370.4 556,370.4 558,370.4 560,370.4 562,370.2 564,369.9 566,369.6 568,369.2 570,368.8 572,368.4 574,368.1 576,367.8 578,367.3 580,366.9 582,366.3 584,365.7 586,365.3 588,364.9 590,364.4 592,363.9 594,363.3 596,362.6 598,361.8 600,361.0 602,360.1 604,359.1 606,358.1 608,356.8 610,355.5 612,354.1 614,352.5 616,350.9 618,349.3 620,347.7 622,346.6 624,345.6 626,344.8 628,344.1 630,343.5 632,342.9 634,342.3 636,341.7 638,341.2 640,340.8 642,340.6 644,340.3 646,340.1 648,339.9 650,339.6 652,339.4 654,339.2 656,339.0 658,338.8 660,338.6 662,338.2 664,337.8 666,337.4 668,337.1 670,336.7 672,336.4 674,336.3 676,336.2 678,336.0 680,335.8 682,335.5 684,335.3 686,335.0 688,334.6 690,334.2 692,333.8 694,333.3 696,332.9 698,332.3 700,331.8 702,331.4 704,331.1 706,330.8 708,330.6 710,330.4 712,330.3 714,330.5 716,330.8 718,330.8 720,330.9 722,331.0 724,331.1 726,331.3 728,331.5 730,331.5 732,331.4 734,331.3 736,331.2 738,331.1 740,330.9 742,330.7 744,330.6 746,331.3 748,332.0 750,333.3 752,334.6 754,334.9 756,335.3 758,335.3 760,335.4 762,335.9 764,336.5 766,337.2 768,337.9 770,338.5 772,339.1 774,339.9 776,340.7 778,341.6 780,342.5 782,343.3 784,344.2 786,344.9 788,345.7 790,346.4 792,347.0 794,347.7 796,348.3 798,348.8 800,349.2 802,349.6 804,350.0 806,350.3 808,350.6 810,351.0 812,351.3 814,352.0 816,352.5 818,352.9 820,353.2" fill="none" stroke="#2a7a36" stroke-width="1"/><polyline points="284,450.0 286,449.4 288,448.6 290,447.0 292,445.2 294,443.6 296,441.8 298,440.4 300,438.9 302,437.6 304,436.2 306,435.2 308,434.1 310,433.0 312,431.8 314,430.7 316,429.5 318,428.5 320,427.5 322,426.5 324,425.4 326,424.1 328,422.8 330,421.4 332,420.1 334,418.7 336,417.4 338,416.0 340,414.7 342,413.7 344,412.6 346,412.4 348,412.3 350,411.5 352,410.8 354,409.5 356,408.2 358,406.8 360,405.4 362,404.1 364,402.9 366,401.8 368,400.7 370,399.6 372,398.5 374,397.5 376,396.6 378,395.4 380,394.2 382,393.5 384,392.9 386,392.6 388,392.3 390,391.7 392,391.1 394,390.2 396,389.4 398,388.5 400,387.6 402,386.8 404,386.0 406,385.3 408,384.5 410,383.8 412,383.1 414,382.3 416,381.6 418,380.8 420,380.0 422,379.1 424,378.2 426,377.2 428,376.3 430,375.4 432,374.6 434,373.8 436,373.1 438,372.4 440,371.7 442,371.2 444,370.6 446,370.2 448,369.7 450,369.3 452,368.9 454,368.5 456,368.1 458,367.7 460,367.2 462,366.8 464,366.4 466,365.9 468,365.5 470,365.0 472,364.6 474,364.2 476,363.8 478,363.6 480,363.4 482,363.4 484,363.5 486,363.7 488,363.9 490,364.1 492,364.4 494,364.7 496,365.0 498,365.3 500,365.7 502,366.0 504,366.4 506,366.7 508,367.1 510,367.4 512,367.7 514,368.0 516,368.3 518,368.6 520,368.9 522,369.2 524,369.5 526,369.8 528,370.1 530,370.4 532,370.8 534,371.2 536,371.5 538,371.5 540,371.5 542,371.6 544,371.6 546,371.7 548,371.8 550,371.9 552,372.1 554,372.2 556,372.2 558,372.2 560,372.1 562,371.9 564,371.7 566,371.3 568,370.9 570,370.5 572,370.1 574,369.8 576,369.5 578,369.0 580,368.6 582,368.0 584,367.4 586,367.0 588,366.6 590,366.1 592,365.5 594,364.9 596,364.2 598,363.4 600,362.6 602,361.6 604,360.6 606,359.5 608,358.3 610,357.0 612,355.6 614,354.0 616,352.4 618,350.8 620,349.3 622,348.2 624,347.3 626,346.5 628,345.8 630,345.2 632,344.6 634,344.0 636,343.4 638,343.0 640,342.5 642,342.3 644,342.0 646,341.8 648,341.6 650,341.3 652,341.1 654,340.9 656,340.7 658,340.5 660,340.3 662,339.8 664,339.4 666,339.0 668,338.6 670,338.2 672,337.9 674,337.7 676,337.6 678,337.3 680,337.1 682,336.8 684,336.5 686,336.1 688,335.7 690,335.3 692,334.8 694,334.3 696,333.7 698,333.1 700,332.6 702,332.2 704,331.8 706,331.6 708,331.3 710,331.2 712,331.0 714,331.2 716,331.5 718,331.5 720,331.6 722,331.7 724,331.8 726,332.0 728,332.1 730,332.1 732,332.1 734,332.0 736,331.8 738,331.7 740,331.5 742,331.3 744,331.1 746,331.8 748,332.5 750,333.8 752,335.1 754,335.3 756,335.7 758,335.7 760,335.9 762,336.4 764,337.0 766,337.7 768,338.4 770,339.1 772,339.8 774,340.6 776,341.4 778,342.3 780,343.2 782,344.0 784,344.9 786,345.6 788,346.4 790,347.0 792,347.7 794,348.3 796,348.9 798,349.4 800,349.8 802,350.1 804,350.5 806,350.8 808,351.1 810,351.4 812,351.7 814,352.3 816,352.9 818,353.2 820,353.5" fill="none" stroke="#2a7a36" stroke-width="1"/><polyline points="284,454.2 286,453.6 288,452.8 290,451.2 292,449.4 294,447.7 296,445.9 298,444.5 300,443.0 302,441.6 304,440.2 306,439.2 308,438.1 310,436.9 312,435.7 314,434.6 316,433.4 318,432.4 320,431.4 322,430.3 324,429.1 326,427.8 328,426.5 330,425.1 332,423.8 334,422.4 336,421.0 338,419.7 340,418.4 342,417.3 344,416.2 346,416.1 348,415.9 350,415.2 352,414.4 354,413.1 356,411.8 358,410.4 360,409.0 362,407.8 364,406.5 366,405.4 368,404.3 370,403.2 372,402.1 374,401.2 376,400.2 378,399.0 380,397.8 382,397.2 384,396.5 386,396.2 388,395.9 390,395.3 392,394.7 394,393.9 396,393.0 398,392.2 400,391.3 402,390.5 404,389.7 406,388.9 408,388.2 410,387.5 412,386.8 414,386.0 416,385.3 418,384.5 420,383.7 422,382.8 424,381.9 426,381.0 428,380.1 430,379.2 432,378.4 434,377.6 436,376.9 438,376.2 440,375.5 442,374.9 444,374.4 446,373.9 448,373.5 450,373.0 452,372.6 454,372.2 456,371.8 458,371.3 460,370.9 462,370.5 464,370.0 466,369.5 468,369.1 470,368.6 472,368.2 474,367.7 476,367.3 478,367.1 480,366.9 482,366.8 484,366.9 486,367.0 488,367.1 490,367.3 492,367.5 494,367.7 496,368.0 498,368.3 500,368.6 502,368.9 504,369.2 506,369.5 508,369.8 510,370.0 512,370.3 514,370.6 516,370.8 518,371.1 520,371.3 522,371.6 524,371.8 526,372.1 528,372.3 530,372.6 532,372.9 534,373.3 536,373.7 538,373.6 540,373.6 542,373.6 544,373.6 546,373.6 548,373.7 550,373.8 552,373.9 554,374.0 556,374.0 558,374.0 560,373.9 562,373.7 564,373.4 566,373.0 568,372.6 570,372.2 572,371.8 574,371.5 576,371.1 578,370.7 580,370.2 582,369.6 584,369.0 586,368.6 588,368.2 590,367.7 592,367.1 594,366.5 596,365.7 598,365.0 600,364.1 602,363.1 604,362.1 606,361.0 608,359.7 610,358.4 612,357.0 614,355.5 616,354.0 618,352.4 620,351.0 622,349.9 624,349.0 626,348.2 628,347.5 630,346.9 632,346.4 634,345.7 636,345.1 638,344.7 640,344.2 642,344.0 644,343.7 646,343.5 648,343.2 650,343.0 652,342.8 654,342.5 656,342.3 658,342.1 660,341.9 662,341.5 664,341.0 666,340.6 668,340.2 670,339.8 672,339.4 674,339.2 676,339.0 678,338.7 680,338.4 682,338.0 684,337.7 686,337.2 688,336.8 690,336.3 692,335.8 694,335.2 696,334.6 698,334.0 700,333.4 702,333.0 704,332.6 706,332.3 708,332.1 710,331.9 712,331.7 714,331.9 716,332.1 718,332.2 720,332.2 722,332.3 724,332.4 726,332.6 728,332.8 730,332.7 732,332.7 734,332.6 736,332.4 738,332.3 740,332.1 742,331.9 744,331.7 746,332.3 748,333.0 750,334.3 752,335.6 754,335.8 756,336.2 758,336.2 760,336.4 762,336.9 764,337.6 766,338.3 768,339.0 770,339.7 772,340.4 774,341.3 776,342.1 778,343.0 780,343.9 782,344.8 784,345.6 786,346.3 788,347.0 790,347.7 792,348.3 794,348.9 796,349.5 798,349.9 800,350.3 802,350.7 804,351.0 806,351.2 808,351.5 810,351.8 812,352.1 814,352.7 816,353.2 818,353.6 820,353.8" fill="none" stroke="#2a7a36" stroke-width="1"/><polyline points="284,458.4 286,457.8 288,457.0 290,455.3 292,453.6 294,451.8 296,450.0 298,448.6 300,447.0 302,445.7 304,444.2 306,443.2 308,442.1 310,440.9 312,439.7 314,438.5 316,437.2 318,436.2 320,435.2 322,434.1 324,432.9 326,431.6 328,430.3 330,428.9 332,427.5 334,426.1 336,424.7 338,423.3 340,422.0 342,420.9 344,419.9 346,419.7 348,419.6 350,418.8 352,418.0 354,416.7 356,415.5 358,414.1 360,412.6 362,411.4 364,410.2 366,409.1 368,408.0 370,406.9 372,405.8 374,404.8 376,403.9 378,402.7 380,401.5 382,400.8 384,400.1 386,399.9 388,399.6 390,399.0 392,398.4 394,397.5 396,396.7 398,395.8 400,395.0 402,394.1 404,393.4 406,392.6 408,391.9 410,391.2 412,390.5 414,389.7 416,389.0 418,388.2 420,387.4 422,386.5 424,385.7 426,384.7 428,383.8 430,383.0 432,382.2 434,381.4 436,380.6 438,380.0 440,379.3 442,378.7 444,378.2 446,377.7 448,377.2 450,376.8 452,376.3 454,375.9 456,375.5 458,375.0 460,374.6 462,374.1 464,373.6 466,373.2 468,372.7 470,372.2 472,371.7 474,371.3 476,370.9 478,370.6 480,370.3 482,370.2 484,370.2 486,370.3 488,370.3 490,370.5 492,370.6 494,370.8 496,371.0 498,371.2 500,371.5 502,371.7 504,372.0 506,372.2 508,372.5 510,372.7 512,372.9 514,373.1 516,373.3 518,373.5 520,373.8 522,373.9 524,374.1 526,374.3 528,374.6 530,374.8 532,375.1 534,375.4 536,375.8 538,375.7 540,375.6 542,375.6 544,375.6 546,375.6 548,375.6 550,375.7 552,375.8 554,375.8 556,375.8 558,375.8 560,375.6 562,375.4 564,375.1 566,374.7 568,374.3 570,373.9 572,373.5 574,373.2 576,372.8 578,372.4 580,371.9 582,371.3 584,370.7 586,370.3 588,369.8 590,369.3 592,368.8 594,368.1 596,367.3 598,366.5 600,365.6 602,364.6 604,363.6 606,362.4 608,361.1 610,359.9 612,358.5 614,357.0 616,355.5 618,354.0 620,352.6 622,351.6 624,350.7 626,349.9 628,349.2 630,348.6 632,348.1 634,347.4 636,346.8 638,346.4 640,345.9 642,345.7 644,345.4 646,345.2 648,344.9 650,344.7 652,344.4 654,344.2 656,344.0 658,343.8 660,343.5 662,343.1 664,342.6 666,342.2 668,341.7 670,341.3 672,340.9 674,340.6 676,340.4 678,340.0 680,339.7 682,339.3 684,338.9 686,338.4 688,337.9 690,337.3 692,336.8 694,336.1 696,335.5 698,334.8 700,334.2 702,333.8 704,333.4 706,333.1 708,332.8 710,332.6 712,332.4 714,332.6 716,332.8 718,332.9 720,332.9 722,333.0 724,333.1 726,333.3 728,333.4 730,333.4 732,333.3 734,333.2 736,333.1 738,332.9 740,332.7 742,332.5 744,332.2 746,332.9 748,333.6 750,334.8 752,336.1 754,336.3 756,336.7 758,336.7 760,336.8 762,337.4 764,338.1 766,338.8 768,339.6 770,340.3 772,341.1 774,341.9 776,342.8 778,343.7 780,344.6 782,345.5 784,346.3 786,347.0 788,347.7 790,348.3 792,349.0 794,349.5 796,350.1 798,350.5 800,350.9 802,351.2 804,351.5 806,351.7 808,351.9 810,352.2 812,352.5 814,353.1 816,353.6 818,353.9 820,354.2" fill="none" stroke="#2a7a36" stroke-width="1"/><polyline points="284,462.6 286,462.0 288,461.2 290,459.5 292,457.7 294,456.0 296,454.1 298,452.6 300,451.1 302,449.7 304,448.3 306,447.1 308,446.0 310,444.8 312,443.6 314,442.3 316,441.1 318,440.1 320,439.0 322,437.9 324,436.7 326,435.3 328,434.0 330,432.6 332,431.2 334,429.7 336,428.4 338,427.0 340,425.7 342,424.6 344,423.5 346,423.3 348,423.2 350,422.4 352,421.7 354,420.4 356,419.1 358,417.7 360,416.3 362,415.0 364,413.8 366,412.7 368,411.6 370,410.5 372,409.4 374,408.5 376,407.5 378,406.3 380,405.1 382,404.5 384,403.8 386,403.5 388,403.2 390,402.6 392,402.0 394,401.2 396,400.3 398,399.5 400,398.6 402,397.8 404,397.0 406,396.3 408,395.6 410,394.9 412,394.2 414,393.5 416,392.8 418,392.0 420,391.2 422,390.3 424,389.4 426,388.5 428,387.6 430,386.8 432,385.9 434,385.2 436,384.4 438,383.7 440,383.1 442,382.5 444,381.9 446,381.4 448,381.0 450,380.5 452,380.1 454,379.6 456,379.2 458,378.7 460,378.2 462,377.8 464,377.3 466,376.8 468,376.3 470,375.8 472,375.3 474,374.8 476,374.4 478,374.1 480,373.8 482,373.6 484,373.5 486,373.5 488,373.6 490,373.6 492,373.7 494,373.8 496,374.0 498,374.2 500,374.3 502,374.5 504,374.7 506,374.9 508,375.2 510,375.3 512,375.5 514,375.7 516,375.9 518,376.0 520,376.2 522,376.3 524,376.5 526,376.6 528,376.8 530,377.1 532,377.3 534,377.6 536,377.9 538,377.8 540,377.7 542,377.6 544,377.5 546,377.5 548,377.5 550,377.6 552,377.6 554,377.6 556,377.6 558,377.5 560,377.4 562,377.1 564,376.9 566,376.5 568,376.1 570,375.6 572,375.2 574,374.9 576,374.5 578,374.0 580,373.6 582,372.9 584,372.3 586,371.9 588,371.5 590,371.0 592,370.4 594,369.7 596,368.9 598,368.1 600,367.1 602,366.1 604,365.0 606,363.9 608,362.6 610,361.3 612,360.0 614,358.5 616,357.0 618,355.6 620,354.2 622,353.2 624,352.4 626,351.6 628,351.0 630,350.3 632,349.8 634,349.2 636,348.5 638,348.1 640,347.6 642,347.4 644,347.1 646,346.9 648,346.6 650,346.4 652,346.1 654,345.9 656,345.6 658,345.4 660,345.2 662,344.7 664,344.3 666,343.8 668,343.3 670,342.8 672,342.4 674,342.1 676,341.8 678,341.4 680,341.0 682,340.5 684,340.1 686,339.5 688,339.0 690,338.4 692,337.7 694,337.1 696,336.4 698,335.7 700,335.0 702,334.5 704,334.1 706,333.8 708,333.5 710,333.3 712,333.1 714,333.3 716,333.5 718,333.6 720,333.6 722,333.7 724,333.7 726,333.9 728,334.1 730,334.0 732,333.9 734,333.8 736,333.7 738,333.5 740,333.3 742,333.0 744,332.8 746,333.4 748,334.1 750,335.3 752,336.5 754,336.8 756,337.1 758,337.2 760,337.3 762,337.9 764,338.6 766,339.4 768,340.2 770,340.9 772,341.7 774,342.6 776,343.4 778,344.4 780,345.3 782,346.2 784,347.0 786,347.7 788,348.4 790,349.0 792,349.6 794,350.1 796,350.7 798,351.0 800,351.4 802,351.7 804,352.0 806,352.2 808,352.4 810,352.7 812,352.9 814,353.5 816,353.9 818,354.3 820,354.5" fill="none" stroke="#2a7a36" stroke-width="1"/><polyline points="284,466.9 286,466.2 288,465.4 290,463.7 292,461.9 294,460.1 296,458.3 298,456.7 300,455.2 302,453.7 304,452.3 306,451.1 308,450.0 310,448.8 312,447.5 314,446.2 316,445.0 318,443.9 320,442.8 322,441.7 324,440.5 326,439.1 328,437.7 330,436.3 332,434.8 334,433.4 336,432.0 338,430.6 340,429.3 342,428.2 344,427.1 346,427.0 348,426.8 350,426.0 352,425.3 354,424.0 356,422.7 358,421.3 360,419.9 362,418.7 364,417.5 366,416.4 368,415.2 370,414.1 372,413.0 374,412.1 376,411.2 378,410.0 380,408.8 382,408.1 384,407.4 386,407.2 388,406.9 390,406.3 392,405.7 394,404.8 396,404.0 398,403.1 400,402.3 402,401.5 404,400.7 406,400.0 408,399.3 410,398.6 412,397.9 414,397.2 416,396.5 418,395.7 420,394.9 422,394.0 424,393.1 426,392.2 428,391.4 430,390.5 432,389.7 434,388.9 436,388.2 438,387.5 440,386.9 442,386.3 444,385.7 446,385.2 448,384.7 450,384.2 452,383.8 454,383.3 456,382.9 458,382.4 460,381.9 462,381.4 464,380.9 466,380.4 468,379.9 470,379.4 472,378.9 474,378.4 476,377.9 478,377.5 480,377.2 482,377.0 484,376.9 486,376.8 488,376.8 490,376.8 492,376.8 494,376.9 496,377.0 498,377.1 500,377.2 502,377.4 504,377.5 506,377.7 508,377.8 510,378.0 512,378.1 514,378.2 516,378.4 518,378.5 520,378.6 522,378.7 524,378.8 526,378.9 528,379.1 530,379.3 532,379.5 534,379.7 536,380.0 538,379.8 540,379.7 542,379.6 544,379.5 546,379.5 548,379.4 550,379.4 552,379.5 554,379.5 556,379.4 558,379.3 560,379.2 562,378.9 564,378.6 566,378.2 568,377.8 570,377.3 572,376.9 574,376.5 576,376.2 578,375.7 580,375.2 582,374.6 584,374.0 586,373.6 588,373.1 590,372.6 592,372.0 594,371.3 596,370.5 598,369.6 600,368.7 602,367.6 604,366.5 606,365.3 608,364.0 610,362.8 612,361.4 614,360.0 616,358.6 618,357.2 620,355.8 622,354.9 624,354.1 626,353.3 628,352.7 630,352.1 632,351.5 634,350.9 636,350.2 638,349.8 640,349.3 642,349.1 644,348.8 646,348.5 648,348.3 650,348.0 652,347.8 654,347.5 656,347.3 658,347.1 660,346.8 662,346.3 664,345.9 666,345.4 668,344.8 670,344.3 672,343.9 674,343.5 676,343.2 678,342.7 680,342.3 682,341.8 684,341.2 686,340.6 688,340.1 690,339.4 692,338.7 694,338.0 696,337.3 698,336.5 700,335.8 702,335.3 704,334.9 706,334.5 708,334.2 710,334.0 712,333.8 714,334.0 716,334.2 718,334.2 720,334.2 722,334.3 724,334.4 726,334.6 728,334.7 730,334.6 732,334.6 734,334.4 736,334.3 738,334.1 740,333.9 742,333.6 744,333.4 746,334.0 748,334.6 750,335.8 752,337.0 754,337.2 756,337.6 758,337.6 760,337.8 762,338.4 764,339.1 766,339.9 768,340.8 770,341.5 772,342.3 774,343.2 776,344.1 778,345.1 780,346.0 782,346.9 784,347.7 786,348.4 788,349.1 790,349.7 792,350.2 794,350.8 796,351.3 798,351.6 800,351.9 802,352.2 804,352.5 806,352.6 808,352.8 810,353.1 812,353.3 814,353.8 816,354.3 818,354.6 820,354.8" fill="none" stroke="#2a7a36" stroke-width="1"/><polyline points="284,471.1 286,470.4 288,469.6 290,467.9 292,466.0 294,464.2 296,462.4 298,460.8 300,459.2 302,457.8 304,456.3 306,455.1 308,454.0 310,452.7 312,451.4 314,450.1 316,448.9 318,447.8 320,446.7 322,445.5 324,444.2 326,442.9 328,441.5 330,440.0 332,438.5 334,437.1 336,435.7 338,434.3 340,432.9 342,431.8 344,430.8 346,430.6 348,430.4 350,429.7 352,428.9 354,427.6 356,426.4 358,425.0 360,423.5 362,422.3 364,421.1 366,420.0 368,418.9 370,417.8 372,416.7 374,415.8 376,414.8 378,413.6 380,412.4 382,411.8 384,411.1 386,410.8 388,410.5 390,409.9 392,409.4 394,408.5 396,407.7 398,406.8 400,405.9 402,405.1 404,404.4 406,403.6 408,402.9 410,402.2 412,401.6 414,400.9 416,400.2 418,399.4 420,398.6 422,397.8 424,396.9 426,396.0 428,395.1 430,394.3 432,393.5 434,392.7 436,392.0 438,391.3 440,390.7 442,390.1 444,389.5 446,389.0 448,388.5 450,388.0 452,387.5 454,387.0 456,386.6 458,386.1 460,385.6 462,385.1 464,384.5 466,384.0 468,383.5 470,383.0 472,382.4 474,381.9 476,381.4 478,381.0 480,380.7 482,380.4 484,380.2 486,380.1 488,380.0 490,380.0 492,379.9 494,379.9 496,380.0 498,380.0 500,380.1 502,380.2 504,380.3 506,380.4 508,380.5 510,380.6 512,380.7 514,380.8 516,380.9 518,380.9 520,381.0 522,381.1 524,381.1 526,381.2 528,381.3 530,381.5 532,381.7 534,381.9 536,382.1 538,381.9 540,381.7 542,381.6 544,381.5 546,381.4 548,381.3 550,381.3 552,381.3 554,381.3 556,381.2 558,381.1 560,380.9 562,380.6 564,380.3 566,379.9 568,379.5 570,379.0 572,378.6 574,378.2 576,377.9 578,377.4 580,376.9 582,376.3 584,375.6 586,375.2 588,374.7 590,374.2 592,373.6 594,372.9 596,372.1 598,371.2 600,370.2 602,369.1 604,368.0 606,366.8 608,365.5 610,364.2 612,362.9 614,361.5 616,360.1 618,358.7 620,357.5 622,356.5 624,355.7 626,355.0 628,354.4 630,353.8 632,353.2 634,352.6 636,351.9 638,351.5 640,351.0 642,350.8 644,350.5 646,350.2 648,350.0 650,349.7 652,349.4 654,349.2 656,348.9 658,348.7 660,348.5 662,348.0 664,347.5 666,346.9 668,346.4 670,345.9 672,345.3 674,345.0 676,344.6 678,344.1 680,343.6 682,343.0 684,342.4 686,341.8 688,341.1 690,340.4 692,339.7 694,338.9 696,338.2 698,337.4 700,336.6 702,336.1 704,335.6 706,335.3 708,335.0 710,334.7 712,334.5 714,334.7 716,334.9 718,334.9 720,334.9 722,335.0 724,335.1 726,335.2 728,335.3 730,335.3 732,335.2 734,335.0 736,334.9 738,334.7 740,334.4 742,334.2 744,333.9 746,334.5 748,335.1 750,336.3 752,337.5 754,337.7 756,338.1 758,338.1 760,338.3 762,338.9 764,339.7 766,340.5 768,341.3 770,342.2 772,343.0 774,343.9 776,344.8 778,345.8 780,346.7 782,347.6 784,348.4 786,349.1 788,349.8 790,350.3 792,350.9 794,351.4 796,351.9 798,352.2 800,352.5 802,352.7 804,352.9 806,353.1 808,353.3 810,353.5 812,353.7 814,354.2 816,354.7 818,354.9 820,355.2" fill="none" stroke="#2a7a36" stroke-width="1"/><polyline points="284,475.3 286,474.6 288,473.8 290,472.0 292,470.2 294,468.3 296,466.5 298,464.9 300,463.3 302,461.8 304,460.3 306,459.1 308,457.9 310,456.6 312,455.3 314,454.0 316,452.7 318,451.6 320,450.5 322,449.3 324,448.0 326,446.6 328,445.2 330,443.7 332,442.2 334,440.8 336,439.3 338,437.9 340,436.6 342,435.5 344,434.4 346,434.2 348,434.1 350,433.3 352,432.5 354,431.3 356,430.0 358,428.6 360,427.2 362,426.0 364,424.7 366,423.6 368,422.5 370,421.4 372,420.3 374,419.4 376,418.5 378,417.3 380,416.1 382,415.4 384,414.7 386,414.4 388,414.2 390,413.6 392,413.0 394,412.2 396,411.3 398,410.4 400,409.6 402,408.8 404,408.0 406,407.3 408,406.6 410,405.9 412,405.3 414,404.6 416,403.9 418,403.1 420,402.4 422,401.5 424,400.6 426,399.8 428,398.9 430,398.1 432,397.3 434,396.5 436,395.8 438,395.1 440,394.4 442,393.8 444,393.3 446,392.7 448,392.2 450,391.7 452,391.2 454,390.7 456,390.2 458,389.7 460,389.2 462,388.7 464,388.2 466,387.6 468,387.1 470,386.5 472,386.0 474,385.5 476,384.9 478,384.5 480,384.1 482,383.8 484,383.6 486,383.4 488,383.2 490,383.1 492,383.0 494,383.0 496,382.9 498,383.0 500,383.0 502,383.1 504,383.1 506,383.2 508,383.2 510,383.3 512,383.3 514,383.3 516,383.4 518,383.4 520,383.4 522,383.4 524,383.4 526,383.5 528,383.6 530,383.7 532,383.8 534,384.0 536,384.2 538,384.0 540,383.8 542,383.6 544,383.5 546,383.3 548,383.2 550,383.2 552,383.1 554,383.1 556,383.0 558,382.8 560,382.7 562,382.4 564,382.0 566,381.6 568,381.2 570,380.7 572,380.3 574,379.9 576,379.6 578,379.1 580,378.6 582,377.9 584,377.3 586,376.9 588,376.4 590,375.8 592,375.2 594,374.5 596,373.7 598,372.8 600,371.7 602,370.6 604,369.5 606,368.2 608,366.9 610,365.7 612,364.3 614,363.0 616,361.7 618,360.3 620,359.1 622,358.2 624,357.4 626,356.7 628,356.1 630,355.5 632,355.0 634,354.3 636,353.7 638,353.2 640,352.7 642,352.5 644,352.2 646,351.9 648,351.7 650,351.4 652,351.1 654,350.9 656,350.6 658,350.4 660,350.1 662,349.6 664,349.1 666,348.5 668,348.0 670,347.4 672,346.8 674,346.4 676,346.0 678,345.4 680,344.9 682,344.3 684,343.6 686,342.9 688,342.2 690,341.4 692,340.7 694,339.8 696,339.0 698,338.2 700,337.4 702,336.9 704,336.4 706,336.0 708,335.7 710,335.4 712,335.2 714,335.4 716,335.6 718,335.6 720,335.6 722,335.7 724,335.7 726,335.9 728,336.0 730,335.9 732,335.8 734,335.7 736,335.5 738,335.3 740,335.0 742,334.8 744,334.5 746,335.0 748,335.6 750,336.8 752,338.0 754,338.2 756,338.5 758,338.6 760,338.8 762,339.4 764,340.2 766,341.0 768,341.9 770,342.8 772,343.6 774,344.6 776,345.5 778,346.5 780,347.4 782,348.3 784,349.1 786,349.8 788,350.4 790,351.0 792,351.5 794,352.0 796,352.5 798,352.7 800,353.0 802,353.2 804,353.4 806,353.6 808,353.7 810,353.9 812,354.1 814,354.6 816,355.0 818,355.3 820,355.5" fill="none" stroke="#2a7a36" stroke-width="1"/><polyline points="284,479.5 286,478.8 288,478.0 290,476.2 292,474.3 294,472.5 296,470.6 298,469.0 300,467.4 302,465.8 304,464.3 306,463.1 308,461.9 310,460.6 312,459.3 314,457.9 316,456.6 318,455.5 320,454.3 322,453.1 324,451.8 326,450.4 328,448.9 330,447.4 332,445.9 334,444.4 336,443.0 338,441.6 340,440.2 342,439.1 344,438.0 346,437.9 348,437.7 350,436.9 352,436.2 354,434.9 356,433.6 358,432.2 360,430.8 362,429.6 364,428.4 366,427.3 368,426.2 370,425.1 372,424.0 374,423.0 376,422.1 378,420.9 380,419.7 382,419.1 384,418.4 386,418.1 388,417.8 390,417.2 392,416.7 394,415.8 396,415.0 398,414.1 400,413.3 402,412.5 404,411.7 406,411.0 408,410.3 410,409.6 412,409.0 414,408.3 416,407.6 418,406.8 420,406.1 422,405.2 424,404.4 426,403.5 428,402.6 430,401.8 432,401.0 434,400.3 436,399.6 438,398.9 440,398.2 442,397.6 444,397.0 446,396.5 448,396.0 450,395.5 452,395.0 454,394.5 456,393.9 458,393.4 460,392.9 462,392.4 464,391.8 466,391.2 468,390.7 470,390.1 472,389.6 474,389.0 476,388.5 478,388.0 480,387.6 482,387.2 484,386.9 486,386.7 488,386.5 490,386.3 492,386.1 494,386.0 496,385.9 498,385.9 500,385.9 502,385.9 504,385.9 506,385.9 508,385.9 510,385.9 512,385.9 514,385.9 516,385.9 518,385.8 520,385.8 522,385.8 524,385.8 526,385.8 528,385.8 530,385.9 532,386.0 534,386.2 536,386.3 538,386.1 540,385.8 542,385.6 544,385.4 546,385.3 548,385.1 550,385.1 552,385.0 554,384.9 556,384.8 558,384.6 560,384.4 562,384.1 564,383.8 566,383.3 568,382.9 570,382.4 572,382.0 574,381.6 576,381.2 578,380.7 580,380.2 582,379.6 584,378.9 586,378.5 588,378.0 590,377.5 592,376.9 594,376.1 596,375.2 598,374.3 600,373.3 602,372.1 604,370.9 606,369.7 608,368.3 610,367.1 612,365.8 614,364.5 616,363.2 618,361.9 620,360.7 622,359.9 624,359.1 626,358.4 628,357.8 630,357.2 632,356.7 634,356.0 636,355.4 638,354.9 640,354.4 642,354.2 644,353.9 646,353.6 648,353.3 650,353.1 652,352.8 654,352.5 656,352.3 658,352.0 660,351.7 662,351.2 664,350.7 666,350.1 668,349.5 670,348.9 672,348.3 674,347.8 676,347.4 678,346.8 680,346.2 682,345.5 684,344.8 686,344.1 688,343.3 690,342.5 692,341.7 694,340.8 696,339.9 698,339.0 700,338.2 702,337.6 704,337.1 706,336.8 708,336.4 710,336.2 712,335.9 714,336.1 716,336.3 718,336.3 720,336.3 722,336.3 724,336.4 726,336.5 728,336.6 730,336.5 732,336.4 734,336.3 736,336.1 738,335.9 740,335.6 742,335.3 744,335.0 746,335.6 748,336.2 750,337.3 752,338.5 754,338.6 756,339.0 758,339.0 760,339.3 762,339.9 764,340.7 766,341.6 768,342.5 770,343.4 772,344.2 774,345.2 776,346.2 778,347.2 780,348.1 782,349.0 784,349.8 786,350.5 788,351.1 790,351.6 792,352.1 794,352.6 796,353.0 798,353.3 800,353.5 802,353.7 804,353.9 806,354.0 808,354.1 810,354.3 812,354.5 814,354.9 816,355.4 818,355.6 820,355.8" fill="none" stroke="#2a7a36" stroke-width="1"/><polyline points="284,483.8 286,483.0 288,482.1 290,480.4 292,478.5 294,476.6 296,474.7 298,473.1 300,471.4 302,469.9 304,468.3 306,467.1 308,465.9 310,464.5 312,463.2 314,461.8 316,460.5 318,459.3 320,458.2 322,456.9 324,455.6 326,454.1 328,452.7 330,451.1 332,449.6 334,448.1 336,446.7 338,445.2 340,443.9 342,442.7 344,441.7 346,441.5 348,441.3 350,440.6 352,439.8 354,438.5 356,437.3 358,435.9 360,434.4 362,433.2 364,432.0 366,430.9 368,429.8 370,428.7 372,427.6 374,426.7 376,425.7 378,424.6 380,423.4 382,422.7 384,422.0 386,421.7 388,421.5 390,420.9 392,420.3 394,419.5 396,418.6 398,417.8 400,416.9 402,416.1 404,415.4 406,414.7 408,414.0 410,413.3 412,412.7 414,412.0 416,411.3 418,410.6 420,409.8 422,409.0 424,408.1 426,407.3 428,406.4 430,405.6 432,404.8 434,404.1 436,403.4 438,402.7 440,402.0 442,401.4 444,400.8 446,400.3 448,399.7 450,399.2 452,398.7 454,398.2 456,397.6 458,397.1 460,396.6 462,396.0 464,395.4 466,394.9 468,394.3 470,393.7 472,393.1 474,392.6 476,392.0 478,391.5 480,391.0 482,390.6 484,390.3 486,390.0 488,389.7 490,389.4 492,389.2 494,389.1 496,388.9 498,388.8 500,388.8 502,388.7 504,388.7 506,388.7 508,388.6 510,388.6 512,388.5 514,388.5 516,388.4 518,388.3 520,388.2 522,388.2 524,388.1 526,388.1 528,388.1 530,388.1 532,388.2 534,388.3 536,388.4 538,388.1 540,387.9 542,387.6 544,387.4 546,387.2 548,387.0 550,386.9 552,386.8 554,386.7 556,386.6 558,386.4 560,386.2 562,385.8 564,385.5 566,385.1 568,384.6 570,384.1 572,383.7 574,383.3 576,382.9 578,382.4 580,381.9 582,381.2 584,380.6 586,380.1 588,379.7 590,379.1 592,378.5 594,377.7 596,376.8 598,375.9 600,374.8 602,373.6 604,372.4 606,371.1 608,369.8 610,368.5 612,367.3 614,366.0 616,364.7 618,363.5 620,362.3 622,361.5 624,360.8 626,360.1 628,359.5 630,358.9 632,358.4 634,357.7 636,357.1 638,356.6 640,356.2 642,355.9 644,355.6 646,355.3 648,355.0 650,354.7 652,354.5 654,354.2 656,353.9 658,353.7 660,353.4 662,352.8 664,352.3 666,351.7 668,351.1 670,350.4 672,349.8 674,349.3 676,348.8 678,348.1 680,347.5 682,346.8 684,346.0 686,345.2 688,344.4 690,343.5 692,342.6 694,341.7 696,340.8 698,339.9 700,339.0 702,338.4 704,337.9 706,337.5 708,337.1 710,336.9 712,336.6 714,336.8 716,337.0 718,337.0 720,336.9 722,337.0 724,337.0 726,337.2 728,337.3 730,337.2 732,337.1 734,336.9 736,336.7 738,336.5 740,336.2 742,335.9 744,335.6 746,336.1 748,336.7 750,337.8 752,339.0 754,339.1 756,339.5 758,339.5 760,339.8 762,340.5 764,341.3 766,342.2 768,343.1 770,344.0 772,344.9 774,345.9 776,346.9 778,347.9 780,348.8 782,349.7 784,350.5 786,351.2 788,351.8 790,352.3 792,352.8 794,353.2 796,353.6 798,353.9 800,354.1 802,354.2 804,354.4 806,354.5 808,354.6 810,354.7 812,354.9 814,355.3 816,355.7 818,356.0 820,356.2" fill="none" stroke="#2a7a36" stroke-width="1"/><polyline points="284,368.0 286,367.1 288,366.1 290,363.9 292,361.6 294,359.3 296,357.0 298,355.1 300,353.1 302,351.3 304,349.5 306,348.2 308,346.9 310,345.5 312,344.2 314,343.0 316,341.9 318,341.3 320,340.7 322,340.1 324,339.5 326,338.8 328,338.1 330,337.2 332,336.4 334,335.5 336,334.7 338,333.9 340,333.1 342,332.5 344,332.0 346,332.5 348,333.1 350,332.8 352,332.4 354,331.3 356,330.2 358,328.9 360,327.6 362,326.5 364,325.4 366,324.5 368,323.6 370,322.7 372,321.8 374,321.2 376,320.7 378,320.0 380,319.4 382,319.7 384,320.1 386,321.3 388,322.6 390,323.7 392,324.8 394,325.5 396,326.3 398,327.0 400,327.6 402,328.3 404,328.9 406,329.5 408,330.1 410,330.7 412,331.2 414,331.8 416,332.3 418,332.7 420,333.1 422,333.3 424,333.4 426,333.4 428,333.3 430,333.2 432,333.0 434,332.8 436,332.5 438,332.2 440,331.9 442,331.6 444,331.3 446,331.0 448,330.7 450,330.5 452,330.2 454,330.0 456,329.7 458,329.4 460,329.1 462,328.8 464,328.6 466,328.3 468,328.2 470,328.1 472,328.1 474,328.2 476,328.4 478,328.9 480,329.4 482,330.1 484,330.8 486,331.6 488,332.4 490,333.2 492,334.0 494,334.8 496,335.6 498,336.4 500,337.2 502,338.0 504,338.7 506,339.4 508,340.1 510,340.8 512,341.4 514,341.9 516,342.5 518,343.0 520,343.5 522,344.0 524,344.5 526,345.1 528,345.7 530,346.4 532,347.1 534,347.8 536,348.6 538,348.8 540,349.0 542,349.3 544,349.6 546,350.0 548,350.3 550,350.8 552,351.2 554,351.6 556,352.0 558,352.3 560,352.5 562,352.6 564,352.7 566,352.6 568,352.4 570,352.3 572,352.2 574,352.1 576,352.1 578,351.9 580,351.7 582,351.3 584,350.8 586,350.7 588,350.4 590,350.1 592,349.7 594,349.1 596,348.5 598,347.8 600,347.1 602,346.2 604,345.1 606,343.8 608,342.2 610,340.3 612,338.1 614,335.6 616,332.9 618,330.2 620,327.7 622,325.8 624,324.2 626,322.9 628,322.0 630,321.2 632,320.6 634,320.0 636,319.3 638,319.0 640,318.6 642,318.5 644,318.3 646,318.3 648,318.2 650,318.1 652,318.0 654,317.9 656,317.8 658,317.8 660,317.8 662,317.5 664,317.3 666,317.1 668,316.9 670,316.7 672,316.6 674,316.7 676,316.9 678,317.0 680,317.0 682,317.0 684,316.9 686,316.8 688,316.6 690,316.4 692,316.1 694,315.8 696,315.4 698,314.9 700,314.4 702,314.1 704,313.8 706,313.6 708,313.4 710,313.3 712,313.2 714,313.7 716,314.1 718,314.3 720,314.6 722,314.9 724,315.2 726,315.6 728,316.1 730,316.2 732,316.4 734,316.5 736,316.6 738,316.7 740,316.8 742,317.0 744,317.3 746,318.9 748,320.7 750,323.3 752,326.0 754,327.1 756,328.2 758,328.5 760,328.8 762,329.4 764,330.0 766,330.6 768,331.2 770,331.7 772,332.2 774,332.9 776,333.7 778,334.6 780,335.5 782,336.5 784,337.4 786,338.4 788,339.3 790,340.2 792,341.0 794,341.9 796,342.7 798,343.3 800,343.9 802,344.4 804,344.9 806,345.3 808,345.7 810,346.2 812,346.6 814,347.5 816,348.2 818,348.7 820,349.1" fill="none" stroke="#141490" stroke-width="1"/><polyline points="284,371.9 286,371.1 288,370.1 290,368.0 292,365.8 294,363.7 296,361.4 298,359.5 300,357.7 302,355.9 304,354.2 306,352.8 308,351.5 310,350.2 312,348.9 314,347.7 316,346.6 318,345.9 320,345.3 322,344.7 324,344.1 326,343.3 328,342.5 330,341.7 332,340.8 334,339.9 336,339.1 338,338.2 340,337.4 342,336.8 344,336.3 346,336.7 348,337.1 350,336.8 352,336.4 354,335.3 356,334.2 358,332.9 360,331.6 362,330.6 364,329.5 366,328.6 368,327.6 370,326.8 372,325.9 374,325.3 376,324.7 378,323.9 380,323.3 382,323.5 384,323.9 386,324.9 388,326.0 390,326.9 392,327.9 394,328.5 396,329.1 398,329.7 400,330.2 402,330.7 404,331.2 406,331.7 408,332.2 410,332.7 412,333.1 414,333.6 416,334.0 418,334.3 420,334.6 422,334.7 424,334.8 426,334.7 428,334.6 430,334.4 432,334.2 434,333.9 436,333.6 438,333.3 440,332.9 442,332.6 444,332.3 446,332.0 448,331.7 450,331.5 452,331.2 454,331.0 456,330.7 458,330.4 460,330.1 462,329.8 464,329.6 466,329.3 468,329.1 470,329.0 472,329.0 474,329.1 476,329.3 478,329.7 480,330.2 482,330.9 484,331.5 486,332.3 488,333.1 490,333.9 492,334.7 494,335.5 496,336.3 498,337.1 500,337.8 502,338.6 504,339.3 506,340.0 508,340.7 510,341.4 512,342.0 514,342.5 516,343.1 518,343.6 520,344.1 522,344.6 524,345.1 526,345.7 528,346.3 530,347.0 532,347.6 534,348.4 536,349.1 538,349.3 540,349.6 542,349.9 544,350.2 546,350.6 548,350.9 550,351.4 552,351.8 554,352.2 556,352.6 558,352.8 560,353.0 562,353.1 564,353.1 566,353.0 568,352.9 570,352.8 572,352.6 574,352.5 576,352.5 578,352.3 580,352.0 582,351.7 584,351.2 586,351.1 588,350.8 590,350.5 592,350.1 594,349.5 596,348.9 598,348.2 600,347.5 602,346.6 604,345.6 606,344.3 608,342.7 610,340.9 612,338.7 614,336.3 616,333.7 618,331.0 620,328.5 622,326.7 624,325.1 626,323.9 628,323.0 630,322.2 632,321.6 634,321.0 636,320.3 638,320.0 640,319.6 642,319.5 644,319.3 646,319.2 648,319.1 650,319.0 652,318.8 654,318.8 656,318.7 658,318.6 660,318.6 662,318.3 664,318.1 666,317.8 668,317.6 670,317.5 672,317.4 674,317.5 676,317.7 678,317.7 680,317.8 682,317.7 684,317.7 686,317.6 688,317.4 690,317.2 692,317.0 694,316.7 696,316.3 698,315.9 700,315.4 702,315.2 704,314.9 706,314.7 708,314.6 710,314.5 712,314.4 714,314.8 716,315.2 718,315.4 720,315.6 722,315.9 724,316.2 726,316.6 728,317.0 730,317.1 732,317.3 734,317.4 736,317.5 738,317.5 740,317.6 742,317.8 744,318.1 746,319.6 748,321.3 750,323.7 752,326.2 754,327.3 756,328.3 758,328.7 760,329.0 762,329.6 764,330.2 766,330.8 768,331.4 770,331.9 772,332.5 774,333.2 776,333.9 778,334.8 780,335.7 782,336.7 784,337.6 786,338.5 788,339.4 790,340.3 792,341.1 794,342.0 796,342.8 798,343.4 800,344.0 802,344.5 804,345.1 806,345.5 808,345.9 810,346.4 812,346.9 814,347.7 816,348.4 818,348.9 820,349.3" fill="none" stroke="#141490" stroke-width="1"/><polyline points="284,375.9 286,375.1 288,374.1 290,372.2 292,370.0 294,368.0 296,365.8 298,364.0 300,362.2 302,360.5 304,358.8 306,357.5 308,356.2 310,354.8 312,353.6 314,352.4 316,351.3 318,350.6 320,349.9 322,349.2 324,348.6 326,347.8 328,347.0 330,346.1 332,345.2 334,344.3 336,343.5 338,342.6 340,341.8 342,341.1 344,340.5 346,340.9 348,341.2 350,340.8 352,340.3 354,339.3 356,338.2 358,336.9 360,335.7 362,334.6 364,333.6 366,332.6 368,331.7 370,330.8 372,329.9 374,329.3 376,328.7 378,327.9 380,327.2 382,327.3 384,327.6 386,328.4 388,329.4 390,330.1 392,330.9 394,331.4 396,331.9 398,332.4 400,332.8 402,333.2 404,333.6 406,333.9 408,334.3 410,334.7 412,335.1 414,335.4 416,335.7 418,335.9 420,336.1 422,336.2 424,336.2 426,336.1 428,335.9 430,335.7 432,335.4 434,335.1 436,334.7 438,334.4 440,334.0 442,333.7 444,333.3 446,333.1 448,332.8 450,332.5 452,332.2 454,332.0 456,331.7 458,331.4 460,331.1 462,330.8 464,330.5 466,330.3 468,330.1 470,330.0 472,330.0 474,330.0 476,330.2 478,330.6 480,331.0 482,331.6 484,332.3 486,333.1 488,333.8 490,334.6 492,335.4 494,336.1 496,336.9 498,337.7 500,338.5 502,339.2 504,339.9 506,340.6 508,341.3 510,342.0 512,342.6 514,343.1 516,343.7 518,344.2 520,344.7 522,345.3 524,345.8 526,346.4 528,346.9 530,347.6 532,348.2 534,348.9 536,349.6 538,349.9 540,350.2 542,350.5 544,350.8 546,351.1 548,351.5 550,351.9 552,352.4 554,352.8 556,353.1 558,353.4 560,353.6 562,353.6 564,353.6 566,353.5 568,353.3 570,353.2 572,353.0 574,353.0 576,352.9 578,352.7 580,352.4 582,352.0 584,351.6 586,351.4 588,351.2 590,350.8 592,350.4 594,349.9 596,349.3 598,348.6 600,347.9 602,347.1 604,346.0 606,344.8 608,343.2 610,341.5 612,339.4 614,337.0 616,334.4 618,331.8 620,329.4 622,327.6 624,326.0 626,324.8 628,323.9 630,323.2 632,322.6 634,321.9 636,321.3 638,321.0 640,320.6 642,320.5 644,320.3 646,320.2 648,320.0 650,319.9 652,319.7 654,319.6 656,319.5 658,319.5 660,319.4 662,319.1 664,318.9 666,318.6 668,318.4 670,318.3 672,318.2 674,318.2 676,318.4 678,318.4 680,318.5 682,318.5 684,318.4 686,318.3 688,318.3 690,318.1 692,317.9 694,317.6 696,317.3 698,316.9 700,316.4 702,316.2 704,316.0 706,315.8 708,315.7 710,315.6 712,315.5 714,315.9 716,316.3 718,316.4 720,316.6 722,316.9 724,317.2 726,317.5 728,317.9 730,318.1 732,318.2 734,318.3 736,318.3 738,318.4 740,318.5 742,318.7 744,319.0 746,320.4 748,321.9 750,324.1 752,326.5 754,327.5 756,328.5 758,328.8 760,329.2 762,329.8 764,330.4 766,331.0 768,331.6 770,332.2 772,332.7 774,333.4 776,334.1 778,335.0 780,335.9 782,336.8 784,337.8 786,338.7 788,339.6 790,340.4 792,341.3 794,342.1 796,342.9 798,343.5 800,344.1 802,344.7 804,345.2 806,345.7 808,346.1 810,346.6 812,347.1 814,347.9 816,348.6 818,349.1 820,349.4" fill="none" stroke="#141490" stroke-width="1"/><polyline points="284,379.9 286,379.1 288,378.1 290,376.3 292,374.2 294,372.3 296,370.2 298,368.5 300,366.7 302,365.1 304,363.4 306,362.1 308,360.8 310,359.5 312,358.3 314,357.1 316,356.0 318,355.2 320,354.5 322,353.8 324,353.1 326,352.3 328,351.5 330,350.6 332,349.7 334,348.8 336,347.9 338,347.0 340,346.1 342,345.5 344,344.8 346,345.0 348,345.2 350,344.8 352,344.3 354,343.2 356,342.2 358,340.9 360,339.7 362,338.7 364,337.6 366,336.7 368,335.7 370,334.8 372,333.9 374,333.3 376,332.6 378,331.9 380,331.2 382,331.2 384,331.3 386,332.0 388,332.8 390,333.4 392,334.0 394,334.4 396,334.7 398,335.0 400,335.3 402,335.6 404,335.9 406,336.2 408,336.5 410,336.7 412,337.0 414,337.2 416,337.4 418,337.5 420,337.6 422,337.6 424,337.5 426,337.4 428,337.1 430,336.9 432,336.5 434,336.2 436,335.8 438,335.4 440,335.1 442,334.7 444,334.4 446,334.1 448,333.8 450,333.5 452,333.2 454,333.0 456,332.7 458,332.4 460,332.1 462,331.8 464,331.5 466,331.3 468,331.1 470,330.9 472,330.9 474,331.0 476,331.1 478,331.4 480,331.9 482,332.4 484,333.1 486,333.8 488,334.5 490,335.3 492,336.1 494,336.8 496,337.6 498,338.3 500,339.1 502,339.8 504,340.6 506,341.3 508,341.9 510,342.6 512,343.2 514,343.7 516,344.3 518,344.8 520,345.4 522,345.9 524,346.4 526,347.0 528,347.6 530,348.2 532,348.8 534,349.5 536,350.2 538,350.4 540,350.7 542,351.1 544,351.4 546,351.7 548,352.1 550,352.5 552,353.0 554,353.3 556,353.7 558,353.9 560,354.1 562,354.1 564,354.1 566,354.0 568,353.8 570,353.6 572,353.5 574,353.4 576,353.3 578,353.0 580,352.8 582,352.4 584,352.0 586,351.8 588,351.6 590,351.2 592,350.8 594,350.3 596,349.7 598,349.0 600,348.3 602,347.5 604,346.5 606,345.3 608,343.8 610,342.0 612,340.0 614,337.6 616,335.1 618,332.6 620,330.3 622,328.5 624,327.0 626,325.8 628,324.9 630,324.1 632,323.6 634,322.9 636,322.4 638,322.0 640,321.6 642,321.4 644,321.3 646,321.1 648,320.9 650,320.8 652,320.6 654,320.5 656,320.4 658,320.3 660,320.2 662,319.9 664,319.6 666,319.4 668,319.2 670,319.0 672,318.9 674,319.0 676,319.1 678,319.2 680,319.3 682,319.2 684,319.2 686,319.1 688,319.1 690,318.9 692,318.7 694,318.5 696,318.2 698,317.9 700,317.5 702,317.3 704,317.1 706,316.9 708,316.8 710,316.7 712,316.6 714,317.0 716,317.3 718,317.5 720,317.7 722,317.9 724,318.2 726,318.5 728,318.8 730,319.0 732,319.1 734,319.1 736,319.2 738,319.3 740,319.4 742,319.5 744,319.8 746,321.1 748,322.5 750,324.6 752,326.7 754,327.7 756,328.6 758,329.0 760,329.4 762,330.0 764,330.6 766,331.2 768,331.8 770,332.4 772,333.0 774,333.7 776,334.4 778,335.3 780,336.1 782,337.0 784,337.9 786,338.8 788,339.7 790,340.5 792,341.4 794,342.2 796,343.0 798,343.6 800,344.3 802,344.8 804,345.4 806,345.9 808,346.3 810,346.8 812,347.3 814,348.1 816,348.8 818,349.3 820,349.6" fill="none" stroke="#141490" stroke-width="1"/><polyline points="284,383.9 286,383.1 288,382.2 290,380.4 292,378.5 294,376.6 296,374.6 298,372.9 300,371.2 302,369.6 304,368.0 306,366.8 308,365.5 310,364.2 312,363.0 314,361.8 316,360.7 318,359.9 320,359.2 322,358.4 324,357.6 326,356.8 328,355.9 330,355.0 332,354.1 334,353.2 336,352.3 338,351.4 340,350.5 342,349.8 344,349.1 346,349.2 348,349.3 350,348.8 352,348.2 354,347.2 356,346.2 358,344.9 360,343.7 362,342.7 364,341.7 366,340.7 368,339.8 370,338.9 372,338.0 374,337.3 376,336.6 378,335.8 380,335.1 382,335.0 384,335.0 386,335.6 388,336.2 390,336.6 392,337.1 394,337.3 396,337.6 398,337.7 400,337.9 402,338.1 404,338.2 406,338.4 408,338.6 410,338.7 412,338.9 414,339.0 416,339.1 418,339.2 420,339.2 422,339.1 424,338.9 426,338.7 428,338.4 430,338.1 432,337.7 434,337.3 436,336.9 438,336.5 440,336.1 442,335.7 444,335.4 446,335.1 448,334.8 450,334.5 452,334.2 454,333.9 456,333.7 458,333.4 460,333.1 462,332.8 464,332.5 466,332.3 468,332.0 470,331.9 472,331.8 474,331.9 476,332.0 478,332.3 480,332.7 482,333.2 484,333.8 486,334.5 488,335.2 490,336.0 492,336.7 494,337.5 496,338.2 498,339.0 500,339.7 502,340.4 504,341.2 506,341.9 508,342.5 510,343.2 512,343.8 514,344.3 516,344.9 518,345.5 520,346.0 522,346.5 524,347.0 526,347.6 528,348.2 530,348.8 532,349.4 534,350.0 536,350.7 538,351.0 540,351.3 542,351.6 544,352.0 546,352.3 548,352.7 550,353.1 552,353.5 554,353.9 556,354.2 558,354.4 560,354.6 562,354.6 564,354.6 566,354.4 568,354.3 570,354.1 572,353.9 574,353.8 576,353.7 578,353.4 580,353.2 582,352.8 584,352.4 586,352.2 588,351.9 590,351.6 592,351.2 594,350.7 596,350.1 598,349.4 600,348.7 602,347.9 604,347.0 606,345.8 608,344.3 610,342.6 612,340.6 614,338.3 616,335.9 618,333.4 620,331.2 622,329.4 624,327.9 626,326.7 628,325.8 630,325.1 632,324.5 634,323.9 636,323.4 638,323.0 640,322.6 642,322.4 644,322.2 646,322.1 648,321.9 650,321.7 652,321.5 654,321.4 656,321.2 658,321.1 660,321.0 662,320.7 664,320.4 666,320.2 668,319.9 670,319.8 672,319.7 674,319.7 676,319.9 678,319.9 680,320.0 682,320.0 684,320.0 686,319.9 688,319.9 690,319.7 692,319.6 694,319.4 696,319.2 698,318.8 700,318.5 702,318.3 704,318.2 706,318.0 708,317.9 710,317.9 712,317.8 714,318.1 716,318.4 718,318.5 720,318.7 722,318.9 724,319.1 726,319.4 728,319.7 730,319.9 732,320.0 734,320.0 736,320.1 738,320.1 740,320.2 742,320.4 744,320.6 746,321.8 748,323.1 750,325.0 752,327.0 754,327.8 756,328.8 758,329.2 760,329.5 762,330.2 764,330.8 766,331.4 768,332.1 770,332.6 772,333.2 774,333.9 776,334.6 778,335.5 780,336.4 782,337.2 784,338.1 786,339.0 788,339.9 790,340.7 792,341.5 794,342.3 796,343.1 798,343.8 800,344.4 802,345.0 804,345.5 806,346.0 808,346.5 810,347.1 812,347.6 814,348.3 816,349.0 818,349.4 820,349.8" fill="none" stroke="#141490" stroke-width="1"/><polyline points="284,387.8 286,387.1 288,386.2 290,384.5 292,382.7 294,380.9 296,379.0 298,377.4 300,375.8 302,374.2 304,372.7 306,371.4 308,370.2 310,368.9 312,367.6 314,366.5 316,365.4 318,364.5 320,363.8 322,362.9 324,362.2 326,361.3 328,360.4 330,359.4 332,358.5 334,357.6 336,356.6 338,355.7 340,354.8 342,354.1 344,353.4 346,353.4 348,353.4 350,352.8 352,352.2 354,351.2 356,350.1 358,348.9 360,347.8 362,346.7 364,345.7 366,344.8 368,343.8 370,342.9 372,342.0 374,341.3 376,340.6 378,339.8 380,339.0 382,338.8 384,338.8 386,339.1 388,339.6 390,339.8 392,340.2 394,340.3 396,340.4 398,340.4 400,340.5 402,340.5 404,340.6 406,340.6 408,340.7 410,340.7 412,340.8 414,340.8 416,340.8 418,340.8 420,340.7 422,340.5 424,340.3 426,340.0 428,339.7 430,339.3 432,338.9 434,338.4 436,338.0 438,337.6 440,337.2 442,336.8 444,336.4 446,336.1 448,335.8 450,335.5 452,335.2 454,334.9 456,334.7 458,334.4 460,334.1 462,333.8 464,333.5 466,333.2 468,333.0 470,332.9 472,332.8 474,332.8 476,332.9 478,333.2 480,333.5 482,334.0 484,334.6 486,335.3 488,336.0 490,336.7 492,337.4 494,338.1 496,338.9 498,339.6 500,340.3 502,341.1 504,341.8 506,342.5 508,343.1 510,343.8 512,344.4 514,345.0 516,345.5 518,346.1 520,346.6 522,347.2 524,347.7 526,348.2 528,348.8 530,349.4 532,350.0 534,350.6 536,351.2 538,351.5 540,351.9 542,352.2 544,352.6 546,352.9 548,353.3 550,353.7 552,354.1 554,354.5 556,354.7 558,354.9 560,355.1 562,355.1 564,355.0 566,354.9 568,354.7 570,354.5 572,354.3 574,354.2 576,354.1 578,353.8 580,353.6 582,353.2 584,352.8 586,352.6 588,352.3 590,352.0 592,351.5 594,351.0 596,350.5 598,349.9 600,349.2 602,348.4 604,347.4 606,346.3 608,344.8 610,343.2 612,341.2 614,339.0 616,336.6 618,334.2 620,332.0 622,330.3 624,328.8 626,327.7 628,326.8 630,326.1 632,325.5 634,324.9 636,324.4 638,324.0 640,323.6 642,323.4 644,323.2 646,323.0 648,322.8 650,322.6 652,322.4 654,322.2 656,322.0 658,321.9 660,321.8 662,321.5 664,321.2 666,320.9 668,320.7 670,320.6 672,320.5 674,320.5 676,320.6 678,320.7 680,320.7 682,320.7 684,320.8 686,320.7 688,320.7 690,320.6 692,320.5 694,320.3 696,320.1 698,319.8 700,319.5 702,319.4 704,319.2 706,319.1 708,319.0 710,319.0 712,318.9 714,319.2 716,319.5 718,319.6 720,319.7 722,319.9 724,320.1 726,320.4 728,320.7 730,320.8 732,320.9 734,320.9 736,321.0 738,321.0 740,321.1 742,321.2 744,321.5 746,322.5 748,323.7 750,325.4 752,327.2 754,328.0 756,328.9 758,329.3 760,329.7 762,330.4 764,331.0 766,331.6 768,332.3 770,332.9 772,333.4 774,334.2 776,334.9 778,335.7 780,336.6 782,337.4 784,338.3 786,339.1 788,340.0 790,340.8 792,341.6 794,342.4 796,343.2 798,343.9 800,344.5 802,345.1 804,345.7 806,346.2 808,346.7 810,347.3 812,347.8 814,348.5 816,349.2 818,349.6 820,350.0" fill="none" stroke="#141490" stroke-width="1"/><polyline points="284,391.8 286,391.1 288,390.2 290,388.6 292,386.9 294,385.2 296,383.4 298,381.8 300,380.3 302,378.8 304,377.3 306,376.0 308,374.8 310,373.5 312,372.3 314,371.2 316,370.1 318,369.2 320,368.4 322,367.5 324,366.7 326,365.8 328,364.9 330,363.9 332,362.9 334,362.0 336,361.0 338,360.1 340,359.2 342,358.4 344,357.7 346,357.5 348,357.4 350,356.8 352,356.2 354,355.1 356,354.1 358,353.0 360,351.8 362,350.8 364,349.8 366,348.8 368,347.9 370,347.0 372,346.1 374,345.3 376,344.6 378,343.7 380,343.0 382,342.7 384,342.5 386,342.7 388,343.0 390,343.1 392,343.2 394,343.2 396,343.2 398,343.1 400,343.1 402,343.0 404,342.9 406,342.9 408,342.8 410,342.8 412,342.7 414,342.6 416,342.5 418,342.4 420,342.2 422,342.0 424,341.7 426,341.3 428,340.9 430,340.5 432,340.0 434,339.6 436,339.1 438,338.6 440,338.2 442,337.8 444,337.4 446,337.1 448,336.8 450,336.5 452,336.2 454,335.9 456,335.7 458,335.4 460,335.1 462,334.8 464,334.5 466,334.2 468,334.0 470,333.8 472,333.7 474,333.7 476,333.8 478,334.0 480,334.3 482,334.8 484,335.4 486,336.0 488,336.7 490,337.4 492,338.1 494,338.8 496,339.5 498,340.3 500,341.0 502,341.7 504,342.4 506,343.1 508,343.7 510,344.4 512,345.0 514,345.6 516,346.1 518,346.7 520,347.3 522,347.8 524,348.3 526,348.9 528,349.4 530,350.0 532,350.6 534,351.2 536,351.8 538,352.1 540,352.4 542,352.8 544,353.1 546,353.5 548,353.9 550,354.3 552,354.7 554,355.0 556,355.3 558,355.5 560,355.6 562,355.6 564,355.5 566,355.4 568,355.2 570,355.0 572,354.8 574,354.6 576,354.5 578,354.2 580,353.9 582,353.6 584,353.2 586,353.0 588,352.7 590,352.3 592,351.9 594,351.4 596,350.9 598,350.3 600,349.6 602,348.8 604,347.9 606,346.8 608,345.4 610,343.7 612,341.8 614,339.7 616,337.4 618,335.1 620,332.9 622,331.2 624,329.7 626,328.6 628,327.7 630,327.0 632,326.5 634,325.9 636,325.4 638,325.0 640,324.6 642,324.4 644,324.2 646,324.0 648,323.7 650,323.5 652,323.3 654,323.1 656,322.9 658,322.7 660,322.5 662,322.2 664,322.0 666,321.7 668,321.5 670,321.3 672,321.2 674,321.3 676,321.3 678,321.4 680,321.5 682,321.5 684,321.5 686,321.5 688,321.5 690,321.4 692,321.4 694,321.2 696,321.1 698,320.8 700,320.6 702,320.5 704,320.3 706,320.3 708,320.2 710,320.1 712,320.0 714,320.3 716,320.5 718,320.6 720,320.8 722,320.9 724,321.1 726,321.3 728,321.6 730,321.7 732,321.8 734,321.8 736,321.9 738,321.9 740,322.0 742,322.1 744,322.3 746,323.2 748,324.3 750,325.8 752,327.4 754,328.2 756,329.0 758,329.5 760,329.9 762,330.6 764,331.2 766,331.8 768,332.5 770,333.1 772,333.7 774,334.4 776,335.1 778,335.9 780,336.8 782,337.6 784,338.5 786,339.3 788,340.1 790,340.9 792,341.7 794,342.5 796,343.3 798,344.0 800,344.6 802,345.2 804,345.8 806,346.4 808,346.9 810,347.5 812,348.0 814,348.7 816,349.4 818,349.8 820,350.2" fill="none" stroke="#141490" stroke-width="1"/><polyline points="284,395.8 286,395.1 288,394.2 290,392.7 292,391.1 294,389.5 296,387.8 298,386.3 300,384.8 302,383.4 304,381.9 306,380.7 308,379.5 310,378.2 312,377.0 314,375.9 316,374.8 318,373.8 320,373.0 322,372.1 324,371.2 326,370.3 328,369.3 330,368.3 332,367.4 334,366.4 336,365.4 338,364.5 340,363.5 342,362.7 344,362.0 346,361.7 348,361.5 350,360.8 352,360.1 354,359.1 356,358.1 358,357.0 360,355.8 362,354.8 364,353.8 366,352.9 368,351.9 370,351.0 372,350.1 374,349.3 376,348.5 378,347.7 380,346.9 382,346.5 384,346.2 386,346.3 388,346.4 390,346.3 392,346.3 394,346.2 396,346.0 398,345.8 400,345.6 402,345.5 404,345.3 406,345.1 408,344.9 410,344.8 412,344.6 414,344.4 416,344.2 418,344.0 420,343.7 422,343.4 424,343.0 426,342.6 428,342.2 430,341.7 432,341.2 434,340.7 436,340.2 438,339.7 440,339.3 442,338.9 444,338.5 446,338.1 448,337.8 450,337.5 452,337.2 454,336.9 456,336.6 458,336.4 460,336.1 462,335.8 464,335.5 466,335.2 468,335.0 470,334.8 472,334.7 474,334.6 476,334.7 478,334.9 480,335.2 482,335.6 484,336.1 486,336.7 488,337.4 490,338.1 492,338.8 494,339.5 496,340.2 498,340.9 500,341.6 502,342.3 504,343.0 506,343.7 508,344.3 510,345.0 512,345.6 514,346.2 516,346.8 518,347.3 520,347.9 522,348.4 524,348.9 526,349.5 528,350.0 530,350.6 532,351.2 534,351.7 536,352.3 538,352.7 540,353.0 542,353.4 544,353.7 546,354.1 548,354.5 550,354.9 552,355.3 554,355.6 556,355.8 558,356.0 560,356.1 562,356.1 564,356.0 566,355.8 568,355.6 570,355.4 572,355.2 574,355.0 576,354.8 578,354.6 580,354.3 582,354.0 584,353.6 586,353.4 588,353.1 590,352.7 592,352.3 594,351.8 596,351.2 598,350.7 600,350.0 602,349.2 604,348.3 606,347.2 608,345.9 610,344.3 612,342.4 614,340.3 616,338.1 618,335.9 620,333.8 622,332.1 624,330.7 626,329.5 628,328.7 630,328.0 632,327.4 634,326.9 636,326.4 638,326.0 640,325.7 642,325.4 644,325.1 646,324.9 648,324.7 650,324.4 652,324.2 654,323.9 656,323.7 658,323.5 660,323.3 662,323.0 664,322.7 666,322.5 668,322.2 670,322.1 672,322.0 674,322.0 676,322.1 678,322.1 680,322.2 682,322.2 684,322.3 686,322.3 688,322.3 690,322.3 692,322.2 694,322.1 696,322.0 698,321.8 700,321.6 702,321.5 704,321.4 706,321.4 708,321.3 710,321.2 712,321.2 714,321.4 716,321.6 718,321.7 720,321.8 722,321.9 724,322.1 726,322.3 728,322.5 730,322.6 732,322.6 734,322.7 736,322.7 738,322.8 740,322.8 742,323.0 744,323.2 746,324.0 748,324.9 750,326.2 752,327.7 754,328.4 756,329.2 758,329.6 760,330.1 762,330.8 764,331.4 766,332.0 768,332.7 770,333.3 772,333.9 774,334.6 776,335.4 778,336.2 780,337.0 782,337.8 784,338.6 786,339.5 788,340.3 790,341.1 792,341.9 794,342.6 796,343.4 798,344.1 800,344.8 802,345.4 804,346.0 806,346.6 808,347.1 810,347.7 812,348.3 814,349.0 816,349.6 818,350.0 820,350.4" fill="none" stroke="#141490" stroke-width="1"/><polyline points="284,399.8 286,399.1 288,398.2 290,396.8 292,395.3 294,393.8 296,392.2 298,390.8 300,389.3 302,387.9 304,386.5 306,385.3 308,384.1 310,382.9 312,381.7 314,380.6 316,379.4 318,378.5 320,377.6 322,376.6 324,375.7 326,374.8 328,373.8 330,372.8 332,371.8 334,370.8 336,369.8 338,368.8 340,367.9 342,367.1 344,366.3 346,365.9 348,365.5 350,364.8 352,364.1 354,363.1 356,362.1 358,361.0 360,359.9 362,358.9 364,357.9 366,356.9 368,356.0 370,355.1 372,354.1 374,353.3 376,352.5 378,351.6 380,350.8 382,350.4 384,350.0 386,349.8 388,349.7 390,349.6 392,349.4 394,349.1 396,348.8 398,348.5 400,348.2 402,347.9 404,347.6 406,347.3 408,347.1 410,346.8 412,346.5 414,346.2 416,345.9 418,345.6 420,345.3 422,344.9 424,344.4 426,343.9 428,343.4 430,342.9 432,342.4 434,341.8 436,341.3 438,340.8 440,340.3 442,339.9 444,339.5 446,339.1 448,338.8 450,338.5 452,338.2 454,337.9 456,337.6 458,337.3 460,337.0 462,336.8 464,336.5 466,336.2 468,335.9 470,335.7 472,335.6 474,335.5 476,335.6 478,335.7 480,336.0 482,336.4 484,336.9 486,337.5 488,338.1 490,338.8 492,339.4 494,340.1 496,340.8 498,341.5 500,342.2 502,342.9 504,343.6 506,344.3 508,344.9 510,345.6 512,346.2 514,346.8 516,347.4 518,347.9 520,348.5 522,349.0 524,349.6 526,350.1 528,350.7 530,351.2 532,351.7 534,352.3 536,352.9 538,353.2 540,353.6 542,353.9 544,354.3 546,354.7 548,355.1 550,355.5 552,355.8 554,356.1 556,356.4 558,356.5 560,356.6 562,356.6 564,356.5 566,356.3 568,356.1 570,355.9 572,355.6 574,355.4 576,355.2 578,355.0 580,354.7 582,354.4 584,354.0 586,353.7 588,353.4 590,353.1 592,352.7 594,352.2 596,351.6 598,351.1 600,350.4 602,349.7 604,348.8 606,347.7 608,346.4 610,344.9 612,343.1 614,341.0 616,338.8 618,336.7 620,334.6 622,333.0 624,331.6 626,330.5 628,329.6 630,329.0 632,328.4 634,327.9 636,327.4 638,327.0 640,326.7 642,326.4 644,326.1 646,325.8 648,325.6 650,325.3 652,325.1 654,324.8 656,324.6 658,324.3 660,324.1 662,323.8 664,323.5 666,323.2 668,323.0 670,322.8 672,322.7 674,322.8 676,322.8 678,322.9 680,323.0 682,323.0 684,323.1 686,323.1 688,323.1 690,323.1 692,323.1 694,323.0 696,322.9 698,322.8 700,322.7 702,322.6 704,322.5 706,322.5 708,322.4 710,322.4 712,322.3 714,322.5 716,322.7 718,322.7 720,322.8 722,323.0 724,323.1 726,323.2 728,323.4 730,323.5 732,323.5 734,323.6 736,323.6 738,323.6 740,323.7 742,323.8 744,324.0 746,324.7 748,325.5 750,326.7 752,327.9 754,328.6 756,329.3 758,329.8 760,330.3 762,330.9 764,331.6 766,332.2 768,332.9 770,333.5 772,334.2 774,334.9 776,335.6 778,336.4 780,337.2 782,338.0 784,338.8 786,339.6 788,340.4 790,341.2 792,342.0 794,342.8 796,343.5 798,344.2 800,344.9 802,345.5 804,346.2 806,346.7 808,347.3 810,347.9 812,348.5 814,349.2 816,349.8 818,350.2 820,350.5" fill="none" stroke="#141490" stroke-width="1"/><polyline points="284,403.8 286,403.1 288,402.2 290,400.9 292,399.5 294,398.1 296,396.6 298,395.2 300,393.8 302,392.5 304,391.2 306,390.0 308,388.8 310,387.6 312,386.4 314,385.2 316,384.1 318,383.1 320,382.2 322,381.2 324,380.3 326,379.2 328,378.3 330,377.2 332,376.2 334,375.2 336,374.2 338,373.2 340,372.3 342,371.4 344,370.5 346,370.1 348,369.6 350,368.8 352,368.0 354,367.0 356,366.0 358,365.0 360,363.9 362,362.9 364,361.9 366,361.0 368,360.0 370,359.1 372,358.2 374,357.3 376,356.5 378,355.6 380,354.8 382,354.2 384,353.7 386,353.4 388,353.1 390,352.8 392,352.5 394,352.0 396,351.6 398,351.2 400,350.8 402,350.4 404,350.0 406,349.6 408,349.2 410,348.8 412,348.4 414,348.0 416,347.7 418,347.2 420,346.8 422,346.3 424,345.8 426,345.3 428,344.7 430,344.1 432,343.5 434,343.0 436,342.4 438,341.9 440,341.4 442,340.9 444,340.5 446,340.2 448,339.8 450,339.5 452,339.2 454,338.9 456,338.6 458,338.3 460,338.0 462,337.7 464,337.5 466,337.2 468,336.9 470,336.7 472,336.5 474,336.5 476,336.4 478,336.6 480,336.8 482,337.2 484,337.6 486,338.2 488,338.8 490,339.5 492,340.1 494,340.8 496,341.5 498,342.2 500,342.9 502,343.5 504,344.2 506,344.9 508,345.5 510,346.2 512,346.8 514,347.4 516,348.0 518,348.6 520,349.1 522,349.7 524,350.2 526,350.8 528,351.3 530,351.8 532,352.3 534,352.9 536,353.4 538,353.8 540,354.1 542,354.5 544,354.9 546,355.3 548,355.7 550,356.0 552,356.4 554,356.7 556,356.9 558,357.1 560,357.1 562,357.1 564,356.9 566,356.8 568,356.5 570,356.3 572,356.1 574,355.8 576,355.6 578,355.4 580,355.1 582,354.8 584,354.4 586,354.1 588,353.8 590,353.4 592,353.0 594,352.6 596,352.0 598,351.5 600,350.8 602,350.1 604,349.3 606,348.2 608,346.9 610,345.4 612,343.7 614,341.7 616,339.6 618,337.5 620,335.5 622,333.9 624,332.5 626,331.4 628,330.6 630,329.9 632,329.4 634,328.9 636,328.4 638,328.0 640,327.7 642,327.4 644,327.1 646,326.8 648,326.5 650,326.2 652,325.9 654,325.7 656,325.4 658,325.1 660,324.9 662,324.6 664,324.3 666,324.0 668,323.8 670,323.6 672,323.5 674,323.5 676,323.6 678,323.6 680,323.7 682,323.8 684,323.8 686,323.9 688,323.9 690,323.9 692,324.0 694,323.9 696,323.9 698,323.8 700,323.7 702,323.7 704,323.6 706,323.6 708,323.5 710,323.5 712,323.5 714,323.6 716,323.7 718,323.8 720,323.9 722,324.0 724,324.1 726,324.2 728,324.3 730,324.4 732,324.4 734,324.5 736,324.5 738,324.5 740,324.6 742,324.7 744,324.8 746,325.4 748,326.1 750,327.1 752,328.1 754,328.8 756,329.5 758,330.0 760,330.5 762,331.1 764,331.8 766,332.5 768,333.1 770,333.8 772,334.4 774,335.1 776,335.9 778,336.6 780,337.4 782,338.2 784,339.0 786,339.8 788,340.6 790,341.3 792,342.1 794,342.9 796,343.6 798,344.3 800,345.0 802,345.7 804,346.3 806,346.9 808,347.5 810,348.1 812,348.7 814,349.4 816,350.0 818,350.4 820,350.7" fill="none" stroke="#141490" stroke-width="1"/><polyline points="284,407.7 286,407.1 288,406.2 290,405.0 292,403.7 294,402.4 296,401.0 298,399.7 300,398.4 302,397.1 304,395.8 306,394.6 308,393.4 310,392.3 312,391.1 314,389.9 316,388.8 318,387.8 320,386.8 322,385.8 324,384.8 326,383.7 328,382.7 330,381.7 332,380.6 334,379.6 336,378.6 338,377.6 340,376.6 342,375.7 344,374.8 346,374.2 348,373.6 350,372.8 352,372.0 354,371.0 356,370.0 358,369.0 360,367.9 362,366.9 364,366.0 366,365.0 368,364.1 370,363.1 372,362.2 374,361.3 376,360.5 378,359.6 380,358.7 382,358.0 384,357.4 386,356.9 388,356.5 390,356.0 392,355.5 394,355.0 396,354.5 398,353.9 400,353.4 402,352.8 404,352.3 406,351.8 408,351.3 410,350.8 412,350.3 414,349.8 416,349.4 418,348.8 420,348.3 422,347.8 424,347.2 426,346.6 428,346.0 430,345.3 432,344.7 434,344.1 436,343.5 438,342.9 440,342.4 442,342.0 444,341.5 446,341.2 448,340.8 450,340.5 452,340.2 454,339.9 456,339.6 458,339.3 460,339.0 462,338.7 464,338.4 466,338.2 468,337.9 470,337.7 472,337.5 474,337.4 476,337.3 478,337.4 480,337.6 482,338.0 484,338.4 486,338.9 488,339.5 490,340.1 492,340.8 494,341.5 496,342.1 498,342.8 500,343.5 502,344.1 504,344.8 506,345.5 508,346.1 510,346.7 512,347.4 514,348.0 516,348.6 518,349.2 520,349.8 522,350.3 524,350.8 526,351.4 528,351.9 530,352.4 532,352.9 534,353.4 536,353.9 538,354.3 540,354.7 542,355.1 544,355.5 546,355.9 548,356.2 550,356.6 552,357.0 554,357.3 556,357.5 558,357.6 560,357.6 562,357.5 564,357.4 566,357.2 568,357.0 570,356.7 572,356.5 574,356.3 576,356.0 578,355.7 580,355.5 582,355.1 584,354.8 586,354.5 588,354.2 590,353.8 592,353.4 594,352.9 596,352.4 598,351.9 600,351.2 602,350.6 604,349.7 606,348.7 608,347.5 610,346.0 612,344.3 614,342.4 616,340.3 618,338.3 620,336.4 622,334.8 624,333.4 626,332.4 628,331.5 630,330.9 632,330.4 634,329.9 636,329.4 638,329.0 640,328.7 642,328.4 644,328.0 646,327.7 648,327.4 650,327.1 652,326.8 654,326.5 656,326.2 658,326.0 660,325.7 662,325.4 664,325.1 666,324.8 668,324.5 670,324.4 672,324.3 674,324.3 676,324.3 678,324.4 680,324.4 682,324.5 684,324.6 686,324.7 688,324.7 690,324.8 692,324.8 694,324.8 696,324.8 698,324.8 700,324.7 702,324.7 704,324.7 706,324.7 708,324.6 710,324.6 712,324.6 714,324.7 716,324.8 718,324.8 720,324.9 722,325.0 724,325.0 726,325.1 728,325.2 730,325.3 732,325.3 734,325.3 736,325.4 738,325.4 740,325.4 742,325.5 744,325.7 746,326.1 748,326.7 750,327.5 752,328.4 754,329.0 756,329.6 758,330.1 760,330.7 762,331.3 764,332.0 766,332.7 768,333.3 770,334.0 772,334.7 774,335.4 776,336.1 778,336.9 780,337.6 782,338.4 784,339.2 786,339.9 788,340.7 790,341.5 792,342.2 794,343.0 796,343.7 798,344.4 800,345.1 802,345.8 804,346.5 806,347.1 808,347.7 810,348.4 812,349.0 814,349.6 816,350.2 818,350.6 820,350.9" fill="none" stroke="#141490" stroke-width="1"/><polyline points="284,411.7 286,411.0 288,410.2 290,409.1 292,407.9 294,406.7 296,405.4 298,404.1 300,402.9 302,401.7 304,400.4 306,399.3 308,398.1 310,396.9 312,395.8 314,394.6 316,393.5 318,392.5 320,391.4 322,390.4 324,389.3 326,388.2 328,387.2 330,386.1 332,385.0 334,384.0 336,383.0 338,382.0 340,381.0 342,380.0 344,379.1 346,378.4 348,377.7 350,376.8 352,375.9 354,375.0 356,374.0 358,373.0 360,372.0 362,371.0 364,370.0 366,369.1 368,368.1 370,367.2 372,366.2 374,365.3 376,364.4 378,363.5 380,362.6 382,361.9 384,361.1 386,360.5 388,359.9 390,359.3 392,358.6 394,357.9 396,357.3 398,356.6 400,355.9 402,355.3 404,354.6 406,354.0 408,353.4 410,352.8 412,352.2 414,351.7 416,351.1 418,350.5 420,349.8 422,349.2 424,348.6 426,347.9 428,347.2 430,346.6 432,345.9 434,345.2 436,344.6 438,344.0 440,343.5 442,343.0 444,342.6 446,342.2 448,341.8 450,341.5 452,341.2 454,340.9 456,340.6 458,340.3 460,340.0 462,339.7 464,339.4 466,339.1 468,338.9 470,338.6 472,338.4 474,338.3 476,338.2 478,338.3 480,338.5 482,338.8 484,339.2 486,339.7 488,340.2 490,340.8 492,341.5 494,342.1 496,342.8 498,343.4 500,344.1 502,344.8 504,345.4 506,346.1 508,346.7 510,347.3 512,348.0 514,348.6 516,349.2 518,349.8 520,350.4 522,350.9 524,351.5 526,352.0 528,352.5 530,353.0 532,353.5 534,354.0 536,354.5 538,354.9 540,355.3 542,355.7 544,356.1 546,356.5 548,356.8 550,357.2 552,357.5 554,357.8 556,358.0 558,358.1 560,358.1 562,358.0 564,357.9 566,357.7 568,357.4 570,357.2 572,356.9 574,356.7 576,356.4 578,356.1 580,355.8 582,355.5 584,355.2 586,354.9 588,354.6 590,354.2 592,353.8 594,353.3 596,352.8 598,352.3 600,351.7 602,351.0 604,350.2 606,349.2 608,348.0 610,346.6 612,344.9 614,343.0 616,341.1 618,339.1 620,337.2 622,335.7 624,334.4 626,333.3 628,332.5 630,331.9 632,331.3 634,330.9 636,330.4 638,330.0 640,329.7 642,329.4 644,329.0 646,328.7 648,328.4 650,328.0 652,327.7 654,327.4 656,327.1 658,326.8 660,326.5 662,326.1 664,325.8 666,325.5 668,325.3 670,325.1 672,325.0 674,325.0 676,325.0 678,325.1 680,325.2 682,325.3 684,325.4 686,325.5 688,325.5 690,325.6 692,325.7 694,325.7 696,325.8 698,325.8 700,325.8 702,325.8 704,325.8 706,325.8 708,325.7 710,325.7 712,325.7 714,325.8 716,325.9 718,325.9 720,325.9 722,326.0 724,326.0 726,326.1 728,326.2 730,326.2 732,326.2 734,326.2 736,326.3 738,326.3 740,326.3 742,326.4 744,326.5 746,326.9 748,327.3 750,327.9 752,328.6 754,329.2 756,329.7 758,330.3 760,330.9 762,331.5 764,332.2 766,332.9 768,333.6 770,334.2 772,334.9 774,335.6 776,336.3 778,337.1 780,337.8 782,338.6 784,339.3 786,340.1 788,340.9 790,341.6 792,342.3 794,343.1 796,343.8 798,344.5 800,345.2 802,345.9 804,346.6 806,347.3 808,347.9 810,348.6 812,349.2 814,349.8 816,350.3 818,350.8 820,351.1" fill="none" stroke="#141490" stroke-width="1"/><polyline points="284,415.7 286,415.0 288,414.2 290,413.2 292,412.1 294,411.0 296,409.8 298,408.6 300,407.4 302,406.2 304,405.1 306,403.9 308,402.8 310,401.6 312,400.5 314,399.3 316,398.2 318,397.1 320,396.0 322,394.9 324,393.8 326,392.7 328,391.6 330,390.5 332,389.5 334,388.4 336,387.4 338,386.3 340,385.3 342,384.4 344,383.4 346,382.6 348,381.7 350,380.8 352,379.9 354,378.9 356,378.0 358,377.0 360,376.0 362,375.0 364,374.1 366,373.1 368,372.2 370,371.2 372,370.3 374,369.3 376,368.4 378,367.5 380,366.6 382,365.7 384,364.9 386,364.1 388,363.3 390,362.5 392,361.7 394,360.9 396,360.1 398,359.3 400,358.5 402,357.7 404,357.0 406,356.3 408,355.5 410,354.8 412,354.2 414,353.5 416,352.8 418,352.1 420,351.4 422,350.7 424,349.9 426,349.2 428,348.5 430,347.8 432,347.0 434,346.4 436,345.7 438,345.1 440,344.5 442,344.0 444,343.6 446,343.2 448,342.8 450,342.5 452,342.2 454,341.9 456,341.6 458,341.3 460,341.0 462,340.7 464,340.4 466,340.1 468,339.8 470,339.6 472,339.4 474,339.2 476,339.1 478,339.1 480,339.3 482,339.5 484,339.9 486,340.4 488,340.9 490,341.5 492,342.2 494,342.8 496,343.4 498,344.1 500,344.7 502,345.4 504,346.0 506,346.7 508,347.3 510,347.9 512,348.6 514,349.2 516,349.8 518,350.4 520,351.0 522,351.6 524,352.1 526,352.6 528,353.1 530,353.6 532,354.1 534,354.5 536,355.0 538,355.4 540,355.8 542,356.2 544,356.6 546,357.0 548,357.4 550,357.8 552,358.1 554,358.4 556,358.6 558,358.6 560,358.6 562,358.5 564,358.4 566,358.1 568,357.9 570,357.6 572,357.4 574,357.1 576,356.8 578,356.5 580,356.2 582,355.9 584,355.6 586,355.3 588,354.9 590,354.6 592,354.1 594,353.7 596,353.2 598,352.7 600,352.1 602,351.4 604,350.6 606,349.7 608,348.5 610,347.1 612,345.5 614,343.7 616,341.8 618,339.9 620,338.1 622,336.6 624,335.3 626,334.3 628,333.5 630,332.8 632,332.3 634,331.8 636,331.4 638,331.1 640,330.7 642,330.3 644,330.0 646,329.6 648,329.3 650,328.9 652,328.6 654,328.3 656,327.9 658,327.6 660,327.3 662,326.9 664,326.6 666,326.3 668,326.1 670,325.9 672,325.8 674,325.8 676,325.8 678,325.8 680,325.9 682,326.0 684,326.1 686,326.2 688,326.4 690,326.5 692,326.6 694,326.6 696,326.7 698,326.8 700,326.8 702,326.8 704,326.9 706,326.9 708,326.9 710,326.9 712,326.9 714,326.9 716,326.9 718,326.9 720,327.0 722,327.0 724,327.0 726,327.0 728,327.1 730,327.1 732,327.1 734,327.1 736,327.1 738,327.1 740,327.2 742,327.2 744,327.3 746,327.6 748,327.9 750,328.3 752,328.9 754,329.3 756,329.9 758,330.4 760,331.0 762,331.7 764,332.4 766,333.1 768,333.8 770,334.5 772,335.2 774,335.9 776,336.6 778,337.3 780,338.0 782,338.8 784,339.5 786,340.3 788,341.0 790,341.7 792,342.5 794,343.2 796,343.9 798,344.6 800,345.4 802,346.1 804,346.8 806,347.5 808,348.1 810,348.8 812,349.4 814,350.0 816,350.5 818,351.0 820,351.3" fill="none" stroke="#141490" stroke-width="1"/></g><rect x="283" y="284" width="672" height="6" fill="#f08888"/><rect x="283" y="285" width="672" height="4" fill="#ff0000"/><rect x="283" y="309" width="672" height="4" fill="#add8e6"/><polyline points="284,338.4 286,337.2 288,335.7 290,333.9 292,332.0 294,330.0 296,328.1 298,326.3 300,324.5 302,322.9 304,321.3 306,319.8 308,318.3 310,316.9 312,315.5 314,314.4 316,313.4 318,312.7 320,312.1 322,311.6 324,311.2 326,310.8 328,310.4 330,310.0 332,309.6 334,309.2 336,308.8 338,308.4 340,308.0 342,307.6 344,307.3 346,307.0 348,306.7 350,306.4 352,306.2 354,305.9 356,305.7 358,305.4 360,305.0 362,304.6 364,304.0 366,303.3 368,302.6 370,301.8 372,301.0 374,300.2 376,299.5 378,298.8 380,298.4 382,298.2 384,298.4 386,298.8 388,299.4 390,300.2 392,300.9 394,301.7 396,302.5 398,303.3 400,304.1 402,304.9 404,305.7 406,306.5 408,307.2 410,308.0 412,308.8 414,309.5 416,310.2 418,310.9 420,311.5 422,312.1 424,312.7 426,313.3 428,313.9 430,314.5 432,315.2 434,315.8 436,316.4 438,317.0 440,317.6 442,318.1 444,318.7 446,319.1 448,319.4 450,319.6 452,319.6 454,319.6 456,319.5 458,319.4 460,319.3 462,319.2 464,319.0 466,318.9 468,318.8 470,318.7 472,318.6 474,318.4 476,318.4 478,318.4 480,318.5 482,318.7 484,319.1 486,319.5 488,320.1 490,320.6 492,321.2 494,321.8 496,322.4 498,323.0 500,323.6 502,324.1 504,324.7 506,325.3 508,325.9 510,326.5 512,327.1 514,327.7 516,328.3 518,328.9 520,329.7 522,330.5 524,331.4 526,332.5 528,333.7 530,334.9 532,336.1 534,337.3 536,338.5 538,339.7 540,340.9 542,342.1 544,343.3 546,344.5 548,345.8 550,347.0 552,348.3 554,349.6 556,350.9 558,352.1 560,353.0 562,353.5 564,353.7 566,353.6 568,353.4 570,353.0 572,352.4 574,351.7 576,350.8 578,349.9 580,348.9 582,347.9 584,346.9 586,345.9 588,344.9 590,343.8 592,342.8 594,341.8 596,340.7 598,339.6 600,338.3 602,336.8 604,335.2 606,333.4 608,331.4 610,329.5 612,327.5 614,325.5 616,323.5 618,321.4 620,319.4 622,317.4 624,315.4 626,313.4 628,311.5 630,309.6 632,307.7 634,306.0 636,304.4 638,302.8 640,301.3 642,299.8 644,298.3 646,296.8 648,295.4 650,294.1 652,293.1 654,292.4 656,292.0 658,291.9 660,292.0 662,292.3 664,292.8 666,293.4 668,294.1 670,294.9 672,295.7 674,296.5 676,297.3 678,298.2 680,299.0 682,299.8 684,300.5 686,301.1 688,301.6 690,301.7 692,301.7 694,301.5 696,301.2 698,300.8 700,300.5 702,300.1 704,299.8 706,299.4 708,299.1 710,298.8 712,298.5 714,298.2 716,297.9 718,297.6 720,297.3 722,297.1 724,297.0 726,297.1 728,297.3 730,297.7 732,298.1 734,298.7 736,299.3 738,300.0 740,300.8 742,301.6 744,302.6 746,303.7 748,304.8 750,306.0 752,307.3 754,308.8 756,310.4 758,312.2 760,314.2 762,316.2 764,318.3 766,320.4 768,322.5 770,324.6 772,326.6 774,328.6 776,330.4 778,332.0 780,333.3 782,334.4 784,335.4 786,336.3 788,337.1 790,337.9 792,338.7 794,339.4 796,339.9 798,340.2 800,340.0 802,339.4 804,338.6 806,338.1 808,337.9 810,338.1 812,338.6 814,339.2 816,339.9 818,340.4 820,340.7" fill="none" stroke="#000" stroke-width="2"/><polyline points="284,366.6 286,365.4 288,364.0 290,362.3 292,360.6 294,358.7 296,356.9 298,355.1 300,353.3 302,351.5 304,349.7 306,348.0 308,346.2 310,344.5 312,343.0 314,341.6 316,340.4 318,339.4 320,338.6 322,337.9 324,337.3 326,336.7 328,336.1 330,335.5 332,334.8 334,334.2 336,333.6 338,333.0 340,332.4 342,331.8 344,331.2 346,330.6 348,329.9 350,329.3 352,328.6 354,327.9 356,327.2 358,326.5 360,325.8 362,325.1 364,324.4 366,323.6 368,322.9 370,322.2 372,321.5 374,320.8 376,320.2 378,319.7 380,319.3 382,319.2 384,319.5 386,320.0 388,320.7 390,321.5 392,322.4 394,323.2 396,324.1 398,325.0 400,325.9 402,326.7 404,327.6 406,328.5 408,329.3 410,330.2 412,331.1 414,331.9 416,332.8 418,333.7 420,334.5 422,335.3 424,336.1 426,336.8 428,337.2 430,337.5 432,337.6 434,337.6 436,337.5 438,337.4 440,337.3 442,337.2 444,337.1 446,337.0 448,336.9 450,336.8 452,336.6 454,336.5 456,336.4 458,336.3 460,336.2 462,336.1 464,336.0 466,335.8 468,335.7 470,335.6 472,335.5 474,335.4 476,335.4 478,335.4 480,335.6 482,335.9 484,336.4 486,337.1 488,337.8 490,338.6 492,339.3 494,340.1 496,340.9 498,341.7 500,342.5 502,343.3 504,344.1 506,344.9 508,345.6 510,346.5 512,347.3 514,348.2 516,349.1 518,350.1 520,351.2 522,352.2 524,353.2 526,354.3 528,355.3 530,356.4 532,357.4 534,358.5 536,359.5 538,360.6 540,361.6 542,362.7 544,363.7 546,364.8 548,365.8 550,366.8 552,367.8 554,368.7 556,369.4 558,369.8 560,370.0 562,369.9 564,369.6 566,369.1 568,368.6 570,368.0 572,367.4 574,366.8 576,366.1 578,365.3 580,364.3 582,363.1 584,361.7 586,360.1 588,358.5 590,356.8 592,355.1 594,353.3 596,351.6 598,349.9 600,348.2 602,346.4 604,344.7 606,343.0 608,341.3 610,339.7 612,338.1 614,336.6 616,335.2 618,333.8 620,332.5 622,331.1 624,329.8 626,328.4 628,327.1 630,325.7 632,324.4 634,323.1 636,321.7 638,320.5 640,319.3 642,318.2 644,317.4 646,316.7 648,316.3 650,316.0 652,316.0 654,316.3 656,316.8 658,317.6 660,318.6 662,319.6 664,320.7 666,321.7 668,322.8 670,323.9 672,324.9 674,326.0 676,327.0 678,328.1 680,329.0 682,329.9 684,330.5 686,330.9 688,331.0 690,331.0 692,330.8 694,330.7 696,330.5 698,330.3 700,330.1 702,330.0 704,330.0 706,330.0 708,330.1 710,330.3 712,330.5 714,330.8 716,331.0 718,331.3 720,331.6 722,331.8 724,332.1 726,332.3 728,332.6 730,332.9 732,333.1 734,333.4 736,333.6 738,333.9 740,334.1 742,334.3 744,334.6 746,334.8 748,335.1 750,335.5 752,336.2 754,337.3 756,338.9 758,341.0 760,343.5 762,346.3 764,349.2 766,352.2 768,355.1 770,358.1 772,361.0 774,363.7 776,366.2 778,368.4 780,370.1 782,371.5 784,372.6 786,373.6 788,374.5 790,375.5 792,376.4 794,377.2 796,378.1 798,378.9 800,379.6 802,380.1 804,380.6 806,381.0 808,381.3 810,381.7 812,382.0 814,382.3 816,382.5 818,382.7 820,382.9" fill="none" stroke="#000" stroke-width="2"/><polyline points="284,334.4 286,333.2 288,331.7 290,329.9 292,327.9 294,325.9 296,323.8 298,321.5 300,319.1 302,316.5 304,313.7 306,310.9 308,308.1 310,305.3 312,302.7 314,300.3 316,298.2 318,296.4 320,294.8 322,293.3 324,291.9 326,290.6 328,289.2 330,287.9 332,286.7 334,285.5 336,284.4 338,283.3 340,282.4 342,281.5 344,280.8 346,280.2 348,279.7 350,279.2 352,278.8 354,278.4 356,277.9 358,277.5 360,277.1 362,276.7 364,276.4 366,276.0 368,275.7 370,275.4 372,275.1 374,274.8 376,274.5 378,274.2 380,274.0 382,273.8" fill="none" stroke="#4682b4" stroke-width="2"/><polyline points="382,273.8 384,273.9 386,274.2 388,274.9 390,275.8 392,277.0 394,278.2 396,279.7 398,281.3 400,283.3 402,285.6 404,288.1 406,290.9 408,293.7 410,296.5 412,299.3 414,301.8 416,304.2 418,306.3 420,308.3 422,310.1 424,311.9 426,313.6 428,315.4 430,317.1 432,318.8 434,320.6 436,322.2 438,323.8 440,325.3 442,326.5 444,327.4 446,328.1 448,328.6 450,329.1 452,329.5 454,329.9 456,330.2 458,330.6 460,331.0 462,331.4 464,331.8 466,332.2 468,332.6 470,333.0 472,333.4 474,333.8 476,334.2 478,334.6 480,335.0 482,335.3 484,335.7 486,336.2 488,336.6 490,337.2 492,338.0 494,339.1 496,340.3 498,341.8 500,343.3 502,344.9 504,346.6 506,348.2 508,349.9 510,351.5 512,353.1 514,354.6 516,356.1 518,357.6 520,359.1 522,360.6 524,362.0 526,363.5 528,365.0 530,366.4 532,367.9 534,369.4 536,370.8 538,372.2 540,373.5 542,374.6 544,375.7 546,376.6 548,377.4 550,378.2 552,379.0 554,379.8 556,380.6 558,381.3 560,382.1 562,382.9 564,383.6 566,384.4 568,384.9 570,385.3" fill="none" stroke="#f07860" stroke-width="2"/><polyline points="570,385.3 572,385.3 574,385.0 576,384.2 578,383.1 580,381.8 582,380.5 584,379.1 586,377.7 588,376.1 590,374.5 592,372.8 594,370.9 596,369.0 598,367.0 600,365.0 602,363.0 604,361.0 606,358.9 608,356.8 610,354.6 612,352.2 614,349.8 616,347.2 618,344.7 620,342.0 622,339.2 624,336.2 626,333.1 628,329.7 630,326.3 632,322.8 634,319.3 636,315.9 638,312.6 640,309.4 642,306.5 644,303.8 646,301.5 648,299.6 650,298.1 652,296.8 654,295.6 656,294.5 658,293.4 660,292.3 662,291.4 664,290.6 666,289.9 668,289.3 670,288.9 672,288.5 674,288.1 676,287.7 678,287.3 680,286.9 682,286.5 684,286.2 686,285.9 688,285.7 690,285.6" fill="none" stroke="#4682b4" stroke-width="2"/><polyline points="690,285.6 692,285.7 694,285.9 696,286.2 698,286.5 700,286.9 702,287.2 704,287.6 706,288.0 708,288.4 710,288.8 712,289.1 714,289.5 716,289.9 718,290.3 720,290.7 722,291.2 724,291.7 726,292.2 728,292.8 730,293.4 732,294.0 734,294.6 736,295.2 738,295.8 740,296.7 742,297.8 744,299.2 746,301.2 748,303.5 750,306.2 752,309.0 754,312.1 756,315.3 758,318.7 760,322.1 762,325.7 764,329.2 766,332.6 768,336.0 770,339.2 772,342.4 774,345.4 776,348.2 778,350.7 780,352.6" fill="none" stroke="#f07860" stroke-width="2"/><line x1="284.5" y1="293" x2="284.5" y2="313" stroke="#000"/><rect x="283.3" y="300.3" width="2.4" height="6.4" fill="#2f6f4a" stroke="#000" stroke-width="0.6"/><line x1="288.5" y1="299" x2="288.5" y2="322" stroke="#000"/><rect x="287.3" y="307.3" width="2.4" height="6.4" fill="#8b1c1c" stroke="#000" stroke-width="0.6"/><line x1="291.5" y1="272" x2="291.5" y2="309" stroke="#000"/><rect x="290.3" y="277.3" width="2.4" height="29.4" fill="#2f6f4a" stroke="#000" stroke-width="0.6"/><line x1="295.5" y1="255" x2="295.5" y2="291" stroke="#000"/><rect x="294.3" y="269.3" width="2.4" height="7.4" fill="#8b1c1c" stroke="#000" stroke-width="0.6"/><line x1="299.5" y1="255" x2="299.5" y2="277" stroke="#000"/><rect x="298.3" y="262.3" width="2.4" height="7.4" fill="#2f6f4a" stroke="#000" stroke-width="0.6"/><line x1="303.5" y1="255" x2="303.5" y2="272" stroke="#000"/><rect x="302.3" y="256.3" width="2.4" height="12.4" fill="#8b1c1c" stroke="#000" stroke-width="0.6"/><line x1="307.5" y1="262" x2="307.5" y2="279" stroke="#000"/><rect x="306.3" y="270.3" width="2.4" height="6.4" fill="#2f6f4a" stroke="#000" stroke-width="0.6"/><line x1="311.5" y1="262" x2="311.5" y2="284" stroke="#000"/><rect x="310.3" y="274.3" width="2.4" height="3.4" fill="#2f6f4a" stroke="#000" stroke-width="0.6"/><line x1="315.5" y1="280" x2="315.5" y2="313" stroke="#000"/><rect x="314.3" y="285.3" width="2.4" height="14.4" fill="#8b1c1c" stroke="#000" stroke-width="0.6"/><line x1="318.5" y1="292" x2="318.5" y2="307" stroke="#000"/><rect x="317.3" y="299.3" width="2.4" height="6.4" fill="#2f6f4a" stroke="#000" stroke-width="0.6"/><line x1="322.5" y1="295" x2="322.5" y2="322" stroke="#000"/><rect x="321.3" y="300.3" width="2.4" height="3.4" fill="#2f6f4a" stroke="#000" stroke-width="0.6"/><line x1="326.5" y1="291" x2="326.5" y2="315" stroke="#000"/><rect x="325.3" y="292.3" width="2.4" height="12.4" fill="#2f6f4a" stroke="#000" stroke-width="0.6"/><line x1="330.5" y1="291" x2="330.5" y2="315" stroke="#000"/><rect x="329.3" y="296.3" width="2.4" height="8.4" fill="#8b1c1c" stroke="#000" stroke-width="0.6"/><line x1="334.5" y1="291" x2="334.5" y2="315" stroke="#000"/><rect x="333.3" y="301.3" width="2.4" height="3.4" fill="#2f6f4a" stroke="#000" stroke-width="0.6"/><line x1="338.5" y1="282" x2="338.5" y2="299" stroke="#000"/><rect x="337.3" y="284.3" width="2.4" height="6.4" fill="#2f6f4a" stroke="#000" stroke-width="0.6"/><line x1="341.5" y1="282" x2="341.5" y2="332" stroke="#000"/><rect x="340.3" y="285.3" width="2.4" height="42.4" fill="#8b1c1c" stroke="#000" stroke-width="0.6"/><line x1="345.5" y1="321" x2="345.5" y2="375" stroke="#000"/><rect x="344.3" y="333.3" width="2.4" height="2.4" fill="#8b1c1c" stroke="#000" stroke-width="0.6"/><line x1="349.5" y1="322" x2="349.5" y2="342" stroke="#000"/><rect x="348.3" y="330.3" width="2.4" height="3.4" fill="#2f6f4a" stroke="#000" stroke-width="0.6"/><line x1="353.5" y1="291" x2="353.5" y2="328" stroke="#000"/><rect x="352.3" y="299.3" width="2.4" height="26.4" fill="#2f6f4a" stroke="#000" stroke-width="0.6"/><line x1="357.5" y1="276" x2="357.5" y2="305" stroke="#000"/><rect x="356.3" y="278.3" width="2.4" height="11.4" fill="#2f6f4a" stroke="#000" stroke-width="0.6"/><line x1="361.5" y1="276" x2="361.5" y2="307" stroke="#000"/><rect x="360.3" y="277.3" width="2.4" height="19.4" fill="#2f6f4a" stroke="#000" stroke-width="0.6"/><line x1="365.5" y1="268" x2="365.5" y2="299" stroke="#000"/><rect x="364.3" y="277.3" width="2.4" height="13.4" fill="#8b1c1c" stroke="#000" stroke-width="0.6"/><line x1="369.5" y1="280" x2="369.5" y2="300" stroke="#000"/><rect x="368.3" y="285.3" width="2.4" height="4.4" fill="#2f6f4a" stroke="#000" stroke-width="0.6"/><line x1="373.5" y1="277" x2="373.5" y2="295" stroke="#000"/><rect x="372.3" y="284.3" width="2.4" height="7.4" fill="#2f6f4a" stroke="#000" stroke-width="0.6"/><line x1="377.5" y1="270" x2="377.5" y2="288" stroke="#000"/><rect x="376.3" y="277.3" width="2.4" height="6.4" fill="#8b1c1c" stroke="#000" stroke-width="0.6"/><line x1="380.5" y1="284" x2="380.5" y2="326" stroke="#000"/><rect x="379.3" y="292.3" width="2.4" height="29.4" fill="#8b1c1c" stroke="#000" stroke-width="0.6"/><line x1="384.5" y1="307" x2="384.5" y2="344" stroke="#000"/><rect x="383.3" y="318.3" width="2.4" height="3.4" fill="#2f6f4a" stroke="#000" stroke-width="0.6"/><line x1="388.5" y1="305" x2="388.5" y2="330" stroke="#000"/><rect x="387.3" y="306.3" width="2.4" height="21.4" fill="#8b1c1c" stroke="#000" stroke-width="0.6"/><line x1="392.5" y1="328" x2="392.5" y2="344" stroke="#000"/><rect x="391.3" y="330.3" width="2.4" height="3.4" fill="#2f6f4a" stroke="#000" stroke-width="0.6"/><line x1="395.5" y1="326" x2="395.5" y2="351" stroke="#000"/><rect x="394.3" y="329.3" width="2.4" height="14.4" fill="#8b1c1c" stroke="#000" stroke-width="0.6"/><line x1="399.5" y1="328" x2="399.5" y2="348" stroke="#000"/><rect x="398.3" y="334.3" width="2.4" height="7.4" fill="#8b1c1c" stroke="#000" stroke-width="0.6"/><line x1="403.5" y1="332" x2="403.5" y2="344" stroke="#000"/><rect x="402.3" y="337.3" width="2.4" height="1.4" fill="#2f6f4a" stroke="#000" stroke-width="0.6"/><line x1="407.5" y1="330" x2="407.5" y2="374" stroke="#000"/><rect x="406.3" y="344.3" width="2.4" height="29.4" fill="#8b1c1c" stroke="#000" stroke-width="0.6"/><line x1="411.5" y1="351" x2="411.5" y2="374" stroke="#000"/><rect x="410.3" y="359.3" width="2.4" height="7.4" fill="#2f6f4a" stroke="#000" stroke-width="0.6"/><line x1="415.5" y1="344" x2="415.5" y2="367" stroke="#000"/><rect x="414.3" y="350.3" width="2.4" height="9.4" fill="#2f6f4a" stroke="#000" stroke-width="0.6"/><line x1="419.5" y1="344" x2="419.5" y2="367" stroke="#000"/><rect x="418.3" y="359.3" width="2.4" height="6.4" fill="#8b1c1c" stroke="#000" stroke-width="0.6"/><line x1="423.5" y1="344" x2="423.5" y2="373" stroke="#000"/><rect x="422.3" y="358.3" width="2.4" height="3.4" fill="#2f6f4a" stroke="#000" stroke-width="0.6"/><line x1="427.5" y1="344" x2="427.5" y2="367" stroke="#000"/><rect x="426.3" y="360.3" width="2.4" height="4.4" fill="#8b1c1c" stroke="#000" stroke-width="0.6"/><line x1="431.5" y1="344" x2="431.5" y2="361" stroke="#000"/><rect x="430.3" y="350.3" width="2.4" height="8.4" fill="#2f6f4a" stroke="#000" stroke-width="0.6"/><line x1="435.5" y1="328" x2="435.5" y2="344" stroke="#000"/><rect x="434.3" y="334.3" width="2.4" height="9.4" fill="#2f6f4a" stroke="#000" stroke-width="0.6"/><line x1="438.5" y1="328" x2="438.5" y2="344" stroke="#000"/><rect x="437.3" y="332.3" width="2.4" height="9.4" fill="#2f6f4a" stroke="#000" stroke-width="0.6"/><line x1="442.5" y1="328" x2="442.5" y2="344" stroke="#000"/><rect x="441.3" y="328.3" width="2.4" height="15.4" fill="#2f6f4a" stroke="#000" stroke-width="0.6"/><line x1="446.5" y1="314" x2="446.5" y2="332" stroke="#000"/><rect x="445.3" y="315.3" width="2.4" height="14.4" fill="#2f6f4a" stroke="#000" stroke-width="0.6"/><line x1="450.5" y1="314" x2="450.5" y2="322" stroke="#000"/><rect x="449.3" y="315.3" width="2.4" height="4.4" fill="#2f6f4a" stroke="#000" stroke-width="0.6"/><line x1="454.5" y1="299" x2="454.5" y2="317" stroke="#000"/><rect x="453.3" y="305.3" width="2.4" height="9.4" fill="#8b1c1c" stroke="#000" stroke-width="0.6"/><line x1="458.5" y1="314" x2="458.5" y2="345" stroke="#000"/><rect x="457.3" y="322.3" width="2.4" height="7.4" fill="#8b1c1c" stroke="#000" stroke-width="0.6"/><line x1="462.5" y1="326" x2="462.5" y2="336" stroke="#000"/><rect x="461.3" y="328.3" width="2.4" height="5.4" fill="#2f6f4a" stroke="#000" stroke-width="0.6"/><line x1="466.5" y1="322" x2="466.5" y2="338" stroke="#000"/><rect x="465.3" y="328.3" width="2.4" height="7.4" fill="#2f6f4a" stroke="#000" stroke-width="0.6"/><line x1="470.5" y1="314" x2="470.5" y2="330" stroke="#000"/><rect x="469.3" y="322.3" width="2.4" height="5.4" fill="#8b1c1c" stroke="#000" stroke-width="0.6"/><line x1="474.5" y1="316" x2="474.5" y2="330" stroke="#000"/><rect x="473.3" y="322.3" width="2.4" height="5.4" fill="#8b1c1c" stroke="#000" stroke-width="0.6"/><line x1="477.5" y1="299" x2="477.5" y2="330" stroke="#000"/><rect x="476.3" y="315.3" width="2.4" height="8.4" fill="#8b1c1c" stroke="#000" stroke-width="0.6"/><line x1="481.5" y1="312" x2="481.5" y2="330" stroke="#000"/><rect x="480.3" y="318.3" width="2.4" height="7.4" fill="#2f6f4a" stroke="#000" stroke-width="0.6"/><line x1="485.5" y1="322" x2="485.5" y2="346" stroke="#000"/><rect x="484.3" y="329.3" width="2.4" height="14.4" fill="#8b1c1c" stroke="#000" stroke-width="0.6"/><line x1="489.5" y1="325" x2="489.5" y2="350" stroke="#000"/><rect x="488.3" y="329.3" width="2.4" height="14.4" fill="#8b1c1c" stroke="#000" stroke-width="0.6"/><line x1="492.5" y1="335" x2="492.5" y2="370" stroke="#000"/><rect x="491.3" y="342.3" width="2.4" height="14.4" fill="#8b1c1c" stroke="#000" stroke-width="0.6"/><line x1="496.5" y1="345" x2="496.5" y2="378" stroke="#000"/><rect x="495.3" y="351.3" width="2.4" height="21.4" fill="#8b1c1c" stroke="#000" stroke-width="0.6"/><line x1="500.5" y1="345" x2="500.5" y2="366" stroke="#000"/><rect x="499.3" y="350.3" width="2.4" height="9.4" fill="#2f6f4a" stroke="#000" stroke-width="0.6"/><line x1="504.5" y1="350" x2="504.5" y2="378" stroke="#000"/><rect x="503.3" y="357.3" width="2.4" height="15.4" fill="#8b1c1c" stroke="#000" stroke-width="0.6"/><line x1="508.5" y1="365" x2="508.5" y2="395" stroke="#000"/><rect x="507.3" y="373.3" width="2.4" height="16.4" fill="#8b1c1c" stroke="#000" stroke-width="0.6"/><line x1="512.5" y1="370" x2="512.5" y2="398" stroke="#000"/><rect x="511.3" y="375.3" width="2.4" height="19.4" fill="#2f6f4a" stroke="#000" stroke-width="0.6"/><line x1="516.5" y1="360" x2="516.5" y2="392" stroke="#000"/><rect x="515.3" y="366.3" width="2.4" height="21.4" fill="#8b1c1c" stroke="#000" stroke-width="0.6"/><line x1="520.5" y1="366" x2="520.5" y2="384" stroke="#000"/><rect x="519.3" y="372.3" width="2.4" height="7.4" fill="#2f6f4a" stroke="#000" stroke-width="0.6"/><line x1="524.5" y1="366" x2="524.5" y2="386" stroke="#000"/><rect x="523.3" y="373.3" width="2.4" height="8.4" fill="#8b1c1c" stroke="#000" stroke-width="0.6"/><line x1="528.5" y1="368" x2="528.5" y2="386" stroke="#000"/><rect x="527.3" y="374.3" width="2.4" height="6.4" fill="#2f6f4a" stroke="#000" stroke-width="0.6"/><line x1="532.5" y1="380" x2="532.5" y2="410" stroke="#000"/><rect x="531.3" y="388.3" width="2.4" height="15.4" fill="#8b1c1c" stroke="#000" stroke-width="0.6"/><line x1="535.5" y1="386" x2="535.5" y2="417" stroke="#000"/><rect x="534.3" y="395.3" width="2.4" height="14.4" fill="#2f6f4a" stroke="#000" stroke-width="0.6"/><line x1="539.5" y1="378" x2="539.5" y2="400" stroke="#000"/><rect x="538.3" y="382.3" width="2.4" height="12.4" fill="#8b1c1c" stroke="#000" stroke-width="0.6"/><line x1="543.5" y1="378" x2="543.5" y2="398" stroke="#000"/><rect x="542.3" y="384.3" width="2.4" height="7.4" fill="#2f6f4a" stroke="#000" stroke-width="0.6"/><line x1="547.5" y1="375" x2="547.5" y2="400" stroke="#000"/><rect x="546.3" y="382.3" width="2.4" height="12.4" fill="#8b1c1c" stroke="#000" stroke-width="0.6"/><line x1="551.5" y1="378" x2="551.5" y2="398" stroke="#000"/><rect x="550.3" y="384.3" width="2.4" height="8.4" fill="#2f6f4a" stroke="#000" stroke-width="0.6"/><line x1="555.5" y1="372" x2="555.5" y2="402" stroke="#000"/><rect x="554.3" y="382.3" width="2.4" height="12.4" fill="#2f6f4a" stroke="#000" stroke-width="0.6"/><line x1="558.5" y1="360" x2="558.5" y2="386" stroke="#000"/><rect x="557.3" y="364.3" width="2.4" height="12.4" fill="#8b1c1c" stroke="#000" stroke-width="0.6"/><line x1="562.5" y1="358" x2="562.5" y2="380" stroke="#000"/><rect x="561.3" y="366.3" width="2.4" height="8.4" fill="#2f6f4a" stroke="#000" stroke-width="0.6"/><line x1="566.5" y1="358" x2="566.5" y2="382" stroke="#000"/><rect x="565.3" y="364.3" width="2.4" height="12.4" fill="#8b1c1c" stroke="#000" stroke-width="0.6"/><line x1="570.5" y1="344" x2="570.5" y2="366" stroke="#000"/><rect x="569.3" y="351.3" width="2.4" height="12.4" fill="#2f6f4a" stroke="#000" stroke-width="0.6"/><line x1="575.5" y1="330" x2="575.5" y2="356" stroke="#000"/><rect x="574.3" y="335.3" width="2.4" height="15.4" fill="#2f6f4a" stroke="#000" stroke-width="0.6"/><line x1="579.5" y1="328" x2="579.5" y2="354" stroke="#000"/><rect x="578.3" y="338.3" width="2.4" height="11.4" fill="#8b1c1c" stroke="#000" stroke-width="0.6"/><line x1="583.5" y1="324" x2="583.5" y2="350" stroke="#000"/><rect x="582.3" y="329.3" width="2.4" height="15.4" fill="#2f6f4a" stroke="#000" stroke-width="0.6"/><line x1="586.5" y1="316" x2="586.5" y2="335" stroke="#000"/><rect x="585.3" y="322.3" width="2.4" height="8.4" fill="#2f6f4a" stroke="#000" stroke-width="0.6"/><line x1="589.5" y1="292" x2="589.5" y2="320" stroke="#000"/><rect x="588.3" y="298.3" width="2.4" height="16.4" fill="#2f6f4a" stroke="#000" stroke-width="0.6"/><line x1="594.5" y1="278" x2="594.5" y2="310" stroke="#000"/><rect x="593.3" y="284.3" width="2.4" height="21.4" fill="#2f6f4a" stroke="#000" stroke-width="0.6"/><line x1="597.5" y1="284" x2="597.5" y2="303" stroke="#000"/><rect x="596.3" y="291.3" width="2.4" height="8.4" fill="#2f6f4a" stroke="#000" stroke-width="0.6"/><line x1="601.5" y1="262" x2="601.5" y2="290" stroke="#000"/><rect x="600.3" y="269.3" width="2.4" height="14.4" fill="#2f6f4a" stroke="#000" stroke-width="0.6"/><line x1="605.5" y1="255" x2="605.5" y2="275" stroke="#000"/><rect x="604.3" y="262.3" width="2.4" height="7.4" fill="#8b1c1c" stroke="#000" stroke-width="0.6"/><line x1="609.5" y1="255" x2="609.5" y2="282" stroke="#000"/><rect x="608.3" y="262.3" width="2.4" height="15.4" fill="#8b1c1c" stroke="#000" stroke-width="0.6"/><line x1="613.5" y1="262" x2="613.5" y2="305" stroke="#000"/><rect x="612.3" y="284.3" width="2.4" height="15.4" fill="#2f6f4a" stroke="#000" stroke-width="0.6"/><line x1="617.5" y1="252" x2="617.5" y2="295" stroke="#000"/><rect x="616.3" y="255.3" width="2.4" height="35.4" fill="#2f6f4a" stroke="#000" stroke-width="0.6"/><line x1="621.5" y1="255" x2="621.5" y2="276" stroke="#000"/><rect x="620.3" y="262.3" width="2.4" height="7.4" fill="#8b1c1c" stroke="#000" stroke-width="0.6"/><line x1="624.5" y1="262" x2="624.5" y2="282" stroke="#000"/><rect x="623.3" y="269.3" width="2.4" height="8.4" fill="#2f6f4a" stroke="#000" stroke-width="0.6"/><line x1="629.5" y1="252" x2="629.5" y2="268" stroke="#000"/><rect x="628.3" y="255.3" width="2.4" height="6.4" fill="#2f6f4a" stroke="#000" stroke-width="0.6"/><line x1="632.5" y1="250" x2="632.5" y2="262" stroke="#000"/><rect x="631.3" y="253.3" width="2.4" height="4.4" fill="#8b1c1c" stroke="#000" stroke-width="0.6"/><line x1="636.5" y1="250" x2="636.5" y2="310" stroke="#000"/><rect x="635.3" y="269.3" width="2.4" height="36.4" fill="#8b1c1c" stroke="#000" stroke-width="0.6"/><line x1="640.5" y1="262" x2="640.5" y2="316" stroke="#000"/><rect x="639.3" y="278.3" width="2.4" height="34.4" fill="#2f6f4a" stroke="#000" stroke-width="0.6"/><line x1="644.5" y1="252" x2="644.5" y2="290" stroke="#000"/><rect x="643.3" y="262.3" width="2.4" height="21.4" fill="#2f6f4a" stroke="#000" stroke-width="0.6"/><line x1="648.5" y1="252" x2="648.5" y2="282" stroke="#000"/><rect x="647.3" y="255.3" width="2.4" height="22.4" fill="#8b1c1c" stroke="#000" stroke-width="0.6"/><line x1="652.5" y1="262" x2="652.5" y2="312" stroke="#000"/><rect x="651.3" y="269.3" width="2.4" height="36.4" fill="#8b1c1c" stroke="#000" stroke-width="0.6"/><line x1="656.5" y1="295" x2="656.5" y2="333" stroke="#000"/><rect x="655.3" y="300.3" width="2.4" height="27.4" fill="#8b1c1c" stroke="#000" stroke-width="0.6"/><line x1="660.5" y1="308" x2="660.5" y2="356" stroke="#000"/><rect x="659.3" y="322.3" width="2.4" height="14.4" fill="#2f6f4a" stroke="#000" stroke-width="0.6"/><line x1="663.5" y1="300" x2="663.5" y2="345" stroke="#000"/><rect x="662.3" y="306.3" width="2.4" height="15.4" fill="#8b1c1c" stroke="#000" stroke-width="0.6"/><line x1="667.5" y1="298" x2="667.5" y2="340" stroke="#000"/><rect x="666.3" y="306.3" width="2.4" height="17.4" fill="#2f6f4a" stroke="#000" stroke-width="0.6"/><line x1="671.5" y1="300" x2="671.5" y2="332" stroke="#000"/><rect x="670.3" y="306.3" width="2.4" height="21.4" fill="#8b1c1c" stroke="#000" stroke-width="0.6"/><line x1="675.5" y1="308" x2="675.5" y2="338" stroke="#000"/><rect x="674.3" y="320.3" width="2.4" height="7.4" fill="#2f6f4a" stroke="#000" stroke-width="0.6"/><line x1="679.5" y1="315" x2="679.5" y2="340" stroke="#000"/><rect x="678.3" y="324.3" width="2.4" height="8.4" fill="#2f6f4a" stroke="#000" stroke-width="0.6"/><line x1="682.5" y1="325" x2="682.5" y2="350" stroke="#000"/><rect x="681.3" y="335.3" width="2.4" height="8.4" fill="#8b1c1c" stroke="#000" stroke-width="0.6"/><line x1="687.5" y1="332" x2="687.5" y2="380" stroke="#000"/><rect x="686.3" y="350.3" width="2.4" height="13.4" fill="#8b1c1c" stroke="#000" stroke-width="0.6"/><line x1="691.5" y1="335" x2="691.5" y2="365" stroke="#000"/><rect x="690.3" y="344.3" width="2.4" height="14.4" fill="#2f6f4a" stroke="#000" stroke-width="0.6"/><line x1="695.5" y1="296" x2="695.5" y2="352" stroke="#000"/><rect x="694.3" y="300.3" width="2.4" height="49.4" fill="#2f6f4a" stroke="#000" stroke-width="0.6"/><line x1="698.5" y1="262" x2="698.5" y2="332" stroke="#000"/><rect x="697.3" y="293.3" width="2.4" height="34.4" fill="#8b1c1c" stroke="#000" stroke-width="0.6"/><line x1="702.5" y1="290" x2="702.5" y2="326" stroke="#000"/><rect x="701.3" y="300.3" width="2.4" height="19.4" fill="#8b1c1c" stroke="#000" stroke-width="0.6"/><line x1="706.5" y1="262" x2="706.5" y2="310" stroke="#000"/><rect x="705.3" y="269.3" width="2.4" height="36.4" fill="#2f6f4a" stroke="#000" stroke-width="0.6"/><line x1="709.5" y1="255" x2="709.5" y2="300" stroke="#000"/><rect x="708.3" y="278.3" width="2.4" height="14.4" fill="#8b1c1c" stroke="#000" stroke-width="0.6"/><line x1="713.5" y1="282" x2="713.5" y2="310" stroke="#000"/><rect x="712.3" y="291.3" width="2.4" height="14.4" fill="#2f6f4a" stroke="#000" stroke-width="0.6"/><line x1="717.5" y1="275" x2="717.5" y2="330" stroke="#000"/><rect x="716.3" y="284.3" width="2.4" height="37.4" fill="#8b1c1c" stroke="#000" stroke-width="0.6"/><line x1="721.5" y1="300" x2="721.5" y2="330" stroke="#000"/><rect x="720.3" y="315.3" width="2.4" height="6.4" fill="#8b1c1c" stroke="#000" stroke-width="0.6"/><line x1="725.5" y1="300" x2="725.5" y2="340" stroke="#000"/><rect x="724.3" y="305.3" width="2.4" height="27.4" fill="#2f6f4a" stroke="#000" stroke-width="0.6"/><line x1="729.5" y1="310" x2="729.5" y2="345" stroke="#000"/><rect x="728.3" y="322.3" width="2.4" height="5.4" fill="#8b1c1c" stroke="#000" stroke-width="0.6"/><line x1="733.5" y1="306" x2="733.5" y2="338" stroke="#000"/><rect x="732.3" y="318.3" width="2.4" height="11.4" fill="#2f6f4a" stroke="#000" stroke-width="0.6"/><line x1="737.5" y1="300" x2="737.5" y2="340" stroke="#000"/><rect x="736.3" y="306.3" width="2.4" height="26.4" fill="#2f6f4a" stroke="#000" stroke-width="0.6"/><line x1="741.5" y1="306" x2="741.5" y2="334" stroke="#000"/><rect x="740.3" y="315.3" width="2.4" height="6.4" fill="#8b1c1c" stroke="#000" stroke-width="0.6"/><line x1="744.5" y1="310" x2="744.5" y2="336" stroke="#000"/><rect x="743.3" y="322.3" width="2.4" height="5.4" fill="#2f6f4a" stroke="#000" stroke-width="0.6"/><line x1="748.5" y1="322" x2="748.5" y2="392" stroke="#000"/><rect x="747.3" y="328.3" width="2.4" height="59.4" fill="#8b1c1c" stroke="#000" stroke-width="0.6"/><line x1="752.5" y1="384" x2="752.5" y2="445" stroke="#000"/><rect x="751.3" y="388.3" width="2.4" height="51.4" fill="#8b1c1c" stroke="#000" stroke-width="0.6"/><line x1="756.5" y1="400" x2="756.5" y2="469" stroke="#000"/><rect x="755.3" y="420.3" width="2.4" height="11.4" fill="#2f6f4a" stroke="#000" stroke-width="0.6"/><line x1="760.5" y1="384" x2="760.5" y2="444" stroke="#000"/><rect x="759.3" y="388.3" width="2.4" height="51.4" fill="#2f6f4a" stroke="#000" stroke-width="0.6"/><line x1="764.5" y1="340" x2="764.5" y2="400" stroke="#000"/><rect x="763.3" y="350.3" width="2.4" height="44.4" fill="#8b1c1c" stroke="#000" stroke-width="0.6"/><line x1="768.5" y1="380" x2="768.5" y2="414" stroke="#000"/><rect x="767.3" y="395.3" width="2.4" height="14.4" fill="#2f6f4a" stroke="#000" stroke-width="0.6"/><line x1="771.5" y1="370" x2="771.5" y2="400" stroke="#000"/><rect x="770.3" y="380.3" width="2.4" height="14.4" fill="#8b1c1c" stroke="#000" stroke-width="0.6"/><line x1="775.5" y1="362" x2="775.5" y2="405" stroke="#000"/><rect x="774.3" y="375.3" width="2.4" height="14.4" fill="#8b1c1c" stroke="#000" stroke-width="0.6"/><line x1="779.5" y1="372" x2="779.5" y2="400" stroke="#000"/><rect x="778.3" y="385.3" width="2.4" height="9.4" fill="#2f6f4a" stroke="#000" stroke-width="0.6"/><line x1="783.5" y1="378" x2="783.5" y2="414" stroke="#000"/><rect x="782.3" y="390.3" width="2.4" height="19.4" fill="#8b1c1c" stroke="#000" stroke-width="0.6"/><line x1="787.5" y1="390" x2="787.5" y2="422" stroke="#000"/><rect x="786.3" y="403.3" width="2.4" height="14.4" fill="#2f6f4a" stroke="#000" stroke-width="0.6"/><line x1="791.5" y1="380" x2="791.5" y2="410" stroke="#000"/><rect x="790.3" y="395.3" width="2.4" height="9.4" fill="#8b1c1c" stroke="#000" stroke-width="0.6"/><line x1="795.5" y1="378" x2="795.5" y2="414" stroke="#000"/><rect x="794.3" y="395.3" width="2.4" height="14.4" fill="#2f6f4a" stroke="#000" stroke-width="0.6"/><line x1="799.5" y1="362" x2="799.5" y2="404" stroke="#000"/><rect x="798.3" y="372.3" width="2.4" height="27.4" fill="#8b1c1c" stroke="#000" stroke-width="0.6"/><line x1="803.5" y1="376" x2="803.5" y2="404" stroke="#000"/><rect x="802.3" y="385.3" width="2.4" height="14.4" fill="#8b1c1c" stroke="#000" stroke-width="0.6"/><line x1="806.5" y1="370" x2="806.5" y2="408" stroke="#000"/><rect x="805.3" y="388.3" width="2.4" height="14.4" fill="#2f6f4a" stroke="#000" stroke-width="0.6"/><line x1="810.5" y1="376" x2="810.5" y2="400" stroke="#000"/><rect x="809.3" y="388.3" width="2.4" height="6.4" fill="#2f6f4a" stroke="#000" stroke-width="0.6"/><line x1="814.5" y1="355" x2="814.5" y2="388" stroke="#000"/><rect x="813.3" y="365.3" width="2.4" height="19.4" fill="#2f6f4a" stroke="#000" stroke-width="0.6"/><line x1="818.5" y1="362" x2="818.5" y2="386" stroke="#000"/><rect x="817.3" y="373.3" width="2.4" height="7.4" fill="#8b1c1c" stroke="#000" stroke-width="0.6"/><polygon points="314.9,267.7 320.6,267.7 320.6,281.2 326.7,275.3 327.3,275.3 327.3,279.5 318.0,285.0 308.7,279.5 308.7,275.3 309.3,275.3 314.9,281.2" fill="#ff0000"/><polygon points="338.9,262.7 344.6,262.7 344.6,276.2 350.7,270.3 351.3,270.3 351.3,274.5 342.0,280.0 332.7,274.5 332.7,270.3 333.3,270.3 338.9,276.2" fill="#ff0000"/><polygon points="375.9,262.7 381.6,262.7 381.6,276.2 387.7,270.3 388.3,270.3 388.3,274.5 379.0,280.0 369.7,274.5 369.7,270.3 370.3,270.3 375.9,276.2" fill="#ff0000"/><polygon points="480.9,291.7 486.6,291.7 486.6,305.2 492.7,299.3 493.3,299.3 493.3,303.5 484.0,309.0 474.7,303.5 474.7,299.3 475.3,299.3 480.9,305.2" fill="#ff0000"/><polygon points="631.4,239.7 637.1,239.7 637.1,253.2 643.2,247.3 643.8,247.3 643.8,251.5 634.5,257.0 625.2,251.5 625.2,247.3 625.8,247.3 631.4,253.2" fill="#ff0000"/><polygon points="647.9,236.2 653.6,236.2 653.6,249.7 659.7,243.8 660.3,243.8 660.3,248.0 651.0,253.5 641.7,248.0 641.7,243.8 642.3,243.8 647.9,249.7" fill="#ff0000"/><polygon points="716.9,260.7 722.6,260.7 722.6,274.2 728.7,268.3 729.3,268.3 729.3,272.5 720.0,278.0 710.7,272.5 710.7,268.3 711.3,268.3 716.9,274.2" fill="#ff0000"/><polygon points="351.9,328.3 357.6,328.3 357.6,314.8 363.7,320.7 364.3,320.7 364.3,316.5 355.0,311.0 345.7,316.5 345.7,320.7 346.3,320.7 351.9,314.8" fill="#2e8b57"/><polygon points="430.9,362.3 436.6,362.3 436.6,348.8 442.7,354.7 443.3,354.7 443.3,350.5 434.0,345.0 424.7,350.5 424.7,354.7 425.3,354.7 430.9,348.8" fill="#2e8b57"/><polygon points="554.9,402.3 560.6,402.3 560.6,388.8 566.7,394.7 567.3,394.7 567.3,390.5 558.0,385.0 548.7,390.5 548.7,394.7 549.3,394.7 554.9,388.8" fill="#2e8b57"/><polygon points="638.9,315.3 644.6,315.3 644.6,301.8 650.7,307.7 651.3,307.7 651.3,303.5 642.0,298.0 632.7,303.5 632.7,307.7 633.3,307.7 638.9,301.8" fill="#2e8b57"/><polygon points="699.9,359.8 705.6,359.8 705.6,346.3 711.7,352.2 712.3,352.2 712.3,348.0 703.0,342.5 693.7,348.0 693.7,352.2 694.3,352.2 699.9,346.3" fill="#2e8b57"/><polygon points="794.9,427.3 800.6,427.3 800.6,413.8 806.7,419.7 807.3,419.7 807.3,415.5 798.0,410.0 788.7,415.5 788.7,419.7 789.3,419.7 794.9,413.8" fill="#2e8b57"/><line x1="806.5" y1="196" x2="806.5" y2="386" stroke="#000"/><rect x="283" y="521" width="672" height="2" fill="#a8c8f0"/><rect x="283" y="523" width="672" height="2" fill="#2050d8"/></svg>
<div class="t" style="left:286px;top:160.9px;font-size:9.2px;color:#000;">USDCHF,M5&nbsp; 1.1791 1.1792 1.1788 1.1790</div>
<div class="t" style="left:287px;top:182.3px;font-size:9.2px;color:#000;">Yesterday quotations:</div>
<div class="t" style="left:287px;top:193.7px;font-size:9.2px;color:#000;">H 1.1808</div>
<div class="t" style="left:287px;top:205.1px;font-size:9.2px;color:#000;">L 1.1712</div>
<div class="t" style="left:287px;top:216.5px;font-size:9.2px;color:#000;">C 1.1792</div>
<div class="t" style="left:751px;top:253.0px;font-size:9.6px;color:#0c5c0c;letter-spacing:0.1px">Resistance 1</div>
<div class="t" style="left:787px;top:287.0px;font-size:10.2px;color:#7c7c7c;">W_R2 1.1803</div>
<div class="t" style="left:781.5px;top:311.2px;font-size:10.2px;color:#7c7c7c;">M_Pivot 1.1799</div>
<div class="a" style="left:283px;top:158px;width:672px;height:371px;overflow:hidden"><div class="t" style="left:470px;top:368.4px;font-size:10px;color:#2030a0;font-weight:bold;">Pivot level</div><div class="t" style="left:545px;top:368.4px;font-size:10px;color:#8c8c8c;">D_Pivot 1.1774</div></div>
<svg width="1000" height="723"><line x1="955.5" y1="157" x2="955.5" y2="530" stroke="#000" stroke-width="1"/><line x1="956" y1="159.3" x2="959" y2="159.3" stroke="#000"/><line x1="956" y1="196.3" x2="959" y2="196.3" stroke="#000"/><line x1="956" y1="233.4" x2="959" y2="233.4" stroke="#000"/><line x1="956" y1="269.5" x2="959" y2="269.5" stroke="#000"/><line x1="956" y1="306.6" x2="959" y2="306.6" stroke="#000"/><line x1="956" y1="343.7" x2="959" y2="343.7" stroke="#000"/><line x1="956" y1="380.7" x2="959" y2="380.7" stroke="#000"/><line x1="956" y1="417.8" x2="959" y2="417.8" stroke="#000"/><line x1="956" y1="454.9" x2="959" y2="454.9" stroke="#000"/><line x1="956" y1="492.0" x2="959" y2="492.0" stroke="#000"/></svg>
<div class="t" style="left:961.5px;top:154.4px;font-size:9.2px;color:#000;letter-spacing:-0.1px">1.1820</div>
<div class="t" style="left:961.5px;top:191.4px;font-size:9.2px;color:#000;letter-spacing:-0.1px">1.1815</div>
<div class="t" style="left:961.5px;top:228.5px;font-size:9.2px;color:#000;letter-spacing:-0.1px">1.1810</div>
<div class="t" style="left:961.5px;top:264.6px;font-size:9.2px;color:#000;letter-spacing:-0.1px">1.1805</div>
<div class="t" style="left:961.5px;top:301.7px;font-size:9.2px;color:#000;letter-spacing:-0.1px">1.1800</div>
<div class="t" style="left:961.5px;top:338.8px;font-size:9.2px;color:#000;letter-spacing:-0.1px">1.1795</div>
<div class="t" style="left:961.5px;top:412.9px;font-size:9.2px;color:#000;letter-spacing:-0.1px">1.1785</div>
<div class="t" style="left:961.5px;top:450.0px;font-size:9.2px;color:#000;letter-spacing:-0.1px">1.1780</div>
<div class="t" style="left:961.5px;top:487.1px;font-size:9.2px;color:#000;letter-spacing:-0.1px">1.1775</div>
<div class="a" style="left:958px;top:246px;width:33px;height:11px;background:#006400"></div><div class="t" style="left:961.5px;top:246.5px;font-size:9.2px;color:#fff;letter-spacing:-0.1px">1.1807</div>
<div class="a" style="left:958px;top:281px;width:33px;height:11px;background:#ff0000"></div><div class="t" style="left:961.5px;top:281.5px;font-size:9.2px;color:#fff;letter-spacing:-0.1px">1.1803</div>
<div class="a" style="left:958px;top:305px;width:33px;height:11px;background:#add8e6"></div><div class="t" style="left:961.5px;top:305.5px;font-size:9.2px;color:#d8eef6;letter-spacing:-0.1px">1.1799</div>
<div class="a" style="left:958px;top:375px;width:33px;height:11px;background:#000"></div><div class="t" style="left:961.5px;top:375.5px;font-size:9.2px;color:#fff;letter-spacing:-0.1px">1.1790</div>
<div class="a" style="left:958px;top:517px;width:33px;height:11px;background:#0000ff"></div><div class="t" style="left:961.5px;top:517.5px;font-size:9.2px;color:#fff;letter-spacing:-0.1px">1.1771</div>
<svg width="1000" height="723"><path d="M284,542h4V576h-4zM288,539h4V576h-4zM292,538h4V576h-4zM296,537h4V576h-4zM300,537h4V576h-4zM304,537h4V576h-4zM308,539h4V576h-4zM312,547h4V576h-4zM316,552h4V576h-4zM320,555h4V576h-4zM324,557h4V576h-4zM328,558h4V576h-4zM332,559h4V576h-4zM336,560h4V576h-4zM340,565h4V576h-4zM344,573h4V576h-4zM348,570h4V576h-4zM352,566h4V576h-4zM356,565h4V576h-4zM360,563h4V576h-4zM364,563h4V576h-4zM368,562h4V576h-4zM372,562h4V576h-4zM376,565h4V576h-4zM380,571h4V576h-4zM384,575h4V576h-4zM388,576h4V579h-4zM392,576h4V585h-4zM396,576h4V588h-4zM400,576h4V591h-4zM404,576h4V593h-4zM408,576h4V596h-4zM412,576h4V596h-4zM416,576h4V596h-4zM420,576h4V596h-4zM424,576h4V593h-4zM428,576h4V589h-4zM432,576h4V587h-4zM436,576h4V585h-4zM440,576h4V580h-4zM444,576h4V576h-4zM448,572h4V576h-4zM452,572h4V576h-4zM456,572h4V576h-4zM460,572h4V576h-4zM464,573h4V576h-4zM468,573h4V576h-4zM472,573h4V576h-4zM476,573h4V576h-4zM480,574h4V576h-4zM484,576h4V576h-4zM488,576h4V580h-4zM492,576h4V585h-4zM496,576h4V589h-4zM500,576h4V590h-4zM504,576h4V592h-4zM508,576h4V594h-4zM512,576h4V596h-4zM516,576h4V596h-4zM520,576h4V597h-4zM524,576h4V598h-4zM528,576h4V599h-4zM532,576h4V599h-4zM536,576h4V598h-4zM540,576h4V598h-4zM544,576h4V597h-4zM548,576h4V597h-4zM552,576h4V593h-4zM556,576h4V590h-4zM560,576h4V586h-4zM564,576h4V582h-4zM568,576h4V578h-4zM572,573h4V576h-4zM576,568h4V576h-4zM580,563h4V576h-4zM584,558h4V576h-4zM588,553h4V576h-4zM592,548h4V576h-4zM596,544h4V576h-4zM600,543h4V576h-4zM604,542h4V576h-4zM608,540h4V576h-4zM612,540h4V576h-4zM616,541h4V576h-4zM620,541h4V576h-4zM624,542h4V576h-4zM628,545h4V576h-4zM632,547h4V576h-4zM636,549h4V576h-4zM640,553h4V576h-4zM644,557h4V576h-4zM648,562h4V576h-4zM652,567h4V576h-4zM656,572h4V576h-4zM660,576h4V577h-4zM664,576h4V578h-4zM668,576h4V579h-4zM672,576h4V581h-4zM676,576h4V582h-4zM680,576h4V587h-4zM684,576h4V592h-4zM688,576h4V592h-4zM692,576h4V589h-4zM696,576h4V585h-4zM700,576h4V585h-4zM704,567h4V576h-4zM708,568h4V576h-4zM712,570h4V576h-4zM716,573h4V576h-4zM720,576h4V577h-4zM724,576h4V579h-4zM728,576h4V579h-4zM732,576h4V579h-4zM736,576h4V578h-4zM740,576h4V577h-4zM744,576h4V592h-4zM748,576h4V612h-4zM752,576h4V616h-4zM756,576h4V616h-4zM760,576h4V615h-4zM764,576h4V612h-4zM768,576h4V609h-4zM772,576h4V606h-4zM776,576h4V606h-4zM780,576h4V606h-4zM784,576h4V606h-4zM788,576h4V606h-4zM792,576h4V602h-4zM796,576h4V597h-4zM800,576h4V594h-4zM804,576h4V592h-4zM808,576h4V590h-4zM812,576h4V588h-4zM816,576h4V587h-4z" fill="#008000"/><polyline points="289,541.2 291,540.7 293,540.2 295,539.7 297,539.3 299,538.9 301,538.6 303,538.5 305,538.6 307,539.0 309,539.6 311,540.4 313,541.6 315,543.0 317,544.6 319,546.3 321,548.1 323,549.8 325,551.5 327,553.1 329,554.5 331,555.7 333,556.9 335,558.0 337,559.1 339,560.2 341,561.3 343,562.4 345,563.5 347,564.5 349,565.4 351,566.1 353,566.5 355,566.6 357,566.5 359,566.2 361,565.7 363,565.2 365,564.7 367,564.3 369,563.9 371,563.8 373,563.8 375,564.1 377,564.6 379,565.4 381,566.5 383,567.8 385,569.4 387,571.2 389,573.2 391,575.2 393,577.3 395,579.3 397,581.4 399,583.3 401,585.1 403,586.8 405,588.4 407,589.7 409,591.0 411,592.0 413,592.8 415,593.5 417,593.9 419,594.2 421,594.3 423,594.1 425,593.8 427,593.2 429,592.5 431,591.5 433,590.4 435,589.2 437,587.9 439,586.4 441,584.9 443,583.4 445,581.8 447,580.3 449,578.8 451,577.5 453,576.2 455,575.2 457,574.4 459,573.7 461,573.2 463,572.9 465,572.7 467,572.6 469,572.6 471,572.6 473,572.7 475,572.9 477,573.1 479,573.4 481,573.8 483,574.3 485,575.0 487,575.9 489,576.9 491,578.2 493,579.6 495,581.1 497,582.6 499,584.2 501,585.7 503,587.1 505,588.4 507,589.6 509,590.7 511,591.7 513,592.6 515,593.4 517,594.1 519,594.8 521,595.4 523,595.9 525,596.4 527,596.8 529,597.2 531,597.5 533,597.7 535,597.9 537,598.0 539,598.0 541,598.0 543,597.9 545,597.6 547,597.3 549,596.8 551,596.2 553,595.5 555,594.5 557,593.5 559,592.2 561,590.8 563,589.2 565,587.5 567,585.7 569,583.8 571,581.7 573,579.6 575,577.4 577,575.1 579,572.8 581,570.4 583,568.0 585,565.6 587,563.1 589,560.7 591,558.4 593,556.1 595,553.9 597,551.9 599,550.0 601,548.3 603,546.7 605,545.4 607,544.3 609,543.4 611,542.6 613,542.0 615,541.6 617,541.4 619,541.3 621,541.3 623,541.5 625,541.8 627,542.3 629,542.9 631,543.6 633,544.4 635,545.4 637,546.5 639,547.8 641,549.2 643,550.7 645,552.4 647,554.2 649,556.1 651,558.1 653,560.2 655,562.4 657,564.5 659,566.6 661,568.6 663,570.6 665,572.4 667,574.0 669,575.5 671,576.9 673,578.2 675,579.4 677,580.6 679,581.7 681,582.9 683,584.0 685,585.1 687,586.1 689,586.9 691,587.5 693,587.7 695,587.6 697,587.0 699,586.0 701,584.7 703,583.1 705,581.3 707,579.4 709,577.5 711,575.9 713,574.6 715,573.7 717,573.2 719,573.1 721,573.4 723,573.9 725,574.6 727,575.4 729,576.2 731,576.9 733,577.6 735,578.3 737,579.2 739,580.2 741,581.5 743,583.3 745,585.6 747,588.4 749,591.7 751,595.2 753,598.8 755,602.3 757,605.4 759,607.9 761,609.8 763,611.1 765,611.8 767,611.9 769,611.6 771,611.1 773,610.4 775,609.6 777,608.8 779,608.1 781,607.4 783,606.8 785,606.3 787,605.8 789,605.3 791,604.6 793,603.9 795,603.0 797,601.9 799,600.7 801,599.4 803,598.1 805,596.7 807,595.3 809,594.1 811,592.9 813,591.8 815,590.8 817,589.9 819,589.2" fill="none" stroke="#ff2020" stroke-width="1.3" stroke-dasharray="3,2.5"/><line x1="283" y1="576" x2="955" y2="576" stroke="#800080" stroke-width="1.6"/><line x1="283" y1="641.5" x2="955" y2="641.5" stroke="#000" stroke-dasharray="5,3"/><line x1="283" y1="655.5" x2="955" y2="655.5" stroke="#000" stroke-dasharray="5,3"/><line x1="283" y1="670.5" x2="955" y2="670.5" stroke="#000" stroke-dasharray="5,3"/><line x1="283" y1="677.5" x2="955" y2="677.5" stroke="#000" stroke-dasharray="5,3"/><polyline points="283.6,628.0 310.6,628.0 323.0,639.0 334.0,649.5 337.6,660.0 343.0,671.0 346.5,673.0 352.0,664.0 362.7,662.0 368.0,658.0 377.0,647.7 382.5,653.0 384.3,649.5 391.5,656.7 398.7,664.0 406.0,674.7 407.7,677.0 431.0,677.0 438.0,667.5 445.5,656.7 452.6,649.5 458.0,646.0 463.5,628.0 481.4,628.0 486.8,642.0 492.0,655.0 499.4,662.0 506.6,673.0 513.8,677.0 553.4,677.0 557.0,671.0 564.0,656.7 571.4,647.7 578.6,638.7 585.8,628.0 630.7,628.0 636.0,635.0 640.0,631.5 647.0,628.0 654.4,649.5 661.6,658.5 668.8,664.0 674.0,677.0 690.0,677.0 694.0,671.0 699.4,671.0 704.7,658.5 712.0,653.0 717.3,645.9 724.5,636.9 730.0,644.0 735.0,644.0 744.0,660.0 751.5,665.7 758.7,664.0 767.7,677.0 794.7,677.0 798.0,667.5 803.7,669.3 809.0,665.7 812.6,654.9 818.0,651.0" fill="none" stroke="#2e8b57" stroke-width="1"/><line x1="283.6" y1="680" x2="283.6" y2="684" stroke="#000"/><line x1="345.0" y1="680" x2="345.0" y2="684" stroke="#000"/><line x1="407.0" y1="680" x2="407.0" y2="684" stroke="#000"/><line x1="469.0" y1="680" x2="469.0" y2="684" stroke="#000"/><line x1="531.0" y1="680" x2="531.0" y2="684" stroke="#000"/><line x1="593.0" y1="680" x2="593.0" y2="684" stroke="#000"/><line x1="655.0" y1="680" x2="655.0" y2="684" stroke="#000"/><line x1="717.3" y1="680" x2="717.3" y2="684" stroke="#000"/><line x1="779.6" y1="680" x2="779.6" y2="684" stroke="#000"/><rect x="958" y="572" width="5" height="10" fill="#800080"/></svg>
<div class="t" style="left:286px;top:537.9px;font-size:9px;color:#000;">MACD(5,35,5) -0.00020 -0.00030</div>
<div class="t" style="left:286.5px;top:630.3px;font-size:8.8px;color:#000;">Laguerre 0.5213</div>
<div class="t" style="left:960px;top:533.2px;font-size:9.2px;color:#000;">0.00088</div>
<div class="t" style="left:960px;top:571.9px;font-size:9.2px;color:#000;">0.00</div>
<div class="t" style="left:958px;top:610.9px;font-size:9.2px;color:#000;">-0.00091</div>
<div class="t" style="left:959px;top:626.2px;font-size:9.2px;color:#000;">1.05</div>
<div class="t" style="left:959px;top:636.2px;font-size:9.2px;color:#000;">0.75</div>
<div class="t" style="left:959px;top:650.7px;font-size:9.2px;color:#000;">0.45</div>
<div class="t" style="left:959px;top:664.7px;font-size:9.2px;color:#000;">0.15</div>
<div class="t" style="left:959px;top:670.7px;font-size:9.2px;color:#000;">0.05</div>
<div class="t" style="left:959px;top:672.7px;font-size:9.2px;color:#000;">0.00</div>
<div class="t" style="left:282.1px;top:685.4px;font-size:9px;color:#000;letter-spacing:-0.1px">3 Oct 2007</div>
<div class="t" style="left:343.5px;top:685.4px;font-size:9px;color:#000;letter-spacing:-0.1px">3 Oct 22:05</div>
<div class="t" style="left:405.5px;top:685.4px;font-size:9px;color:#000;letter-spacing:-0.1px">3 Oct 23:30</div>
<div class="t" style="left:467.5px;top:685.4px;font-size:9px;color:#000;letter-spacing:-0.1px">4 Oct 00:50</div>
<div class="t" style="left:529.5px;top:685.4px;font-size:9px;color:#000;letter-spacing:-0.1px">4 Oct 02:10</div>
<div class="t" style="left:591.5px;top:685.4px;font-size:9px;color:#000;letter-spacing:-0.1px">4 Oct 03:30</div>
<div class="t" style="left:653.5px;top:685.4px;font-size:9px;color:#000;letter-spacing:-0.1px">4 Oct 04:50</div>
<div class="t" style="left:715.8px;top:685.4px;font-size:9px;color:#000;letter-spacing:-0.1px">4 Oct 06:10</div>
<div class="t" style="left:778.1px;top:685.4px;font-size:9px;color:#000;letter-spacing:-0.1px">4 Oct 07:30</div>
<div class="a" style="left:4px;top:698px;width:992px;height:21px;background:#ece9d8;border-top:1px solid #fff"></div>
<div class="t" style="left:5px;top:704.4px;font-size:10.4px;color:#000;">For Help, press F1</div>
<div class="a" style="left:298px;top:701px;width:1px;height:16px;background:#c8c4b0;border-right:1px solid #fff;width:2px"></div>
<div class="a" style="left:404px;top:701px;width:1px;height:16px;background:#c8c4b0;border-right:1px solid #fff;width:2px"></div>
<div class="a" style="left:501px;top:701px;width:1px;height:16px;background:#c8c4b0;border-right:1px solid #fff;width:2px"></div>
<div class="a" style="left:571px;top:701px;width:1px;height:16px;background:#c8c4b0;border-right:1px solid #fff;width:2px"></div>
<div class="a" style="left:706.5px;top:701px;width:1px;height:16px;background:#c8c4b0;border-right:1px solid #fff;width:2px"></div>
<div class="a" style="left:775px;top:701px;width:1px;height:16px;background:#c8c4b0;border-right:1px solid #fff;width:2px"></div>
<div class="a" style="left:840px;top:701px;width:1px;height:16px;background:#c8c4b0;border-right:1px solid #fff;width:2px"></div>
<div class="t" style="left:303px;top:704.0px;font-size:10.8px;color:#000;letter-spacing:-0.1px">Default</div>
<div class="t" style="left:408px;top:704.0px;font-size:10.8px;color:#000;letter-spacing:-0.1px">2007.10.04 04:25</div>
<div class="t" style="left:507px;top:704.0px;font-size:10.8px;color:#000;letter-spacing:-0.1px">O: 1.1805</div>
<div class="t" style="left:575px;top:704.0px;font-size:10.8px;color:#000;letter-spacing:-0.1px">H: 1.1806</div>
<div class="t" style="left:644px;top:704.0px;font-size:10.8px;color:#000;letter-spacing:-0.1px">L: 1.1800</div>
<div class="t" style="left:712px;top:704.0px;font-size:10.8px;color:#000;letter-spacing:-0.1px">C: 1.1800</div>
<div class="t" style="left:780px;top:704.0px;font-size:10.8px;color:#000;letter-spacing:-0.1px">V: 32</div>
<div class="t" style="left:893px;top:704.0px;font-size:10.8px;color:#000;letter-spacing:-0.1px">215/1 kb</div>
<svg width="1000" height="723"><rect x="845.5" y="705" width="1.8" height="9.0" fill="#2a6a10"/><rect x="845.5" y="714.0" width="1.8" height="2.0" fill="#c83020"/><rect x="848.4" y="705" width="1.8" height="7.8" fill="#2a6a10"/><rect x="848.4" y="712.8" width="1.8" height="3.2" fill="#c83020"/><rect x="851.3" y="705" width="1.8" height="6.5" fill="#2a6a10"/><rect x="851.3" y="711.5" width="1.8" height="4.5" fill="#c83020"/><rect x="854.2" y="705" width="1.8" height="5.2" fill="#2a6a10"/><rect x="854.2" y="710.2" width="1.8" height="5.8" fill="#c83020"/><rect x="857.1" y="705" width="1.8" height="4.0" fill="#2a6a10"/><rect x="857.1" y="709.0" width="1.8" height="7.0" fill="#c83020"/><rect x="860.0" y="705" width="1.8" height="2.8" fill="#2a6a10"/><rect x="860.0" y="707.8" width="1.8" height="8.2" fill="#c83020"/><rect x="862.9" y="705" width="1.8" height="1.5" fill="#2a6a10"/><rect x="862.9" y="706.5" width="1.8" height="9.5" fill="#c83020"/><rect x="865.8" y="705" width="1.8" height="0.2" fill="#2a6a10"/><rect x="865.8" y="705.2" width="1.8" height="10.8" fill="#c83020"/><path d="M982,718 l14,-14 M986,718 l10,-10 M990,718 l6,-6" stroke="#8a8878" stroke-width="1.3"/><path d="M983,718 l13,-13 M987,718 l9,-9 M991,718 l5,-5" stroke="#fff" stroke-width="0.8"/></svg>
<div class="a" style="left:4px;top:719px;width:992px;height:4px;background:#2a6ee6;border-top:1px solid #0c3aa8"></div>
<div class="a" style="left:871px;top:719px;width:125px;height:4px;background:#14a4ee;border-top:1px solid #0c3aa8"></div>
<div class="a" style="left:4px;top:719px;width:90px;height:4px;background:#3a9a3a;border-top:1px solid #2a7a2a"></div>
<div class="a" style="left:10px;top:720px;width:60px;height:3px;background:#a8b8a0"></div>
</body></html>
